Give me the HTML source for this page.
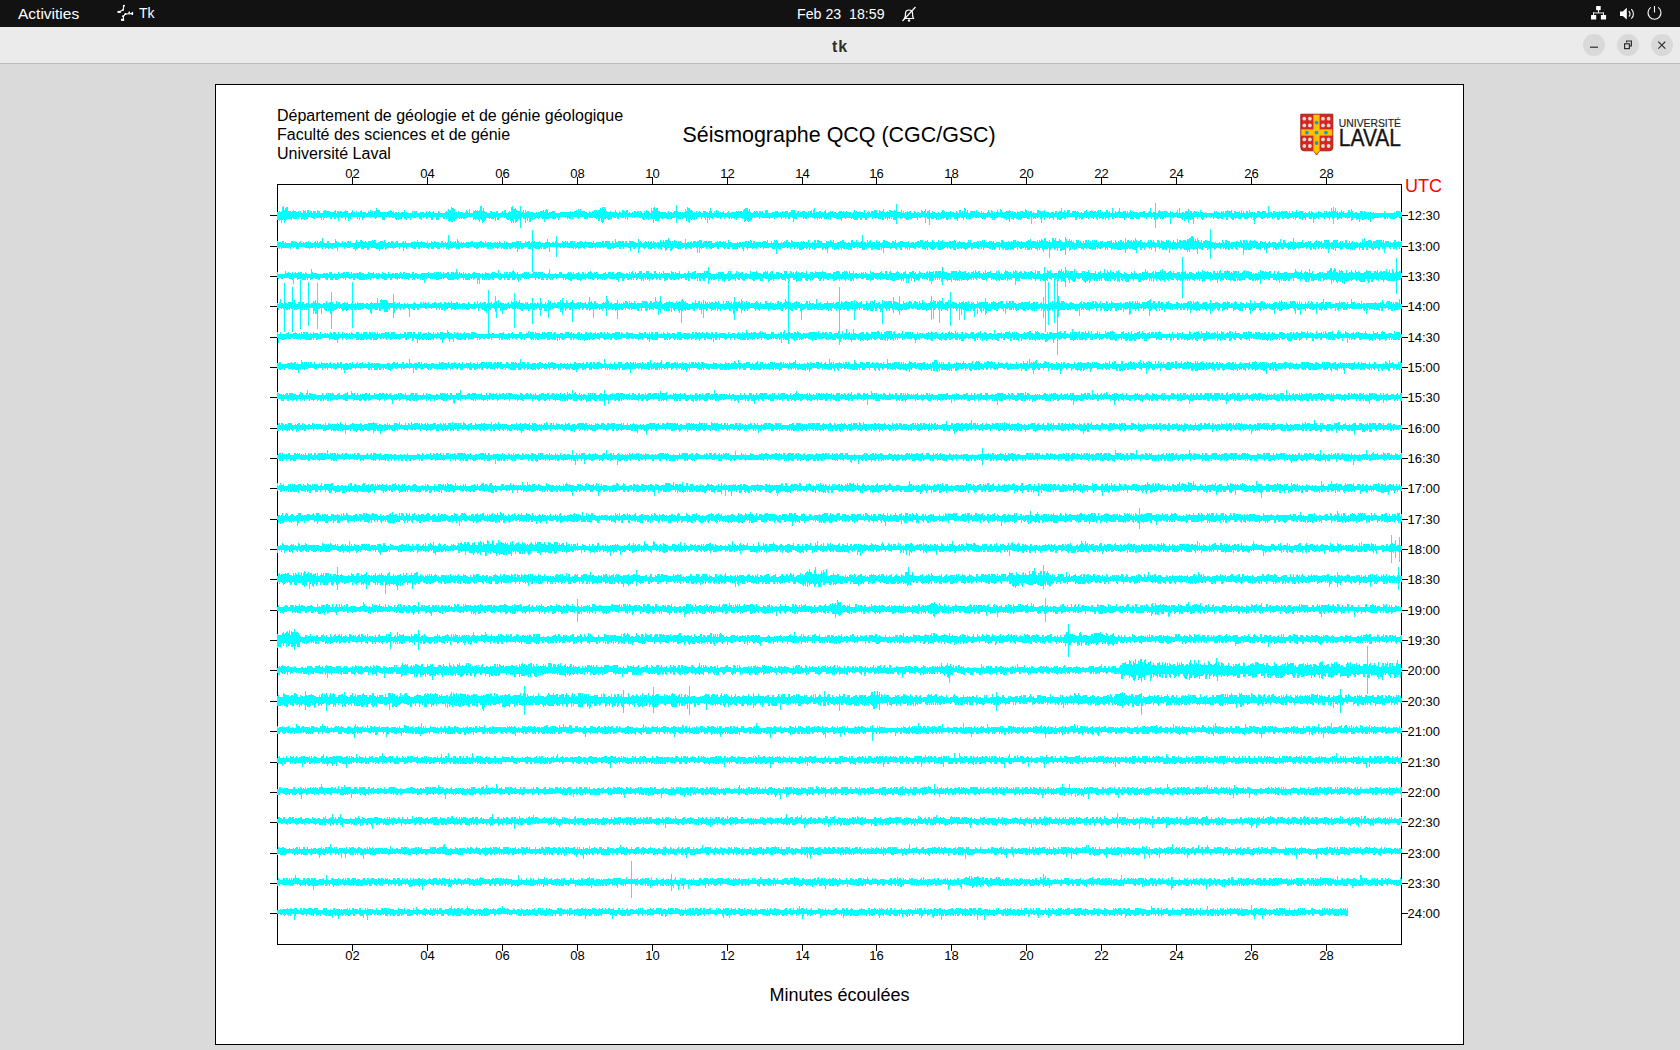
<!DOCTYPE html>
<html><head><meta charset="utf-8">
<style>
html,body{margin:0;padding:0;width:1680px;height:1050px;overflow:hidden;background:#dadada;font-family:"Liberation Sans",sans-serif;}
#topbar{position:absolute;left:0;top:0;width:1680px;height:27px;background:#121212;color:#fff;}
#titlebar{position:absolute;left:0;top:27px;width:1680px;height:36px;background:#ebebeb;border-bottom:1px solid #bdbdbd;}
.t{position:absolute;white-space:pre;line-height:1;}
#canvas{position:absolute;left:215px;top:84px;width:1247px;height:959px;border:1px solid #000;background:#fff;}
svg{position:absolute;left:0;top:0;}
</style></head><body>
<div id="topbar">
  <div class="t" style="left:18px;top:6px;font-size:15.5px;color:#fff">Activities</div>
  <svg style="left:112px;top:2px" width="26" height="22" viewBox="0 0 26 22">
    <g fill="#fff">
      <rect x="10.9" y="2.9" width="1.9" height="1.8"/>
      <rect x="5.5" y="8.9" width="3.3" height="2"/>
      <rect x="19.7" y="9.9" width="1.4" height="3.1"/>
      <circle cx="17.2" cy="10.4" r="0.9"/>
      <circle cx="11.1" cy="7.9" r="0.9"/>
      <circle cx="13.4" cy="12" r="1"/>
      <rect x="10.1" y="13.4" width="1.6" height="1.7"/>
      <rect x="9" y="16.8" width="3.2" height="2.1"/>
    </g>
    <g stroke="#fff" stroke-width="1.1" fill="none">
      <path d="M11.7 4.4L11.1 7.9L7.5 9.8"/>
      <path d="M13.4 12L20.2 11.6"/>
      <path d="M13.4 12L11.4 14.3V17.5"/>
    </g>
  </svg>
  <div class="t" style="left:139px;top:6px;font-size:14px;color:#fff">Tk</div>
  <div class="t" style="left:797px;top:7px;font-size:14.2px;color:#fff">Feb 23  18:59</div>
  <svg style="left:900px;top:5px" width="18" height="18" viewBox="0 0 18 18">
    <g stroke="#fff" stroke-width="1.2" fill="none">
      <path d="M4.5 13.5c1-1.5 1-3 1-5 0-2 1.5-3.5 3.5-3.5s3.5 1.5 3.5 3.5c0 2 0 3.5 1 5z"/>
      <path d="M2.5 16L15.5 2"/>
    </g>
    <circle cx="9" cy="15.5" r="1.2" fill="#fff"/>
  </svg>
  <svg style="left:1588px;top:4px" width="80" height="20" viewBox="0 0 80 20">
    <g fill="#fff">
      <rect x="8.1" y="2" width="4.6" height="4.2" rx="0.6"/>
      <rect x="3" y="11" width="5.2" height="4.6" rx="0.6"/>
      <rect x="12.9" y="11" width="5.2" height="4.6" rx="0.6"/>
      <rect x="10" y="6" width="0.9" height="3"/>
      <rect x="5" y="8.5" width="10.9" height="0.9"/>
      <rect x="5" y="8.5" width="0.9" height="3"/>
      <rect x="15" y="8.5" width="0.9" height="3"/>
      <path d="M32 7.5h2.8l4-3.7v11.8l-4-3.7h-2.8z"/>
    </g>
    <g stroke="#fff" fill="none" stroke-width="1.1">
      <path d="M40.8 7.3a3.3 3.3 0 0 1 0 5.2"/>
      <path d="M43.3 5.2a6.3 6.3 0 0 1 0 9.4"/>
      <path d="M70.2 3.4A6.5 6.5 0 1 1 62.8 3.4"/>
      <path d="M66.5 2v6.5"/>
    </g>
  </svg>
</div>
<div id="titlebar">
  <div class="t" style="left:832px;top:12px;font-size:16px;font-weight:bold;letter-spacing:1px;color:#2e2e2e">tk</div>
  <div style="position:absolute;left:1583px;top:7px;width:22px;height:22px;border-radius:50%;background:#d9d9d9"></div>
  <div style="position:absolute;left:1617px;top:7px;width:22px;height:22px;border-radius:50%;background:#d9d9d9"></div>
  <div style="position:absolute;left:1651px;top:7px;width:22px;height:22px;border-radius:50%;background:#d9d9d9"></div>
  <svg style="left:1583px;top:7px" width="90" height="22" viewBox="0 0 90 22">
    <g stroke="#2e2e2e" fill="none" stroke-width="1.2">
      <path d="M7 13.2h8"/>
      <rect x="41.6" y="9.8" width="4.8" height="4.8"/>
      <path d="M43.6 8.4v-1.4h4.8v4.8h-1.4"/>
      <path d="M75.3 7.6l7 7M82.3 7.6l-7 7"/>
    </g>
  </svg>
</div>
<div id="canvas"></div>
<svg width="1680" height="1050" viewBox="0 0 1680 1050" style="left:0;top:0">
<path fill="#000" shape-rendering="crispEdges" d="M277,184h1125v1h-1125zM277,184h1V945h-1zM1401,184h1V944h-1zM277,944h1125v1h-1125z"/>
<g stroke="#000" stroke-width="1" fill="none" shape-rendering="crispEdges">
<path d="M352.5,184v-7M352.5,944v7M427.5,184v-7M427.5,944v7M502.5,184v-7M502.5,944v7M577.5,184v-7M577.5,944v7M652.5,184v-7M652.5,944v7M727.5,184v-7M727.5,944v7M802.5,184v-7M802.5,944v7M876.5,184v-7M876.5,944v7M951.5,184v-7M951.5,944v7M1026.5,184v-7M1026.5,944v7M1101.5,184v-7M1101.5,944v7M1176.5,184v-7M1176.5,944v7M1251.5,184v-7M1251.5,944v7M1326.5,184v-7M1326.5,944v7M277,215.5h-7M1401,215.5h7M277,246.5h-7M1401,246.5h7M277,276.5h-7M1401,276.5h7M277,306.5h-7M1401,306.5h7M277,337.5h-7M1401,337.5h7M277,367.5h-7M1401,367.5h7M277,397.5h-7M1401,397.5h7M277,428.5h-7M1401,428.5h7M277,458.5h-7M1401,458.5h7M277,488.5h-7M1401,488.5h7M277,519.5h-7M1401,519.5h7M277,549.5h-7M1401,549.5h7M277,579.5h-7M1401,579.5h7M277,610.5h-7M1401,610.5h7M277,640.5h-7M1401,640.5h7M277,670.5h-7M1401,670.5h7M277,701.5h-7M1401,701.5h7M277,731.5h-7M1401,731.5h7M277,762.5h-7M1401,762.5h7M277,792.5h-7M1401,792.5h7M277,822.5h-7M1401,822.5h7M277,853.5h-7M1401,853.5h7M277,883.5h-7M1401,883.5h7M277,913.5h-7M1401,913.5h7"/>
</g>
<g fill="#00ffff" shape-rendering="crispEdges">
<path d="M277,212h2v-1h1v1h1v-1h1v-4h1v-1h1v4h1v-2h1v-1h2v4h3v1h1v-1h1v-1h1v1h2v1h2v-1h1v2h1v-2h1v2h2v-3h1v1h1v-1h1v3h1v-3h2v3h1v-2h2v2h1v-2h3v2h1v-3h1v1h2v2h3v-2h1v-1h2v1h4v1h4v-1h1v-1h1v3h1v-2h2v1h1v-1h2v1h2v-1h1v-1h1v1h2v2h3v-1h1v-2h1v2h2v1h1v-2h1v2h1v-1h1v1h1v-2h1v-1h1v2h4v1h2v-2h1v1h1v-2h1v2h1v-1h1v2h1v-2h2v-3h1v2h3v2h8v-1h2v-1h1v1h1v1h1v-1h1v2h1v-1h2v1h1v-1h1v1h2v-1h3v-2h1v3h1v-1h1v1h5v-2h1v2h1v-2h1v1h1v-1h1v2h3v-1h4v1h2v-2h1v2h1v-1h1v-1h1v1h1v1h1v-1h1v-1h1v2h4v-2h1v1h1v1h5v-1h1v-1h1v1h1v-3h1v2h1v-1h1v-3h1v1h2v1h1v3h2v1h1v-2h1v1h4v1h2v-1h1v-2h1v1h1v2h1v-4h1v4h3v-2h2v-1h1v1h1v-1h1v1h1v-1h1v-4h2v5h1v-3h1v3h1v1h2v1h3v-2h2v1h3v1h1v-2h2v2h3v-1h1v-1h1v2h1v-3h2v3h2v-1h1v-1h1v1h1v-5h1v-1h1v3h2v-1h1v2h1v1h4v2h1v-1h1v-2h1v3h1v-3h1v2h1v-1h2v1h4v1h3v-1h1v1h1v-1h2v-1h3v-1h1v2h1v-2h1v-1h1v1h1v3h1v-1h3v-1h3v2h5v-1h10v-1h1v1h3v-1h2v-1h1v3h1v-4h1v2h1v-2h1v2h4v1h2v1h2v-2h1v1h1v1h1v-2h1v1h1v-2h3v2h1v-2h2v-2h1v1h1v-2h1v2h1v-2h1v2h1v2h1v1h3v-1h1v1h4v-2h1v2h1v1h2v-2h1v1h1v1h1v-3h2v1h1v1h1v-2h2v3h1v-1h1v1h2v-1h1v1h1v-2h2v1h1v-1h2v2h1v-2h1v1h1v1h2v-2h1v1h1v-2h1v1h2v1h1v1h1v-5h1v3h1v-3h1v-1h1v2h1v-1h2v3h2v1h6v1h1v-1h1v-1h1v2h1v-1h2v1h1v-1h1v-1h4v1h3v1h1v-1h1v1h1v-1h1v-3h1v2h1v-4h1v1h2v2h2v1h1v2h1v-1h1v1h1v-2h1v2h1v-1h1v-1h1v1h1v1h2v-2h3v1h2v1h1v-2h1v-3h1v3h1v2h2v-2h1v2h1v-3h1v1h2v2h1v-1h1v1h1v-1h1v-1h1v2h3v-1h1v-1h1v2h2v-1h5v-1h1v1h1v-1h1v1h1v-1h2v1h1v-2h1v-1h1v-1h3v3h1v-2h1v3h1v1h2v-1h1v-1h1v1h1v-1h2v2h1v-2h2v1h1v-1h1v2h2v-3h3v3h4v-1h3v-1h3v1h1v1h1v-1h1v1h1v-2h1v1h2v-1h3v2h1v-1h2v-2h4v2h1v1h1v-2h2v2h1v-1h2v-1h3v1h2v1h1v-2h1v2h1v-2h1v-1h1v3h1v-3h1v-2h1v5h1v-1h3v-1h2v2h1v-1h1v1h1v-2h1v-1h1v3h2v-1h2v-1h1v1h1v-1h1v2h1v-1h2v1h2v-1h1v-1h3v1h1v-1h1v1h2v-1h1v1h4v1h2v-1h1v-2h1v2h1v-1h1v1h2v-1h1v1h3v1h1v-3h1v3h2v-1h1v-1h1v1h1v1h1v-2h2v1h1v-2h3v3h2v-3h1v1h1v1h1v-1h1v-2h1v3h1v1h1v-1h1v-1h1v1h1v-2h2v1h3v-1h1v1h1v2h1v-1h4v-2h1v3h1v-2h1v2h1v-1h2v-1h1v1h1v-1h2v2h3v-2h1v1h1v1h1v-1h2v1h2v-3h1v1h1v1h1v-1h1v-2h1v4h1v-2h2v-1h1v3h2v-2h1v1h2v1h3v-1h1v1h2v-1h1v-2h2v1h1v2h1v-1h4v-1h1v1h3v1h2v-2h1v1h1v1h1v-3h2v3h1v-2h1v2h1v-5h1v1h1v3h1v-2h1v3h2v-2h5v1h1v-2h1v2h3v1h1v-2h1v2h1v-1h1v1h3v-1h1v-2h1v2h1v1h1v-3h1v1h1v2h1v-1h1v1h1v-1h1v-2h1v2h1v1h1v-4h1v1h1v2h1v1h1v-1h2v-1h3v-1h1v1h1v2h1v-2h1v2h1v-1h2v1h1v-2h1v1h2v-1h3v1h2v-3h1v1h1v3h1v-2h1v1h1v-1h2v2h1v-1h1v1h3v-3h2v1h2v1h1v-1h1v1h1v-2h1v2h4v1h2v-1h3v1h1v-2h2v2h1v-1h1v-1h2v-3h1v4h2v-2h1v3h1v-1h1v-2h3v3h2v-2h4v1h1v-1h1v1h1v1h2v-1h1v1h2v-2h2v-1h1v2h2v-1h2v-1h1v1h1v1h1v-1h2v1h1v-1h1v-1h1v3h1v-3h1v3h1v-1h1v1h1v-1h2v-2h2v2h1v-1h1v2h2v-5h1v5h2v-2h1v1h2v-1h1v-3h1v4h3v-1h3v2h1v-2h1v2h1v-1h1v-2h1v2h1v-1h1v1h5v1h1v-1h4v-1h2v2h3v-1h1v-1h1v-3h1v4h1v1h1v-1h3v1h2v-2h1v-1h1v1h1v1h1v-1h1v2h1v-2h3v1h1v1h2v-2h1v1h2v1h3v-1h1v-2h1v3h1v-5h1v5h2v-1h2v1h1v-2h3v-2h1v4h1v-2h2v2h2v-2h1v1h1v-1h1v2h1v-1h1v1h1v-3h1v2h2v1h2v-1h1v1h8v-2h1v1h1v-1h1v2h1v-1h1v1h2v-2h1v1h1v-1h1v2h1v-2h2v-1h1v1h3v-1h1v3h2v-2h2v1h3v-1h1v2h1v-3h1v3h1v-2h1v2h2v-2h2v2h1v-3h1v2h3v1h4v-2h3v1h2v-1h4v2h2v-1h4v1h1v-2h2v2h1v-1h3v-1h1v1h1v-1h2v1h1v-1h1v1h1v-1h1v1h1v1h1v-2h1v2h2v-2h1v2h1v-1h2v-2h1v2h2v-1h4v2h2v-1h1v1h2v-1h1v-1h1v2h1v-2h1v1h1v1h3v-1h1v1h1v-2h1v1h3v1h2v-2h1v2h1v-2h1v2h1v-1h1v-1h1v1h1v-4h1v3h1v-4h1v4h1v-3h1v4h1v-1h1v2h1v-1h2v-2h1v2h1v-1h1v2h3v-1h1v-2h2v2h1v-3h1v2h1v2h2v-1h2v1h3v-2h3v2h1v-2h1v1h2v1h1v-1h1v1h1v-1h2v1h1v-1h1v1h10v-2h1v2h9v-1h1v1h1v-2h4v1h2v5h-1v2h-1v-1h-1v-1h-2v1h-2v1h-5v-1h-1v-1h-1v2h-1v-2h-1v2h-2v-2h-3v1h-1v-1h-1v1h-5v1h-2v-1h-1v4h-1v-4h-1v2h-1v-2h-1v1h-3v1h-2v-3h-1v2h-1v3h-1v-3h-2v1h-1v-2h-3v2h-1v1h-1v-4h-1v1h-2v1h-1v-1h-2v-1h-3v2h-1v-1h-2v1h-1v1h-1v-3h-2v1h-1v6h-1v-5h-1v-2h-2v3h-1v-2h-2v-1h-2v2h-1v-2h-1v1h-1v-1h-3v2h-1v-1h-2v1h-2v4h-1v-6h-1v2h-3v-2h-3v3h-1v-2h-2v2h-1v-3h-1v2h-2v-2h-1v1h-2v2h-1v-3h-1v2h-1v-2h-1v1h-3v1h-2v-1h-3v1h-2v-1h-1v-1h-1v2h-1v1h-2v-3h-2v1h-1v-1h-1v2h-1v-2h-2v1h-2v1h-1v-2h-1v1h-3v1h-2v-1h-1v-1h-2v1h-2v1h-1v-2h-1v3h-1v-3h-1v2h-1v-2h-2v1h-1v1h-4v-2h-2v1h-1v1h-3v-1h-2v1h-1v-1h-1v2h-2v-1h-1v-1h-1v-1h-2v3h-2v-3h-3v2h-2v-1h-2v1h-2v-1h-1v-1h-1v1h-1v1h-1v-2h-2v1h-1v-1h-3v1h-1v-1h-2v2h-1v1h-1v-1h-1v-2h-3v2h-1v-2h-3v2h-2v-1h-1v2h-1v-1h-1v4h-1v-4h-3v2h-1v-4h-1v3h-1v-1h-1v-1h-4v-1h-3v1h-2v-1h-1v7h-1v-7h-4v1h-1v-1h-1v2h-2v-1h-1v1h-1v-2h-2v2h-2v-1h-1v2h-1v-3h-2v2h-1v-2h-4v2h-1v-2h-1v1h-1v-1h-4v2h-4v-1h-1v-1h-1v2h-4v-2h-1v1h-1v-1h-1v1h-2v2h-1v-2h-5v-1h-1v1h-3v-1h-1v2h-2v-2h-3v3h-1v-2h-2v2h-1v-3h-1v2h-2v-1h-2v1h-1v-2h-1v3h-1v-1h-1v-2h-2v2h-1v-1h-2v-1h-1v1h-1v1h-1v-2h-1v1h-2v-1h-1v1h-1v1h-1v1h-1v-2h-1v1h-1v-2h-1v1h-1v2h-2v-3h-7v1h-1v-1h-1v2h-2v-1h-2v1h-1v1h-2v-1h-1v1h-1v-3h-3v3h-1v-2h-3v1h-1v-2h-1v1h-1v-1h-2v3h-1v-3h-1v1h-1v5h-1v-4h-1v-2h-2v1h-1v-1h-1v2h-1v-1h-1v1h-1v-2h-1v7h-1v-7h-1v2h-3v-1h-5v1h-1v1h-1v-1h-1v1h-1v-1h-2v-1h-2v2h-1v-1h-2v-2h-1v5h-1v-3h-1v-2h-1v3h-1v-2h-1v1h-1v-1h-3v-1h-3v1h-3v2h-1v-2h-1v2h-1v-2h-2v-1h-2v1h-1v-1h-1v2h-2v-1h-1v1h-1v-1h-1v-1h-2v1h-1v-1h-1v1h-2v-1h-1v1h-3v1h-3v-2h-1v2h-1v-2h-2v3h-1v-2h-2v-1h-1v1h-2v3h-1v-2h-3v-2h-3v2h-1v-2h-1v2h-1v1h-2v-3h-1v1h-1v1h-1v-1h-1v1h-2v-2h-1v3h-1v-3h-1v3h-1v-2h-2v1h-3v-1h-1v-1h-1v2h-2v-2h-1v6h-1v-5h-1v-1h-3v1h-2v-1h-1v3h-1v-2h-5v1h-2v-1h-1v2h-3v-1h-1v-1h-1v-1h-1v1h-2v1h-1v-2h-1v1h-3v2h-3v-3h-1v2h-1v-2h-1v2h-1v-1h-1v2h-1v-2h-1v1h-1v-2h-1v3h-2v-3h-1v2h-3v-1h-2v1h-1v-1h-1v-1h-1v2h-1v-2h-3v1h-2v2h-2v-2h-3v2h-2v-2h-2v2h-4v-1h-1v-1h-1v1h-1v-1h-5v1h-1v-1h-3v3h-1v-2h-1v-1h-1v1h-3v-1h-3v-1h-2v3h-1v-3h-1v2h-1v-1h-1v1h-3v-2h-2v2h-1v-1h-1v1h-1v-1h-1v2h-1v-2h-2v1h-1v-1h-2v-1h-3v1h-1v-1h-1v2h-2v-1h-1v1h-1v-2h-6v2h-3v3h-1v-4h-1v-1h-2v2h-2v-2h-2v2h-1v-2h-1v1h-1v-1h-1v2h-1v-2h-3v1h-2v-1h-1v2h-1v-2h-1v1h-3v1h-1v-1h-8v-1h-1v2h-1v-2h-3v1h-2v-1h-1v1h-1v2h-1v1h-2v1h-1v-1h-1v-1h-1v1h-1v1h-1v-4h-1v1h-1v-1h-2v-1h-1v1h-2v2h-1v-3h-1v2h-1v-1h-2v1h-1v-2h-1v2h-1v-1h-1v-1h-3v2h-1v-2h-2v1h-1v1h-1v-2h-1v1h-3v-1h-2v1h-1v1h-1v-1h-2v2h-1v-2h-1v5h-1v-6h-1v3h-1v-2h-1v-1h-2v2h-1v-2h-3v1h-1v1h-1v-2h-1v3h-2v-1h-1v1h-1v-1h-1v4h-1v-1h-1v-4h-1v3h-1v-3h-3v1h-1v-1h-1v1h-3v-1h-2v-1h-1v1h-3v1h-2v-2h-1v2h-3v-1h-3v1h-2v-1h-1v1h-1v2h-4v-2h-1v4h-1v-4h-1v-1h-1v1h-1v-2h-1v3h-1v-2h-1v1h-1v-2h-1v3h-2v-1h-1v-2h-1v1h-2v-1h-4v1h-1v-1h-1v1h-1v-1h-4v3h-1v-3h-1v2h-1v-2h-1v1h-3v-1h-2v2h-2v-2h-1v1h-3v-1h-1v2h-2v1h-2v-1h-1v-1h-1v1h-2v3h-1v1h-1v-1h-1v-4h-1v3h-2v-3h-1v1h-1v-1h-2v-1h-1v1h-4v-1h-1v2h-4v-2h-4v1h-1v1h-1v-1h-1v-1h-4v2h-1v-2h-1v2h-2v-1h-1v1h-1v-2h-1v1h-1v-1h-5v1h-1v2h-1v-2h-1v-1h-1v2h-4v-1h-3v1h-4v3h-1v-3h-2v-1h-1v-1h-1v1h-1v1h-1v-1h-3v1h-1v-2h-1v3h-1v-1h-1v3h-2v-4h-1v3h-1v-3h-1v5h-1v-4h-2v-2h-1v1h-1v1h-1v-1h-1v1h-1v2h-1v1h-1v1h-1v-4h-1v4h-1v-2h-1v2h-1v-2h-1v-2h-1v1h-2v-1h-1v-2h-1v1h-1v-1h-3v1h-2v2h-2v-3h-1v4h-1v-3h-1v1h-3v-1h-1v1h-1v-1h-3v2h-1v1h-1v1h-1v1h-1v-3h-1v-1h-1v3h-1v-2h-1v-1h-2v1h-1v-1h-1v1h-1v-3h-5v1h-3v1h-2v-1h-1v1h-1v-1h-1v1h-1v-1h-2v1h-2v2h-2v1h-2v-1h-1v1h-1v-1h-1v-3h-1v1h-1v-2h-1v2h-2v-2h-4v3h-3v-3h-3v3h-2v-2h-1v-1h-2v1h-1v1h-1v-2h-2v1h-1v-1h-1v3h-1v-1h-2v-2h-3v1h-4v-1h-1v3h-1v-2h-3v2h-1v-1h-2v-2h-2v2h-3v1h-1v-1h-1v1h-1v-1h-1v-2h-1v1h-2v-1h-2v1h-1v-1h-4v3h-3v-3h-5v1h-1v1h-1v-1h-1v-1h-3v1h-1v-1h-5v1h-2v2h-1v-3h-2v3h-1v-3h-1v2h-1v-2h-6v2h-1v-1h-1v3h-1v-3h-1v-1h-1v3h-1v-3h-2v1h-2v-1h-2v4h-1v-3h-1v-1h-1v2h-2v-2h-2v2h-2v-2h-3v1h-1v-1h-1v1h-1v2h-1v-3h-1v3h-1v-2h-1v-1h-1v1h-3v-1h-1v2h-2v-1h-2v-1h-3v2h-2v-2h-1v3h-1v-1h-2v1h-1v-3h-2v2h-1v-2h-1v2h-4v-1h-1v2h-1v-1h-4v1h-1v1h-1v2h-1v-4h-1v1h-1v3h-1v-3h-1v1h-1v-1h-2z"/>
<path d="M277,241h1v1h3v1h1v-2h2v2h1v-1h1v1h5v-2h2v1h1v-1h1v1h2v1h2v-1h1v-1h1v2h2v-1h1v1h1v-1h3v-1h1v2h1v-1h1v1h3v-1h1v-1h1v2h1v-2h1v2h1v-1h1v-1h2v-3h1v4h1v1h3v-2h2v2h6v-4h1v2h1v2h1v-1h1v1h3v-2h1v2h1v-1h2v1h1v-2h2v1h1v-1h1v2h4v-1h1v-2h1v2h3v-2h2v1h1v1h2v-1h1v1h1v1h1v-2h4v-1h1v1h1v-1h2v3h2v-1h2v-1h3v1h1v-2h1v2h1v1h2v-1h2v1h1v-2h2v1h1v1h1v-1h1v-1h2v2h4v-1h1v-1h1v2h1v-2h1v2h5v-1h3v-1h1v1h2v-2h1v2h3v-1h1v1h3v1h2v-2h1v2h3v-2h1v1h1v1h1v-2h1v1h4v1h2v-2h2v2h2v-1h1v1h1v-1h2v1h1v-2h1v2h1v-1h1v1h1v-1h1v-1h1v2h1v-4h1v2h1v2h2v-1h1v1h1v-1h1v1h2v-1h3v1h1v-1h1v-1h2v2h1v-1h1v1h1v-1h1v1h1v-1h2v-1h2v1h2v1h1v-2h1v2h1v-1h2v1h1v-1h1v1h3v-1h2v1h1v-1h1v1h1v-2h1v1h1v1h3v-2h1v2h1v-1h2v1h4v-1h4v-1h3v2h1v-2h1v2h4v-2h1v1h2v-1h2v2h1v-1h3v-1h1v1h4v-1h1v1h1v1h4v-1h2v-3h1v3h2v1h2v-1h2v1h1v-2h1v-2h1v3h1v1h4v-2h1v1h2v-1h1v1h1v-1h1v2h2v-2h3v2h1v-2h1v2h2v-1h3v-1h2v1h1v1h1v-1h1v-1h1v1h6v1h1v-2h1v2h2v-1h5v1h1v-2h2v2h1v-2h5v2h2v-2h1v2h2v-4h1v3h2v-1h3v1h1v-1h2v2h1v-2h2v2h2v-2h5v1h2v1h2v-1h2v-1h1v1h1v1h2v-1h1v-1h1v1h1v1h1v-2h1v2h1v-1h1v-1h1v2h1v-2h1v1h2v1h1v-1h2v1h1v-3h1v1h1v1h1v-2h1v2h1v-2h3v-2h1v2h1v1h1v2h1v-2h1v2h1v-3h1v1h2v2h1v-2h1v1h1v-1h1v1h1v1h3v-4h1v4h1v-1h2v1h1v-1h1v-1h1v2h1v-2h3v1h1v-1h2v-1h3v3h1v-1h1v-1h3v1h1v-1h4v2h3v-1h2v-1h1v1h1v-1h2v1h2v-1h1v1h1v-1h1v2h2v-3h1v2h3v1h5v-1h1v1h1v-1h2v1h1v-1h3v-1h2v2h1v-2h1v1h1v-2h1v1h1v2h1v-2h2v2h1v-1h5v1h1v-1h1v-1h3v1h1v-2h1v3h3v-2h1v2h1v-1h1v-2h1v1h1v2h1v-2h1v2h3v-1h1v1h1v-1h1v-1h1v1h1v-2h2v2h2v1h1v-3h1v1h1v1h6v1h1v-1h1v-1h1v1h1v-1h1v1h1v1h1v-1h2v-2h1v3h3v-1h1v1h1v-3h2v3h1v-3h2v1h3v2h4v-2h1v1h1v-1h1v1h1v-2h1v1h1v1h1v-2h1v3h3v-1h3v-1h2v-1h2v2h2v1h2v-1h1v1h2v-3h2v2h3v-2h1v2h4v-1h2v2h1v-1h2v1h1v-3h1v2h1v-1h1v-1h1v3h1v-1h3v1h1v-3h1v2h2v-1h1v2h2v-1h1v-2h2v1h3v1h2v1h2v-2h2v1h1v-2h1v3h2v-1h2v-1h3v1h5v-1h1v2h2v-1h3v1h1v-1h2v-1h2v1h1v-2h3v3h1v-1h1v-1h2v-1h1v2h1v1h1v-1h2v-2h1v1h1v1h1v1h1v-1h2v-2h1v3h1v-2h2v-1h1v2h6v-1h2v1h1v-1h2v-1h1v1h1v2h1v-1h2v-1h1v1h5v1h2v-1h1v-2h1v2h1v-2h1v3h2v-1h4v-1h2v2h1v-2h1v1h1v-2h1v2h1v-2h1v3h1v-1h1v1h1v-1h1v-1h3v1h1v-1h1v2h2v-1h4v1h1v-3h2v1h1v1h4v-1h1v1h2v-1h1v1h1v-2h3v2h1v-1h2v1h2v-1h1v1h3v1h1v-2h2v-1h1v1h1v-2h1v3h1v-1h4v1h1v-2h1v2h1v-2h1v1h1v-2h1v1h1v1h1v-3h2v3h2v1h4v-4h2v2h1v-2h1v3h3v-2h1v1h1v1h1v1h4v-3h1v2h2v-2h1v2h1v-1h1v2h1v-1h1v2h2v-3h3v3h1v-2h1v1h1v1h1v-2h1v2h1v-3h2v2h1v-2h1v3h1v-2h1v2h1v-3h1v3h1v-3h1v1h1v-1h1v3h1v-1h1v1h1v-2h1v1h1v-1h1v2h1v-1h3v-1h4v-1h1v3h1v-1h1v1h1v-3h1v2h1v1h1v-2h1v1h1v-2h2v2h1v-1h1v2h1v-5h1v4h1v-2h2v1h2v-1h1v2h1v-2h1v1h1v-3h1v2h1v3h1v-2h2v-1h2v2h1v1h1v-1h1v1h2v-1h1v-2h1v2h1v-2h2v2h1v-2h1v2h1v1h2v-3h2v1h1v2h1v-3h1v1h2v1h2v-2h1v1h1v-1h1v3h1v-2h1v2h1v-1h1v-2h1v2h2v1h1v-4h1v3h1v-2h2v1h2v-1h3v1h1v-2h2v-1h2v-2h2v1h1v4h1v-2h1v2h1v-3h1v2h1v2h2v-2h1v3h1v-2h2v-1h2v1h3v2h1v-1h3v1h1v-1h1v1h3v-1h1v1h2v-3h1v2h1v1h1v-3h2v1h3v2h1v-1h5v-1h2v1h2v-2h1v1h1v2h1v-1h1v-2h1v3h1v-3h1v1h1v2h1v-2h1v-1h1v1h3v-1h1v1h2v1h1v1h2v-2h2v1h3v-1h1v2h2v-1h1v-1h1v2h2v-1h4v1h2v-1h2v-3h1v4h2v-3h2v2h1v1h2v-1h1v1h1v-2h1v1h2v-4h1v4h2v1h1v-1h5v-2h1v3h2v-1h3v-1h1v1h1v-1h1v2h3v-1h1v-1h1v-1h1v2h1v-1h2v1h1v-1h1v2h2v-3h5v2h1v1h1v-1h2v-2h5v3h1v-1h1v-1h1v2h1v-2h1v2h2v-3h2v3h2v-2h1v2h1v-1h1v-1h1v2h1v-1h1v1h1v-1h1v1h3v-1h1v1h1v-4h1v4h1v-5h1v4h1v-1h2v-1h3v1h1v2h1v-2h3v-1h6v2h1v-2h1v3h1v-2h4v2h1v-1h1v1h2v-1h1v-2h2v2h2v-1h1v1h2v-1h1v7h-1v-1h-1v2h-1v-2h-2v3h-1v-2h-1v1h-2v-2h-2v2h-1v-1h-1v-1h-3v2h-1v4h-1v-5h-1v1h-1v-2h-2v3h-2v-2h-2v1h-1v-1h-1v2h-2v-1h-1v-1h-2v-1h-1v3h-2v-3h-2v3h-2v-2h-2v2h-1v-3h-1v1h-3v2h-1v-3h-1v3h-1v-1h-1v1h-1v-2h-1v1h-3v-1h-1v-1h-2v2h-2v1h-1v-2h-4v3h-1v-3h-1v2h-1v-1h-2v-2h-1v2h-1v4h-1v-5h-1v1h-2v-2h-1v2h-1v-1h-1v1h-1v-2h-1v1h-1v1h-1v-2h-2v3h-1v-1h-2v-2h-1v3h-2v-2h-1v-1h-1v1h-1v1h-1v-2h-2v1h-5v1h-1v-1h-2v1h-2v1h-1v-1h-1v-2h-1v2h-2v1h-1v-2h-2v-1h-2v2h-3v-2h-2v2h-1v-2h-1v3h-2v-2h-1v2h-1v-3h-3v1h-2v1h-1v4h-1v-6h-1v3h-1v-3h-1v1h-1v-1h-1v3h-1v-1h-4v-2h-1v1h-2v-1h-1v2h-1v1h-3v-2h-1v2h-4v-2h-2v-1h-1v1h-1v-1h-1v3h-2v-1h-1v-2h-2v2h-2v-1h-1v2h-2v-3h-1v2h-1v1h-1v-2h-1v1h-1v-2h-1v1h-1v1h-1v-1h-2v-1h-1v1h-1v1h-1v1h-1v-2h-2v-1h-2v1h-1v1h-1v1h-1v-2h-2v-1h-2v3h-2v-1h-2v-1h-1v6h-1v-5h-1v-1h-1v1h-1v1h-1v-1h-3v3h-1v-2h-1v2h-1v-2h-3v-1h-1v-1h-1v1h-1v1h-1v-2h-2v1h-1v1h-1v-1h-3v1h-1v-2h-1v1h-1v4h-1v-5h-1v-1h-1v3h-2v-1h-1v1h-2v-2h-2v1h-1v-2h-3v5h-1v-4h-1v-1h-2v3h-1v-2h-1v1h-1v-1h-1v-1h-2v1h-1v2h-1v-2h-2v2h-2v-3h-2v1h-1v5h-1v-3h-3v-1h-1v-1h-1v1h-2v-1h-1v1h-2v4h-1v-4h-3v1h-5v-1h-3v-1h-1v1h-1v1h-1v-2h-2v-1h-1v3h-1v-2h-1v2h-1v-3h-2v1h-2v1h-2v-1h-1v1h-1v-2h-1v3h-1v-1h-1v1h-2v-1h-3v-1h-2v1h-1v-1h-2v2h-1v-1h-2v-1h-3v-1h-1v2h-2v1h-1v-2h-1v1h-1v-2h-1v3h-1v1h-1v-4h-1v1h-1v-1h-1v4h-1v-1h-3v1h-2v-3h-2v3h-1v-3h-1v1h-1v1h-1v-2h-3v2h-2v-2h-1v1h-4v3h-1v-2h-1v-2h-2v2h-1v-2h-1v3h-1v-2h-2v-1h-3v2h-1v-2h-1v2h-3v-2h-1v2h-1v-3h-1v1h-2v1h-2v-1h-1v-1h-1v3h-1v-3h-1v1h-2v2h-1v-1h-2v1h-1v-3h-1v3h-4v-2h-1v2h-1v-1h-1v-1h-1v-1h-1v3h-1v-3h-3v2h-1v1h-1v-1h-1v1h-1v-3h-1v2h-2v-1h-3v-1h-1v1h-1v2h-1v-3h-1v2h-1v-2h-2v2h-2v-1h-4v1h-1v1h-1v-3h-1v1h-2v1h-2v1h-1v-1h-2v-1h-1v1h-1v-1h-2v1h-2v-2h-1v3h-3v-2h-2v1h-1v-1h-1v-1h-1v2h-1v-2h-2v1h-1v1h-2v1h-4v-1h-1v-2h-1v1h-1v1h-1v1h-2v-1h-2v-1h-1v-1h-1v3h-1v-2h-1v2h-1v-1h-3v-2h-2v1h-2v-1h-2v2h-2v-1h-4v2h-1v-3h-1v3h-1v-2h-1v1h-1v-2h-3v3h-2v-2h-1v-1h-2v3h-1v-1h-1v-1h-4v1h-1v-1h-6v5h-1v-5h-1v2h-1v-3h-1v3h-3v-1h-3v-2h-1v3h-2v-2h-1v-1h-1v1h-1v-1h-1v2h-1v-2h-1v3h-2v-2h-4v-1h-1v2h-1v-2h-2v1h-2v-1h-1v3h-2v-2h-1v2h-1v-1h-2v-2h-1v2h-2v-1h-1v2h-1v-2h-1v-1h-1v3h-1v-1h-2v1h-2v-3h-1v2h-1v-2h-3v1h-1v5h-1v-4h-1v1h-1v-2h-1v1h-1v1h-1v-3h-1v1h-5v1h-1v1h-1v-3h-1v2h-1v-2h-1v1h-1v2h-1v-3h-1v1h-1v1h-1v-1h-2v1h-2v1h-3v-2h-1v1h-1v-2h-1v1h-1v1h-1v-2h-3v2h-1v-2h-1v1h-2v-1h-2v1h-3v-1h-1v3h-1v-1h-2v-1h-1v-1h-2v2h-3v-1h-1v-1h-2v1h-5v1h-1v-2h-2v1h-1v-1h-2v1h-1v1h-1v-1h-3v1h-1v-1h-4v2h-1v-2h-1v-1h-2v4h-1v-2h-1v-2h-2v1h-1v-1h-1v2h-6v-2h-2v2h-3v-2h-1v1h-1v1h-1v-1h-1v-1h-4v2h-2v-2h-3v1h-2v1h-2v-1h-1v-1h-1v1h-1v1h-1v-2h-2v1h-2v1h-1v-1h-1v5h-1v-6h-1v6h-1v-5h-1v-1h-2v1h-1v-1h-1v2h-2v-1h-2v-1h-1v2h-1v1h-1v-3h-1v1h-2v-1h-1v2h-4v-1h-2v-1h-1v1h-1v1h-1v2h-2v-3h-3v2h-1v1h-1v-3h-1v-1h-2v3h-1v-1h-1v-1h-1v1h-1v-1h-1v-1h-2v2h-1v-1h-2v1h-2v-1h-1v1h-1v-2h-2v1h-1v1h-1v-1h-1v-1h-3v2h-1v-1h-1v-1h-2v1h-1v1h-2v-2h-2v4h-1v-3h-2v-1h-4v2h-1v-2h-2v2h-2v-2h-3v1h-2v1h-1v-1h-2v1h-4v-2h-3v1h-1v-1h-2v1h-2v-1h-1v1h-1v-1h-1v2h-1v-2h-2v1h-5v-1h-3v2h-1v-1h-1v-1h-1v1h-3v1h-1v-2h-1v1h-1v1h-1v-2h-1v2h-1v-1h-6v-1h-2v1h-2v-1h-2v1h-1v-1h-2v1h-1v1h-1v-2h-6v5h-1v-5h-1v1h-2v1h-3v-2h-1v2h-1v-1h-1v1h-5v-1h-1v-1h-1v2h-1v-2h-1v2h-3v-2h-4v1h-1v1h-2v-2h-1v2h-2v3h-1v-4h-1v1h-1v-2h-2v1h-2v1h-2v-2h-1v2h-2v-1h-1v1h-2v-1h-1v1h-1v-2h-2v1h-1v1h-1v-1h-2v-1h-1v1h-1v1h-1v-2h-1v2h-1v-2h-1v2h-2v-2h-3v1h-1v-1h-1v1h-1v-1h-2v1h-1v1h-2v-1h-2v-1h-5v1h-3v-1h-3v1h-2v-1h-1v2h-2v-1h-1v1h-1v-2h-1v1h-1v-1h-1v1h-1v1h-1v-1h-4v1h-1v-2h-2v2h-1v-2h-1v1h-1v-1h-1v2h-3v-1h-1v-1h-2v2h-3v-2h-2v2h-1v-1h-2v-1h-1v1h-2v-1h-1v1h-1v-1h-1v2h-2v-2h-2v2h-3v-1h-2v-1h-4v2h-1v-2h-1v1h-1v3h-1v-4h-3v2h-1v-2h-3v1h-2v1h-1v-1h-3v-1h-1v1h-2v1h-1v1h-1v-3h-1v1h-1v1h-3v2h-1v-2h-3v-1h-5v-1h-1v1h-1v2h-2v-2h-3v1h-3v-2h-1v1h-2v1h-2v2h-1v-2h-2v-2h-3v1h-3v-1h-2v2h-1v-2h-6v4h-1v-3h-3v-1h-1v2h-2v-1h-2v1h-1v-1h-2v1h-1v-2h-2v2h-1v-1h-1v-1h-1v1h-3v-1h-1v2h-1v-2h-2v1h-3v1h-1v-1h-4v-1h-6v2h-3v-2h-2v1h-1v-1h-2v2h-1v-2h-1v1h-7v1h-1v-2h-1v2h-1v-1h-2z"/>
<path d="M277,272h1v2h7v-3h1v2h2v-1h1v1h2v1h1v-2h1v2h1v-1h1v-1h1v1h2v-1h1v1h1v-1h2v2h1v-1h1v1h1v-2h1v1h1v1h4v-5h1v3h1v1h4v1h6v-1h2v1h1v-1h2v1h1v-2h3v2h2v-1h1v1h3v-2h1v2h2v-1h2v-1h2v2h1v-2h3v2h2v-2h1v2h1v-1h2v1h1v-1h3v-1h2v2h1v-1h2v1h4v-2h1v1h4v-1h1v2h2v-1h1v1h1v-1h1v1h3v-2h1v1h3v1h2v-2h1v2h3v-1h2v1h1v-1h3v1h1v-1h1v-1h1v1h1v1h1v-2h2v2h1v-1h4v1h2v-2h2v2h1v-1h2v1h4v-1h7v-1h1v2h1v-1h4v-1h1v2h1v-2h3v1h1v-1h1v1h1v1h1v-2h1v1h3v-1h2v2h2v-2h3v1h1v-1h1v-3h1v3h1v2h1v-2h1v1h2v1h1v-2h1v2h1v-1h1v1h2v-1h2v1h2v-1h1v-1h2v1h5v1h2v-1h1v1h2v-2h1v1h3v1h2v-1h1v-1h3v1h3v-3h1v4h1v-1h1v1h3v-2h1v2h1v-2h2v2h1v-2h2v1h1v-2h1v-1h1v2h1v1h1v1h1v-2h1v2h4v-1h2v-1h3v1h1v-1h1v2h3v-1h1v-1h4v1h1v-1h5v2h1v-1h1v1h3v-1h1v-4h1v5h5v-1h1v1h3v-2h3v2h5v-1h1v-1h1v1h1v-1h1v1h1v1h1v-2h1v2h2v-1h2v-1h1v1h1v1h2v-2h2v2h1v-1h1v1h1v-1h1v-1h2v-1h1v1h1v1h1v1h1v-2h1v1h1v-1h2v2h5v-1h2v-1h1v2h2v-2h3v1h1v-1h2v2h2v-1h1v-1h4v1h2v1h3v-1h2v1h1v-2h1v2h1v-2h1v-1h1v2h1v1h1v-2h1v2h1v-1h2v-2h3v3h1v-1h2v1h1v-3h3v3h1v-1h2v1h2v-3h2v2h1v1h2v-2h1v2h1v-1h1v1h1v-3h1v2h6v1h1v-3h1v1h2v2h1v-2h1v1h3v-2h1v3h4v-1h2v1h1v-1h1v-2h1v2h3v-1h2v-1h2v3h1v-1h7v-2h1v2h1v-2h2v2h3v1h5v-1h1v1h1v-2h6v2h3v-1h1v-2h1v2h1v-2h1v2h1v1h3v-1h1v-2h1v3h1v-2h1v2h1v-1h1v-1h2v2h2v-1h2v1h3v-3h1v3h1v-2h4v-1h1v1h1v1h3v1h2v-2h2v-1h1v1h1v-1h1v3h1v-1h1v-1h1v-1h2v3h3v-2h3v1h3v1h2v-3h3v3h2v-1h1v-2h1v1h1v1h1v-1h1v2h1v-2h1v-1h1v2h1v-1h1v1h2v-1h2v1h3v-2h1v3h3v-2h3v1h2v-2h1v1h6v-1h1v1h3v1h1v1h1v-1h3v1h2v-2h3v-1h3v1h1v2h2v-2h2v-1h1v1h1v-1h1v1h1v2h1v-3h1v2h3v-2h1v3h1v-1h2v1h2v-1h1v1h1v-2h1v1h1v-1h1v2h1v-2h1v1h1v1h3v-3h1v2h1v-1h2v1h6v-1h1v-1h1v2h2v1h1v-3h2v3h2v-2h1v-1h1v2h5v-1h1v-1h1v1h1v1h1v1h1v-1h1v1h1v-2h2v-1h1v3h3v-2h3v-1h2v2h1v-1h1v2h2v-1h1v-2h1v1h1v1h4v1h1v-2h1v-1h1v2h1v-2h1v1h3v-1h1v3h1v-3h2v1h1v-1h3v2h1v1h1v-3h1v1h3v1h4v-2h6v2h1v-1h1v-2h1v1h1v1h3v-1h2v2h2v-1h1v1h1v1h1v-2h2v-1h1v2h1v-3h1v2h1v1h1v-2h2v2h2v1h1v-2h1v1h1v-3h1v3h1v-1h3v-1h1v2h5v-2h1v3h1v-4h1v2h1v2h1v-1h1v1h2v-2h1v-2h1v1h2v1h1v2h1v-2h1v2h2v-3h1v1h1v1h1v-2h1v2h2v-1h1v-1h1v1h1v1h2v-2h1v1h2v2h1v-2h1v1h1v-2h2v1h1v1h2v-3h1v4h1v-3h3v3h3v-1h4v-3h1v1h1v1h1v-2h1v3h2v1h1v-1h4v-2h1v-1h1v1h1v-2h1v3h1v-1h1v2h1v1h1v-4h1v3h1v-2h1v2h1v-2h3v3h1v-5h1v4h1v-2h1v2h5v-2h1v2h1v-2h1v2h1v-1h2v-2h1v2h1v1h5v-2h1v3h2v-2h1v1h1v-2h1v3h1v-1h2v-4h1v4h2v-3h1v2h1v1h1v-3h1v3h1v-1h2v1h2v-2h1v1h1v-2h1v2h1v1h2v1h2v-2h1v1h2v1h4v-2h1v1h1v1h1v-3h1v2h2v1h2v-1h2v1h1v-2h3v-3h1v3h1v-1h1v2h4v-1h1v-1h1v3h1v-3h1v1h4v-2h1v2h1v-3h1v4h1v-2h2v2h2v-1h1v-1h2v1h1v1h1v-2h1v2h3v-1h3v2h1v-2h1v-2h1v2h2v-1h1v3h1v-1h1v1h1v-2h3v1h2v1h2v-2h1v1h1v-2h1v2h1v-1h1v2h1v-4h1v3h1v-2h1v1h2v-1h1v1h1v1h1v-1h1v1h1v1h1v-3h2v2h2v-2h1v2h1v-2h1v-1h1v3h3v-2h3v-1h1v1h2v2h1v-1h1v1h1v-2h4v3h1v-3h1v3h1v-1h2v-1h1v-1h1v-1h1v2h1v-1h3v1h3v2h1v-1h1v1h1v-1h2v1h1v-2h1v2h1v-4h1v2h1v-1h2v1h1v-1h1v1h3v-1h2v3h2v-1h1v-2h1v3h2v-2h1v-1h1v2h5v-1h3v1h7v-1h1v-3h1v2h1v1h2v1h1v-1h1v-2h1v3h1v1h1v-2h1v-1h1v1h2v1h1v-4h1v4h2v-2h1v3h4v-1h2v-1h2v2h1v-2h1v2h1v-1h3v-2h2v-1h1v-2h2v4h1v-2h1v-2h1v1h1v3h2v1h1v-3h1v1h1v-1h1v1h1v2h3v-3h1v3h2v-1h2v-2h1v2h1v1h2v-3h1v2h2v-1h1v1h1v1h4v-1h2v-2h1v1h4v2h3v-2h2v1h1v-2h1v3h1v-1h1v-1h2v1h1v-1h2v1h1v-3h1v4h1v-1h1v-2h1v3h2v-4h1v2h1v2h1v-1h1v-1h1v1h2v-1h2v2h1v5h-1v2h-5v-1h-1v2h-8v-1h-1v-1h-1v1h-1v2h-1v-2h-2v-1h-2v2h-1v-1h-2v-1h-2v1h-1v2h-2v-3h-1v3h-1v1h-1v-2h-1v-2h-2v3h-5v-1h-1v-1h-2v1h-1v-1h-1v-1h-2v1h-1v1h-1v-1h-2v1h-2v1h-1v-1h-1v3h-1v-5h-1v4h-1v-3h-1v2h-1v-2h-1v1h-1v2h-1v-1h-1v-2h-2v2h-1v-2h-1v4h-1v-4h-1v-1h-3v1h-1v-1h-1v1h-1v1h-1v-3h-2v3h-1v-1h-1v1h-1v-3h-1v2h-3v1h-3v-3h-1v2h-1v2h-1v-3h-1v3h-2v-2h-1v-2h-1v1h-2v2h-1v-2h-3v-1h-3v3h-1v-3h-1v1h-2v2h-2v-2h-1v1h-1v1h-3v-2h-1v2h-1v-2h-1v4h-1v-3h-1v-1h-1v2h-1v-1h-3v-2h-3v2h-2v-1h-2v-1h-1v2h-1v-1h-3v5h-1v-5h-1v1h-1v1h-1v-1h-1v1h-1v-2h-1v2h-2v-2h-1v1h-2v-1h-1v-1h-3v2h-4v1h-2v-1h-1v1h-1v-3h-1v3h-3v-1h-2v1h-1v-1h-2v-2h-1v2h-1v-1h-1v-1h-1v2h-3v1h-1v-3h-1v1h-1v4h-1v-3h-2v-1h-1v1h-2v-2h-1v3h-1v-2h-5v2h-2v1h-1v-3h-2v2h-1v-2h-1v1h-1v-1h-2v2h-1v-1h-2v-2h-1v1h-1v2h-1v-2h-1v2h-1v-2h-1v1h-1v-1h-1v1h-1v4h-1v-4h-1v1h-1v-1h-2v1h-1v-1h-1v-1h-1v-1h-1v2h-3v-1h-2v2h-1v-1h-1v-1h-2v3h-1v-2h-2v-1h-1v2h-1v-1h-1v-1h-2v2h-1v-3h-1v1h-1v3h-1v-4h-1v3h-1v-2h-1v2h-1v-3h-1v1h-1v1h-1v-1h-1v1h-1v1h-1v-1h-2v2h-3v-3h-4v2h-1v-2h-1v-1h-1v1h-2v3h-3v-1h-1v-2h-2v2h-1v-1h-1v-2h-1v4h-1v-1h-1v1h-1v-4h-1v2h-1v1h-1v-2h-3v2h-1v-2h-1v2h-4v-1h-1v-2h-2v3h-1v-2h-1v2h-1v-2h-1v2h-2v-2h-1v2h-1v-1h-1v-1h-2v2h-1v2h-1v-3h-1v1h-2v2h-1v-1h-1v-1h-1v-1h-1v-2h-2v1h-3v-1h-1v3h-1v1h-2v-1h-1v-1h-1v-1h-1v4h-1v-3h-1v-2h-3v4h-1v-1h-2v1h-1v-3h-1v-1h-1v3h-1v-3h-1v1h-1v1h-2v-2h-2v2h-1v-1h-2v-1h-1v3h-1v-1h-1v-2h-1v3h-2v-1h-1v-1h-1v2h-1v-2h-4v2h-1v-2h-2v-1h-1v2h-1v-1h-3v-1h-1v1h-6v-1h-1v3h-2v-2h-1v2h-1v-3h-4v2h-1v-1h-1v1h-1v-1h-1v2h-1v-3h-1v2h-1v-1h-1v1h-3v-1h-1v2h-1v-1h-2v1h-1v-1h-1v-1h-1v1h-1v-1h-1v1h-1v-2h-3v1h-1v2h-1v-2h-1v1h-3v-1h-1v-1h-1v1h-1v-1h-2v2h-1v-1h-1v-1h-1v2h-1v-2h-1v2h-1v-1h-2v1h-1v1h-1v-1h-1v-2h-1v2h-3v1h-1v-2h-1v2h-1v-1h-1v1h-1v-1h-1v1h-1v-1h-2v-2h-1v4h-1v-2h-3v1h-1v-1h-1v-1h-3v2h-1v1h-1v-4h-1v2h-1v-2h-1v2h-1v-2h-1v2h-1v-2h-1v2h-1v1h-1v3h-1v-3h-2v-3h-1v2h-1v-1h-3v-1h-1v1h-1v-1h-2v2h-1v1h-1v-1h-2v-1h-1v3h-1v-3h-1v-1h-1v3h-1v-3h-1v1h-1v4h-1v-4h-1v4h-1v-5h-2v3h-1v-2h-1v2h-1v-2h-1v-1h-1v2h-4v1h-3v-1h-2v-2h-1v2h-3v-1h-4v-1h-1v2h-1v-1h-2v1h-1v-1h-2v-1h-1v2h-3v1h-1v-2h-1v1h-3v-2h-2v1h-3v-1h-3v1h-2v-1h-2v3h-1v-2h-1v2h-2v-3h-1v2h-1v-1h-2v2h-1v-1h-1v-2h-1v1h-1v1h-1v-1h-1v2h-1v-2h-2v1h-2v1h-2v-2h-1v-1h-1v1h-1v-1h-1v2h-2v-1h-1v-1h-1v1h-1v2h-1v-3h-1v1h-1v2h-2v-2h-1v-1h-4v1h-1v1h-1v-2h-1v3h-1v-2h-2v2h-2v-1h-1v-2h-3v2h-1v1h-4v1h-1v-3h-1v1h-2v-2h-3v3h-1v-2h-2v-1h-1v3h-1v-1h-3v-1h-1v-1h-1v1h-2v-1h-1v1h-3v2h-1v-2h-1v1h-2v1h-1v1h-1v-3h-3v-1h-2v3h-3v-2h-3v1h-1v-1h-1v2h-2v-1h-1v-1h-3v-1h-1v1h-3v2h-2v-1h-1v-1h-1v-1h-1v2h-2v-1h-1v-1h-1v3h-1v-2h-4v1h-1v1h-2v-2h-2v1h-1v2h-1v-2h-1v1h-1v-3h-1v1h-2v2h-1v-3h-1v1h-2v1h-2v-1h-1v1h-1v-1h-1v1h-1v-2h-4v3h-2v-2h-1v-1h-1v3h-2v-3h-1v3h-1v-3h-1v1h-5v-1h-1v3h-2v-3h-1v2h-2v-2h-3v1h-1v-1h-1v1h-1v1h-1v-1h-2v1h-3v-1h-1v1h-2v-1h-1v-1h-1v2h-2v1h-2v-3h-3v2h-2v-2h-1v1h-1v1h-1v-2h-2v1h-1v1h-1v-2h-1v1h-1v2h-1v-2h-1v1h-1v-2h-1v2h-1v-2h-1v3h-1v-2h-1v2h-1v-2h-2v-1h-1v1h-1v1h-1v-2h-2v2h-1v-2h-1v2h-1v-1h-2v1h-2v-2h-2v1h-1v2h-2v-3h-3v4h-1v-2h-2v-2h-1v1h-6v-1h-2v1h-1v1h-2v-2h-1v2h-1v-1h-2v-1h-1v1h-1v1h-1v-2h-2v1h-1v1h-2v-1h-4v-1h-2v2h-1v-1h-3v1h-1v1h-1v-1h-3v-1h-1v-1h-1v1h-3v2h-2v-1h-2v-1h-2v1h-1v-2h-1v2h-1v-2h-6v1h-1v-1h-2v1h-1v1h-1v-2h-1v2h-1v-1h-1v-1h-1v2h-2v-2h-2v2h-3v-2h-1v1h-2v-1h-2v2h-1v-2h-6v1h-3v-1h-1v1h-1v-1h-3v2h-1v-1h-1v3h-1v-2h-1v-2h-1v1h-1v1h-3v-2h-2v2h-3v-2h-2v2h-1v-2h-2v1h-1v1h-2v-1h-1v-1h-4v2h-2v-2h-1v1h-1v1h-2v-2h-1v2h-1v-2h-1v2h-1v-2h-1v2h-1v-2h-2v6h-1v-4h-1v4h-1v-6h-2v1h-1v1h-1v-2h-1v1h-1v-1h-1v2h-5v-2h-1v2h-1v-2h-4v1h-1v1h-1v-1h-3v1h-6v-1h-1v-1h-3v1h-1v-1h-1v1h-3v1h-3v-1h-2v-1h-1v1h-1v-1h-1v1h-1v-1h-3v1h-1v-1h-1v5h-1v-3h-2v-2h-1v2h-1v-2h-1v1h-2v-1h-2v2h-1v-1h-1v1h-1v-2h-3v2h-1v-1h-2v-1h-1v1h-1v-1h-1v1h-2v-1h-1v1h-1v-1h-1v2h-1v-1h-2v-1h-3v2h-2v-2h-3v2h-3v-1h-2v-1h-3v1h-3v-1h-2v1h-1v-1h-2v2h-1v-1h-2v-1h-1v2h-1v-2h-1v2h-6v-1h-2v-1h-2v2h-2v-2h-2v1h-2v-1h-3v2h-1v-2h-1v1h-1v-1h-4v1h-1v1h-3v-2h-2v2h-3v-2h-2v2h-2v-1h-1v-1h-5v2h-2v-1h-3v-1h-2v1h-2v1h-1v-2h-2v2h-1v-2h-1v2h-4v-2h-1v1h-3v1h-1v-2h-3v6h-1v-4h-1v-1h-3v-1h-6v1h-2v-1h-2v1h-1v-1h-1z"/>
<path d="M277,303h1v1h1v-2h1v-3h1v4h2v1h2v-2h1v1h1v1h1v-2h4v2h1v-1h1v-3h1v3h1v1h2v-2h2v1h1v1h1v-2h2v2h2v-1h2v1h3v-1h2v-2h1v1h1v-2h1v3h1v-1h1v1h2v1h3v-1h2v1h1v-3h1v2h2v-1h2v2h1v-2h1v2h3v-3h1v3h1v-2h2v2h2v-1h2v-1h1v1h2v-1h1v2h3v-1h1v1h3v-1h1v1h1v-2h1v1h6v1h2v-1h2v1h2v-1h1v-1h1v1h1v1h1v-1h3v-5h1v5h2v-3h1v-1h1v1h5v1h1v2h5v1h1v-2h1v2h2v-1h2v-1h1v2h4v-1h1v1h2v-1h1v1h5v-1h1v-1h1v1h1v1h4v-2h1v1h1v1h1v-2h1v1h1v-1h1v1h1v1h1v-2h1v2h3v-1h2v-1h2v1h1v1h1v-1h2v-1h1v1h1v1h2v-2h2v1h2v-1h1v1h2v-2h1v2h4v-1h2v2h1v-1h1v1h2v-1h3v1h3v-2h1v1h1v1h4v-2h1v2h2v-3h1v3h1v-1h1v-1h1v2h1v-1h1v-1h3v2h1v-1h4v-1h1v2h1v-1h1v-1h1v-6h1v5h1v3h1v-4h1v3h1v-1h1v1h3v1h1v-1h1v1h1v-1h1v-1h1v2h2v-3h1v1h3v1h1v-2h1v2h1v-1h1v-2h1v3h4v1h1v-2h1v1h1v-1h1v2h2v-1h2v-1h1v2h1v-1h2v1h1v-2h1v1h1v1h1v-3h1v1h1v2h3v-2h1v2h1v-1h1v-1h2v-1h1v3h1v-1h2v-1h1v1h1v1h1v-2h3v1h2v-5h1v4h1v1h2v-3h1v2h1v1h2v-1h2v1h1v-1h1v1h1v1h1v-1h1v-1h2v1h1v-1h1v1h4v-1h1v2h2v-2h1v-5h1v5h1v-1h1v2h1v1h1v-3h2v2h2v1h4v-1h1v-1h1v1h1v-1h1v2h1v-5h1v2h1v3h1v-1h1v-1h1v2h2v-1h4v1h1v-1h1v1h1v-1h1v1h1v-2h1v1h1v-2h2v1h1v2h1v-3h1v2h1v-1h1v1h2v-2h1v2h1v1h1v-1h5v-2h1v1h1v-1h1v1h1v-1h1v1h1v2h1v-1h1v-2h2v2h1v-1h2v-5h1v4h1v3h1v-2h1v-1h1v-5h1v6h1v2h2v-1h2v-1h3v-1h1v1h3v1h3v-2h1v2h1v-1h1v-1h1v1h1v-1h1v-2h1v2h1v1h1v-1h1v2h2v1h4v-2h1v1h2v-3h1v3h2v-2h2v3h1v-2h1v2h1v-4h1v4h1v-3h1v2h1v-1h1v2h1v-2h1v1h1v-1h2v1h2v-2h1v1h1v1h1v-2h1v2h1v1h3v-3h1v3h1v-1h1v-2h1v2h1v-2h1v2h2v-1h1v2h1v-2h4v2h1v-2h1v-1h1v2h1v-4h1v2h1v3h1v-2h1v2h1v-3h1v2h1v-1h2v2h1v-1h4v-1h1v-1h1v1h1v1h1v1h1v-2h1v2h4v-3h2v2h3v-1h1v2h1v-1h2v1h1v-1h1v1h1v-3h2v2h1v-1h2v2h1v-1h1v-1h1v-3h1v2h1v1h1v1h1v-1h2v2h1v-1h2v-1h2v-1h1v1h3v2h1v-1h1v1h3v-1h1v-2h2v3h1v-3h1v2h1v1h1v-1h2v1h2v-5h1v5h1v-1h2v-1h1v2h3v-1h3v-2h1v2h5v-1h1v2h1v-1h1v-1h3v1h1v1h1v-3h1v1h1v1h1v-1h1v-1h2v1h4v-1h2v2h1v-1h1v2h1v-3h1v1h1v1h1v-1h2v-1h1v3h4v-3h1v2h3v-2h1v3h1v-3h1v1h1v-2h1v4h1v-1h2v-1h2v2h2v-1h2v-2h1v1h1v-1h1v1h1v-1h4v3h1v-7h1v4h1v1h3v1h1v-7h1v8h3v-3h1v2h2v-1h1v2h1v-2h1v-1h2v1h1v2h1v-1h1v-2h2v1h2v2h1v-3h1v2h2v-3h1v2h2v2h1v-1h1v1h1v-1h2v-2h1v-5h1v6h1v2h1v-3h2v3h1v-3h1v1h1v1h1v-2h2v-3h1v5h1v1h1v-2h3v-2h1v4h1v-8h1v8h1v-2h3v1h2v1h2v-2h1v1h1v-1h2v-1h1v2h1v-1h2v1h1v-2h1v3h2v-2h1v1h1v-1h1v2h3v-3h1v2h1v-1h6v-4h1v4h2v2h1v-1h1v1h1v-2h2v-1h1v1h2v1h2v-1h2v-1h3v3h3v-3h1v2h2v-2h2v2h1v-2h2v2h2v1h2v-1h3v-1h2v1h1v-1h5v-1h1v3h1v-1h2v-1h2v1h1v-1h2v2h2v-1h1v-1h1v2h1v-7h1v7h1v-1h1v1h2v-1h2v-1h1v2h1v-3h1v3h1v-2h1v1h1v-1h1v-1h1v-5h1v5h1v2h1v-2h3v1h1v2h1v-1h2v1h1v-1h1v-1h2v1h2v1h5v-1h1v-1h1v-1h1v3h1v-2h2v1h2v-1h2v1h1v-1h1v1h1v-2h2v3h1v-3h1v1h1v1h1v1h1v-1h1v-2h1v3h1v-1h3v1h1v-3h1v1h1v2h1v-1h2v-2h1v1h1v1h7v-1h1v1h1v1h1v-1h2v-1h3v1h1v-2h1v1h1v1h1v-2h1v3h1v-1h1v-2h1v2h1v-2h1v2h1v-1h1v2h2v-2h5v-1h3v-2h1v4h2v-2h2v3h1v-1h1v1h1v-3h2v2h1v-1h2v1h1v1h2v-2h2v-1h1v2h3v1h4v-2h2v1h2v1h1v-1h1v1h1v-1h4v-1h1v-1h1v2h1v-2h1v1h1v2h1v-3h1v2h1v-1h2v-1h1v1h1v2h3v-1h1v-1h4v2h2v-1h1v-3h1v4h1v-1h3v-1h3v1h2v1h2v-1h1v-1h3v1h1v-2h1v1h2v2h1v-1h2v1h1v-2h1v-1h1v1h1v2h3v-2h2v1h2v1h2v-2h1v2h1v-1h1v1h1v-4h1v4h1v-1h1v1h1v-3h1v2h5v-1h1v-1h2v2h1v-1h1v1h1v1h1v-1h1v1h1v-1h1v1h3v-1h1v-1h3v2h1v-1h1v-2h1v1h1v-2h1v2h1v2h1v-2h1v1h1v-1h1v2h3v-3h1v1h1v-1h3v1h1v2h1v-2h1v2h1v-3h1v3h1v-2h1v2h3v-2h1v2h1v-1h1v-2h1v3h1v-1h1v-2h1v1h1v2h3v-2h2v2h1v-1h2v-1h2v-3h1v5h1v-2h2v1h1v-1h3v2h4v-1h4v-2h1v2h1v-1h4v1h1v1h1v-2h1v2h3v-5h1v3h3v1h1v1h1v-1h3v1h1v-3h1v3h1v-1h2v1h1v-1h9v-1h1v1h1v1h1v-1h2v-1h1v1h1v-3h1v2h1v2h2v-2h1v-1h3v1h2v2h1v-2h1v2h1v-2h3v1h1v-4h1v5h2v5h-3v1h-4v1h-1v-3h-1v3h-2v-2h-2v1h-1v-2h-2v1h-1v-1h-2v3h-2v-3h-1v3h-1v-1h-3v-2h-1v2h-1v-1h-4v1h-1v-2h-1v2h-1v4h-1v-5h-1v2h-1v-1h-1v-2h-1v1h-11v-1h-1v1h-1v-1h-1v2h-2v-2h-1v2h-2v-2h-2v1h-2v2h-1v-1h-1v-2h-1v3h-1v-3h-3v1h-2v-1h-3v2h-3v-2h-1v1h-1v2h-1v-1h-2v-2h-2v6h-1v-6h-1v1h-1v1h-2v-2h-1v1h-2v-1h-1v1h-1v-1h-1v3h-1v-2h-4v6h-1v-5h-3v-2h-1v6h-1v-3h-1v-2h-1v-1h-3v1h-3v1h-1v-2h-1v1h-2v1h-1v1h-3v-2h-1v1h-1v-2h-1v1h-1v5h-1v-4h-3v-1h-2v-1h-2v1h-3v1h-1v-2h-1v2h-1v1h-1v-1h-1v-2h-3v2h-3v1h-1v-2h-1v5h-1v-4h-1v-2h-3v2h-1v-2h-2v3h-4v-1h-1v-1h-2v1h-2v1h-1v-3h-5v2h-1v-1h-2v1h-2v1h-1v-3h-2v2h-1v1h-1v-1h-1v-2h-1v1h-1v1h-1v-1h-1v2h-1v-3h-1v6h-1v-5h-3v2h-1v-1h-1v-1h-3v-1h-1v1h-1v2h-1v-1h-2v1h-1v-1h-3v-1h-1v1h-1v3h-1v-5h-1v1h-1v2h-1v-3h-2v2h-2v-2h-1v2h-2v-2h-2v2h-1v-1h-3v-1h-1v2h-1v-2h-1v2h-1v-1h-4v-1h-1v4h-1v-4h-1v2h-2v-2h-1v3h-1v-3h-2v3h-1v-1h-1v-1h-1v-1h-1v1h-1v1h-1v1h-1v-3h-1v1h-1v-1h-2v1h-2v2h-1v-3h-1v1h-1v-1h-2v3h-1v-2h-2v2h-1v-2h-3v-1h-1v6h-1v1h-1v-7h-1v1h-2v1h-1v-1h-1v3h-1v-4h-1v2h-2v-2h-1v2h-2v1h-2v-3h-3v2h-1v1h-1v-3h-1v2h-1v1h-2v-1h-1v1h-1v-2h-1v-1h-1v2h-1v1h-1v-3h-3v3h-1v-3h-2v1h-4v2h-1v-1h-3v-1h-1v-1h-1v2h-1v-1h-1v1h-1v-2h-1v8h-1v-7h-1v2h-3v-2h-3v-1h-1v2h-1v-1h-1v1h-2v-1h-2v1h-5v1h-1v6h-1v-6h-1v-2h-4v2h-1v-2h-1v1h-1v1h-3v-2h-1v2h-2v7h-1v-9h-1v2h-1v-3h-1v1h-3v2h-1v-2h-1v2h-1v-1h-1v1h-1v-1h-1v-1h-2v1h-2v-1h-1v2h-3v-1h-1v-1h-2v-1h-1v2h-2v1h-1v-1h-1v-2h-1v2h-1v-2h-1v2h-3v-2h-1v1h-2v5h-1v-6h-1v3h-1v-2h-2v-1h-2v1h-1v2h-2v-1h-2v-1h-2v1h-1v1h-4v2h-1v2h-1v-6h-1v2h-1v-3h-1v5h-1v-2h-1v-2h-1v-1h-1v6h-1v-6h-1v1h-1v8h-1v-6h-1v-2h-2v2h-1v-3h-1v3h-3v-1h-1v10h-1v-10h-1v-1h-1v6h-1v-6h-1v11h-1v-12h-1v1h-1v2h-1v-2h-1v-1h-1v1h-1v-1h-2v3h-1v-3h-2v3h-1v-1h-2v-1h-3v2h-1v-2h-2v1h-1v-2h-2v1h-1v1h-1v-1h-1v-1h-1v12h-1v-10h-1v-1h-1v1h-2v1h-1v-2h-1v1h-3v-2h-1v1h-1v1h-3v-1h-2v-1h-1v1h-3v-1h-1v1h-3v1h-3v-2h-1v2h-1v1h-1v-1h-1v5h-1v-4h-1v-1h-3v-1h-1v4h-1v-3h-1v-2h-2v3h-1v-2h-1v-1h-1v3h-1v-2h-1v-1h-2v2h-2v2h-1v-3h-1v-1h-2v3h-2v-3h-1v2h-1v1h-3v-2h-1v1h-1v1h-1v-1h-4v-2h-1v1h-1v-1h-1v2h-1v-2h-1v2h-1v-1h-1v2h-1v-1h-1v-1h-1v1h-1v-1h-3v2h-2v-2h-2v1h-2v-1h-1v1h-3v-1h-1v-1h-1v3h-1v-2h-2v-1h-2v3h-1v-1h-1v-2h-1v3h-1v-2h-1v1h-1v-2h-1v1h-2v1h-3v-2h-1v2h-2v-1h-1v-1h-1v2h-1v-1h-2v1h-5v-2h-1v1h-2v1h-2v10h-1v-9h-1v-3h-3v2h-2v-1h-1v-1h-1v3h-2v-1h-1v-1h-1v2h-1v-3h-1v1h-1v1h-1v-2h-1v1h-1v2h-2v-1h-1v-1h-2v1h-1v-1h-1v1h-4v-1h-2v1h-1v1h-1v-3h-1v1h-5v-1h-1v1h-1v2h-1v-1h-1v-1h-2v2h-1v-2h-1v-1h-4v1h-2v2h-1v-2h-2v2h-1v-2h-1v1h-1v3h-1v-4h-1v-1h-2v3h-2v-2h-2v5h-1v-5h-1v-1h-1v3h-2v-2h-3v1h-2v-2h-1v1h-1v-1h-1v3h-1v-2h-2v2h-1v-3h-1v2h-1v-1h-1v1h-2v1h-1v-2h-2v-1h-1v2h-1v1h-1v-2h-2v9h-1v-9h-1v5h-1v-4h-2v-2h-1v1h-2v-1h-1v3h-2v-2h-3v1h-3v-1h-1v2h-1v-1h-1v-1h-1v2h-1v-2h-1v1h-1v3h-1v-2h-1v-2h-3v2h-1v-1h-1v-2h-1v4h-1v-4h-1v3h-4v-2h-1v2h-1v-2h-2v-1h-1v5h-1v-3h-1v5h-1v-6h-3v-1h-1v2h-1v-1h-3v1h-1v-2h-1v2h-1v1h-2v-3h-3v3h-1v-3h-2v3h-2v-2h-5v1h-1v-2h-1v2h-1v-1h-2v-1h-1v2h-1v-2h-1v1h-1v1h-2v-1h-1v1h-2v-1h-1v1h-1v1h-1v-2h-2v1h-1v-2h-1v1h-2v1h-1v-2h-1v1h-2v-1h-1v1h-1v2h-1v-2h-2v1h-1v-2h-2v1h-3v9h-1v-9h-2v1h-1v1h-1v-3h-1v2h-2v-2h-2v1h-1v1h-1v-2h-2v2h-1v-1h-1v-1h-1v1h-3v-1h-1v2h-1v-1h-1v1h-2v-2h-2v1h-1v2h-1v-3h-1v2h-1v5h-1v-5h-1v-2h-2v1h-1v-1h-5v1h-1v-1h-1v2h-1v1h-2v-3h-1v3h-3v-3h-2v2h-1v-1h-1v1h-1v-2h-2v1h-1v-1h-1v2h-2v-2h-1v1h-2v2h-2v-2h-1v1h-1v-1h-3v2h-2v-1h-1v-1h-3v-1h-1v1h-4v-1h-2v1h-1v-1h-1v1h-1v1h-4v4h-1v-4h-1v1h-1v-3h-3v10h-1v-6h-1v-3h-1v-1h-3v2h-1v-1h-1v-1h-2v5h-1v-2h-2v-1h-2v-1h-1v-1h-2v3h-1v-3h-2v1h-5v-1h-1v1h-1v1h-3v-2h-1v1h-1v-1h-1v2h-1v-2h-1v1h-1v-1h-1v1h-1v-1h-1v1h-1v1h-2v-1h-2v1h-1v-2h-3v1h-2v1h-1v1h-1v-3h-1v2h-2v-2h-1v2h-1v-2h-2v2h-1v-2h-4v1h-1v-1h-4v1h-2v-1h-6v2h-2v-2h-2v2h-2v-1h-2v-1h-1v9h-1v-8h-1v-1h-3v1h-1v1h-1v-2h-2v2h-1v-1h-1v-1h-1v1h-1v1h-1v-2h-1v5h-1v-4h-1v-1h-3v2h-1v-1h-1v3h-4v-3h-3v2h-2v-3h-1v2h-3v-1h-3v5h-1v-1h-1v-4h-1v1h-1v-1h-2v-1h-2v1h-3v1h-3v-2h-1v2h-3v-2h-2v2h-1v-1h-1v-1h-1v2h-2v1h-1v-1h-2v1h-2v-2h-1v-1h-1v1h-1v-1h-2v1h-1v1h-2v1h-3v3h-1v-4h-1v1h-1v-3h-1v3h-2v-1h-1v-2h-2v6h-1v-6h-1v1h-2v1h-1v4h-2v-3h-1v3h-1v-6h-6v2h-1v-2h-1v2h-1v-2h-1v2h-1v-2h-2v1h-3v1h-3v-2h-1v2h-1v-1h-1v-1h-1v2h-1v-1h-1v1h-2v-2h-2v1h-1v-1h-1v1h-1v-1h-2v2h-1v-2h-1z"/>
<path d="M277,332h1v2h2v-2h1v2h5v-1h2v-1h1v2h4v-1h2v-1h1v1h1v1h2v-1h1v1h1v-2h1v2h1v-2h2v2h1v-2h2v2h2v-1h1v1h2v-2h1v1h4v1h2v-2h1v2h3v-1h2v1h1v-1h1v1h1v-1h1v-1h1v1h1v1h1v-2h3v2h2v-2h1v2h3v-2h1v2h1v-1h1v1h1v-1h2v1h1v-1h1v1h1v-2h1v1h1v1h3v-2h3v2h2v-1h1v1h1v-2h4v2h2v-2h2v1h1v-1h1v2h1v-2h1v1h1v1h1v-2h1v2h1v-1h1v1h1v-1h4v-1h2v1h1v-1h1v2h2v-2h4v2h5v-1h1v1h3v-2h2v2h1v-2h5v2h1v-2h2v2h3v-2h1v2h1v-2h1v2h2v-1h4v1h1v-2h1v1h2v1h2v-2h1v2h1v-1h1v1h1v-2h1v1h1v1h1v-2h3v1h4v-3h1v2h1v2h1v-1h2v1h2v-2h1v2h1v-1h1v-1h1v1h1v1h1v-1h1v1h2v-1h1v-1h1v2h1v-1h4v1h1v-2h4v1h2v1h11v-2h1v1h1v1h2v-1h2v1h5v-1h4v-1h1v2h4v-1h2v1h1v-1h1v-1h1v2h6v-2h3v2h4v-1h2v-2h1v3h1v-2h4v2h1v-2h1v1h4v1h2v-2h1v1h1v-1h1v1h2v-1h5v2h1v-1h1v-1h2v2h4v-1h3v1h2v-2h4v2h1v-1h1v-1h1v2h1v-1h1v1h3v-1h1v-1h2v2h1v-1h1v1h3v-2h2v2h1v-1h2v-1h1v1h1v1h1v-1h2v-1h1v2h1v-1h2v1h1v-2h2v1h1v1h1v-2h1v2h2v-2h1v1h2v1h2v-1h3v-1h5v2h1v-2h1v1h1v1h3v-2h2v1h5v1h6v-2h1v1h3v1h1v-2h2v2h1v-1h1v1h1v-2h1v2h1v-2h2v2h2v-2h3v2h3v-1h1v1h1v-2h1v1h1v1h2v-2h1v1h2v1h2v-1h3v1h2v-2h4v2h2v-1h4v1h1v-1h2v1h2v-2h2v2h1v-2h2v1h2v-1h1v1h2v-1h1v1h2v1h1v-2h2v1h2v1h1v-2h2v2h2v-2h2v2h2v-1h7v1h2v-2h1v2h3v-1h3v1h2v-1h1v-1h1v2h1v-1h1v1h1v-2h1v2h1v-1h2v-3h1v2h1v1h3v-1h1v1h1v-1h3v1h3v-1h1v-1h1v2h1v-1h2v1h1v-1h1v2h5v-2h3v2h4v-1h1v1h1v-2h2v2h1v-2h1v-2h1v4h1v-1h2v-1h2v1h3v1h1v-2h2v1h1v-2h1v1h1v1h2v1h2v-1h2v1h1v-1h1v1h1v-1h1v-1h8v2h1v-3h1v2h2v1h1v-2h2v1h1v-1h2v1h1v1h1v-2h3v2h2v-1h4v-2h2v3h2v-3h1v3h1v-1h2v-4h1v5h1v-1h1v-1h1v2h1v-1h1v1h1v-5h1v4h2v1h3v-1h2v-1h3v2h2v-2h2v1h1v1h2v-2h6v-1h2v1h1v2h1v-2h1v2h2v-2h2v-1h6v3h1v-2h1v-1h1v3h3v-1h2v1h1v-1h1v-2h1v3h2v-2h6v2h1v-2h1v2h4v-2h1v2h1v-1h2v1h1v-1h1v1h3v-1h2v-1h1v1h2v-2h1v1h1v1h2v-1h2v1h1v1h3v-1h1v-1h1v2h2v-1h2v1h1v-2h1v-1h1v2h1v-1h1v1h2v1h1v-3h1v2h1v-1h1v2h3v-2h2v2h2v-2h1v1h2v1h2v-1h1v-1h3v2h2v-1h2v-1h1v1h1v-2h1v3h1v-1h1v1h1v-2h2v1h1v1h2v-1h3v1h2v-4h1v4h2v-1h4v-1h1v2h1v-1h1v1h1v-2h4v-1h1v2h1v1h1v-2h1v1h1v-1h1v2h1v-2h1v1h2v1h4v-1h1v-1h1v1h2v-1h2v-1h2v2h2v1h2v-3h1v1h1v-1h1v1h1v1h1v1h1v-1h3v1h3v-2h1v2h1v-2h3v1h5v-2h1v1h2v-1h1v2h3v-2h2v3h1v-1h1v1h2v-2h1v2h1v-5h1v3h4v2h1v-2h1v-1h1v3h1v-2h3v1h1v-2h1v2h2v-2h1v2h1v1h1v-3h1v3h3v-1h2v-2h1v3h1v-2h1v2h5v-3h1v2h1v-1h2v1h1v-2h1v1h1v-1h1v1h2v2h6v-2h2v-1h1v3h1v-1h2v1h1v-2h1v1h1v1h1v-3h1v3h2v-1h3v-1h2v-1h1v3h1v-1h1v-2h1v2h3v1h1v-1h2v-1h1v2h1v-2h3v2h1v-2h2v2h1v-2h1v-1h1v1h1v2h8v-1h1v1h2v-2h1v2h4v-2h1v1h1v1h1v-1h1v1h1v-2h1v2h6v-3h1v1h1v2h2v-1h1v-1h1v1h1v-1h2v-1h1v2h1v1h1v-3h1v2h4v-2h1v2h1v-1h1v1h1v1h1v-1h3v-1h1v1h1v1h1v-3h1v3h1v-1h1v1h1v-3h1v1h2v2h2v-1h1v-1h1v1h1v-2h2v3h1v-2h1v2h1v-1h1v-2h1v2h4v1h3v-2h4v2h1v-3h1v1h3v2h1v-1h1v1h1v-2h2v1h1v-1h2v1h3v1h1v-2h2v2h2v-2h2v2h1v-1h1v-1h1v1h2v1h4v-2h4v1h2v1h2v-1h2v1h1v-2h2v2h1v-2h1v1h1v1h1v-2h2v1h3v-2h1v1h3v2h1v-1h1v-2h1v2h1v1h1v-2h1v2h1v-1h2v1h2v-3h1v3h1v-1h3v-1h1v2h1v-2h1v2h1v-3h1v2h1v1h1v-2h4v-1h1v3h4v-2h1v-2h1v2h2v2h2v-1h1v1h1v-3h1v1h1v1h2v1h2v-1h2v-1h1v2h1v-1h1v-1h1v1h1v-1h1v1h4v1h1v-1h1v-2h1v2h1v1h2v-1h1v1h3v-3h1v2h3v-1h1v2h3v-2h1v-1h1v1h2v1h1v1h2v-1h4v1h2v-3h1v2h1v-1h4v2h2v4h-2v2h-2v-1h-1v1h-4v-1h-1v1h-1v-2h-1v2h-1v-2h-2v2h-1v1h-1v-2h-4v1h-1v1h-1v-2h-2v-1h-1v2h-1v-1h-1v-1h-1v3h-1v-1h-2v1h-1v-2h-7v1h-3v-2h-3v1h-1v1h-1v-1h-2v1h-1v-2h-1v2h-1v-2h-1v5h-1v-5h-4v3h-1v-3h-2v1h-3v-1h-2v2h-3v-1h-1v1h-1v-1h-1v1h-1v-2h-1v1h-1v-1h-4v2h-2v-2h-2v1h-3v-1h-1v3h-2v-3h-5v2h-1v-2h-4v1h-1v1h-1v1h-1v-3h-2v2h-3v-2h-1v1h-1v2h-4v-1h-1v-2h-2v1h-2v1h-1v-1h-1v-1h-1v2h-1v-2h-1v1h-1v1h-1v-1h-3v1h-1v-1h-1v2h-1v-3h-1v2h-1v1h-1v-1h-1v-1h-1v1h-3v-2h-1v2h-1v-1h-7v-1h-1v1h-1v-1h-1v3h-1v-2h-2v1h-1v-1h-2v-1h-2v2h-2v-1h-1v-1h-3v2h-2v-1h-1v-1h-1v2h-1v1h-2v-3h-3v2h-2v-1h-1v1h-1v-2h-1v3h-1v-2h-2v2h-1v-3h-2v1h-8v1h-2v1h-2v-3h-2v1h-1v-1h-1v1h-1v2h-2v-1h-1v-2h-1v1h-1v1h-1v-1h-2v1h-2v1h-1v-2h-1v1h-2v-2h-1v1h-1v1h-1v-2h-1v1h-1v1h-2v-2h-3v2h-1v-2h-1v2h-1v1h-1v-3h-3v2h-1v-2h-4v2h-3v-1h-2v1h-1v-2h-6v1h-3v2h-3v-3h-1v1h-1v-1h-2v1h-2v-1h-1v1h-1v2h-2v-2h-1v1h-1v1h-3v-2h-1v1h-1v1h-2v-2h-2v-1h-1v2h-1v-2h-2v1h-1v-1h-1v3h-2v-1h-1v-1h-1v1h-3v-1h-1v-1h-1v1h-2v-1h-3v1h-1v1h-1v-1h-1v1h-1v-2h-2v1h-3v-1h-1v2h-3v-2h-3v2h-1v1h-1v-2h-2v1h-4v-2h-1v2h-1v-1h-1v1h-2v1h-1v-1h-3v-2h-4v1h-3v-1h-1v1h-2v1h-1v-1h-2v-1h-2v2h-1v3h-1v-4h-1v-1h-1v1h-2v1h-1v1h-1v1h-2v-3h-1v-1h-1v2h-1v-1h-2v1h-3v-1h-1v2h-1v-1h-1v-2h-1v2h-1v-2h-1v2h-2v-2h-1v1h-2v1h-1v-1h-3v2h-1v-3h-1v1h-1v2h-1v-1h-2v-2h-1v2h-2v-2h-1v3h-2v-3h-1v1h-2v-1h-2v2h-2v-2h-1v1h-1v-1h-2v3h-2v-1h-2v-1h-1v-1h-1v2h-1v-1h-4v1h-1v1h-1v-2h-1v1h-1v-1h-1v2h-1v-3h-1v2h-1v-2h-2v2h-1v-2h-1v3h-2v-2h-2v-1h-3v1h-1v-1h-2v1h-2v2h-3v-2h-1v1h-1v-2h-1v2h-3v-2h-2v1h-2v1h-2v-2h-2v2h-1v1h-1v-1h-1v-1h-2v2h-1v-1h-2v-1h-2v-1h-1v1h-3v2h-2v-1h-1v-1h-2v1h-1v-1h-3v-1h-2v1h-1v-1h-1v2h-1v-1h-1v-1h-1v2h-1v3h-1v-3h-1v-2h-2v1h-5v-1h-1v1h-2v-1h-1v2h-1v-2h-2v1h-1v-1h-1v2h-1v-2h-1v2h-1v-2h-1v3h-1v-2h-2v1h-1v-2h-1v1h-1v2h-1v-3h-1v3h-1v-1h-1v-2h-1v2h-3v-1h-1v-1h-1v1h-2v1h-2v-1h-1v-1h-1v2h-1v-1h-1v1h-2v1h-1v-1h-2v-1h-1v2h-1v-1h-2v1h-1v-2h-1v1h-1v-1h-1v-1h-1v2h-4v2h-1v-2h-1v-1h-1v1h-1v-1h-2v1h-1v-1h-1v1h-1v-2h-1v1h-1v3h-1v-3h-3v-1h-1v2h-4v-2h-1v1h-2v1h-1v-1h-1v1h-1v-1h-1v-1h-2v1h-5v-1h-1v2h-3v-1h-1v2h-1v-2h-1v1h-1v-1h-2v-1h-2v1h-1v-1h-1v1h-2v1h-1v-1h-1v1h-1v-2h-1v2h-2v-2h-1v3h-1v-1h-1v-1h-2v-1h-1v1h-2v1h-3v-1h-1v1h-1v-2h-1v5h-1v-4h-1v1h-1v-2h-1v1h-3v-1h-1v1h-1v-1h-1v1h-3v1h-2v-1h-1v-1h-1v1h-1v-1h-2v2h-1v-2h-2v1h-1v1h-1v-2h-2v1h-2v1h-1v-1h-2v-1h-1v2h-2v-2h-1v2h-4v-2h-1v2h-1v-1h-3v-1h-2v2h-1v-2h-3v2h-1v-2h-3v1h-1v1h-1v-1h-1v-1h-4v2h-1v-2h-2v2h-2v-2h-1v4h-1v-4h-1v2h-1v-1h-4v-1h-1v2h-2v-2h-3v1h-1v2h-1v-2h-1v-1h-1v2h-2v-2h-1v1h-2v1h-1v-2h-1v1h-2v1h-1v-1h-3v-1h-2v2h-3v-1h-1v1h-1v-2h-1v1h-1v1h-1v-1h-1v-1h-2v1h-1v1h-1v-2h-1v2h-1v-1h-1v1h-2v-2h-6v2h-6v-1h-2v3h-1v-3h-1v1h-1v-2h-3v1h-1v1h-1v-2h-1v1h-2v1h-1v-1h-3v-1h-1v1h-3v-1h-2v1h-1v-1h-1v1h-1v-1h-4v1h-3v1h-1v-2h-1v2h-2v-1h-1v-1h-2v2h-2v-2h-1v1h-3v1h-2v-1h-1v-1h-3v2h-1v-1h-2v-1h-2v1h-1v1h-2v-1h-2v1h-1v-1h-1v1h-3v1h-1v-2h-1v1h-1v-2h-1v2h-1v-1h-1v1h-1v-1h-2v-1h-1v1h-1v1h-1v-2h-1v2h-2v-2h-5v1h-1v1h-2v-1h-1v-1h-1v2h-1v-2h-1v3h-1v-3h-1v2h-2v-1h-1v1h-1v-1h-2v1h-3v-2h-1v1h-6v-1h-1v2h-2v-1h-1v1h-1v-2h-1v2h-1v-1h-1v1h-1v-1h-1v-1h-5v2h-1v-2h-1v1h-1v1h-1v-1h-1v-1h-3v2h-1v-1h-1v-1h-2v1h-1v-1h-2v2h-1v-1h-1v1h-1v-1h-3v-1h-1v2h-2v-2h-1v2h-1v-2h-7v2h-1v-2h-1v1h-3v-1h-2v1h-2v-1h-2v1h-1v1h-1v-2h-1v2h-1v-2h-3v1h-5v1h-1v-2h-2v2h-2v-1h-2v1h-5v-1h-1v-1h-2v4h-1v-3h-3v3h-1v-3h-1v-1h-3v1h-1v1h-1v3h-1v-4h-1v1h-1v-2h-3v1h-1v-1h-2v2h-1v-1h-2v1h-3v-1h-1v1h-1v-1h-2v1h-2v-2h-1v1h-1v1h-1v-1h-1v4h-1v-4h-2v-1h-1v2h-1v1h-1v-3h-3v1h-1v-1h-1v2h-2v-2h-4v1h-1v1h-1v-1h-1v-1h-1v1h-3v-1h-1v1h-1v1h-2v-2h-1v1h-1v-1h-1v2h-1v-1h-1v-1h-1v1h-1v-1h-1v1h-2v-1h-2v1h-1v1h-4v-2h-1v2h-2v-1h-3v1h-1v-2h-1v1h-1v1h-4v-1h-1v1h-3v-2h-3v1h-1v-1h-1v1h-1v-1h-1v1h-1v-1h-1v2h-1v-1h-1v-1h-2v2h-1v-2h-3v1h-1v1h-4v-1h-4v1h-1v-2h-7v1h-4v1h-2v-2h-2v2h-1v-2h-1v2h-7v-1h-3v-1h-1v2h-1v-2h-1v1h-3v-1h-1v1h-2v-1h-2v1h-3v-1h-1v1h-2v1h-4v-1h-2v4h-1v-5h-1z"/>
<path d="M277,363h2v-1h2v2h6v-1h4v-1h1v1h2v-1h2v2h1v-1h1v1h3v-4h1v2h1v2h1v-2h3v2h1v-2h1v2h1v-2h2v2h2v-2h1v2h4v-1h1v1h1v-2h1v1h3v1h1v-1h2v1h1v-1h1v-1h1v2h2v-1h2v1h2v-2h1v1h1v1h1v-2h2v2h3v-1h3v1h1v-1h2v1h1v-2h1v2h3v-1h1v-1h1v2h1v-1h3v-1h1v2h2v-1h1v1h2v-2h1v1h1v1h1v-1h2v1h1v-1h1v1h1v-1h4v1h7v-1h3v1h2v-1h1v-1h2v2h1v-1h1v-1h1v2h4v-2h2v2h2v-1h2v1h1v-5h1v4h2v1h2v-1h3v1h1v-2h2v2h1v-2h1v2h2v-1h1v1h1v-1h1v1h4v-1h3v1h5v-2h1v1h1v-1h2v1h4v1h1v-2h1v2h2v-1h3v-1h1v1h1v1h2v-1h2v1h2v-2h1v2h3v-1h4v-1h1v2h2v-1h2v1h2v-2h1v2h2v-1h1v-1h4v1h1v-1h1v2h1v-2h4v2h1v-1h1v-1h2v1h1v-1h2v1h1v-1h2v2h4v-2h2v1h1v1h2v-2h3v1h1v-1h1v1h1v1h1v-1h2v-4h1v5h1v-2h3v2h2v-2h2v2h3v-1h4v1h1v-1h2v-1h2v1h2v1h2v-1h1v1h2v-2h1v2h1v-1h1v-1h2v1h3v1h4v-1h2v1h2v-1h1v1h2v-1h1v1h2v-1h1v1h3v-2h2v1h1v1h1v-1h3v1h1v-1h1v-1h1v2h2v-2h2v2h1v-1h1v-1h2v2h1v-2h2v2h1v-1h1v-1h3v1h2v1h2v-5h1v4h1v1h4v-1h1v1h3v-2h1v2h3v-2h4v2h3v-1h1v-1h2v1h1v1h1v-2h1v1h2v-1h1v2h1v-2h1v2h1v-1h4v1h1v-2h1v1h1v1h1v-1h1v1h1v-2h2v2h1v-4h1v3h1v1h1v-1h1v-1h1v2h1v-1h1v-1h1v1h2v-1h1v-2h1v4h3v-1h1v-1h4v2h1v-1h3v-1h2v1h1v-1h1v2h1v-1h2v1h1v-2h1v2h1v-1h3v1h2v-2h1v2h1v-2h3v2h1v-2h1v1h1v1h1v-2h1v1h1v1h1v-2h3v1h1v1h1v-1h1v1h6v-2h1v1h3v1h3v-1h1v1h4v-2h1v1h1v1h1v-1h2v1h1v-1h3v-2h1v1h1v1h1v1h1v-4h1v2h1v1h2v1h1v-1h3v-1h4v2h2v-1h1v1h2v-1h1v-1h1v-1h1v3h2v-2h3v2h2v-1h1v1h2v-1h1v1h1v-2h3v1h1v-1h1v2h1v-1h4v-1h2v2h1v-2h1v2h1v-1h1v1h1v-1h1v1h1v-2h1v1h3v-1h2v-2h1v4h3v-1h1v1h4v-1h1v1h2v-2h1v1h1v1h1v-2h1v2h1v-1h3v1h1v-2h3v1h2v-1h1v2h2v-1h1v-1h1v2h3v-5h1v4h1v-1h1v2h1v-2h1v2h1v-1h4v-1h1v1h2v1h1v-2h1v2h1v-2h2v2h1v-2h1v1h1v1h4v-4h1v2h1v1h1v1h3v-2h3v1h2v1h1v-2h4v2h1v-1h1v-1h1v1h2v1h1v-2h1v1h2v1h1v-1h2v1h1v-2h1v2h3v-5h1v4h3v1h1v-1h2v-1h3v2h1v-2h2v2h1v-2h1v2h1v-2h1v2h1v-1h1v1h2v-1h1v-2h1v1h2v1h2v-1h2v2h1v-1h6v-1h2v2h2v-1h1v1h2v-1h1v1h1v-2h2v-2h3v1h1v3h1v-2h1v2h1v-2h1v2h1v-2h1v2h4v-2h2v2h4v-1h1v1h1v-2h1v1h4v1h1v-1h1v-2h1v2h2v1h2v-1h4v-2h1v3h2v-2h1v-1h1v1h1v-1h1v1h1v1h2v1h2v-2h1v1h1v-1h1v-1h2v1h2v-1h1v1h1v2h1v-2h1v2h3v-2h1v1h4v1h2v-1h1v-1h1v1h1v1h2v-1h1v1h5v-2h1v2h3v-1h2v1h1v-3h1v2h3v-2h1v3h1v-5h1v4h1v-1h1v1h1v-1h2v-1h1v-1h1v4h1v-1h1v1h1v-1h1v1h2v-1h1v-2h2v1h1v1h1v-1h1v2h2v-1h2v1h3v-2h1v2h1v-1h2v1h1v-2h1v2h1v-2h2v2h2v-1h3v1h4v-2h1v2h2v-1h1v-1h1v1h1v-1h2v1h5v-1h2v1h2v1h1v-2h1v2h1v-2h1v1h1v-1h1v1h3v1h3v-1h1v1h1v-2h1v1h2v1h1v-3h1v3h2v-2h1v1h1v-2h2v3h5v-3h2v3h2v-1h2v1h1v-2h1v2h1v-3h1v1h1v1h1v-1h2v2h1v-1h1v1h1v-2h2v-2h1v3h1v1h1v-3h1v2h1v1h1v-2h1v1h1v-2h1v1h3v2h3v-3h1v3h1v-1h1v-2h1v3h1v-1h1v-1h1v2h1v-2h1v2h2v-1h1v-1h3v1h1v-1h3v2h1v-3h2v3h1v-1h3v-2h1v3h1v-1h1v-1h2v1h1v-2h1v1h1v1h1v-1h1v1h3v1h1v-3h1v2h1v-2h1v2h2v-1h2v-1h1v2h2v1h1v-2h1v2h1v-1h1v-1h1v1h2v-1h2v2h2v-2h2v2h1v-2h1v1h1v1h1v-1h1v1h3v-1h2v-1h2v1h2v-1h2v2h1v-2h1v2h3v-1h1v-1h1v2h1v-1h1v1h1v-1h5v-1h1v2h2v-2h3v-1h1v1h1v2h2v-1h1v-1h1v1h1v-1h3v2h1v-2h1v2h1v-1h1v1h1v-1h2v-1h1v2h1v-2h2v2h2v-1h3v1h1v-1h1v1h1v-2h3v2h1v-1h2v-1h1v2h1v-1h1v1h3v-1h1v1h4v-2h4v1h1v-1h3v1h4v1h2v-2h2v1h2v1h3v-2h1v1h1v-1h1v2h1v-2h4v1h1v1h1v-1h2v-1h2v2h2v-1h1v1h1v-2h1v2h1v-1h3v1h1v-1h1v1h1v-1h6v-1h1v2h2v-1h1v-1h1v2h2v-2h1v1h4v1h3v-2h1v2h4v-2h2v2h7v-1h1v1h1v-3h1v1h1v1h1v1h1v-4h1v3h2v-1h1v1h1v1h4v-2h1v2h1v-3h1v2h1v6h-2v1h-1v-1h-1v1h-2v-2h-1v1h-1v1h-1v-2h-3v3h-2v-1h-1v-1h-1v-1h-1v1h-2v2h-1v-1h-1v-2h-2v3h-1v-2h-1v-1h-2v2h-1v-1h-1v-1h-1v2h-1v-2h-1v2h-1v-1h-2v-1h-2v2h-2v-1h-1v1h-2v-2h-1v1h-3v-1h-1v1h-1v1h-3v-1h-2v-1h-4v6h-1v-4h-1v-2h-1v1h-1v-1h-1v1h-1v-1h-1v3h-1v-1h-2v-1h-2v-1h-1v4h-1v-2h-1v-2h-2v2h-1v-1h-1v1h-3v-2h-1v1h-4v1h-6v-1h-1v1h-3v-2h-2v2h-1v-1h-1v1h-2v-1h-1v-1h-2v1h-6v-1h-1v1h-2v1h-1v-2h-3v1h-2v-1h-1v1h-5v-1h-1v3h-2v-3h-1v3h-1v-2h-2v1h-2v-2h-2v6h-1v-5h-1v2h-2v-1h-2v-1h-1v-1h-1v1h-1v1h-2v1h-1v-2h-2v1h-1v-1h-1v-1h-1v1h-1v1h-1v-2h-2v3h-1v-1h-2v-2h-1v2h-1v-1h-1v1h-1v-2h-1v3h-1v-2h-1v1h-1v-1h-1v2h-1v-1h-3v-1h-4v-1h-1v2h-1v1h-1v-1h-1v-2h-2v2h-3v-2h-2v3h-1v-2h-1v1h-1v-1h-1v-1h-1v1h-2v-1h-1v2h-1v-2h-1v1h-1v1h-2v-1h-1v1h-3v1h-3v-2h-1v1h-1v1h-2v-3h-1v1h-2v-1h-1v1h-1v-1h-1v1h-3v-1h-2v1h-1v-1h-2v1h-2v-1h-3v1h-1v1h-5v-1h-1v-1h-4v3h-1v-3h-2v1h-1v-1h-2v2h-3v-2h-2v1h-1v1h-1v-2h-1v6h-1v-6h-4v2h-1v-1h-2v-1h-3v2h-2v-1h-5v1h-2v-2h-1v2h-2v-1h-1v2h-1v-1h-1v1h-2v-3h-1v3h-2v-2h-4v-1h-2v2h-1v-1h-2v1h-1v-1h-1v-1h-2v2h-1v-1h-4v1h-1v-2h-5v2h-1v2h-1v-3h-1v-1h-1v1h-2v-1h-1v2h-1v1h-1v-3h-1v2h-1v1h-1v-1h-2v1h-1v-1h-2v-2h-1v1h-2v2h-1v-3h-3v1h-1v1h-1v-2h-3v1h-1v2h-1v3h-1v-5h-2v1h-2v-2h-1v2h-1v-2h-1v2h-2v-2h-2v3h-1v-3h-4v2h-1v-2h-3v2h-2v-1h-1v-1h-1v1h-1v1h-1v4h-1v-4h-1v-2h-3v1h-1v-1h-1v3h-2v-2h-3v2h-1v-3h-2v1h-9v1h-3v-2h-2v1h-2v-1h-5v2h-1v-1h-1v1h-2v-1h-1v-1h-2v2h-1v-2h-2v2h-2v-2h-2v2h-1v-1h-3v1h-2v-1h-1v1h-3v-1h-2v2h-2v-1h-1v-2h-1v1h-2v2h-1v-3h-1v1h-4v-1h-1v2h-2v1h-2v-3h-1v1h-1v-1h-1v3h-1v-2h-1v2h-1v-1h-1v1h-1v-1h-6v-2h-1v3h-1v-2h-1v3h-1v-1h-1v-2h-1v2h-2v-3h-1v3h-1v-2h-3v1h-2v-2h-1v2h-1v-1h-2v2h-1v-1h-2v-1h-1v-1h-1v1h-2v-1h-3v2h-1v-1h-1v3h-1v-3h-2v2h-1v-1h-3v-1h-2v1h-2v-1h-2v-1h-1v2h-1v-1h-2v1h-1v-1h-2v-1h-1v1h-1v1h-1v-2h-3v1h-1v1h-1v-2h-2v3h-1v-1h-1v-2h-2v3h-1v-1h-1v-2h-4v2h-1v-2h-4v2h-3v-2h-2v2h-1v-2h-1v2h-2v-1h-1v1h-3v-1h-2v-1h-1v1h-2v-1h-1v1h-2v-1h-2v1h-1v-1h-2v3h-1v-1h-1v-2h-2v3h-1v-2h-1v-1h-1v2h-2v-2h-1v2h-2v-1h-3v-1h-1v2h-1v-2h-2v1h-3v-1h-5v1h-1v1h-1v2h-1v-3h-1v1h-1v-2h-1v3h-1v-1h-3v-1h-3v1h-2v-2h-1v2h-1v-2h-1v1h-1v-1h-1v2h-1v-1h-1v-1h-1v2h-1v-2h-6v2h-2v1h-1v-2h-3v1h-1v-2h-1v2h-1v-1h-3v1h-1v-1h-3v-1h-1v1h-1v1h-1v-2h-1v1h-1v1h-3v-1h-1v1h-1v-2h-1v2h-2v-1h-1v1h-2v-2h-4v2h-3v-2h-2v1h-1v1h-1v-2h-1v1h-8v1h-2v-2h-1v2h-3v-2h-1v2h-3v-1h-1v-1h-1v1h-7v-1h-1v2h-2v-1h-2v-1h-2v2h-1v-2h-1v2h-1v-1h-1v1h-1v-1h-2v-1h-7v2h-1v-2h-1v2h-1v2h-1v-2h-1v-1h-1v1h-1v-1h-1v1h-1v-2h-1v1h-1v-1h-2v2h-1v-2h-3v1h-1v1h-1v-2h-3v2h-1v-2h-1v1h-2v-1h-2v2h-1v-2h-1v2h-1v-2h-1v2h-3v-2h-1v1h-2v1h-1v-2h-1v2h-2v-1h-6v1h-1v-2h-2v1h-1v-1h-2v1h-5v4h-1v-4h-2v-1h-1v1h-2v1h-3v-2h-2v2h-1v-2h-1v1h-1v1h-2v-1h-3v-1h-1v1h-1v1h-1v-2h-1v2h-1v-2h-1v2h-1v-2h-3v1h-1v-1h-2v1h-6v-1h-1v2h-3v-2h-3v2h-1v-1h-1v1h-2v-2h-3v1h-1v1h-1v2h-1v-3h-1v1h-3v-1h-1v-1h-1v2h-1v-1h-2v1h-1v-1h-1v-1h-1v1h-1v-1h-2v2h-1v-2h-1v2h-1v-2h-2v1h-2v1h-1v-2h-3v2h-1v-2h-2v1h-3v-1h-2v1h-1v-1h-1v1h-1v1h-1v-1h-1v-1h-1v2h-1v-1h-1v1h-2v-1h-2v-1h-1v1h-1v1h-1v-2h-2v2h-1v-1h-1v-1h-1v1h-1v1h-3v-2h-2v2h-6v-2h-1v1h-1v-1h-2v2h-1v-2h-2v1h-3v-1h-2v1h-1v-1h-2v2h-1v-1h-4v-1h-2v1h-2v-1h-3v2h-2v-2h-1v1h-1v-1h-1v1h-2v1h-2v-2h-2v2h-3v-2h-1v1h-1v-1h-4v2h-3v-2h-2v2h-1v-1h-1v-1h-3v1h-2v1h-1v-2h-3v2h-1v-2h-1v1h-2v1h-1v-1h-4v1h-1v-1h-3v-1h-2v1h-1v1h-1v-2h-1v2h-1v-1h-1v-1h-3v1h-2v1h-1v-1h-1v-1h-3v2h-2v-2h-1v5h-1v-5h-3v1h-1v-1h-4v1h-2v-1h-1v2h-1v-2h-4v1h-2v-1h-2v1h-2v2h-1v-1h-2v-2h-1v1h-2v-1h-1v2h-1v-2h-1v1h-1v1h-2v-2h-1v2h-4v-2h-2v2h-1v-2h-1v2h-2v-2h-7v1h-1v-1h-4v1h-1v-1h-3v1h-1v1h-1v-1h-2v1h-3v3h-1v-3h-1v-2h-1v2h-1v-2h-4v1h-1v1h-1v-1h-2v-1h-1v1h-1v-1h-3v2h-1v-2h-1v1h-1v-1h-2v2h-1v-2h-5v2h-1v-1h-2v-1h-6v1h-3v1h-1v-1h-2v-1h-1v2h-1v-1h-1v4h-1v-3h-3v-1h-2v1h-1v-1h-4v-1h-3v2h-1v-2h-1v1h-2v1h-2v-1h-2z"/>
<path d="M277,392h1v1h1v1h3v1h1v-1h1v1h1v-1h1v-1h2v2h1v-2h4v1h3v1h3v-1h1v-2h1v1h2v2h3v-2h1v-3h1v5h1v-2h2v1h5v1h6v-2h1v2h3v-2h1v2h1v-2h1v2h1v-2h1v1h1v-1h1v1h1v1h3v-1h1v-1h2v2h3v-1h2v-1h2v-1h1v3h3v-4h1v2h1v1h1v-1h1v2h2v-2h1v2h2v-1h1v1h1v-1h3v-1h2v2h1v-1h1v-1h1v2h4v-2h1v2h1v-1h3v-1h2v1h1v-1h2v1h2v-1h1v1h1v1h1v-1h1v-1h1v2h3v-1h3v1h1v-2h1v2h1v-2h2v1h2v1h1v-2h1v2h4v-1h1v-1h3v2h1v-2h2v2h6v-2h1v2h2v-2h1v2h1v-1h3v1h5v-1h2v1h2v-2h1v1h1v-1h1v1h1v-1h1v1h2v-1h1v2h2v-2h2v2h4v-2h1v1h1v-1h2v-3h1v5h6v-1h1v-1h2v1h2v-1h4v1h5v-1h1v2h4v-2h1v2h2v-2h2v1h2v-1h1v1h2v-1h1v2h2v-2h1v1h2v-1h2v1h2v-1h1v2h1v-2h4v1h1v1h1v-1h1v1h1v-1h1v1h3v-2h2v1h1v1h2v-1h1v-1h2v1h1v1h1v-2h1v1h1v1h1v-1h1v1h1v-2h1v2h3v-1h2v-1h3v1h3v-1h2v2h2v-1h1v-1h2v1h1v1h1v-2h1v2h1v-1h1v1h1v-2h1v2h1v-1h2v-1h1v2h2v-3h1v2h1v-1h1v1h1v1h1v-5h1v5h1v-2h1v-1h1v2h1v1h2v-2h1v2h1v-1h1v1h1v-1h2v1h3v-2h1v2h1v-2h1v2h1v-2h1v2h1v-2h2v2h3v-1h1v-1h2v1h2v1h1v-1h2v1h3v-1h2v-1h1v2h1v-1h2v-1h3v1h1v-1h3v1h2v1h1v-1h3v-1h1v2h2v-2h2v1h2v1h2v-2h2v2h1v-1h3v1h1v-2h1v2h1v-1h1v-1h3v2h1v-1h1v-1h4v2h1v-2h1v2h1v-4h1v2h5v-1h1v3h3v-1h1v1h2v-2h1v1h1v-1h1v1h4v-1h1v2h1v-1h1v1h1v-2h1v1h1v1h4v-1h1v1h4v-2h2v2h2v-1h2v1h1v-2h1v2h2v-1h1v-1h4v2h1v-1h3v-4h1v4h1v-1h1v1h1v1h1v-1h6v1h1v-1h1v1h2v-2h1v2h2v-1h2v1h6v-2h1v2h3v-2h1v2h4v-2h3v2h1v-1h1v1h2v-2h1v2h2v-1h1v-1h3v1h1v-1h3v2h2v-1h2v1h1v-2h1v2h1v-2h1v2h3v-2h1v2h1v-1h1v-1h4v2h1v-1h2v1h2v-2h1v2h2v-1h2v-1h1v-2h1v3h1v-1h1v1h4v1h1v-1h3v-1h1v2h1v-2h1v1h1v1h2v-1h1v1h2v-2h1v2h1v-2h2v1h1v-1h1v1h1v-1h1v1h2v-1h2v1h3v-1h1v2h1v-1h1v1h2v-2h4v2h1v-1h2v1h1v-2h1v1h1v1h1v-1h1v-1h1v2h1v-1h1v-2h1v3h2v-1h1v1h2v-2h3v1h1v1h2v-2h2v1h2v-1h1v2h3v-4h1v2h1v2h1v-2h1v2h1v-2h1v2h1v-1h1v1h1v-1h2v1h1v-2h2v1h1v1h3v-2h1v1h1v1h1v-1h1v1h2v-2h2v2h3v-2h2v2h1v-2h1v2h1v-2h1v2h1v-2h1v1h2v1h1v-1h1v1h1v-1h1v1h1v-1h2v-1h1v2h3v-1h1v1h1v-1h1v1h2v-2h2v2h1v-2h1v2h1v-1h2v1h5v-1h8v-1h2v2h4v-1h1v1h1v-1h1v1h1v-2h1v1h2v1h4v-1h3v-1h2v2h3v-2h1v2h2v-2h1v2h2v-1h3v-1h2v2h3v-2h3v2h3v-1h2v1h2v-1h2v-1h6v1h3v1h2v-2h1v1h1v1h1v-2h2v1h1v1h3v-2h2v1h1v-1h4v2h1v-3h1v3h1v-2h2v1h1v1h5v-1h1v1h1v-1h1v1h1v-1h1v1h3v-1h1v-1h2v1h2v1h1v-1h2v-1h1v1h1v-1h3v1h2v1h2v-1h1v-1h1v2h2v-1h3v-1h1v2h2v-2h1v2h1v-2h2v2h7v-2h1v1h2v-1h2v2h1v-2h3v2h2v-5h1v4h3v1h1v-2h1v2h2v-1h1v-1h1v2h1v-1h1v-1h1v2h1v-3h1v1h1v2h1v-1h1v1h2v-1h2v-1h1v2h1v-2h1v1h2v1h1v-1h2v-1h1v2h3v-2h1v2h7v-1h1v-1h1v1h1v-1h1v2h1v-1h1v1h1v-1h1v1h3v-1h1v-1h2v1h1v1h3v-2h1v1h2v1h1v-1h1v1h4v-1h1v-1h1v2h1v-2h1v2h6v-2h3v1h1v1h2v-2h1v1h1v1h1v-2h1v2h2v-2h3v2h1v-1h1v1h2v-1h1v-1h1v2h1v-2h1v2h2v-2h2v2h2v-2h2v2h2v-1h1v-1h4v2h1v-2h2v2h2v-2h6v2h1v-2h2v2h3v-2h1v-1h1v3h1v-1h3v-1h1v2h1v-2h1v1h1v1h1v-2h3v2h2v-2h1v2h2v-1h1v-1h2v2h3v-1h2v-1h1v1h1v-1h1v1h1v1h1v-2h3v2h1v-1h3v1h2v-2h1v2h1v-1h1v1h1v-1h1v1h1v-1h1v-1h1v2h2v-1h2v1h1v-2h4v2h2v-5h1v5h2v-2h1v2h2v-1h1v-1h1v2h1v-1h3v1h1v-2h1v2h1v-2h1v1h1v1h1v-1h2v-1h1v1h2v-1h3v2h1v-1h5v-1h2v1h1v-1h2v1h1v1h2v-1h4v1h1v-2h1v2h1v-2h1v2h2v-1h5v1h3v-1h2v1h2v-2h2v2h1v-2h1v1h2v-1h1v1h3v1h1v-2h2v1h2v-1h1v2h2v-1h1v1h2v-2h2v1h1v-1h1v2h1v-2h1v1h2v1h3v-2h1v2h2v-2h1v2h1v-1h2v-1h1v2h3v-1h3v1h2v-1h1v-1h1v2h2v-2h2v8h-2v-2h-2v2h-1v-2h-1v1h-1v1h-1v-2h-3v1h-3v-1h-1v2h-1v-1h-2v3h-1v-4h-1v1h-2v1h-4v-2h-1v1h-1v-1h-2v1h-2v4h-1v-3h-4v-2h-1v2h-1v-2h-2v2h-2v-2h-2v2h-1v-2h-7v1h-2v-1h-1v2h-2v-1h-2v1h-1v-2h-1v1h-1v-1h-5v2h-2v-1h-1v1h-1v-1h-1v-1h-3v1h-1v1h-1v-1h-2v1h-1v-1h-1v-1h-3v2h-2v-2h-1v1h-1v1h-2v-2h-2v2h-3v-1h-2v-1h-1v2h-1v-1h-1v1h-1v-1h-3v-1h-1v2h-2v-2h-1v1h-1v-1h-1v2h-1v-2h-1v1h-1v1h-3v-2h-1v2h-2v-1h-1v-1h-1v2h-4v-1h-2v-1h-2v1h-2v-1h-1v1h-2v1h-1v-1h-1v-1h-2v2h-1v-2h-2v2h-1v-1h-1v1h-1v-1h-1v-1h-2v1h-1v1h-2v-2h-1v2h-1v-2h-4v1h-1v-1h-1v1h-2v1h-4v-1h-2v1h-1v-2h-3v1h-1v-1h-1v2h-2v3h-1v-3h-1v-1h-3v-1h-1v1h-1v-1h-2v1h-1v1h-2v-1h-1v-1h-1v2h-1v-2h-2v2h-3v-2h-1v1h-3v-1h-1v1h-4v-1h-1v1h-4v1h-3v3h-1v-4h-1v-1h-3v1h-3v1h-2v-1h-1v1h-2v-2h-3v1h-1v-1h-3v1h-1v1h-1v-2h-2v2h-1v-1h-1v1h-1v-1h-2v-1h-3v2h-2v-1h-1v-1h-1v1h-1v1h-2v-2h-1v2h-1v-1h-2v-1h-1v1h-1v-1h-1v1h-1v2h-1v-1h-2v-1h-2v-1h-1v1h-2v1h-1v-2h-3v2h-2v-1h-3v-1h-2v2h-1v-1h-2v-1h-2v2h-1v-2h-1v1h-1v1h-1v4h-1v-5h-2v-1h-1v2h-1v-2h-6v1h-1v-1h-1v1h-1v-1h-2v2h-2v-2h-3v1h-2v-1h-1v1h-1v-1h-2v1h-2v-1h-2v1h-1v1h-3v-1h-3v1h-1v-2h-1v2h-1v4h-1v-5h-1v1h-1v-1h-1v-1h-1v1h-2v-1h-1v1h-1v-1h-1v1h-2v-1h-2v1h-1v1h-2v-2h-1v1h-2v1h-1v-2h-2v2h-1v-1h-1v1h-4v-2h-1v1h-2v-1h-2v1h-1v-1h-1v1h-2v1h-2v-1h-1v2h-1v-3h-2v2h-1v-2h-1v1h-1v-1h-1v2h-2v-2h-1v2h-2v-1h-1v-1h-1v1h-1v1h-3v-1h-3v-1h-2v2h-1v-2h-3v1h-2v-1h-1v2h-4v-1h-1v5h-1v-4h-1v-1h-1v1h-1v-2h-1v2h-1v-2h-2v1h-1v-1h-1v1h-1v1h-1v-1h-3v-1h-2v1h-2v1h-1v-2h-3v2h-1v-1h-4v1h-3v-2h-2v1h-1v-1h-2v1h-1v-1h-2v1h-1v-1h-1v1h-1v-1h-1v2h-1v-2h-2v4h-1v-4h-1v1h-1v-1h-2v1h-2v-1h-1v1h-2v-1h-1v2h-1v-1h-2v1h-1v-2h-1v1h-1v-1h-1v1h-1v-1h-1v1h-1v1h-3v-1h-1v-1h-3v1h-1v1h-1v-1h-1v-1h-2v1h-2v-1h-1v2h-1v-2h-8v1h-1v2h-1v-2h-2v1h-2v-2h-1v2h-1v-1h-2v1h-1v-2h-5v1h-6v-1h-1v1h-2v-1h-2v2h-5v-2h-1v1h-1v-1h-5v6h-1v-6h-1v1h-2v1h-1v-2h-1v1h-1v-1h-3v1h-1v-1h-4v2h-2v-2h-1v1h-1v1h-1v-1h-3v-1h-3v1h-1v-1h-1v2h-2v-1h-1v1h-2v-1h-2v-1h-2v2h-1v-2h-2v1h-1v1h-2v-2h-2v1h-4v-1h-1v2h-1v-2h-2v1h-1v-1h-1v1h-1v1h-2v-1h-2v1h-1v-1h-1v-1h-3v1h-1v1h-2v-2h-1v1h-3v1h-2v-1h-2v1h-1v-2h-2v2h-2v-2h-4v2h-1v-2h-1v1h-2v-1h-1v1h-1v-1h-3v2h-4v-2h-1v1h-1v-1h-4v2h-2v-1h-1v-1h-2v2h-1v-2h-1v1h-2v4h-1v-3h-3v-2h-1v1h-1v1h-2v-2h-1v2h-1v-2h-2v1h-3v-1h-1v4h-1v-2h-1v-1h-1v1h-2v-2h-2v2h-1v-2h-6v1h-2v-1h-1v1h-3v1h-1v-1h-1v1h-2v-2h-2v1h-1v-1h-1v1h-1v-1h-2v2h-4v-1h-1v-1h-2v1h-1v1h-1v-2h-1v1h-1v1h-2v-2h-1v3h-1v-1h-2v-2h-2v1h-1v1h-3v-2h-4v2h-2v-2h-1v2h-2v-2h-1v2h-1v-2h-7v2h-1v-1h-2v1h-1v-1h-1v1h-1v-2h-1v2h-2v-2h-4v1h-1v-1h-3v1h-2v1h-2v-2h-2v1h-1v1h-2v-2h-2v2h-1v-1h-4v-1h-1v1h-2v-1h-1v1h-1v-1h-1v1h-1v-1h-3v1h-1v-1h-1v2h-1v-2h-1v2h-2v-1h-2v1h-2v-2h-1v1h-4v4h-1v-4h-3v-1h-1v1h-1v1h-1v-1h-1v1h-2v-2h-2v2h-3v-1h-1v-1h-2v2h-4v1h-1v-2h-1v-1h-1v1h-1v-1h-1v2h-2v-1h-1v-1h-1v1h-1v1h-4v-2h-2v1h-1v-1h-2v2h-1v-1h-1v1h-2v-2h-1v2h-1v-2h-1v2h-1v-1h-4v1h-1v-1h-2v-1h-3v2h-1v-2h-2v1h-1v1h-2v-1h-1v-1h-1v1h-2v1h-2v-1h-1v-1h-1v1h-1v-1h-2v2h-1v-2h-8v2h-2v-1h-2v-1h-1v1h-1v1h-1v-2h-1v1h-1v-1h-5v2h-1v-2h-4v1h-1v-1h-5v1h-1v1h-1v-2h-3v1h-2v-1h-2v1h-1v-1h-1v2h-1v-2h-1v1h-2v1h-1v-1h-2v-1h-1v1h-1v-1h-1v1h-1v-1h-1v2h-1v-2h-1v2h-1v-1h-2v-1h-5v1h-1v-1h-4v2h-1v-2h-1v1h-2v-1h-2v5h-1v-1h-1v-4h-2v1h-2v-1h-1v1h-1v1h-1v-2h-1v2h-2v-1h-2v-1h-3v1h-2v-1h-1v2h-1v-2h-3v2h-1v-2h-1v1h-1v-1h-1v2h-1v-2h-3v1h-1v-1h-1v1h-1v-1h-1v1h-2v1h-1v-2h-1v2h-2v-1h-1v-1h-1v2h-2v-1h-2v1h-1v-2h-5v1h-1v1h-1v-2h-2v1h-1v-1h-1v1h-1v-1h-1v5h-1v-4h-1v-1h-4v1h-1v-1h-1v2h-1v-2h-3v1h-1v1h-1v-1h-2v-1h-5v1h-3v1h-1v-2h-1v1h-1v1h-2v-1h-1v-1h-1v1h-1v1h-2v-1h-5v1h-1v-2h-5v2h-3v-1h-2v-1h-5v1h-2v-1h-1v1h-1v-1h-1v1h-2v1h-1v-2h-1v2h-2v-2h-1v1h-1v-1h-1v2h-1v-2h-1v2h-2v-2h-1v1h-1v1h-1v-2h-2v1h-1v1h-1v-1h-2v-1h-1v2h-1v-2h-4v2h-1v-2h-1v1h-1v-1h-1v2h-1v-2h-2v1h-1v1h-1v-2h-1v1h-2v1h-1v-1h-2v-1h-1v2h-2v-2h-3v2h-3v-2h-4z"/>
<path d="M277,425h1v-2h2v2h1v-2h2v1h1v1h1v-1h2v1h1v-2h4v2h3v-1h1v1h1v-1h1v-1h2v2h2v-2h1v2h1v-1h1v1h3v-1h2v1h2v-2h2v1h1v1h1v-1h5v1h2v-1h1v1h1v-2h1v2h2v-2h1v1h2v1h1v-1h5v-1h1v1h1v1h1v-3h1v2h2v1h2v-2h1v2h4v-1h2v-1h2v1h6v-1h1v1h1v1h2v-1h4v-1h5v-1h1v1h3v2h2v-1h2v1h3v-1h2v1h1v-2h1v2h1v-1h1v1h4v-2h3v1h2v-2h1v3h1v-1h1v1h3v-2h1v2h2v-2h1v1h1v1h1v-3h1v2h2v-1h4v1h1v-1h1v2h1v-2h1v1h1v1h1v-1h1v-1h1v2h1v-2h1v1h1v1h1v-1h3v-1h3v2h1v-1h2v1h1v-2h1v1h1v1h1v-2h1v1h1v-1h1v2h2v-2h3v2h1v-3h1v3h1v-2h3v2h1v-2h1v2h1v-2h1v2h2v-3h1v1h1v1h1v1h2v-1h2v-1h2v2h3v-2h1v1h1v1h1v-1h3v-1h1v1h1v-1h2v1h6v-2h1v3h1v-1h2v-1h1v1h1v1h1v-3h1v2h2v1h1v-1h5v1h4v-1h2v1h1v-1h1v1h1v-2h1v2h1v-1h2v-1h1v2h1v-1h2v-1h2v1h3v-1h1v2h2v-2h1v1h1v-1h2v1h1v1h2v-1h1v1h1v-1h1v1h2v-2h1v2h1v-3h1v1h1v2h2v-2h2v2h1v-2h1v2h2v-2h1v1h3v1h1v-1h2v1h2v-2h1v1h2v-1h2v2h2v-1h3v1h2v-1h1v-1h6v1h1v-1h2v2h2v-1h1v1h1v-1h1v1h3v-2h1v1h1v-1h1v1h1v1h2v-2h3v1h1v1h2v-2h2v1h2v-1h4v2h1v-1h5v-1h1v2h1v-2h1v2h3v-2h1v2h2v-1h1v1h1v-1h1v-1h1v1h1v1h1v-1h1v1h3v-1h1v1h2v-1h1v1h2v-1h3v-1h6v2h1v-1h2v-1h1v2h3v-2h2v1h2v-1h1v-1h1v1h5v1h1v-1h2v1h1v-1h1v2h2v-1h2v1h4v-2h1v1h1v-1h2v1h1v-1h1v1h1v-1h1v1h3v1h1v-1h1v-2h1v1h3v2h1v-2h1v2h1v-2h1v2h4v-3h1v1h1v1h1v-1h1v1h1v-1h2v1h3v-1h1v2h2v-2h2v2h1v-2h1v2h2v-1h4v1h1v-2h3v2h1v-2h2v2h1v-1h1v1h2v-1h1v1h2v-1h2v-1h1v1h1v1h2v-2h1v1h1v1h1v-2h1v2h3v-1h1v1h1v-1h1v-1h3v2h1v-2h3v1h2v1h2v-2h2v1h1v-1h1v2h1v-2h1v2h8v-1h3v-1h2v2h2v-2h5v2h1v-1h1v1h1v-1h1v1h1v-1h1v1h1v-2h1v1h1v-1h1v2h1v-2h3v2h1v-2h4v2h2v-1h1v-1h1v1h3v1h1v-1h1v-1h2v1h1v1h2v-2h1v1h1v1h1v-1h4v-1h1v1h2v-1h1v1h1v1h2v-1h3v-1h1v2h1v-2h4v2h2v-3h1v1h1v2h2v-3h1v2h3v1h1v-1h1v1h1v-1h3v1h1v-2h2v1h2v-1h1v1h5v-1h1v1h1v1h2v-1h1v1h3v-2h1v2h1v-1h1v1h1v-2h1v1h1v1h1v-2h2v1h1v1h1v-1h4v1h3v-1h2v-1h2v2h1v-2h1v2h1v-2h1v1h1v1h1v-2h2v2h1v-2h2v1h2v1h1v-1h1v-1h1v2h1v-2h1v1h1v1h1v-2h2v2h1v-1h1v1h4v-1h4v-3h1v4h4v-2h2v2h1v-1h2v-1h3v1h2v-1h2v2h1v-1h1v-1h2v1h2v-1h2v-3h1v5h1v-2h3v2h1v-2h1v2h2v-1h2v-1h1v2h2v-1h1v-1h1v1h3v1h2v-2h1v1h2v-1h4v2h1v-2h1v2h1v-2h1v2h1v-3h1v3h1v-2h1v1h2v-1h1v2h1v-1h6v-1h2v1h3v1h2v-1h1v1h3v-1h1v1h1v-1h1v-1h4v2h2v-1h1v-1h1v2h3v-1h1v-1h1v2h3v-2h2v2h1v-1h1v-1h1v2h1v-2h1v2h4v-2h2v2h1v-2h2v2h1v-1h1v-1h1v1h3v-1h1v1h1v1h1v-2h2v1h2v1h1v-1h1v1h1v-2h1v1h2v1h1v-1h1v-1h1v2h2v-2h2v2h1v-1h1v-2h1v3h4v-1h2v1h3v-2h2v1h2v1h1v-1h1v1h2v-2h3v1h1v-1h2v2h1v-1h2v1h1v-2h1v1h1v-1h2v2h1v-2h1v1h1v1h5v-2h3v1h2v1h2v-2h1v2h1v-1h1v1h2v-1h3v1h1v-2h1v1h4v1h1v-1h2v1h1v-2h1v2h2v-2h2v2h2v-1h3v1h2v-2h2v2h2v-1h3v1h1v-2h1v1h1v1h1v-1h1v1h1v-1h1v1h2v-2h1v1h3v1h2v-1h1v1h4v-2h1v2h2v-1h1v1h1v-2h2v2h2v-2h2v1h2v-1h2v2h2v-2h1v1h1v1h1v-1h1v1h1v-1h3v1h1v-2h1v1h3v1h1v-2h1v2h1v-1h1v-1h2v1h1v1h1v-2h1v2h1v-1h1v-1h1v2h1v-2h2v1h1v-1h1v1h1v1h1v-1h1v1h1v-1h1v1h2v-1h2v1h3v-1h2v1h1v-2h2v1h1v-1h1v2h1v-1h1v-1h2v2h1v-2h1v2h1v-2h1v2h3v-2h3v2h2v-1h2v1h1v-1h3v1h3v-2h1v1h1v1h2v-1h1v1h3v-1h6v1h2v-2h1v1h2v-2h1v2h1v-1h3v1h4v-4h1v3h2v2h3v-2h1v2h1v-2h1v2h4v-1h4v1h3v-2h1v1h1v-1h2v-1h2v3h3v-1h2v-1h1v2h3v-1h1v1h2v-1h1v-1h3v2h3v-2h3v1h2v1h1v-1h2v-1h1v2h1v-2h2v1h1v-1h4v2h2v-2h3v1h1v1h1v-2h1v2h3v-1h1v-1h1v1h1v-1h1v2h2v-1h2v1h7v5h-1v-1h-2v1h-1v-1h-1v1h-1v-1h-1v1h-1v1h-1v-2h-1v2h-2v-2h-1v1h-2v-1h-2v1h-1v1h-1v-2h-2v1h-2v-1h-2v2h-2v-2h-3v3h-3v-3h-1v2h-1v-1h-1v1h-1v1h-3v-3h-1v1h-6v5h-1v-4h-3v-1h-1v1h-3v-1h-1v-1h-3v2h-1v-1h-1v-1h-1v2h-1v-1h-1v-1h-1v4h-1v-4h-3v2h-2v-1h-1v1h-4v-2h-4v3h-2v-2h-2v1h-3v-1h-3v1h-3v-2h-2v2h-2v-2h-1v2h-2v-1h-4v1h-1v-1h-3v1h-1v-1h-2v1h-4v-2h-1v2h-5v-1h-1v-1h-4v1h-2v1h-1v-1h-1v1h-1v-2h-1v1h-1v-1h-1v2h-1v-2h-1v1h-2v-1h-4v2h-1v-1h-1v1h-1v-1h-1v1h-1v-2h-1v1h-1v1h-1v3h-1v-5h-1v2h-1v-2h-3v1h-2v1h-1v-2h-2v2h-1v-1h-2v-1h-1v1h-3v-1h-2v2h-2v-2h-1v1h-1v1h-2v-1h-1v-1h-1v1h-1v-1h-1v1h-3v-1h-1v2h-2v-2h-2v1h-1v2h-1v-3h-10v1h-2v1h-2v-1h-2v-1h-1v1h-1v1h-1v-1h-4v1h-1v-2h-2v2h-2v1h-1v-1h-1v-1h-3v1h-2v-2h-3v1h-2v-1h-2v2h-3v-2h-1v1h-3v-1h-1v1h-1v1h-1v-2h-3v1h-1v-1h-2v2h-1v-2h-8v1h-1v1h-2v-1h-1v2h-1v-1h-2v-2h-2v1h-1v-1h-2v1h-3v-1h-3v1h-2v1h-1v-2h-1v1h-2v1h-1v-1h-1v-1h-5v1h-3v1h-3v-2h-2v1h-1v-1h-1v1h-1v-1h-2v2h-2v-1h-1v-1h-1v1h-2v-1h-1v1h-2v-1h-3v3h-2v-2h-1v1h-2v3h-1v-3h-3v-1h-2v-1h-2v1h-1v-1h-1v2h-1v-1h-2v-1h-2v2h-1v-1h-1v-1h-1v2h-1v-1h-1v1h-3v-1h-3v-1h-1v1h-1v-1h-3v2h-1v-2h-1v1h-2v1h-1v-1h-2v1h-2v-2h-1v1h-1v-1h-1v1h-3v1h-2v1h-1v-1h-2v-2h-4v1h-3v2h-1v-2h-1v-1h-2v2h-2v-2h-1v2h-2v-1h-1v-1h-1v2h-1v-2h-1v1h-1v1h-1v-1h-1v1h-1v-2h-2v1h-1v-1h-1v2h-2v-1h-3v1h-2v-2h-1v1h-1v-1h-5v2h-1v-2h-2v1h-3v-1h-2v2h-1v-1h-2v1h-1v-1h-1v-1h-2v2h-1v-2h-3v1h-2v-1h-1v1h-2v1h-1v-2h-3v2h-1v-1h-1v1h-2v-1h-1v1h-1v1h-1v-2h-1v4h-1v-3h-1v-2h-3v2h-3v-1h-1v1h-3v-2h-1v1h-1v-1h-4v1h-1v-1h-1v1h-1v-1h-2v2h-1v-1h-2v1h-1v-2h-2v1h-2v-1h-1v1h-3v1h-3v-1h-1v-1h-2v1h-1v-1h-1v2h-1v-1h-2v1h-1v-2h-1v1h-6v-1h-3v1h-2v1h-1v-2h-1v2h-1v-2h-1v1h-1v1h-2v-1h-1v-1h-2v1h-1v-1h-1v1h-1v1h-1v-1h-2v2h-1v-3h-2v1h-1v-1h-1v2h-1v-1h-1v-1h-1v2h-1v-2h-1v1h-2v-1h-1v2h-2v-1h-1v-1h-1v1h-1v1h-2v-1h-2v1h-1v-2h-1v1h-1v-1h-1v1h-2v1h-3v-2h-1v2h-1v-2h-4v2h-1v-1h-1v2h-1v-1h-1v-2h-1v2h-3v-2h-2v2h-1v-2h-1v2h-1v-2h-1v2h-1v-2h-2v1h-1v-1h-1v2h-1v-1h-2v1h-1v-1h-2v1h-1v-1h-1v1h-1v-2h-1v2h-1v-1h-1v-1h-2v2h-1v-2h-2v2h-1v-1h-3v1h-2v-1h-1v-1h-1v2h-1v-2h-1v2h-1v-1h-1v1h-2v-1h-1v1h-1v-2h-1v2h-1v-1h-1v1h-1v-2h-4v1h-2v-1h-1v2h-1v-2h-1v1h-3v-1h-1v2h-3v-2h-5v1h-3v-1h-1v2h-2v-2h-1v4h-1v-3h-1v-1h-1v2h-1v-2h-1v2h-1v-2h-3v1h-1v-1h-2v2h-1v-2h-1v2h-1v-2h-3v1h-1v1h-1v-1h-1v1h-1v-2h-2v1h-2v-1h-3v2h-1v-2h-1v2h-1v-1h-1v-1h-2v1h-2v-1h-3v2h-1v-2h-1v2h-2v-1h-3v-1h-1v2h-1v-1h-2v-1h-2v1h-1v1h-2v-1h-1v-1h-1v1h-1v1h-2v-2h-1v2h-1v-2h-1v1h-3v1h-1v-1h-3v2h-1v-3h-1v1h-1v-1h-3v1h-1v1h-1v1h-1v-2h-1v-1h-1v1h-2v1h-4v-2h-1v1h-1v-1h-3v2h-1v-2h-5v1h-1v-1h-1v1h-1v1h-2v-2h-1v1h-1v-1h-1v2h-1v-2h-2v1h-1v1h-1v4h-1v-4h-2v-1h-1v-1h-1v1h-1v-1h-3v4h-1v-2h-3v-2h-1v2h-2v-1h-5v-1h-2v1h-2v1h-1v-1h-1v-1h-1v1h-1v1h-2v-2h-2v2h-2v-2h-3v1h-2v1h-1v-1h-3v-1h-5v1h-2v1h-4v-1h-2v-1h-2v2h-1v-2h-1v1h-1v1h-1v-2h-1v1h-1v-1h-1v1h-1v1h-1v-2h-3v1h-1v2h-1v-3h-1v2h-3v-1h-2v-1h-1v1h-1v-1h-1v2h-2v-1h-1v-1h-4v1h-1v-1h-1v1h-1v-1h-4v2h-1v-2h-2v1h-5v-1h-1v2h-2v-1h-2v1h-2v-2h-1v2h-1v-1h-1v1h-1v-1h-1v-1h-1v2h-1v-1h-3v-1h-2v2h-2v2h-1v-2h-1v-1h-2v1h-1v-1h-3v-1h-2v2h-3v-1h-1v1h-1v-2h-1v1h-1v-1h-1v2h-1v-1h-1v-1h-2v2h-1v-1h-2v-1h-2v2h-2v-2h-1v2h-2v-2h-2v1h-2v-1h-1v2h-2v-1h-1v-1h-1v2h-1v-1h-1v-1h-2v1h-2v-1h-1v1h-1v-1h-1v1h-1v-1h-1v1h-1v1h-1v-1h-2v-1h-2v1h-2v-1h-3v2h-2v-2h-1v1h-1v-1h-1v2h-1v-1h-2v1h-1v-2h-2v2h-1v-1h-1v1h-1v-1h-1v1h-2v-1h-2v-1h-1v2h-3v-2h-2v1h-3v1h-1v-1h-3v1h-1v-1h-3v-1h-2v2h-1v-2h-1v1h-1v-1h-2v1h-2v-1h-1v1h-3v-1h-2v2h-1v-1h-3v-1h-4v1h-1v-1h-1v2h-1v-1h-2v1h-3v-1h-1v-1h-1v1h-1v-1h-1v1h-3v1h-1v-2h-1v2h-2v3h-1v-5h-1v2h-2v-2h-1v2h-2v2h-1v-3h-3v1h-3v-1h-3v1h-2v-1h-1v1h-1v-1h-2v1h-1v1h-1v-1h-3v-2h-2v2h-1v-2h-1v1h-3v4h-1v-4h-2v1h-1v-2h-1v2h-1v-2h-1v2h-2v-1h-1v1h-3v-1h-1v1h-1v-2h-2v1h-3v1h-3v-2h-5v1h-1v-1h-3v2h-1v-2h-4v1h-1v-1h-2v2h-2v-2h-1v1h-3v-1h-1v2h-1v-1h-1v2h-1v-3h-2v1h-1v1h-1v-1h-1v-1h-1v2h-1v-1h-1v1h-2v-1h-2v-1h-1v2h-1v-2h-1v1h-1v-1h-1v2h-2z"/>
<path d="M277,455h1v-1h1v-1h2v2h1v-2h1v2h1v-1h1v1h1v-1h1v1h1v-2h2v2h4v-2h2v1h1v-1h1v1h1v-1h1v2h1v-1h1v1h1v-1h1v1h1v-2h1v2h2v-2h1v1h2v-1h1v2h2v-2h2v2h1v-1h1v-1h5v2h1v-2h2v1h1v-4h1v4h1v1h1v-2h1v1h1v-1h1v2h1v-2h2v2h1v-2h1v1h2v1h1v-1h1v-1h1v2h1v-1h1v-1h2v1h2v1h1v-1h1v1h1v-1h1v1h1v-2h1v2h2v-2h2v1h1v1h6v-1h1v-1h1v2h2v-1h1v-1h1v2h1v-2h3v1h4v-1h1v2h3v-1h5v1h1v-1h2v1h2v-1h2v1h4v-1h1v1h3v-1h1v1h2v-2h1v2h9v-1h3v1h2v-2h1v1h1v1h2v-1h3v1h1v-2h1v2h2v-2h1v1h2v-1h2v1h2v-1h1v2h2v-2h1v2h2v-2h3v2h1v-1h4v-1h1v1h1v1h1v-2h6v1h1v-1h1v1h1v1h1v-1h2v1h1v-2h1v2h4v-1h2v1h1v-1h2v-1h4v1h1v-1h1v2h2v-2h2v2h3v-1h6v1h1v-1h1v1h1v-2h1v2h1v-1h1v1h3v-2h1v1h1v1h1v-1h1v1h1v-2h1v2h1v-1h4v1h3v-2h1v1h1v1h1v-1h2v1h1v-1h1v1h2v-2h2v1h3v1h2v-2h1v2h1v-2h3v2h3v-1h2v1h1v-2h1v2h1v-1h1v1h3v-2h1v2h1v-1h1v1h2v-2h1v2h2v-1h3v1h1v-1h3v1h2v-5h1v5h3v-2h1v2h2v-1h1v1h1v-2h4v2h3v-1h1v-1h1v1h1v1h1v-1h3v-1h1v1h2v1h4v-1h1v-1h2v2h1v-5h1v5h1v-1h2v-1h2v2h1v-2h1v2h3v-1h1v-1h1v1h1v1h2v-1h1v1h2v-1h1v1h1v-1h1v1h1v-2h1v1h2v-1h1v2h1v-1h2v-1h1v1h1v-1h1v2h1v-1h2v1h1v-1h1v1h1v-2h1v1h3v1h3v-1h1v1h2v-1h1v1h1v-1h2v-1h5v1h1v-1h1v1h1v-1h1v1h1v1h4v-1h1v1h5v-2h1v2h1v-1h1v-1h6v2h1v-1h2v-1h2v2h2v-1h1v-1h2v1h2v1h4v-1h1v1h1v-2h1v1h1v1h1v-2h3v2h1v-1h1v-1h2v2h2v-1h1v-1h1v2h1v-1h1v1h1v-2h1v1h1v-1h2v1h1v-1h1v2h6v-4h1v4h5v-2h1v2h1v-1h1v1h1v-1h1v1h4v-2h1v1h3v1h5v-1h2v-1h1v1h3v-1h2v1h2v1h2v-1h4v-1h2v1h2v-1h1v1h2v1h1v-2h2v2h2v-1h1v-1h3v1h1v-1h2v2h1v-1h1v-1h1v2h1v-2h1v1h2v1h2v-1h1v-1h1v2h2v-1h4v1h1v-1h1v1h2v-1h1v-1h1v1h5v-1h2v1h1v-1h2v2h1v-2h1v2h3v-2h1v2h1v-1h2v-1h1v1h1v1h1v-1h1v-1h3v2h2v-2h3v2h6v-1h1v1h8v-1h1v-1h1v2h1v-2h1v1h1v1h2v-1h2v-1h2v2h1v-2h1v1h1v1h1v-1h2v-1h2v1h1v1h5v-1h1v-1h1v1h2v1h2v-1h2v1h1v-1h2v1h2v-1h1v1h3v-1h1v-1h2v1h1v-1h1v2h1v-2h1v1h4v-1h2v1h3v-1h2v2h3v-2h3v1h1v1h3v-2h1v2h1v-1h2v-1h1v2h1v-1h1v-1h1v2h1v-1h3v1h4v-2h1v1h1v1h2v-1h1v1h1v-1h2v1h4v-1h1v1h1v-1h5v1h4v-1h1v1h5v-1h1v1h1v-1h2v1h1v-1h5v-1h1v2h1v-1h1v1h1v-2h2v2h1v-1h1v1h1v-1h3v-1h1v1h3v1h1v-2h1v2h2v-2h1v1h2v-1h2v1h3v1h1v-1h3v1h6v-2h3v2h1v-2h1v2h1v-2h1v2h2v-2h3v1h1v-1h1v2h2v-1h1v1h3v-2h2v1h1v1h1v-2h1v1h2v1h1v-1h2v1h2v-1h5v-1h1v1h1v1h1v-2h1v2h1v-2h1v2h2v-1h1v-1h3v2h1v-1h1v-1h1v1h2v1h1v-2h1v2h1v-1h1v-1h1v2h1v-2h2v1h1v-1h1v2h1v-1h3v1h1v-1h1v-1h3v1h1v-1h2v2h1v-1h1v-1h3v2h1v-2h2v1h1v1h4v-5h1v3h3v1h1v-1h1v2h1v-1h2v1h2v-2h2v2h2v-2h4v1h1v1h1v-5h1v5h4v-1h3v1h1v-2h2v1h1v1h1v-2h1v1h1v-1h1v2h6v-1h1v1h2v-1h2v-1h1v2h2v-2h1v2h1v-1h1v-1h1v1h1v-1h3v2h1v-1h1v-1h1v2h3v-1h4v1h1v-1h2v1h1v-1h1v-4h1v3h1v1h1v1h1v-1h1v-1h1v1h5v1h2v-2h1v2h2v-2h2v2h4v-1h1v-1h5v2h2v-1h1v1h1v-1h3v-1h3v2h1v-1h1v1h1v-2h3v1h1v-1h3v2h2v-1h1v1h1v-1h1v-1h4v1h1v-1h1v1h2v1h7v-2h1v1h3v1h2v-2h2v2h1v-2h4v2h3v-2h1v2h2v-2h1v1h3v-1h3v1h1v-1h1v2h1v-1h1v1h2v-1h1v1h2v-1h2v1h1v-1h1v1h2v-2h2v2h1v-1h1v1h2v-2h1v1h1v-1h1v1h2v-1h2v1h2v-1h1v2h2v-1h3v1h1v-5h1v5h2v-2h1v1h1v1h3v-1h2v1h1v-2h1v2h1v-1h2v-1h1v2h1v-2h2v2h2v-1h1v-1h1v2h1v-1h1v1h1v-1h1v1h1v-1h1v1h2v-2h1v2h2v-1h1v1h4v-1h1v1h2v-1h4v-4h1v4h1v1h1v-1h1v1h1v-1h1v-1h1v-1h1v2h3v-1h1v2h3v-1h1v1h1v-3h1v1h1v1h1v1h1v-2h3v2h1v-1h1v1h3v-2h1v1h2v1h2v-1h1v-1h1v6h-2v1h-4v-1h-1v1h-2v-1h-1v1h-3v-1h-2v1h-1v-1h-1v2h-1v-1h-1v-1h-4v1h-2v-1h-1v1h-5v1h-2v-2h-1v1h-2v-1h-1v1h-1v-1h-1v1h-1v-1h-1v2h-4v-2h-2v2h-1v4h-1v-6h-2v2h-1v-2h-1v2h-5v-1h-1v-1h-1v1h-3v-1h-2v3h-1v-3h-6v2h-3v-2h-1v3h-1v-2h-4v1h-4v-1h-1v1h-1v-1h-1v-1h-3v1h-2v-1h-1v2h-2v-2h-1v1h-2v1h-2v-1h-1v-1h-2v1h-1v1h-5v2h-1v-2h-1v-1h-1v-1h-1v1h-2v-1h-1v2h-1v-2h-1v1h-1v-1h-3v1h-1v-1h-2v1h-1v1h-1v-1h-3v1h-3v-2h-2v1h-1v1h-1v-2h-1v1h-1v-1h-5v2h-1v-1h-1v1h-1v-2h-2v1h-1v1h-1v-1h-1v-1h-1v2h-1v-2h-1v2h-1v-2h-1v1h-1v-1h-2v1h-3v-1h-2v2h-1v-2h-1v2h-1v-2h-1v1h-1v-1h-2v1h-2v1h-1v-2h-1v2h-1v-2h-1v1h-2v1h-1v-2h-1v1h-2v-1h-1v1h-2v-1h-2v2h-1v-2h-2v2h-1v-1h-1v1h-2v-1h-1v-1h-1v2h-1v-2h-6v1h-3v-1h-2v2h-1v-2h-4v1h-1v-1h-2v2h-1v-2h-2v1h-1v1h-1v-1h-1v-1h-1v1h-3v1h-1v-2h-1v2h-1v-2h-1v2h-2v-2h-1v2h-2v-2h-2v2h-1v-1h-1v-1h-1v2h-1v-2h-1v2h-3v-1h-1v1h-1v-2h-3v1h-4v-1h-4v2h-1v-2h-5v1h-1v-1h-2v2h-1v-2h-2v1h-1v1h-1v-2h-2v2h-1v-2h-1v1h-3v-1h-2v1h-1v-1h-2v3h-1v-1h-2v-2h-1v1h-2v1h-2v-1h-3v1h-2v-1h-1v1h-1v-2h-1v1h-3v1h-1v-1h-2v1h-1v-2h-3v2h-1v-1h-2v-1h-1v1h-1v-1h-2v1h-2v-1h-2v1h-1v-1h-4v2h-2v-2h-2v2h-1v-1h-1v1h-2v-2h-3v1h-1v-1h-2v2h-1v-2h-3v1h-1v-1h-4v1h-1v-1h-3v1h-2v-1h-6v2h-1v-2h-2v1h-2v-1h-1v1h-4v-1h-2v2h-1v-2h-2v2h-1v-2h-1v1h-1v-1h-3v2h-1v-1h-1v-1h-1v2h-2v-2h-2v2h-1v-1h-2v1h-3v-1h-1v-1h-1v2h-1v-1h-4v1h-1v-2h-2v2h-1v-2h-1v2h-2v-2h-2v1h-3v-1h-1v1h-1v-1h-1v2h-1v-2h-1v1h-1v-1h-1v1h-1v-1h-1v2h-2v-2h-2v2h-1v-2h-1v1h-1v1h-3v-2h-2v2h-1v-2h-6v2h-1v-2h-3v2h-1v-1h-3v-1h-2v2h-4v-1h-1v-1h-1v1h-3v1h-1v-2h-3v2h-2v-2h-1v2h-1v-1h-1v-1h-4v1h-1v1h-1v-2h-1v2h-2v-1h-1v1h-1v-1h-3v1h-3v-2h-2v1h-1v-1h-2v1h-1v1h-1v-1h-2v1h-1v-2h-2v1h-3v1h-1v-1h-1v-1h-1v2h-2v-2h-3v1h-2v-1h-1v1h-1v-1h-1v2h-1v-1h-1v1h-1v-2h-2v2h-1v-2h-2v2h-2v-1h-2v2h-1v-2h-3v-1h-1v2h-2v-2h-1v1h-1v1h-1v-1h-1v-1h-1v1h-1v4h-1v-5h-2v1h-1v1h-1v-1h-2v3h-1v-1h-1v-3h-1v1h-2v-1h-3v2h-1v-1h-1v-1h-1v1h-1v-1h-2v2h-1v-1h-1v1h-1v-1h-3v-1h-7v1h-1v-1h-1v2h-2v-1h-1v-1h-1v2h-2v-2h-1v2h-3v-2h-2v1h-2v1h-1v-1h-1v1h-1v-1h-1v-1h-1v1h-3v1h-1v-2h-1v1h-1v1h-1v-2h-3v2h-3v-1h-2v1h-1v-2h-1v2h-1v-2h-1v2h-1v-2h-3v1h-1v-1h-1v2h-1v-1h-3v-1h-4v1h-1v-1h-2v2h-1v-2h-3v2h-1v-1h-3v-1h-1v1h-13v1h-1v-1h-1v-1h-2v1h-3v-1h-3v1h-1v1h-1v-1h-1v-1h-1v2h-2v-1h-2v-1h-1v1h-1v-1h-4v2h-4v-2h-3v1h-3v-1h-5v1h-1v-1h-9v1h-1v-1h-1v2h-1v-1h-1v1h-1v-1h-1v-1h-3v2h-1v-1h-1v1h-2v-2h-6v2h-1v-2h-1v1h-1v1h-3v-1h-1v1h-2v-2h-1v1h-1v1h-1v-2h-5v2h-2v-2h-5v2h-2v-2h-6v2h-1v-2h-2v1h-2v-1h-1v2h-2v-2h-1v1h-2v-1h-1v1h-1v-1h-2v2h-1v-1h-1v-1h-1v2h-2v-2h-1v2h-1v-2h-1v1h-2v1h-3v4h-1v-6h-1v1h-1v-1h-1v1h-3v1h-1v-2h-1v1h-2v-1h-3v1h-1v1h-1v-1h-2v1h-1v-2h-4v1h-2v1h-2v-1h-2v-1h-2v1h-2v4h-1v-5h-2v2h-1v-2h-3v2h-1v-2h-1v6h-1v-4h-2v-2h-1v2h-1v-2h-1v1h-1v-1h-1v1h-4v1h-1v-1h-2v-1h-1v1h-1v1h-2v-2h-1v2h-1v-2h-1v1h-4v1h-1v-2h-1v1h-1v-1h-1v2h-1v-2h-1v1h-1v-1h-2v1h-2v-1h-1v2h-1v1h-1v-1h-1v-2h-2v2h-2v-2h-2v2h-1v-2h-4v1h-4v-1h-4v2h-2v-2h-1v2h-1v-1h-2v-1h-2v2h-1v-2h-2v2h-2v-2h-1v2h-1v-1h-1v1h-3v-2h-1v5h-1v-5h-1v1h-1v-1h-1v1h-2v1h-3v-2h-2v2h-1v-2h-1v1h-2v-1h-1v1h-1v-1h-1v1h-2v1h-3v-1h-1v-1h-1v1h-1v-1h-2v2h-3v-2h-1v2h-1v-1h-1v-1h-1v2h-1v-2h-1v1h-1v-1h-2v2h-1v-2h-1v1h-1v-1h-2v2h-1v-2h-5v1h-1v1h-1v-1h-7v1h-1v-2h-2v1h-3v-1h-3v1h-1v-1h-3v2h-2v-2h-1v2h-1v-2h-3v1h-2v1h-1v-2h-2v2h-2v-2h-2v2h-2v-2h-2v2h-2v-2h-2v2h-1v-2h-1v1h-1v-1h-1v2h-1v-2h-2v2h-1v-2h-2v2h-2v-2h-1v2h-1v-1h-5v1h-1v-2h-3v2h-1v-1h-1v1h-1v-1h-2v-1h-7v2h-1v-1h-2v1h-1v-2h-2v1h-2v-1h-1v1h-1v-1h-4v1h-1v-1h-4v1h-2v-1h-6v2h-1v-1h-1v1h-2v-1h-1v1h-1v-2h-5v1h-6v1h-1v-1h-2v-1h-1v1h-4v-1h-2v2h-2v-1h-1v-1h-1v1h-6v-1h-4v2h-3v-1h-2v1h-1v-2h-3v2h-1v-2h-2v1h-1v1h-1v-1h-1v1h-2v-2h-2z"/>
<path d="M277,483h1v3h1v-1h1v-2h1v2h2v-1h1v2h4v-2h1v1h1v-1h1v2h1v-2h1v1h1v-1h1v1h3v-1h3v1h1v1h1v-2h1v1h2v1h1v-3h1v1h1v1h2v1h1v-2h1v1h1v-1h1v1h1v-1h1v1h1v1h2v-1h1v-2h1v3h2v-2h7v-1h2v3h4v-1h2v1h2v-1h2v1h2v-1h1v1h2v-2h1v2h1v-3h2v3h2v-2h2v1h1v1h1v-1h2v1h2v-2h1v-1h2v3h1v-1h2v-1h1v2h1v-1h1v-1h3v2h1v-2h1v2h1v-2h1v1h1v-1h1v1h2v-1h1v1h3v-1h1v2h2v-1h2v1h1v-2h3v-1h1v2h1v1h1v-2h1v1h1v1h1v-1h1v-1h1v1h1v-1h1v2h3v-1h2v1h2v-1h1v-1h3v1h1v1h5v-1h1v1h2v-2h1v2h1v-2h1v1h1v1h5v-2h1v2h3v-2h3v1h2v-1h1v2h1v-2h1v2h1v-3h1v1h1v1h1v-1h2v1h2v1h1v-3h1v3h1v-1h1v1h2v-1h1v1h2v-2h1v2h1v-2h1v2h5v-1h3v-1h1v1h1v1h1v-2h1v2h2v-1h1v-1h1v-1h2v2h1v-1h2v1h1v1h1v-2h1v-1h2v2h1v1h2v-1h1v1h5v-2h3v2h1v-1h5v-2h1v2h2v-1h1v1h1v1h1v-1h1v1h1v-1h1v1h1v-1h1v1h1v-4h1v4h1v-1h2v1h1v-4h1v3h1v-1h1v1h1v1h1v-2h3v2h1v-1h1v1h1v-2h1v1h2v1h5v-3h1v2h1v-1h1v1h2v1h1v-1h2v1h2v-1h1v1h2v-1h1v1h3v-2h1v2h1v-2h1v-1h1v1h1v1h1v-1h1v1h4v1h3v-2h2v1h1v-1h1v1h2v1h2v-2h1v-1h1v3h1v-2h1v1h4v-1h1v2h1v-1h1v-2h1v3h1v-2h1v2h2v-2h1v2h1v-1h4v1h5v-1h4v-2h2v1h1v2h3v-1h1v-2h1v1h1v2h4v-1h3v1h1v-2h2v1h2v-1h1v1h1v1h2v-2h3v1h3v1h1v-1h2v-1h2v1h2v1h1v-2h2v1h2v1h2v-1h4v-2h5v1h1v1h2v-3h1v4h1v-2h3v1h1v-1h2v1h1v-3h1v4h3v-3h2v3h2v-2h3v1h1v1h2v-1h2v1h1v-1h1v-1h1v2h1v-1h2v1h2v-1h1v-2h1v1h1v1h2v-1h1v1h2v1h2v-1h1v1h1v-2h1v2h2v-3h1v3h1v-1h1v-1h1v2h1v-1h1v1h1v-1h5v-1h1v1h1v-1h1v2h1v-1h3v-1h2v2h1v-2h3v1h2v1h3v-1h6v-1h1v1h5v1h2v-2h2v1h2v-1h1v1h3v1h1v-1h7v-2h1v1h1v2h2v-3h2v2h1v1h2v-1h1v-1h2v1h1v-1h3v1h2v-2h2v3h5v-2h1v2h1v-2h1v-1h1v1h1v1h1v1h1v-1h1v1h2v-2h1v2h1v-2h1v2h1v-3h1v2h2v-1h1v2h1v-2h1v1h1v1h2v-2h1v2h2v-2h1v2h1v-2h1v2h1v-1h2v-1h2v2h1v-2h1v1h1v1h2v-2h1v1h1v-2h1v2h1v-2h2v1h2v-1h1v2h2v1h1v-3h1v2h2v1h2v-2h1v-1h1v2h2v1h1v-1h2v1h2v-1h3v1h1v-1h1v-1h1v-1h1v3h1v-1h5v-1h1v2h2v-1h2v-2h1v1h1v1h1v1h4v-1h4v1h8v-1h1v-4h1v3h2v2h1v-1h1v1h2v-1h1v1h1v-1h1v1h2v-1h1v-1h1v1h1v-1h1v2h2v-2h1v2h1v-1h1v1h3v-1h1v-1h1v2h1v-1h1v-1h2v1h1v-1h1v2h1v-3h1v2h1v1h1v-2h3v2h3v-1h1v1h3v-1h4v1h1v-1h1v1h1v-1h2v1h1v-1h1v-2h1v3h1v-2h3v1h1v1h1v-2h1v1h1v1h2v-1h2v-1h2v2h2v-2h1v1h1v-1h1v1h1v-2h2v3h1v-1h2v-1h1v-1h1v3h4v-2h1v1h1v1h2v-1h2v-1h1v1h3v-1h1v1h2v1h1v-2h1v-1h1v1h1v2h1v-1h2v1h2v-1h1v-2h2v3h2v-1h3v-1h3v2h3v-2h1v2h3v-3h1v2h1v1h1v-2h2v1h1v-1h3v2h1v-2h1v1h1v-1h2v1h1v-1h3v2h1v-1h1v-1h1v1h1v1h2v-2h2v1h3v1h1v-2h1v2h1v-1h1v1h2v-3h3v2h2v-1h1v2h1v-2h1v1h1v1h1v-2h1v1h4v1h4v-3h1v2h1v-1h3v2h4v-2h2v2h2v-2h2v-1h1v3h1v-1h1v1h1v-3h1v2h1v1h1v-2h1v2h4v-3h1v1h1v1h1v1h2v-2h2v1h1v1h1v-1h1v1h2v-1h1v-1h3v2h1v-2h1v1h3v1h1v-1h4v-1h1v1h1v-3h1v2h2v1h2v-1h1v-1h1v3h1v-3h1v1h1v2h1v-3h1v1h1v1h2v-1h1v2h1v-1h1v1h2v-2h1v2h1v-1h1v1h2v-2h2v1h2v1h1v-2h2v-2h1v4h1v-2h1v-1h1v1h3v1h2v-3h1v1h3v2h1v-4h1v4h1v-1h1v2h4v-2h1v2h1v-1h1v1h2v-2h1v2h1v-1h5v-1h1v1h2v-2h1v3h1v-1h2v-1h3v2h5v-3h1v2h1v1h1v-3h1v1h3v1h1v-1h1v1h1v-1h1v1h1v1h1v-2h1v2h1v-3h1v2h1v-1h1v2h1v-1h1v1h2v-1h1v1h2v-1h2v1h2v-5h1v3h5v2h4v-2h3v1h5v-1h2v1h1v-2h1v1h3v1h2v1h1v-2h1v2h1v-2h2v2h3v-3h1v2h1v-1h2v1h2v-1h1v2h1v-1h1v1h2v-1h1v1h3v-2h1v2h1v-1h1v1h3v-1h1v1h2v-1h1v1h5v-5h1v4h1v-1h1v2h4v-2h1v1h1v-1h1v-3h1v3h4v-1h1v3h1v-2h4v2h2v-1h1v-2h1v2h1v-1h5v1h1v-2h1v3h3v-2h3v1h1v1h1v-2h2v2h1v-1h1v-1h1v1h1v1h2v-1h1v1h2v-2h5v-1h1v1h1v2h1v-2h2v1h2v-2h1v3h1v-1h2v-1h2v1h2v-1h1v2h2v-2h1v2h2v-2h1v2h2v5h-2v-1h-2v2h-1v-2h-1v1h-1v2h-1v-2h-1v-1h-1v1h-1v-1h-1v2h-1v3h-1v-3h-4v1h-3v-1h-3v-1h-2v-1h-2v1h-1v-1h-1v2h-1v-2h-1v1h-1v-1h-1v2h-1v1h-1v-2h-3v1h-1v-1h-1v3h-1v-4h-5v2h-1v-2h-1v1h-1v1h-1v-1h-1v1h-2v-1h-3v2h-1v-1h-1v-2h-3v2h-1v-1h-1v1h-1v-2h-1v3h-1v-3h-1v1h-2v1h-1v-2h-2v2h-2v-2h-2v1h-2v1h-2v-2h-1v3h-1v-2h-1v1h-2v-2h-1v2h-1v-1h-3v-1h-3v2h-3v-2h-2v3h-2v-3h-1v1h-1v1h-1v-1h-2v1h-1v-2h-1v1h-2v1h-2v-1h-1v2h-1v-3h-3v3h-1v-2h-2v-1h-1v3h-2v-3h-2v2h-1v-1h-1v1h-1v-1h-1v1h-1v-2h-2v2h-2v-1h-1v1h-1v-2h-3v2h-1v-1h-1v2h-1v-1h-2v-2h-1v1h-2v2h-2v-2h-2v1h-1v-1h-3v1h-3v-1h-2v-1h-6v2h-1v-2h-1v1h-2v2h-2v-1h-1v-2h-3v2h-3v-2h-1v2h-2v-2h-1v2h-2v3h-1v-5h-1v1h-2v-1h-2v2h-2v-2h-1v2h-1v1h-1v-3h-1v2h-1v-1h-1v-1h-4v1h-1v1h-1v-2h-5v1h-1v1h-1v-1h-1v1h-1v-1h-2v1h-2v-2h-3v1h-4v1h-1v-2h-1v2h-2v-2h-2v1h-1v-1h-1v2h-1v-2h-4v1h-1v-1h-2v2h-1v-2h-2v1h-2v1h-2v-1h-1v1h-2v1h-1v-3h-2v1h-1v3h-1v-2h-1v-2h-1v1h-1v2h-1v-2h-1v-1h-2v1h-1v-1h-1v1h-2v-1h-3v1h-1v-1h-3v3h-1v-3h-3v1h-1v-1h-1v1h-1v-1h-1v1h-4v1h-1v-1h-2v1h-1v-2h-2v2h-1v1h-1v-2h-1v1h-1v-2h-1v2h-1v-2h-1v6h-1v-4h-1v-2h-5v1h-2v2h-1v-2h-1v-1h-4v2h-1v-2h-2v1h-1v-1h-1v3h-1v-3h-1v2h-1v-2h-1v1h-1v-1h-2v1h-2v2h-1v-3h-1v1h-3v-1h-1v1h-2v1h-1v-1h-1v1h-5v-2h-3v1h-1v-1h-1v2h-1v-2h-2v2h-4v-1h-1v-1h-1v1h-2v-1h-1v3h-1v-3h-2v6h-1v-4h-1v-1h-3v2h-1v-3h-1v2h-1v-2h-2v2h-2v-2h-3v1h-1v2h-1v-2h-2v-1h-2v2h-1v-1h-2v2h-1v-3h-5v1h-2v1h-4v-1h-5v1h-2v-2h-2v1h-3v1h-3v-2h-2v2h-1v-1h-1v-1h-1v2h-2v-2h-4v2h-2v1h-1v-2h-1v-1h-4v3h-1v-2h-1v-1h-1v2h-1v-1h-1v1h-4v-1h-1v1h-1v-2h-1v1h-2v-1h-1v1h-1v1h-1v-1h-4v-1h-1v3h-1v-2h-2v1h-1v-1h-1v1h-1v1h-2v-3h-2v1h-1v1h-3v-2h-1v3h-1v-3h-3v1h-1v2h-1v-2h-1v-1h-2v2h-1v1h-1v1h-1v-3h-1v1h-3v-2h-2v1h-2v1h-8v-2h-2v2h-2v-1h-1v-1h-2v1h-3v1h-2v-2h-4v1h-1v1h-2v-2h-3v1h-1v1h-1v-1h-1v2h-1v-1h-5v1h-1v-2h-1v1h-1v-2h-3v1h-3v-1h-1v3h-1v-1h-1v1h-1v-3h-1v1h-1v-1h-3v1h-1v1h-2v-1h-2v-1h-1v1h-1v1h-1v-1h-2v-1h-2v2h-1v-1h-2v1h-1v-1h-1v-1h-5v3h-2v-3h-2v3h-1v-1h-1v-2h-1v3h-1v-1h-1v1h-1v-1h-2v-1h-1v1h-1v-1h-1v-1h-2v3h-1v-3h-1v2h-2v-1h-2v-1h-3v2h-1v-2h-1v1h-2v-1h-2v1h-3v1h-1v-2h-1v1h-1v-1h-1v1h-3v2h-1v-1h-2v1h-1v-1h-2v-1h-4v1h-1v-1h-1v2h-1v3h-1v-3h-1v-3h-2v1h-2v1h-1v1h-2v-1h-1v-2h-1v2h-2v-2h-4v2h-1v-2h-1v1h-2v-1h-1v2h-1v-1h-2v-1h-1v2h-1v-2h-1v3h-2v-1h-1v-1h-1v2h-1v-1h-1v-2h-2v2h-1v1h-2v-3h-2v2h-1v-2h-1v1h-1v-1h-1v1h-1v5h-1v-5h-2v1h-1v-2h-2v6h-1v-6h-3v4h-1v-2h-4v-2h-2v3h-1v-1h-3v-2h-1v1h-1v-1h-2v1h-1v2h-2v-1h-3v-1h-1v1h-4v-2h-1v1h-1v-1h-1v2h-1v-2h-1v2h-2v-2h-1v2h-1v-2h-1v2h-2v1h-1v-1h-1v-1h-1v1h-2v-1h-1v2h-1v-3h-1v2h-1v-2h-4v1h-1v1h-2v-1h-1v1h-4v-2h-1v1h-2v-1h-1v3h-1v-3h-3v6h-1v-4h-2v-2h-1v1h-1v-1h-1v2h-1v-2h-2v1h-1v1h-1v-1h-1v1h-1v-1h-3v1h-3v-2h-1v1h-1v1h-1v-2h-1v1h-1v-1h-1v1h-1v1h-2v-2h-2v2h-2v-2h-3v1h-1v-1h-2v1h-1v1h-1v-1h-1v1h-2v-2h-1v2h-2v-2h-1v1h-3v1h-2v-2h-2v1h-1v1h-1v4h-1v-5h-2v-1h-3v2h-3v-2h-4v2h-1v-1h-2v-1h-1v1h-2v1h-1v-2h-2v2h-1v-1h-2v-1h-1v6h-1v-4h-1v-1h-1v-1h-1v1h-5v1h-1v-1h-1v-1h-1v2h-1v-1h-1v-1h-1v2h-2v-2h-1v1h-1v-1h-1v2h-3v-1h-1v-1h-1v2h-1v-2h-1v1h-1v1h-1v-2h-1v2h-1v-1h-3v-1h-1v1h-1v-1h-1v1h-2v1h-3v-1h-4v1h-1v-1h-2v1h-1v-2h-1v1h-1v-1h-3v3h-1v-3h-4v3h-1v-3h-2v1h-1v-1h-1v1h-2v-1h-4v1h-2v-1h-3v2h-2v-2h-1v3h-3v-1h-3v-1h-3v1h-1v-1h-2v-1h-1v1h-2v-1h-4v2h-2v-1h-2v1h-2v-1h-1v-1h-1v2h-1v-1h-1v-1h-1v1h-1v1h-1v-1h-2v-1h-5v2h-1v1h-1v-2h-3v1h-2v-1h-1v1h-1v-1h-2v-1h-2v3h-1v-3h-1v2h-2v-1h-2v-1h-1v2h-1v-2h-2v2h-1v1h-2v-3h-1v1h-1v1h-2v-2h-1v1h-1v-1h-1v1h-1v1h-1v1h-1v-1h-3v-1h-2v-1h-1v1h-2v1h-1v-2h-2v2h-1v-2h-1v2h-1v-1h-2v1h-3v1h-1v-2h-1v-1h-3v1h-1v-1h-1v2h-2v-2h-1v1h-1v-1h-2v1h-1v1h-1v-1h-1v2h-1v-2h-2v-1h-5v1h-1v2h-1v-3h-1v1h-1v-1h-1v2h-2v1h-1v-1h-2v-2h-1v2h-4v-1h-3v2h-1v-1h-3v-1h-4v1h-1v-1h-2v1h-1v-2h-1v3h-3v-3h-1v1h-1v1h-4v1h-1v-2h-2v-1h-1v2h-1v1h-2v-2h-1v-1h-2v2h-1v-2h-4v2h-1v-2h-2v2h-3v-2h-3v1h-1v2h-2v-2h-1v1h-1v-2h-1v2h-1v-1h-4v-1h-2v3h-1v-3h-1v2h-4v-1h-1v1h-2v-2h-1v2h-1v-2h-1v1h-1v-1h-1v1h-3v1h-2v-2h-2v1h-1z"/>
<path d="M277,516h1v-1h2v1h1v-1h1v-2h1v3h2v-2h1v-1h1v1h1v2h2v-1h1v-1h2v1h1v1h2v-1h2v-2h3v3h1v-1h1v1h1v-1h3v-1h3v1h2v-1h1v-1h1v2h1v1h1v-3h3v2h2v1h1v-2h1v1h1v-1h2v1h1v-1h1v2h3v-2h3v1h3v-1h1v1h2v1h1v-2h1v2h1v-3h1v2h1v1h1v-3h1v1h1v1h1v1h1v-1h1v1h2v-1h2v-1h2v1h1v1h1v-2h3v1h1v-2h2v2h1v-2h1v1h3v1h1v-1h1v-1h2v1h3v1h1v1h2v-2h1v2h2v-1h1v1h2v-1h3v-1h1v-1h1v2h1v-3h1v3h2v-1h2v2h2v-3h1v3h1v-3h2v1h1v2h2v-3h1v2h2v-2h1v3h2v-2h2v-1h1v3h1v-1h1v1h1v-2h1v1h2v-1h3v1h2v-1h1v-1h2v1h1v2h2v-1h1v-1h2v1h1v1h2v-3h1v3h1v-1h1v-1h2v1h1v-1h2v1h2v1h3v-1h2v1h1v-3h1v1h3v2h2v-1h1v-2h2v1h1v-1h1v1h1v1h1v1h2v-1h1v1h1v-2h3v2h1v-2h2v-1h1v2h2v-1h2v-1h2v3h1v-1h1v1h1v-2h1v2h1v-2h1v1h1v-1h1v-1h1v3h1v-2h1v1h2v-2h1v2h2v-3h1v1h1v1h1v-1h1v3h1v-1h1v1h2v-2h1v1h1v1h1v-1h1v-1h1v2h1v-3h1v2h1v1h1v-1h1v-1h1v1h2v-2h1v2h4v-2h1v1h3v1h1v1h1v-3h1v2h1v1h1v-1h1v1h2v-1h1v-1h1v1h1v1h1v-2h1v2h1v-1h2v1h1v-1h1v1h1v-1h1v-1h1v2h2v-1h1v1h1v-2h1v2h1v-1h1v1h1v-2h1v-1h1v3h3v-1h1v1h2v-1h3v-1h1v1h2v-1h1v-1h1v3h1v-2h1v1h1v-1h1v1h2v1h1v-4h1v4h3v-3h1v3h1v-2h1v1h2v-2h2v2h3v1h3v-1h1v1h1v-1h2v1h1v-1h4v1h2v-1h2v1h1v-1h1v1h1v-3h1v2h1v-1h1v2h1v-3h1v3h1v-1h2v-1h2v1h1v1h1v-3h1v2h1v-1h1v1h1v1h1v-1h1v1h1v-2h1v-1h1v3h3v-1h2v-1h2v2h1v-1h5v1h2v-2h1v1h1v1h1v-3h1v1h1v1h2v1h1v-2h1v1h2v-1h2v1h1v1h1v-1h1v1h2v-1h2v-1h2v2h1v-1h2v1h1v-2h1v-1h1v1h1v2h6v-3h1v1h1v1h2v1h2v-2h3v1h1v-2h1v3h1v-1h2v1h2v-1h1v1h3v-1h2v-1h3v-1h1v1h2v2h1v-1h1v-1h2v-1h1v2h2v-1h1v2h3v-1h1v1h1v-1h2v1h1v-1h1v-1h2v1h2v1h2v-1h1v-2h1v2h1v-1h2v1h1v1h1v-1h1v-2h1v1h1v2h1v-2h2v-2h1v2h2v1h1v1h1v-1h1v-2h1v3h2v-2h3v1h2v-1h1v-1h3v1h7v1h2v1h2v-1h2v1h1v-2h5v2h1v-1h1v-2h3v1h1v2h1v-3h2v2h2v1h3v-2h2v-1h1v1h1v2h4v-2h2v1h1v1h2v-1h5v-1h1v1h2v-1h2v-1h4v3h1v-1h1v-2h1v2h1v-1h2v1h2v-1h1v-1h3v3h2v-2h4v1h3v1h2v-2h4v1h2v-1h4v2h2v-2h1v2h1v-3h2v1h1v1h2v1h1v-2h1v2h1v-2h3v2h2v-2h3v1h2v-2h1v2h2v1h1v-3h1v3h2v-2h1v1h1v1h1v-1h2v-2h1v2h2v1h1v-2h2v-1h1v3h1v-1h1v1h1v-3h3v3h1v-2h2v2h1v-3h1v1h1v1h2v-2h1v1h1v2h4v-2h2v2h1v-2h1v2h2v-1h2v-1h2v1h1v-1h1v2h5v-2h1v2h3v-1h1v1h1v-3h1v1h1v2h1v-3h1v1h4v-1h2v1h1v-1h1v3h4v-1h1v-1h3v-1h1v2h1v-2h3v2h1v-1h1v2h1v-1h2v-2h2v2h1v-1h2v1h1v-1h1v-1h1v3h1v-1h1v1h2v-2h2v2h1v-1h2v-1h1v1h1v-2h1v3h2v-2h1v1h1v1h3v-1h1v-1h3v2h1v-1h1v-1h1v1h5v-2h1v2h1v-2h1v3h3v-2h2v2h1v-1h1v1h1v-1h5v-4h1v4h2v1h2v-2h2v-2h1v2h1v2h2v-1h2v-1h4v2h1v-2h1v2h1v-1h1v-1h1v1h1v-2h1v2h4v1h1v-1h1v-2h1v1h1v2h1v-1h1v1h1v-3h1v1h1v2h1v-1h1v-1h2v1h6v-1h1v1h1v-1h1v-1h2v1h1v1h1v-1h1v2h1v-1h2v-1h1v1h1v-1h1v-1h2v3h1v-3h1v1h1v2h2v-3h1v3h2v-1h3v-1h2v-1h1v1h2v1h4v-1h2v2h1v-2h2v2h1v-2h1v1h2v1h2v-3h1v2h1v-1h1v-1h1v1h1v-1h1v2h1v-1h1v2h1v-2h1v2h1v-3h1v1h1v2h1v-1h1v-2h1v2h1v-1h2v1h1v-1h2v-1h6v2h4v-1h1v2h1v-2h1v1h3v-2h1v2h2v-1h3v2h2v-1h1v-2h1v1h2v-1h2v1h1v2h2v-1h1v1h3v-1h1v1h2v-2h1v1h2v-1h1v1h3v-2h1v2h4v-2h1v1h1v1h1v-2h1v1h1v1h2v1h1v-1h1v-2h1v1h1v-1h1v2h1v-2h3v3h1v-1h1v-2h1v2h3v-1h1v-1h3v3h1v-2h1v1h1v1h2v-1h1v-2h1v2h1v1h1v-3h2v2h1v-1h5v2h1v-1h1v1h1v-2h1v2h1v-1h1v-1h1v1h1v-1h6v1h5v1h3v-3h1v2h7v-1h1v1h2v1h2v-1h1v-1h1v1h12v-1h1v2h2v-2h3v2h2v-1h2v-3h1v3h1v1h1v-1h1v1h4v-2h5v2h1v-3h1v3h1v-1h1v1h2v-1h2v1h3v-1h1v-1h3v2h2v-3h1v1h1v2h2v-1h1v-1h1v1h1v-4h1v2h1v3h2v-2h1v2h1v-3h2v2h1v1h2v-1h1v1h1v-2h2v-1h1v1h2v1h1v1h1v-1h1v-2h1v1h1v-1h1v1h1v-1h1v2h1v-2h1v2h1v1h1v-1h3v1h1v-3h1v2h2v-2h1v2h2v1h4v-2h2v1h1v-1h1v-1h2v2h1v1h1v-2h1v2h2v-2h1v2h1v-2h2v2h1v-3h3v3h1v-2h1v8h-1v1h-1v-2h-1v2h-1v-2h-1v-1h-1v1h-1v2h-1v-3h-1v2h-1v-1h-1v1h-3v1h-1v-1h-3v-2h-1v1h-1v1h-1v-2h-1v1h-2v2h-1v-3h-4v1h-2v-1h-1v3h-1v-1h-1v-1h-1v2h-1v-3h-3v1h-3v1h-2v-1h-1v2h-1v-2h-2v1h-1v-1h-4v1h-1v-1h-1v1h-1v1h-1v-2h-1v-1h-1v3h-1v-2h-1v1h-4v-2h-1v1h-2v-1h-1v1h-1v2h-1v-3h-4v1h-2v-1h-3v3h-1v-2h-1v1h-1v-2h-2v2h-2v-1h-1v2h-2v-2h-1v1h-1v-1h-1v1h-1v1h-1v-3h-1v3h-1v-1h-2v-1h-1v1h-2v-1h-1v-1h-1v2h-2v-2h-1v1h-1v1h-1v-1h-2v-1h-3v1h-1v1h-1v1h-2v-1h-1v-1h-1v-1h-1v1h-1v1h-2v-2h-2v3h-2v-3h-4v1h-2v2h-1v-2h-1v2h-1v-2h-2v-1h-1v1h-2v2h-1v-2h-1v1h-3v-1h-1v-1h-1v1h-3v1h-1v-1h-2v-1h-1v3h-1v-1h-2v-2h-1v3h-1v-1h-1v-1h-1v-1h-2v2h-3v-2h-4v2h-1v-1h-1v-1h-1v3h-2v-3h-1v2h-1v-2h-2v3h-1v-2h-2v-1h-1v1h-1v1h-5v-1h-1v2h-1v-2h-1v2h-1v-3h-3v1h-2v2h-1v-2h-2v1h-8v-2h-3v2h-1v1h-1v-1h-1v-1h-3v1h-1v-1h-4v-1h-2v2h-1v-2h-1v2h-2v-1h-1v1h-1v-2h-1v2h-2v-2h-1v1h-2v-1h-1v1h-2v-1h-1v1h-1v1h-1v3h-1v-4h-2v-1h-2v3h-2v-2h-2v1h-4v1h-1v-1h-2v-1h-1v1h-1v1h-2v-2h-1v1h-1v-2h-1v3h-1v-1h-1v-2h-2v1h-1v1h-2v-1h-1v2h-1v-1h-1v1h-1v-1h-5v-2h-2v2h-6v-1h-3v2h-1v-2h-1v1h-1v-2h-1v1h-1v1h-1v1h-1v-3h-2v1h-1v2h-1v-3h-1v2h-3v-2h-1v2h-1v2h-1v-3h-1v-1h-1v2h-3v-2h-2v1h-1v1h-2v1h-1v-2h-1v1h-1v-1h-1v-1h-3v2h-2v-2h-1v1h-2v1h-1v1h-1v-1h-1v-1h-6v2h-5v-2h-1v1h-1v-1h-3v1h-3v-1h-1v1h-1v1h-1v-3h-2v3h-2v-2h-1v1h-1v1h-1v-1h-1v-1h-2v1h-1v1h-1v-3h-1v4h-1v-2h-1v-2h-1v1h-1v1h-1v-1h-1v-1h-1v3h-1v-3h-4v2h-2v1h-1v-2h-1v1h-1v-1h-2v1h-5v1h-1v-3h-1v2h-1v4h-1v-5h-3v1h-1v-2h-2v1h-2v1h-1v-2h-1v1h-2v2h-1v-1h-1v-2h-2v1h-1v1h-1v-2h-2v3h-1v-3h-1v1h-2v1h-1v-1h-3v1h-1v-2h-2v1h-1v2h-1v-3h-1v1h-1v1h-2v-1h-4v-1h-1v1h-1v-1h-1v1h-3v-1h-5v3h-1v-3h-1v1h-1v-1h-1v1h-2v1h-1v-1h-2v1h-1v-2h-2v1h-2v1h-2v-1h-1v-1h-1v2h-1v-2h-1v3h-2v-2h-1v-1h-2v2h-1v-1h-1v-1h-3v3h-1v-1h-1v1h-1v-3h-3v2h-1v-1h-4v-1h-1v3h-1v-1h-1v1h-1v-2h-1v-1h-1v4h-1v-4h-2v2h-3v-1h-4v1h-1v-1h-2v1h-1v-1h-2v5h-1v-4h-1v-1h-1v-1h-1v3h-1v-2h-1v-1h-2v2h-1v-1h-3v2h-1v-2h-2v-1h-1v2h-2v-2h-3v1h-1v-1h-6v2h-1v-1h-1v-1h-1v3h-1v-2h-1v1h-1v-2h-2v1h-1v1h-1v-2h-1v1h-1v1h-1v-1h-1v-1h-1v2h-1v-2h-2v1h-1v-1h-2v2h-2v-1h-1v-1h-1v2h-1v1h-3v-2h-3v1h-1v1h-2v-2h-1v2h-1v-1h-1v1h-1v-2h-2v-1h-1v2h-1v-2h-1v1h-1v-1h-4v1h-4v2h-1v-2h-3v-1h-1v3h-1v-1h-2v-1h-1v2h-1v-2h-1v1h-1v4h-1v-5h-1v1h-1v-1h-4v1h-2v-2h-3v3h-2v-1h-2v-2h-1v1h-1v2h-1v-3h-1v1h-1v-1h-1v1h-2v-1h-2v2h-1v-1h-1v2h-1v-1h-3v-2h-4v2h-3v1h-3v-2h-1v2h-1v-3h-1v1h-1v-1h-2v2h-2v1h-2v-1h-1v1h-2v-1h-2v-1h-1v1h-1v-1h-1v1h-1v1h-1v-1h-1v-1h-1v2h-1v-1h-3v-1h-1v1h-1v-1h-1v-1h-1v1h-1v1h-1v-2h-1v2h-1v1h-1v-1h-1v-1h-1v-1h-1v1h-2v-1h-1v1h-1v2h-1v-1h-1v-2h-1v2h-1v-1h-1v1h-1v1h-3v-1h-1v-1h-1v-1h-2v2h-1v-1h-2v2h-2v-1h-3v1h-1v-2h-4v1h-1v1h-1v-3h-1v1h-2v2h-1v-2h-1v1h-2v-1h-2v1h-1v1h-3v-2h-4v-1h-1v2h-1v-1h-1v-1h-1v2h-1v1h-1v-2h-3v-1h-2v2h-1v-2h-1v3h-1v-3h-1v2h-2v-2h-1v1h-1v-1h-2v3h-3v-1h-3v-2h-1v2h-1v-1h-1v-1h-1v1h-2v-1h-1v3h-2v-3h-5v3h-2v-3h-1v1h-2v-1h-2v3h-1v-1h-2v-1h-1v1h-1v-2h-1v1h-1v-1h-2v1h-1v-1h-6v1h-1v2h-2v-2h-2v-1h-3v2h-1v1h-1v-1h-3v-2h-1v2h-5v-2h-1v1h-2v1h-2v-1h-1v1h-4v-1h-3v1h-1v-1h-1v-1h-1v1h-2v1h-2v1h-1v-3h-1v1h-1v1h-2v-2h-2v1h-5v-1h-2v4h-1v-3h-4v1h-1v1h-1v-1h-1v-1h-2v3h-1v-3h-2v-1h-1v2h-2v-2h-1v1h-1v1h-1v-2h-1v2h-1v-1h-2v1h-1v-1h-3v1h-1v-2h-2v1h-2v-1h-2v1h-1v-1h-1v2h-1v1h-1v-1h-1v-2h-1v1h-2v2h-2v-3h-1v1h-1v-1h-1v3h-1v-1h-1v-2h-1v3h-2v-2h-1v1h-4v-1h-2v1h-1v-1h-3v-1h-3v2h-1v-1h-1v1h-2v1h-1v-2h-2v2h-1v-2h-4v-1h-2v1h-1v1h-1v-1h-1v-1h-2v2h-1v-1h-1v5h-1v-5h-1v-1h-1v3h-1v-2h-3v2h-1v-2h-1v1h-3v-1h-1v-1h-1v1h-4v-1h-1v2h-9v-2h-3v2h-1v-1h-3v1h-2v-1h-2v2h-2v-2h-1v1h-1v-1h-1v-1h-3v3h-1v-1h-1v-2h-1v1h-2v2h-1v-3h-1v1h-1v2h-1v-2h-1v-1h-3v2h-4v-1h-1v2h-1v1h-1v-1h-5v-1h-1v-2h-1v2h-1v-2h-1v1h-2v2h-1v-1h-1v-2h-2v2h-1v-2h-2v2h-1v-2h-2v3h-1v-3h-1v2h-1v1h-1v-1h-4v-2h-2v1h-1v1h-1v-2h-1v1h-1v-1h-1v1h-1v-1h-1v2h-1v-1h-5v2h-1v-1h-1v-2h-4v1h-1v-1h-1v1h-1v2h-3v-3h-1v1h-2v2h-1v-3h-1v1h-2v-1h-1v1h-1v2h-3v-2h-3v-1h-1v1h-1v-1h-1v2h-1v2h-1v-3h-2v1h-1v-2h-5v1h-3v-1h-1v3h-1v-3h-1v1h-3v1h-1v1h-1v3h-1v-5h-3v1h-1v-1h-1v2h-1v-1h-2v-1h-1v-1h-1v2h-1v-2h-1v2h-1v1h-2v-1h-1v2h-1v-2h-1v1h-1v-3h-1z"/>
<path d="M277,546h3v-1h1v1h1v-3h1v1h1v1h4v1h2v-1h1v-1h1v1h1v-1h1v2h1v-1h1v1h2v-3h1v1h1v2h1v-1h4v-2h1v1h1v2h1v-1h11v1h3v-3h1v1h2v2h1v-2h1v1h1v-1h1v1h1v-2h1v1h1v1h3v-1h1v2h1v-2h1v2h3v-1h1v-1h1v1h1v1h1v-2h1v2h1v-1h1v1h1v-5h1v5h1v-2h1v2h2v-2h1v1h4v1h2v-2h4v1h1v-1h1v1h1v-1h2v2h1v-1h5v1h1v-2h4v1h1v1h1v-3h2v2h1v1h4v-2h1v1h3v1h5v-1h2v-1h2v1h3v-1h1v2h1v-2h1v1h1v1h2v-2h1v2h3v-2h1v1h1v-1h1v2h3v-1h1v-1h1v2h1v-3h1v3h2v-2h1v1h1v-2h1v1h1v1h1v-3h1v4h1v-1h1v1h2v-2h1v-1h1v1h1v2h2v-1h1v-1h2v2h1v-1h1v1h3v-2h1v1h1v-1h1v1h2v1h1v-1h1v-2h1v3h1v-3h1v-1h1v2h1v1h1v-3h2v2h1v-2h2v2h1v1h2v-2h2v-1h1v3h3v-3h1v1h1v-2h1v1h1v3h1v-3h1v2h3v-4h1v1h1v3h3v-4h1v1h1v4h2v-2h1v1h1v-4h1v3h1v-1h2v1h2v1h1v-2h1v2h1v-1h1v2h2v-3h1v2h1v-3h1v3h1v1h1v-1h1v-1h2v-1h1v2h2v1h1v-3h1v2h1v-1h1v1h1v1h1v-1h1v1h1v-1h1v-1h1v-1h1v2h1v1h2v-3h1v2h1v-2h4v2h3v-2h1v2h1v1h2v-3h1v1h2v1h2v1h1v-3h4v3h1v-2h1v2h1v-1h1v-1h2v2h1v1h1v-4h1v3h1v-1h2v2h1v-2h1v2h1v-2h3v2h1v-3h1v3h4v-2h1v1h3v1h3v-2h1v2h2v-2h2v2h1v-1h1v1h1v-3h2v3h3v-1h2v1h1v-2h1v2h1v-1h1v1h2v-1h1v1h1v-1h3v-1h1v1h1v-1h1v1h1v1h5v-1h1v1h2v-1h1v-1h1v-1h1v3h1v-1h2v-2h1v2h1v-1h1v2h1v-1h1v-1h2v2h1v-1h1v1h1v-1h1v-4h1v3h3v2h4v-1h1v-4h1v1h1v2h2v1h1v1h1v-1h1v-1h1v1h1v1h1v-3h1v1h2v1h2v1h4v-2h3v1h3v-1h1v2h1v-4h1v3h1v1h2v-3h1v3h1v-1h1v1h3v-2h1v1h2v1h1v-1h1v-1h1v2h1v-1h3v1h1v-2h1v2h1v-2h1v2h1v-1h1v-1h3v-1h2v3h1v-2h1v1h1v1h1v-2h1v1h2v1h2v-1h2v1h3v-1h1v1h2v-2h1v1h2v1h1v-5h1v5h1v-2h1v1h1v1h1v-1h1v1h1v-2h1v-1h1v2h2v-1h1v1h1v1h1v-1h1v-2h1v3h5v-2h1v2h4v-4h1v3h1v1h3v-3h1v2h1v-1h2v2h2v-2h4v-2h1v2h1v1h3v1h1v-1h1v-1h2v1h1v1h2v-1h2v-1h3v1h3v-2h1v3h3v-2h2v2h3v-2h1v2h2v-2h3v1h2v-2h1v3h4v-3h1v2h1v-4h1v5h2v-1h1v-1h1v2h1v-3h1v3h3v-3h1v1h1v2h1v-3h1v3h1v-2h1v1h5v-1h1v-1h1v3h2v-2h2v1h3v-2h1v3h2v-2h2v2h1v-1h1v-1h3v2h1v-2h1v2h1v-2h1v1h3v-1h1v1h3v1h1v-1h2v-2h1v1h1v1h2v-1h1v1h3v1h2v-2h1v-2h1v2h1v2h3v-1h1v-2h1v1h1v1h1v-1h1v2h1v-2h3v2h1v-1h1v-2h1v3h1v-2h1v2h2v-1h1v1h1v-2h4v1h1v-2h2v1h1v2h2v-1h2v-1h1v1h1v-1h3v2h1v-3h1v2h1v-1h2v2h1v-1h1v1h1v-2h1v2h1v-1h1v1h1v-2h2v1h1v-1h1v2h3v-3h1v1h1v1h1v1h3v-2h1v2h1v-2h3v-3h1v5h1v-1h1v1h3v-1h1v-1h1v2h1v-2h2v1h1v1h2v-3h1v1h5v1h1v-2h2v1h1v1h3v1h3v-2h1v1h1v-1h3v2h2v-1h1v-1h2v2h2v-2h1v2h1v-3h1v2h1v1h2v-2h1v1h1v-1h2v1h2v1h1v-1h1v-2h1v3h1v-1h1v-2h1v-1h1v2h2v1h2v-1h1v-1h1v1h1v2h2v-2h2v1h1v-1h1v1h2v1h2v-2h2v2h2v-1h3v1h2v-1h1v1h2v-1h3v-1h1v1h2v-1h1v1h1v1h1v-2h1v1h2v-1h1v2h3v-1h4v-1h2v2h1v-2h1v1h1v-1h2v1h1v-2h1v2h1v1h4v-1h1v-1h1v2h1v-1h1v-1h1v-3h1v2h1v1h1v1h1v-4h1v3h1v-1h1v3h1v-2h1v1h1v-1h3v2h1v-1h3v1h1v-2h1v-1h2v3h2v-2h1v1h2v-1h4v1h2v1h1v-2h1v-1h1v2h3v1h1v-2h1v1h1v1h1v-1h1v-1h1v2h1v-1h1v-1h1v-1h1v2h1v-1h2v1h1v-1h2v2h1v-1h1v1h1v-1h2v1h1v-2h2v1h3v-1h1v1h2v-1h3v1h1v1h1v-2h1v2h2v-2h2v1h2v-2h1v2h1v-2h1v1h1v2h4v-2h1v2h2v-2h1v2h1v-1h1v1h2v-1h1v1h1v-2h6v2h1v-2h3v1h2v-1h2v1h2v-1h1v1h1v-4h1v5h1v-3h1v3h1v-1h1v1h1v-2h1v1h2v1h3v-2h1v2h1v-1h1v-1h2v-1h2v2h3v1h1v-3h2v2h2v-1h1v2h1v-2h2v1h1v-1h1v2h2v-1h2v-1h2v1h1v-1h2v2h2v-3h1v3h1v-1h1v1h2v-1h1v1h5v-2h1v-3h1v3h1v2h1v-2h1v1h4v-1h1v1h2v1h7v-2h3v1h1v1h3v-2h1v2h1v-3h1v3h2v-1h4v-2h1v3h1v-2h1v2h4v-1h4v-1h1v-1h2v3h4v-2h1v-1h1v2h3v-1h3v2h1v-1h1v1h1v-1h1v-1h1v2h2v-1h1v-1h2v1h5v1h2v-3h1v2h1v-1h1v2h4v-3h1v1h1v1h1v-1h1v2h2v-1h1v1h1v-1h2v1h1v-1h3v1h1v-2h1v2h3v-1h1v1h2v-3h1v3h1v-4h1v4h1v-2h7v2h1v-3h1v1h2v2h1v-2h1v2h5v-1h3v1h2v-2h2v2h1v-1h1v-1h1v-1h2v1h2v2h2v-1h2v1h1v-1h1v1h1v4h-1v2h-3v-1h-2v1h-1v-1h-1v2h-1v-1h-4v-1h-5v1h-2v-2h-5v4h-1v-3h-1v-1h-1v3h-1v-2h-1v-1h-1v1h-2v-1h-2v2h-3v-2h-1v1h-1v1h-5v-2h-1v1h-2v1h-3v-1h-5v-1h-4v1h-2v-1h-1v3h-1v-2h-4v1h-3v-1h-1v1h-1v-2h-4v4h-1v-4h-1v1h-3v1h-1v-1h-3v1h-2v-1h-2v-1h-2v2h-2v-2h-1v3h-1v-1h-1v-2h-2v3h-1v-2h-1v1h-1v-1h-1v1h-1v-2h-1v2h-1v-2h-3v3h-2v-1h-2v-2h-1v3h-1v-1h-1v-2h-2v2h-1v-2h-1v3h-1v-2h-2v-1h-3v1h-2v-1h-3v2h-2v-1h-1v-1h-1v2h-1v1h-1v-2h-1v5h-1v-5h-1v-1h-8v1h-1v-1h-1v1h-1v-1h-1v2h-1v1h-1v-1h-1v-1h-3v1h-2v-2h-2v1h-1v1h-2v-2h-1v1h-1v-1h-1v3h-1v-3h-1v2h-6v1h-1v-2h-1v1h-3v-2h-3v2h-1v-2h-3v2h-1v-2h-1v2h-1v-1h-1v1h-1v-2h-1v1h-6v2h-1v-3h-1v1h-1v-1h-1v1h-1v-1h-1v3h-1v-2h-1v-1h-2v2h-6v-1h-2v-1h-2v2h-1v-2h-2v1h-1v1h-4v-2h-1v2h-1v-2h-3v2h-1v-1h-1v1h-2v-1h-1v1h-1v-2h-2v1h-1v1h-2v-2h-1v1h-1v-1h-1v1h-1v-1h-3v2h-3v-2h-1v2h-4v-2h-1v1h-1v1h-3v-1h-1v2h-2v-3h-1v2h-2v-2h-1v2h-2v-2h-1v3h-1v-3h-2v1h-3v1h-2v-1h-2v-1h-1v1h-2v-1h-1v1h-1v1h-2v-2h-1v1h-2v-1h-1v2h-1v-1h-1v-1h-1v2h-1v2h-1v-3h-2v1h-1v-1h-1v1h-1v-2h-1v2h-3v-1h-1v-1h-3v3h-1v-1h-2v-2h-1v1h-1v1h-4v-1h-1v1h-2v-2h-1v2h-1v1h-4v-2h-2v2h-1v-1h-1v-1h-2v-1h-2v1h-1v1h-1v-2h-3v1h-1v2h-2v-3h-1v1h-1v1h-1v-1h-1v1h-1v-2h-3v1h-6v2h-1v-2h-2v-1h-2v3h-1v-2h-1v-1h-1v1h-2v2h-2v-3h-2v2h-1v-2h-1v1h-1v2h-2v-2h-3v1h-2v-1h-5v-1h-2v6h-1v-6h-1v2h-1v-2h-2v2h-1v-2h-3v3h-1v-2h-1v1h-3v-2h-1v1h-2v1h-1v-2h-1v2h-1v-2h-1v2h-2v-2h-2v2h-2v-2h-1v2h-1v-1h-1v1h-4v-1h-1v1h-1v-1h-2v-1h-3v2h-1v-1h-1v-1h-2v2h-1v-1h-1v-1h-1v1h-6v2h-2v-2h-3v1h-2v-1h-5v1h-2v-1h-1v1h-2v-2h-2v5h-1v-5h-1v1h-1v-1h-1v1h-6v2h-1v-1h-1v-1h-1v2h-1v-3h-2v1h-1v-1h-5v1h-3v2h-1v-1h-1v4h-1v-6h-2v5h-1v-4h-1v-1h-1v3h-1v-3h-1v2h-1v1h-1v-3h-8v2h-1v-1h-3v-1h-2v2h-1v-2h-3v1h-1v-1h-1v1h-3v1h-1v-2h-2v2h-1v-1h-3v-1h-1v1h-1v-1h-2v1h-3v2h-1v-3h-1v6h-1v-4h-2v3h-1v-5h-2v1h-1v-1h-1v2h-1v-1h-1v-1h-2v3h-1v-1h-4v-1h-1v1h-7v-1h-1v-1h-1v2h-1v-1h-2v1h-1v-1h-1v-1h-2v2h-1v-1h-2v1h-2v-1h-2v-1h-3v2h-1v-1h-1v1h-1v-2h-1v3h-1v-3h-5v2h-1v-1h-1v-1h-1v3h-1v-1h-2v1h-2v-1h-2v-1h-2v-1h-3v2h-3v1h-2v-1h-2v-2h-1v1h-1v2h-1v-3h-1v2h-1v-2h-2v2h-2v-1h-6v1h-2v-1h-1v2h-1v-2h-1v1h-1v-2h-2v2h-1v-2h-1v2h-1v-1h-1v1h-1v1h-1v-1h-6v-2h-7v1h-1v-1h-1v4h-1v-3h-1v-1h-1v1h-2v-1h-1v2h-1v-2h-1v1h-1v1h-3v-2h-1v1h-2v1h-1v-2h-3v1h-5v1h-4v-2h-1v1h-1v2h-1v-2h-1v-1h-1v1h-3v1h-1v-1h-1v-1h-1v2h-1v-1h-1v-1h-2v2h-2v-1h-2v-1h-2v1h-1v-1h-1v1h-1v1h-1v-2h-2v2h-1v-1h-1v-1h-1v1h-1v1h-1v-1h-1v1h-1v-1h-3v1h-2v-1h-1v-1h-1v1h-3v-1h-1v2h-2v1h-3v-1h-1v-2h-1v1h-1v1h-1v-2h-2v1h-1v-1h-4v3h-1v-1h-1v-1h-2v-1h-3v1h-1v1h-1v-1h-1v1h-1v-2h-1v1h-2v-1h-1v1h-1v1h-2v1h-2v-3h-1v1h-2v-1h-3v1h-1v1h-1v-1h-1v1h-1v-2h-1v5h-1v-4h-1v-1h-2v2h-1v-1h-1v1h-1v1h-1v-2h-1v1h-1v4h-1v-5h-1v1h-1v1h-1v-2h-3v1h-1v-2h-2v1h-1v1h-1v-2h-1v2h-2v-2h-1v3h-1v-1h-3v1h-1v-2h-2v-1h-3v2h-1v-2h-2v3h-1v-3h-3v1h-1v-1h-1v1h-1v-1h-1v2h-2v-1h-2v1h-3v1h-1v-3h-1v2h-1v-2h-1v2h-1v-2h-1v1h-4v2h-1v1h-2v-3h-2v2h-4v-1h-2v1h-1v-1h-4v3h-1v-2h-3v-2h-6v3h-2v1h-1v-2h-1v-2h-1v1h-1v2h-1v-3h-1v3h-1v-3h-1v3h-2v-2h-2v-1h-1v3h-1v-3h-1v1h-1v-1h-1v5h-1v-2h-3v-3h-1v4h-1v-2h-1v2h-2v-1h-3v1h-1v-2h-1v1h-1v2h-1v-3h-3v-1h-1v-1h-1v3h-1v-3h-1v2h-1v-1h-1v4h-2v-4h-4v3h-1v-3h-1v1h-1v1h-1v-2h-1v-1h-1v2h-1v2h-1v-2h-4v-2h-3v4h-1v-4h-3v1h-1v-1h-1v2h-2v-3h-4v1h-2v-1h-1v1h-5v1h-1v-2h-1v1h-1v1h-2v-1h-1v1h-4v3h-1v-2h-2v-3h-1v1h-1v-1h-1v1h-1v1h-1v-1h-2v1h-1v-1h-2v-1h-1v1h-2v-1h-1v2h-1v1h-1v-3h-3v2h-1v-1h-2v1h-1v-2h-1v1h-7v1h-2v-2h-1v2h-1v-1h-1v-1h-7v2h-1v-2h-1v1h-1v1h-6v3h-1v-2h-1v-1h-1v-2h-2v2h-1v-2h-1v1h-1v-1h-2v1h-4v-1h-1v1h-1v-1h-4v2h-1v-2h-1v1h-1v1h-1v1h-1v-2h-1v-1h-1v1h-4v2h-1v-1h-2v-1h-3v2h-1v-2h-1v-1h-1v2h-2v-1h-2v-1h-6v1h-1v1h-5v-1h-3v1h-2v-2h-1v1h-1v-1h-1v1h-1v1h-3v-1h-2v-1h-2v2h-1v-2h-1v2h-1v-1h-1v-1h-1v1h-2v1h-2v-1h-1v-1h-1v2h-1v-1h-1v-1h-3v3h-1v-2h-1v1h-2v-2h-2v1h-2v2h-1v-3h-2v2h-1v-2h-1v1h-1v-1h-1v3h-1z"/>
<path d="M277,576h1v-2h1v-1h1v2h1v-1h4v-1h1v1h1v-1h2v2h3v1h1v-3h1v2h1v-2h1v1h1v1h1v-3h1v3h2v-3h1v4h1v-3h1v-2h1v1h1v2h1v-1h1v-1h1v3h1v-2h2v2h1v-1h2v-1h1v3h1v-3h1v3h2v-1h1v-2h1v2h1v-2h1v3h1v-3h4v3h1v-2h2v2h1v-2h3v1h3v1h1v-1h1v-1h1v1h1v1h5v-1h1v1h2v-3h1v1h2v2h2v-2h1v-1h2v3h2v-2h1v1h2v-1h2v-2h1v4h1v-1h2v1h1v-1h1v1h1v-1h2v-2h1v3h1v-1h2v-1h1v1h1v-2h1v2h2v1h3v-2h1v-1h1v-1h1v4h3v-2h1v2h1v-1h1v1h1v-1h3v-1h1v2h2v-3h1v2h2v-2h1v3h2v-1h2v-2h1v2h2v-2h2v-1h2v4h2v-2h1v2h1v-1h1v1h1v1h1v-2h1v1h1v-2h1v2h1v-2h1v2h1v-2h1v2h2v-1h1v-1h1v1h1v2h1v-1h1v1h2v-2h4v1h1v-1h1v1h1v-1h1v2h1v-3h1v2h2v-1h1v1h1v-1h1v1h1v-1h1v-1h1v2h4v-2h1v1h2v1h2v1h2v-2h1v2h2v-3h1v1h1v1h1v-2h3v2h2v1h1v-2h2v1h2v-1h2v2h1v-1h3v1h1v-2h2v-1h1v1h1v1h2v1h1v-3h1v3h1v-1h1v-2h2v2h1v-1h3v1h2v-2h1v1h1v2h1v-3h2v3h1v-3h1v1h2v2h1v-3h1v1h1v1h1v-2h1v1h3v-1h1v2h1v-2h1v3h1v-3h1v2h2v-1h1v1h2v-2h1v1h2v1h3v-2h1v3h1v-1h3v1h1v-1h1v1h1v-1h2v1h1v-2h1v-1h2v1h2v-1h1v3h1v-3h1v2h3v-3h1v4h1v-3h2v3h2v-1h1v1h1v-2h1v-1h1v1h1v-1h1v3h3v-2h2v-1h4v2h1v-1h2v-3h1v4h1v-1h2v1h3v1h1v-2h1v1h2v-1h1v2h1v-3h1v1h1v-1h2v2h1v1h1v-2h1v1h1v-1h2v-1h1v3h1v-2h1v-1h1v1h1v-1h1v1h1v1h3v-1h2v1h1v-1h2v-1h1v2h2v-1h2v-1h2v1h1v1h1v-1h3v1h5v-1h2v2h2v-1h1v-2h2v3h3v-2h1v1h1v-2h3v2h1v-2h2v1h5v1h5v-2h1v2h1v-1h2v-1h1v1h2v-1h1v1h1v2h1v-1h1v1h2v-1h1v1h1v-1h2v-2h2v2h4v-2h3v1h1v2h1v-1h1v-2h5v2h1v1h1v-2h1v1h2v1h3v-3h2v3h1v-1h1v-1h1v-1h1v1h1v1h1v1h1v-2h1v-2h1v3h3v1h1v-2h1v1h2v1h1v-1h1v-1h1v2h1v-2h1v1h1v-1h5v1h1v1h1v-1h1v-1h1v-1h2v2h2v-1h1v1h1v1h1v-2h1v1h1v-2h1v3h2v-2h2v1h1v1h1v-2h2v-1h3v2h1v1h1v-1h2v-1h2v-1h1v3h3v-1h2v-2h2v2h3v-2h2v2h1v-1h1v-2h1v1h1v1h1v-1h1v3h2v-1h1v-1h3v-2h1v3h1v-2h1v2h1v-1h1v-2h1v-1h1v-1h1v1h1v-3h1v3h2v2h2v-4h1v3h1v1h1v1h1v-1h1v1h1v-1h1v-3h1v2h1v-3h1v2h1v4h1v-7h1v7h3v-1h3v-2h1v2h3v-1h2v2h2v1h1v-1h2v1h1v-2h1v2h1v-1h1v1h1v-2h1v-1h1v2h1v-1h1v2h1v-3h1v1h1v2h1v-1h1v-1h2v-1h2v2h3v-1h1v2h1v-1h1v1h1v-2h2v-1h1v1h1v-1h1v1h2v1h2v-1h1v-1h1v2h1v-2h3v2h1v1h1v-2h1v2h1v-1h1v-1h2v-1h1v3h2v-1h1v-1h1v-1h1v2h3v1h1v-3h1v1h1v1h2v-4h3v2h2v1h2v-3h1v2h1v2h6v-1h2v-1h1v3h1v-1h2v-1h1v1h1v-2h1v1h1v1h1v-3h1v2h1v1h6v-1h1v1h1v-2h1v3h2v-1h1v-1h1v-1h1v3h1v-1h2v-1h3v2h1v-2h1v2h1v-3h1v2h1v-2h1v3h1v-1h2v-2h1v1h2v1h1v1h1v-1h2v-2h1v1h2v1h1v1h3v-3h2v2h1v1h1v-1h1v-2h3v1h1v-1h1v1h2v-1h2v2h1v-2h4v1h1v1h1v-2h1v2h1v-1h1v1h1v-2h5v3h1v-1h1v-1h1v-3h1v1h3v2h2v1h1v-4h1v2h2v1h3v-2h1v-1h1v3h1v-2h1v2h3v-4h1v3h2v-3h2v-3h1v4h1v3h1v1h1v-3h1v2h1v-4h2v4h2v-4h1v5h1v-3h1v-2h1v2h1v2h2v1h1v-2h1v3h1v-2h1v2h2v-1h1v-2h1v1h1v-1h3v1h1v2h2v-5h1v5h1v-1h1v-2h1v3h1v-1h2v-1h2v-1h1v2h1v1h1v-1h2v-1h1v-1h1v3h1v-3h2v3h1v-2h1v-1h2v2h1v-1h1v1h2v-2h2v3h1v-1h1v-1h3v1h1v1h1v-2h1v2h1v-1h1v1h1v-3h1v1h1v2h2v-1h1v1h1v-2h1v1h1v-1h1v2h1v-2h1v1h1v-1h1v2h1v-1h1v-2h2v1h1v2h1v-1h1v-2h1v1h1v2h3v-1h4v1h1v-2h1v2h1v-3h2v1h1v1h1v1h2v-3h1v2h1v1h1v-2h1v-3h1v5h1v-2h1v1h1v-1h1v2h1v-3h2v2h1v1h1v-2h3v1h1v1h4v-2h1v1h1v1h1v-1h2v1h1v-2h1v1h6v-1h1v1h1v-1h1v1h1v1h1v-1h3v-1h1v2h2v-1h3v-2h2v2h1v-1h1v2h1v-5h1v2h1v1h1v-1h1v3h1v-3h1v2h2v1h1v-1h3v1h2v-1h4v-1h2v1h2v-2h1v2h1v-1h1v1h2v-1h1v2h1v-1h3v-1h1v-1h2v2h3v-1h1v2h1v-3h2v3h2v-3h2v2h3v-1h1v1h3v1h1v-2h1v1h1v1h3v-1h5v-2h2v2h2v-1h1v-1h2v2h1v-1h3v1h1v-2h2v1h1v2h4v-1h2v-1h4v2h3v-3h1v3h2v-3h1v3h2v-2h1v-1h1v2h1v-1h1v2h1v-2h1v-1h1v2h2v1h3v-2h1v1h2v-2h1v2h1v-1h2v1h1v-1h1v1h5v-1h1v2h1v-2h1v1h1v-1h1v-1h2v3h1v-1h3v1h1v-2h1v1h1v1h1v-2h3v1h1v-1h1v1h1v1h1v-1h2v-1h1v-1h1v1h2v2h1v-1h4v1h1v-2h1v1h1v-1h2v2h1v-2h1v2h1v-1h2v-1h1v2h2v-2h2v-1h1v3h1v-3h1v3h1v-2h2v-1h1v3h1v-1h1v1h2v-2h1v1h1v-2h1v2h2v-2h1v3h1v-1h1v-1h1v1h3v-1h1v1h1v1h2v-2h3v1h2v6h-1v-1h-1v2h-1v-2h-2v2h-1v-2h-1v2h-3v-2h-1v2h-2v-2h-1v2h-1v1h-1v-2h-1v2h-2v-2h-1v-1h-3v1h-1v1h-1v1h-1v-1h-1v1h-1v-3h-1v1h-1v1h-1v4h-1v-5h-3v1h-4v-1h-2v1h-1v2h-1v-4h-2v1h-1v1h-2v-1h-1v-1h-1v3h-1v-1h-1v-1h-2v-1h-1v1h-1v1h-1v-1h-1v-1h-2v2h-1v2h-1v-2h-2v1h-1v-1h-2v-1h-1v-1h-2v3h-2v3h-1v-5h-1v1h-1v-2h-1v2h-1v-2h-1v1h-2v1h-1v-1h-1v1h-2v1h-1v-3h-2v1h-1v-1h-1v1h-4v1h-1v-2h-1v2h-2v-1h-2v1h-2v-1h-1v-1h-1v3h-1v-2h-1v-1h-1v3h-2v-1h-1v1h-1v-2h-1v-1h-1v1h-1v1h-2v-1h-1v2h-1v-3h-1v2h-1v1h-1v-3h-2v2h-1v-1h-2v1h-1v1h-1v-2h-1v2h-1v-2h-2v-1h-4v3h-1v-2h-2v-1h-2v3h-1v-3h-1v3h-1v-1h-1v-2h-1v1h-1v1h-2v-2h-1v3h-1v-2h-1v1h-3v-1h-1v-1h-2v1h-1v-1h-1v2h-1v1h-1v-1h-1v-1h-2v-1h-1v2h-2v-1h-2v-1h-1v1h-6v-1h-2v2h-1v1h-2v-3h-5v3h-1v-1h-1v-1h-1v2h-2v-2h-2v-1h-3v2h-1v-1h-1v-1h-1v2h-2v-1h-2v1h-1v-1h-1v1h-1v1h-1v-1h-1v-2h-1v3h-1v-1h-1v1h-1v-1h-2v-2h-1v2h-1v-1h-5v1h-1v-1h-2v-1h-1v1h-1v2h-1v-1h-1v-2h-2v2h-1v1h-2v-2h-1v-1h-2v3h-1v-1h-2v-1h-1v-1h-1v3h-1v-1h-1v1h-1v-1h-1v-1h-1v1h-1v-1h-2v1h-1v-1h-2v-1h-2v1h-4v-1h-1v1h-1v-1h-2v2h-1v-1h-1v1h-3v1h-1v-2h-1v-1h-1v1h-1v1h-2v-2h-1v1h-4v2h-1v-2h-2v-1h-3v3h-1v-1h-1v-2h-2v1h-1v-1h-4v3h-1v-2h-2v2h-2v-2h-1v-1h-1v2h-3v-1h-2v1h-2v-2h-2v1h-2v1h-1v-2h-1v3h-1v-1h-1v-1h-1v1h-1v1h-3v-3h-1v3h-3v-1h-2v1h-1v-3h-1v1h-1v-1h-2v1h-3v2h-1v-2h-1v1h-3v-2h-2v3h-1v-2h-3v2h-1v-3h-2v2h-1v1h-2v2h-1v1h-1v-2h-2v-3h-1v4h-1v-2h-1v3h-1v-1h-3v-1h-3v-2h-1v1h-3v1h-5v-1h-2v-1h-3v4h-1v-2h-1v-2h-2v3h-1v-1h-1v1h-1v2h-1v-2h-1v1h-1v-1h-1v-3h-1v1h-2v-3h-1v1h-1v-1h-5v3h-1v-1h-1v-2h-1v1h-1v-1h-1v2h-2v1h-1v-1h-3v-1h-1v2h-2v-1h-3v-1h-2v-1h-1v2h-1v-1h-2v-1h-2v2h-1v-2h-2v1h-1v1h-1v1h-1v-2h-1v1h-3v-2h-1v2h-1v1h-1v-1h-3v-2h-3v1h-1v1h-1v-1h-1v1h-2v1h-3v-3h-1v1h-2v1h-4v-1h-1v2h-3v-2h-2v1h-1v-2h-1v2h-1v-2h-2v3h-1v-2h-1v1h-1v1h-1v-1h-2v-1h-1v1h-2v1h-1v-1h-1v-1h-1v-1h-2v2h-2v-2h-1v1h-1v1h-1v-1h-2v3h-1v-1h-2v2h-1v-3h-1v1h-1v-1h-1v1h-1v-2h-1v1h-3v1h-2v-2h-1v1h-1v1h-4v-1h-1v-1h-1v2h-3v-1h-3v-1h-2v1h-1v-1h-2v-1h-2v1h-1v1h-2v1h-1v-3h-1v2h-1v-1h-1v2h-1v-3h-3v1h-1v2h-1v-1h-1v1h-2v-2h-1v4h-1v-2h-5v-2h-2v2h-1v-3h-2v2h-4v-2h-1v3h-3v-1h-3v1h-1v1h-1v-1h-1v1h-1v-3h-1v2h-1v1h-2v-2h-3v1h-1v1h-2v-3h-1v1h-1v4h-3v-4h-1v1h-2v3h-1v-3h-1v-1h-1v1h-2v2h-1v-3h-1v4h-1v-5h-1v4h-1v-2h-1v2h-1v-1h-1v-1h-2v-1h-2v-1h-2v2h-3v-2h-1v-1h-2v2h-2v-1h-3v1h-1v-2h-1v2h-2v1h-1v-1h-1v-1h-1v2h-1v-2h-2v2h-2v-2h-3v2h-2v-1h-1v1h-2v-2h-1v1h-1v1h-1v-2h-3v2h-1v-3h-1v3h-1v-1h-2v1h-1v-1h-2v-1h-3v1h-1v-2h-2v3h-3v-2h-1v1h-1v-2h-1v5h-1v-2h-1v-3h-1v6h-1v-4h-1v-1h-1v1h-1v-2h-1v2h-1v-1h-2v-1h-1v1h-1v1h-1v1h-1v-2h-1v1h-1v1h-1v-2h-1v2h-2v-3h-1v2h-1v-1h-1v2h-1v-1h-1v-2h-1v1h-1v1h-1v-1h-1v1h-1v-2h-1v1h-1v2h-1v-3h-1v2h-1v1h-1v-2h-1v3h-1v-2h-1v-1h-1v1h-1v1h-1v-2h-1v1h-1v1h-3v-3h-2v2h-3v-1h-1v-1h-1v2h-1v-2h-2v3h-1v-1h-1v-1h-1v1h-1v-2h-1v1h-1v1h-1v-1h-1v-1h-1v1h-5v2h-1v-3h-2v1h-3v1h-1v-1h-1v2h-2v-2h-2v-1h-1v1h-2v1h-1v-1h-1v2h-2v-3h-2v1h-1v-1h-1v2h-3v1h-1v-1h-1v-1h-3v-1h-2v1h-1v2h-1v-1h-1v1h-2v2h-1v-2h-2v-1h-2v4h-1v-3h-2v-2h-1v-1h-1v3h-1v-1h-1v-1h-2v2h-1v-3h-1v3h-4v-2h-1v1h-2v1h-1v-2h-2v-1h-1v2h-4v1h-1v-1h-3v1h-2v-2h-1v-1h-1v3h-1v-2h-1v2h-2v-3h-2v2h-1v1h-1v-2h-1v-1h-1v3h-1v-3h-1v1h-2v1h-3v-1h-2v2h-3v-2h-1v-1h-1v1h-1v1h-1v-2h-1v2h-1v1h-1v-2h-1v-1h-1v2h-1v-1h-2v2h-1v-2h-2v2h-1v-2h-1v2h-1v-2h-2v2h-1v-3h-4v2h-1v1h-4v-3h-1v2h-1v-2h-1v2h-1v-2h-1v3h-2v-2h-1v-1h-1v5h-1v-3h-1v-1h-1v2h-1v-2h-1v1h-1v-1h-1v-1h-1v1h-1v2h-1v-3h-1v1h-2v2h-1v-2h-1v-1h-1v1h-2v1h-1v-2h-1v2h-1v-1h-1v1h-4v-1h-1v2h-1v-2h-2v1h-1v1h-3v-3h-3v3h-3v-1h-1v-2h-1v2h-1v-1h-1v-1h-1v3h-1v-1h-1v-1h-4v-1h-1v2h-1v-2h-1v3h-1v-1h-1v-1h-1v-1h-1v2h-1v1h-3v-1h-1v1h-1v-1h-2v-2h-2v3h-1v-2h-1v2h-1v-1h-1v-2h-1v2h-3v-1h-2v1h-5v1h-2v-2h-1v-1h-1v3h-1v-1h-1v-1h-1v1h-1v-2h-2v1h-2v1h-3v1h-2v-1h-1v1h-2v-1h-3v-2h-1v1h-2v2h-2v-2h-1v1h-1v2h-1v-1h-1v1h-1v4h-1v-7h-1v1h-3v2h-1v-3h-2v1h-2v2h-1v-3h-1v4h-1v-4h-1v3h-1v3h-1v-2h-1v-2h-2v1h-1v-1h-3v2h-1v-2h-1v1h-3v-3h-2v3h-1v-1h-1v1h-1v-2h-2v2h-1v-3h-1v3h-1v-2h-2v-1h-3v3h-2v-3h-1v7h-1v-5h-1v-1h-1v2h-1v-1h-1v1h-1v-3h-2v1h-2v2h-1v-1h-1v-1h-1v-1h-1v3h-1v-3h-3v1h-3v1h-2v-2h-1v1h-2v-1h-1v1h-1v1h-1v-2h-1v3h-1v-3h-2v2h-1v2h-1v-1h-1v-3h-2v1h-1v2h-5v-2h-1v-1h-1v3h-1v-3h-2v2h-1v2h-1v-4h-1v2h-1v3h-1v-1h-1v-4h-1v2h-1v5h-1v-7h-2v4h-1v-2h-1v3h-1v-2h-2v-3h-1v1h-3v-1h-1v3h-3v-3h-2v2h-1v1h-1v-2h-1v-1h-1v1h-1v-1h-1v1h-1v1h-1v1h-1v-2h-1v-1h-2v2h-1v-2h-2z"/>
<path d="M277,607h1v-2h1v2h5v-1h1v-1h2v1h1v1h2v-2h4v2h1v-2h1v1h3v-2h1v2h1v-1h2v1h2v1h2v-1h3v-1h2v1h1v1h4v-3h1v3h1v-1h1v1h1v-2h4v2h1v-3h2v1h2v2h2v-3h1v3h2v-1h1v-2h1v3h2v-3h1v3h1v-3h1v2h1v1h1v-2h1v2h1v-3h2v3h2v-1h6v1h4v-1h3v-4h1v2h1v2h2v1h2v-1h1v1h2v-3h1v2h1v-1h3v2h1v-1h1v-2h1v2h2v1h1v-1h1v1h1v-3h1v3h2v-2h1v1h3v1h2v-2h1v2h2v-2h1v-1h1v3h1v-3h1v1h1v2h1v-2h2v2h1v-1h1v1h1v-2h2v1h1v1h1v-1h1v-1h3v1h1v1h1v-5h1v5h2v-2h2v2h1v-2h1v1h3v-1h2v2h2v-2h2v1h1v-1h2v2h1v-2h1v2h2v-2h2v1h2v-1h1v1h1v1h1v-2h2v2h1v-1h1v1h2v-3h1v1h1v1h1v-2h2v3h1v-1h2v1h1v-3h1v2h1v-2h1v1h3v1h1v-1h1v1h3v-1h2v1h1v-1h2v2h1v-3h1v1h2v2h1v-1h1v-1h1v1h1v-1h5v2h1v-2h2v1h4v-1h5v-1h2v1h2v1h4v-1h1v2h1v-3h1v2h1v-1h4v-1h1v1h1v2h1v-1h5v-1h1v-1h1v3h1v-1h1v-1h1v2h3v-2h1v2h1v-1h1v-1h1v1h1v-2h1v2h2v1h3v-1h2v1h1v-2h2v1h4v-2h1v2h1v-1h2v1h2v1h1v-2h1v1h2v-2h1v1h2v1h3v-2h1v2h2v1h2v-2h1v1h1v1h2v-2h1v2h1v-1h4v-1h1v1h1v-1h1v2h2v-3h3v1h1v1h3v-1h2v1h10v-2h2v1h6v-1h1v3h1v-2h1v2h1v-3h3v2h1v-2h1v2h1v-2h1v1h1v1h3v-1h3v2h1v-2h2v1h2v1h1v-3h2v2h2v-2h3v2h1v1h1v-1h2v1h1v-3h2v2h2v1h1v-1h1v1h1v-2h2v1h1v-1h1v2h1v-2h3v1h1v-2h1v3h2v-1h2v1h3v-1h2v1h2v-1h2v1h1v-3h3v1h1v-1h1v2h1v-1h1v2h2v-3h1v2h3v-1h2v1h3v-1h1v2h1v-3h1v2h1v1h1v-1h1v-1h2v1h3v1h1v-1h1v1h1v-1h1v-2h1v3h2v-2h1v-1h4v3h1v-1h1v-3h1v2h2v2h1v-2h1v2h1v-3h1v2h1v-2h1v2h1v-2h1v2h3v-1h1v-1h1v2h1v-1h4v-1h3v1h2v2h1v-3h1v2h3v1h3v-2h1v1h2v1h1v-2h2v-1h1v3h1v-2h1v1h1v1h2v-1h2v1h2v-1h1v-2h1v2h4v-2h1v2h3v1h3v-3h2v2h1v-2h1v1h1v2h2v-2h1v2h1v-3h1v2h1v-1h2v-1h1v2h6v1h2v-2h1v2h3v-1h1v-1h2v1h3v-1h1v-1h1v2h3v-1h1v-1h1v2h1v-3h1v2h1v-1h1v-1h1v2h1v-5h1v2h1v1h1v-1h1v5h1v-1h1v-1h2v1h1v1h1v-2h1v1h1v-2h1v3h5v-3h2v3h1v-2h1v2h1v-2h2v1h1v1h1v-2h2v2h3v-1h1v1h1v-3h1v2h2v-1h2v1h3v-1h1v1h1v-1h3v1h1v1h2v-1h2v-1h1v2h1v-2h1v1h2v-1h1v1h4v-1h1v1h3v-2h1v3h1v-1h1v1h1v-1h3v1h2v-2h1v2h1v-1h1v-1h1v1h2v-2h2v3h1v-1h1v-1h2v1h1v-1h1v1h1v-1h3v-1h1v-1h2v1h1v-2h1v2h2v1h1v1h1v-3h1v2h1v1h2v1h1v-3h1v1h1v1h1v1h1v-2h1v2h3v-1h3v-2h1v1h1v1h8v1h2v-1h2v-1h1v-1h1v1h1v2h1v-2h2v2h1v-2h1v1h1v-1h4v1h1v-1h2v1h2v-1h1v-1h1v3h4v-2h1v-1h1v3h1v-2h1v1h1v1h1v-1h2v-1h1v2h3v-2h2v2h1v-3h1v1h3v2h1v-3h1v2h4v-2h1v2h1v-2h1v2h1v-1h2v1h1v-1h2v-1h1v2h1v1h1v-1h1v-3h1v3h1v-2h1v3h5v-1h3v-1h1v2h2v-2h1v1h1v-1h1v2h2v-1h1v1h2v-1h3v1h4v-2h1v2h1v-3h2v2h2v1h1v-2h1v2h3v-3h1v3h2v-2h1v-1h1v3h1v-1h1v-2h1v3h2v-1h1v-1h2v1h3v1h1v-1h1v1h2v-2h2v2h4v-3h1v1h1v2h1v-2h4v1h2v1h2v-3h1v3h1v-2h1v2h1v-1h4v-2h1v3h2v-1h5v1h2v-2h1v-1h2v3h3v-2h1v1h1v1h1v-3h2v3h3v-2h1v1h1v-1h1v2h1v-2h1v2h1v-3h1v1h1v1h1v1h2v-3h1v-1h1v3h2v-3h1v2h1v1h1v-1h2v-1h1v2h1v-1h1v-1h1v1h3v1h2v-1h1v2h1v-2h4v2h1v-1h1v1h1v-3h1v2h1v-1h2v1h3v1h1v-3h2v-2h1v4h2v1h1v-2h2v-1h1v1h1v-1h1v1h3v-2h1v3h2v1h2v-2h2v2h1v-3h1v2h1v1h2v-2h1v-1h1v3h1v-1h2v1h1v-1h1v1h3v-2h4v1h1v1h1v-1h3v-2h1v3h1v-1h3v-1h1v1h3v1h1v-1h2v1h3v-2h1v1h2v1h2v-3h1v1h1v1h1v-1h2v-1h1v3h1v-1h1v-1h2v-2h1v4h4v-3h2v3h1v-2h2v2h1v-1h4v-1h2v1h2v1h1v-2h1v1h1v1h1v-2h1v1h1v1h1v-1h1v-1h3v2h2v-1h2v1h1v-1h1v1h1v-1h1v-2h1v3h1v-3h1v1h6v2h4v-2h2v2h2v-1h1v-2h1v2h1v-1h1v2h1v-2h7v-1h1v2h3v-1h1v-1h1v2h2v1h1v-3h2v2h1v1h2v-2h1v2h2v-1h1v1h1v-3h2v3h2v-2h2v2h5v-2h1v2h6v-3h2v3h3v-2h2v-1h1v1h1v1h1v-1h1v2h1v-1h3v1h3v-3h1v1h1v1h1v-2h1v3h2v-2h1v2h1v-2h1v2h3v-2h1v1h1v1h1v-1h1v1h3v6h-1v-2h-5v1h-3v1h-1v1h-1v-2h-2v1h-4v-2h-1v2h-1v-2h-2v2h-1v-2h-3v2h-7v-1h-2v-1h-2v2h-1v-1h-3v2h-1v-3h-2v1h-1v1h-1v-1h-1v-1h-1v6h-1v-6h-5v2h-1v-2h-3v2h-3v1h-1v-2h-1v-1h-3v2h-1v-2h-1v2h-1v-2h-2v2h-1v-1h-2v1h-1v-1h-1v-1h-1v1h-1v2h-1v-1h-1v-2h-1v6h-1v-3h-2v-2h-1v-1h-3v1h-2v-1h-2v1h-3v1h-1v-2h-1v1h-1v1h-1v-2h-2v1h-2v1h-1v-2h-1v2h-1v-2h-2v1h-1v2h-2v-3h-1v1h-2v1h-1v-1h-1v2h-1v-1h-1v-1h-1v-1h-3v3h-1v-3h-4v1h-2v1h-1v-1h-1v-1h-1v2h-1v-2h-2v1h-1v-1h-1v1h-1v-1h-2v2h-1v-2h-1v3h-1v-1h-1v-2h-3v2h-2v-1h-1v-1h-1v2h-1v-2h-2v2h-1v-1h-1v2h-1v-2h-3v1h-1v-1h-1v-1h-1v3h-2v-3h-1v1h-1v-1h-2v1h-1v-1h-1v1h-3v-1h-2v2h-1v-1h-1v-1h-1v1h-1v1h-4v-2h-4v3h-1v-3h-1v1h-2v-1h-1v1h-2v1h-1v-2h-2v3h-1v-1h-1v-2h-2v3h-1v-2h-1v1h-1v-1h-1v-1h-2v2h-3v1h-2v-3h-1v1h-1v1h-1v-1h-3v-1h-1v3h-2v-1h-1v1h-1v-2h-3v1h-1v1h-1v-3h-2v1h-1v1h-1v3h-1v1h-1v-5h-3v-1h-1v3h-3v-2h-2v3h-2v-1h-1v1h-1v-3h-2v2h-1v2h-1v-4h-1v1h-1v-1h-1v1h-1v-2h-3v2h-8v-2h-2v2h-2v-1h-1v1h-1v-2h-2v2h-1v-2h-1v1h-2v-1h-1v2h-3v-1h-1v-1h-3v1h-2v1h-5v-1h-2v1h-3v-2h-1v3h-4v-1h-1v-2h-2v3h-2v-2h-2v-1h-1v1h-1v-1h-4v3h-1v-3h-3v1h-3v1h-2v-2h-1v2h-1v-1h-1v1h-1v-2h-3v2h-1v-1h-2v-1h-1v1h-3v1h-1v1h-1v-3h-1v1h-2v2h-3v-2h-1v1h-1v-2h-1v1h-2v-1h-1v1h-2v1h-1v1h-2v-3h-3v2h-2v1h-1v-1h-1v-2h-3v1h-4v-1h-1v1h-1v1h-3v-2h-2v1h-7v-1h-1v2h-1v1h-1v-2h-2v2h-1v-2h-1v1h-2v-1h-1v1h-1v-1h-1v1h-1v-1h-4v1h-1v4h-1v-6h-1v2h-5v1h-1v-2h-2v-1h-1v5h-1v-4h-2v-1h-1v1h-3v2h-2v-1h-1v-2h-1v1h-1v2h-1v-2h-3v1h-1v1h-1v-1h-5v-1h-1v-1h-2v2h-2v-2h-2v1h-2v-1h-1v3h-1v-3h-2v2h-1v-2h-1v3h-1v-3h-1v2h-1v-1h-1v1h-3v-1h-1v-1h-1v1h-1v1h-1v1h-3v3h-1v-1h-1v-3h-1v1h-2v-1h-2v-2h-2v3h-1v-2h-1v1h-1v-1h-1v2h-1v-3h-2v3h-2v-1h-2v-1h-2v2h-1v-2h-4v1h-1v-1h-1v1h-6v-1h-1v1h-1v-1h-2v1h-2v1h-2v-2h-4v-1h-1v1h-2v-1h-1v1h-2v-1h-1v2h-1v1h-1v-2h-1v1h-1v-1h-1v2h-1v-1h-1v-1h-2v-1h-2v1h-1v1h-1v-1h-2v-1h-1v3h-2v-3h-1v2h-1v-2h-1v1h-1v-1h-1v1h-2v1h-3v-1h-1v2h-1v-3h-1v3h-1v-1h-2v-1h-4v1h-1v1h-1v1h-1v1h-1v-1h-1v-1h-2v4h-1v-4h-3v-2h-1v-1h-2v2h-2v-2h-1v3h-1v-1h-2v-2h-1v2h-1v-1h-2v-1h-1v2h-1v-1h-2v1h-3v1h-1v-2h-1v-1h-1v1h-1v-1h-1v1h-3v-1h-1v1h-3v-1h-1v1h-1v2h-1v-2h-1v2h-2v-1h-2v-2h-1v1h-1v-1h-3v1h-1v2h-1v-1h-1v-2h-3v3h-1v-1h-1v-2h-2v5h-1v-5h-1v1h-1v-1h-1v2h-1v-2h-1v2h-1v-1h-1v1h-3v1h-2v-1h-2v-1h-1v-1h-2v2h-1v-1h-1v-1h-1v2h-2v-1h-1v1h-1v1h-2v-3h-3v1h-4v1h-2v1h-1v-3h-1v1h-1v1h-1v-1h-1v-1h-1v2h-4v-2h-1v1h-1v-1h-1v2h-1v1h-2v-3h-1v1h-1v1h-1v-1h-5v-1h-1v2h-2v1h-1v-2h-1v2h-1v-3h-1v2h-1v-1h-2v-1h-1v2h-1v1h-1v-3h-1v3h-1v-3h-1v2h-2v-2h-1v1h-1v2h-1v-3h-3v3h-1v-2h-2v2h-1v-1h-2v1h-2v3h-1v-5h-1v-1h-1v1h-1v1h-2v-1h-1v-1h-1v2h-3v-2h-2v2h-2v2h-1v-2h-2v-1h-4v-1h-1v3h-1v-3h-1v3h-1v-2h-2v-1h-2v2h-1v1h-2v-2h-2v1h-1v1h-1v-1h-2v-2h-1v1h-3v-1h-1v3h-1v-3h-4v1h-1v-1h-1v3h-1v1h-1v-4h-2v2h-1v-2h-1v3h-1v-1h-2v-2h-6v2h-1v-1h-3v-1h-2v1h-1v-1h-2v1h-1v1h-1v-2h-1v3h-1v-1h-2v1h-1v-1h-1v-2h-2v1h-1v-1h-3v3h-1v-3h-2v2h-1v-1h-2v2h-1v-3h-1v2h-1v-2h-1v1h-3v-1h-1v3h-1v-2h-1v2h-3v-3h-2v2h-1v-1h-4v-1h-2v2h-2v-1h-1v1h-1v-1h-1v2h-2v-2h-1v-1h-1v1h-1v-1h-2v2h-2v1h-2v-3h-3v2h-1v-2h-1v1h-2v2h-1v-3h-1v1h-1v1h-1v-2h-1v3h-1v-2h-1v-1h-4v1h-3v-1h-1v3h-1v-3h-2v1h-1v2h-1v-2h-2v1h-1v-1h-1v-1h-3v1h-1v-1h-1v2h-1v1h-3v-3h-1v2h-1v-1h-2v1h-1v1h-2v-2h-3v-1h-1v2h-1v-1h-3v-1h-1v1h-1v1h-1v-1h-1v1h-2v-1h-1v-1h-2v1h-1v-1h-1v2h-2v-1h-1v-1h-2v2h-1v1h-2v-3h-1v1h-1v3h-1v-2h-1v1h-1v-2h-1v2h-1v-3h-3v1h-2v-1h-2v2h-1v-1h-2v1h-2v-1h-2v-1h-2v1h-3v-1h-2v1h-4v1h-1v-2h-2v3h-1v-3h-1v2h-2v-1h-1v-1h-1v1h-3v-1h-1v1h-1v4h-1v-2h-1v-1h-1v-1h-2v1h-2v-2h-5v1h-1v2h-1v-2h-2v-1h-1v2h-1v2h-1v-2h-2v-2h-1v2h-2v-2h-1v2h-1v-1h-1v-1h-1v2h-5v-2h-1v1h-1v1h-1v-2h-1v1h-1v-1h-4v1h-3v-1h-1v1h-1v-1h-2v1h-5v1h-1v-2h-1v1h-2v1h-1v-1h-2v2h-1v-1h-2v-2h-1v1h-3v-1h-3v1h-2v-1h-2v1h-4v1h-1v-1h-2v-1h-1v2h-2v-2h-2v1h-2v-1h-4v1h-2v3h-1v-2h-1v-1h-6v1h-1v1h-1v-3h-1v1h-1v3h-1v-3h-1v1h-1v-1h-1v2h-3v-2h-1v-1h-1v1h-1v-1h-1v2h-3v-2h-2v1h-2v1h-2v-2h-4v2h-4v-1h-1v1h-1v-1h-2v1h-1v-2h-5v1h-3v2h-1v-1h-1v-1h-1v1h-1v-2h-3z"/>
<path d="M277,634h1v1h4v-2h1v-1h1v2h1v-1h1v-1h1v-1h1v2h1v-3h1v5h1v-4h1v1h2v2h1v-2h3v1h1v2h1v1h1v1h4v-2h2v2h1v-1h2v-2h1v3h1v-1h1v1h1v-1h1v1h1v-2h2v2h3v-2h2v-1h1v2h1v1h1v-2h1v2h3v-3h1v2h1v1h1v-1h1v-1h1v-1h1v2h2v-1h1v-1h1v2h1v-2h1v3h1v-1h2v-1h1v1h1v1h2v-3h2v1h1v1h1v-1h1v1h1v-1h1v2h1v-1h1v-1h1v-1h1v3h1v-3h2v2h2v-1h1v2h1v-3h1v3h1v-1h2v1h1v-1h1v1h2v-2h1v2h2v-2h1v-1h1v2h6v-2h1v3h1v-3h2v3h4v-1h1v-1h1v2h1v-5h1v4h1v-2h1v1h3v-1h1v2h6v1h1v-3h1v2h2v-2h3v2h2v-2h1v3h1v-1h1v-1h1v1h1v-2h1v1h1v1h1v1h7v-1h3v-2h1v2h1v-1h1v2h2v-1h3v-1h2v-1h1v1h1v2h2v-3h1v3h1v-3h1v2h1v-2h1v1h2v2h1v-2h1v2h1v-1h1v-1h1v1h1v-1h1v1h1v-1h1v2h1v-2h1v1h1v1h1v-1h1v-1h1v-3h1v3h1v1h2v-1h1v1h3v-2h1v1h3v-3h1v2h1v2h4v-2h1v2h3v1h1v-1h2v-2h1v2h1v-2h2v1h2v1h2v-2h1v2h1v-1h1v1h1v-2h2v3h1v-1h3v-2h2v1h1v2h1v-1h1v1h1v-2h2v1h1v-1h1v1h1v-1h1v1h1v-2h1v1h1v1h1v1h1v-3h2v3h1v-3h4v3h3v-1h1v1h3v-1h2v1h3v-1h1v-1h2v-1h1v2h2v-2h2v2h1v1h2v-2h2v1h1v-1h1v2h1v-1h1v1h1v-2h1v1h1v-2h2v3h3v-2h1v1h2v-2h1v1h1v2h2v-3h1v2h1v1h1v-1h1v-3h1v3h1v-2h1v1h1v1h1v1h5v-2h1v2h5v-3h2v1h3v2h1v-2h1v1h1v-1h1v1h1v-1h2v1h5v-2h1v3h1v-3h1v-1h1v3h1v-1h1v-2h1v1h1v1h1v2h1v-1h2v1h2v-1h1v-3h1v2h2v1h1v1h1v-3h2v1h1v2h1v-4h1v1h1v1h3v-1h2v3h2v-2h1v-1h3v3h1v-3h3v1h1v-1h1v1h1v2h1v-2h3v1h1v-2h1v3h1v-1h1v-1h5v-1h1v-1h2v3h2v1h1v-2h1v1h2v-1h2v1h2v-1h1v2h2v-3h1v2h2v1h1v-1h2v-2h2v3h1v-2h2v1h1v1h1v-2h3v-2h2v4h1v-3h1v2h1v-2h1v3h1v-3h1v3h1v-3h1v-1h1v1h1v1h2v2h2v-1h1v1h3v-1h1v-1h4v1h2v-1h1v2h1v-1h3v-1h1v1h2v-1h1v2h1v-2h2v2h1v-1h1v-1h3v1h1v-1h2v1h1v-1h2v2h7v-1h1v-1h1v1h1v1h4v-1h1v1h1v-1h4v-1h1v1h1v1h1v-1h2v1h1v-1h3v-1h1v-1h1v2h3v-4h1v4h2v1h2v-1h2v-2h1v3h1v-3h1v2h2v1h1v-1h1v-1h1v2h3v-2h2v-1h2v2h3v-2h1v3h5v-1h1v1h1v-2h3v2h1v-2h2v1h1v1h1v-1h2v1h1v-2h1v1h2v-2h1v3h2v-1h1v1h1v-1h2v1h2v-2h1v1h1v-2h2v2h1v1h2v-2h1v2h2v-2h1v1h2v1h1v-1h1v-1h2v2h2v-2h4v1h2v-2h2v3h1v-1h1v-1h1v1h1v1h4v-2h1v2h3v-1h1v1h3v-1h1v1h1v-2h3v2h1v-2h3v1h1v-3h1v4h2v-1h2v1h2v-1h1v1h2v-3h1v1h3v2h1v-2h2v1h4v-1h1v-1h1v1h3v2h1v-2h1v-2h1v3h1v-3h2v2h1v-1h1v1h1v1h3v-1h3v-1h1v1h3v1h1v-3h1v3h2v-1h1v1h5v1h1v-1h1v-1h1v2h1v-3h2v1h2v2h1v-2h1v1h2v1h2v-1h1v-2h1v3h3v-3h1v2h2v1h1v-1h1v-2h1v1h1v1h2v-2h1v1h3v2h1v-1h1v-2h1v2h1v-1h1v2h1v-1h3v-1h1v-1h1v3h1v-1h1v-1h1v1h1v1h1v-2h2v-1h1v3h1v-2h1v-1h1v2h1v-1h2v2h1v-2h1v2h2v-1h1v-1h1v2h1v-1h1v1h1v-3h1v1h2v-1h1v1h2v2h1v-1h1v-1h3v1h1v-2h1v1h2v2h3v-2h2v2h1v-1h2v-1h3v-1h2v3h2v-1h2v1h1v-2h1v2h2v-2h1v2h3v-2h1v-1h1v-2h3v2h4v1h3v1h3v-3h1v-1h1v2h1v2h1v-1h4v1h4v-2h2v2h1v-3h6v-1h1v2h2v1h2v1h1v-3h1v1h1v2h2v-1h2v-1h1v-1h1v3h1v1h3v-2h1v1h1v1h1v-2h1v2h2v-2h1v2h4v-1h1v1h2v-3h1v1h2v1h1v1h2v-1h3v-1h1v1h2v1h1v-1h1v1h1v-2h1v2h1v-3h1v3h1v-2h2v1h1v1h1v-1h4v-1h3v2h1v-2h1v1h3v-1h1v1h2v1h1v-1h1v1h3v-3h2v2h1v-2h2v2h2v1h1v-1h1v-1h1v1h3v1h1v-3h1v1h1v1h1v1h2v-3h1v2h1v-1h2v-1h1v2h2v1h1v-2h3v2h2v-2h2v2h2v-2h1v2h1v-2h1v1h1v1h1v-1h2v-1h3v2h1v-1h1v1h1v-1h1v-1h1v-1h1v2h2v-1h1v1h1v1h1v-1h1v-1h5v2h3v-1h2v1h1v-2h1v2h1v-1h2v-2h1v2h1v1h3v-2h1v-1h1v1h1v1h2v1h2v-3h2v3h2v-2h3v1h2v-1h2v2h2v-1h2v1h2v-1h1v-1h1v2h2v-3h1v3h1v-3h1v3h4v-1h1v-1h2v1h2v-2h2v1h3v2h2v-2h3v1h1v1h2v-2h2v1h2v1h1v-2h2v1h2v-1h3v1h2v1h1v-1h1v1h1v-2h1v1h1v-1h3v1h1v1h2v-1h1v-1h1v1h1v1h6v-1h3v1h2v-2h2v1h3v-1h1v2h6v-1h2v1h1v-1h1v-1h1v2h1v-2h3v-1h1v1h2v-1h2v3h3v-1h1v1h2v-3h1v1h1v2h2v-1h2v-2h1v3h1v-2h2v1h1v1h1v-2h2v2h1v-2h1v1h2v-1h1v2h4v-1h1v-1h1v7h-1v1h-1v-1h-3v2h-1v-1h-1v-2h-1v1h-1v-1h-1v2h-1v-2h-2v1h-2v1h-1v-2h-1v1h-3v-1h-2v2h-1v-1h-2v-1h-1v2h-1v-2h-3v3h-3v-2h-1v1h-1v-2h-1v2h-1v-2h-2v2h-1v-1h-1v1h-1v-1h-1v1h-3v-1h-1v-1h-1v1h-1v-1h-2v2h-1v1h-1v-3h-1v1h-3v1h-2v-2h-2v1h-1v-1h-1v1h-2v1h-2v-1h-1v1h-2v-2h-1v2h-1v-2h-1v1h-1v1h-2v-2h-2v1h-1v1h-1v1h-1v1h-1v-1h-1v-1h-1v-2h-1v1h-1v1h-1v-1h-3v-1h-1v2h-1v-1h-3v-1h-1v1h-1v-1h-1v3h-2v-2h-2v-1h-2v3h-2v-1h-2v-2h-3v2h-2v-2h-3v2h-2v-1h-1v1h-4v-1h-2v1h-1v-2h-1v3h-1v-2h-2v1h-2v-1h-1v5h-1v-5h-2v-1h-1v2h-1v-1h-1v1h-2v-2h-2v1h-1v1h-1v-2h-2v2h-3v-1h-1v1h-2v-1h-5v1h-1v-2h-2v2h-2v1h-3v2h-1v-4h-2v-1h-2v1h-1v-1h-1v1h-1v-1h-1v2h-2v-2h-1v1h-1v1h-2v-2h-1v2h-1v-2h-1v2h-4v-2h-4v1h-1v-1h-2v2h-1v-2h-1v2h-1v-1h-1v-1h-1v2h-1v-2h-2v2h-1v-1h-1v-1h-1v2h-3v-2h-2v2h-1v-1h-2v-1h-1v2h-1v1h-1v-2h-2v2h-1v-3h-2v1h-1v-1h-4v1h-3v1h-3v1h-2v-1h-1v-1h-1v-1h-1v2h-5v-1h-1v-1h-2v2h-1v-2h-3v1h-5v-1h-1v1h-4v2h-1v-1h-2v-2h-1v1h-3v1h-1v-1h-1v-1h-2v2h-1v-1h-3v1h-1v-2h-1v1h-1v1h-2v-1h-1v1h-1v-2h-2v3h-2v-2h-1v2h-1v2h-1v-1h-1v-1h-3v2h-1v-2h-1v-2h-1v2h-1v-1h-1v-1h-1v2h-1v-2h-3v1h-1v1h-1v1h-1v-2h-2v1h-1v-1h-1v1h-1v-1h-1v1h-1v2h-1v-3h-1v2h-2v-3h-1v1h-2v3h-1v-4h-1v3h-2v1h-1v-4h-2v1h-2v-1h-1v1h-1v2h-3v-2h-2v3h-1v-3h-2v-2h-1v2h-1v-1h-1v1h-1v-1h-1v-1h-1v3h-1v-2h-2v-1h-3v2h-1v-1h-1v1h-1v-2h-2v1h-1v2h-1v-2h-1v1h-1v-2h-1v2h-1v-2h-1v1h-1v-1h-1v2h-2v-1h-2v-1h-1v3h-2v-2h-1v1h-1v-1h-1v1h-5v-1h-5v-1h-1v3h-1v-1h-1v-1h-1v-1h-1v1h-1v1h-1v-2h-2v1h-5v1h-1v-1h-1v1h-2v-2h-2v3h-1v1h-1v-4h-3v2h-3v1h-1v-1h-1v-1h-1v1h-1v-2h-5v2h-1v-2h-2v1h-3v1h-3v-1h-1v-1h-1v1h-1v1h-2v-2h-1v2h-1v1h-1v-2h-2v2h-1v-3h-1v2h-1v-1h-1v2h-1v-1h-1v2h-1v-3h-3v2h-1v-1h-3v-1h-2v2h-1v-2h-2v2h-1v-3h-1v2h-2v-1h-1v-1h-1v1h-2v2h-1v-1h-4v1h-1v-3h-1v1h-1v1h-1v1h-2v-3h-2v2h-1v-2h-4v2h-2v-2h-1v1h-1v-1h-1v1h-2v1h-3v-1h-1v1h-2v-1h-2v1h-1v1h-1v-2h-1v1h-1v-2h-2v2h-1v-1h-3v1h-1v-1h-1v1h-2v-1h-1v-1h-1v1h-5v1h-1v1h-3v-1h-1v-1h-3v-1h-2v2h-2v-2h-2v3h-1v-3h-7v2h-1v-1h-2v1h-1v-1h-3v-1h-1v1h-1v-1h-1v2h-2v-2h-2v1h-3v1h-1v1h-1v-1h-1v-2h-1v3h-1v-1h-1v1h-1v-2h-1v1h-4v-2h-1v2h-1v-1h-1v-1h-1v2h-1v-2h-1v2h-1v-1h-1v1h-2v-2h-4v2h-1v-2h-1v2h-1v-2h-4v2h-1v-2h-1v2h-1v-1h-3v2h-1v-3h-2v2h-1v-2h-1v2h-1v-1h-1v1h-3v-1h-4v2h-1v-3h-1v1h-1v-1h-2v2h-1v-2h-1v1h-1v-1h-2v2h-1v-2h-1v1h-2v2h-1v-3h-1v1h-1v1h-3v-1h-3v-1h-2v1h-2v4h-1v-2h-1v-1h-2v-1h-2v1h-1v1h-1v-2h-1v-1h-2v2h-1v-2h-1v4h-1v-4h-1v1h-1v2h-1v-2h-1v-1h-2v1h-3v-1h-2v1h-3v1h-3v-1h-2v3h-1v-4h-1v1h-3v2h-1v-1h-1v-1h-3v1h-2v-1h-1v4h-1v-2h-1v-2h-1v2h-2v-2h-2v2h-1v-2h-2v1h-3v1h-1v-2h-1v2h-1v-1h-2v-1h-2v2h-3v-2h-1v1h-1v2h-1v-1h-1v-2h-1v-1h-1v2h-1v2h-1v-3h-2v1h-3v1h-2v-2h-3v1h-1v-2h-1v1h-1v-1h-1v1h-1v1h-4v-1h-4v2h-1v-1h-1v-1h-4v2h-1v-3h-1v1h-6v-1h-1v2h-1v1h-3v-1h-4v-1h-4v1h-1v2h-1v-3h-1v2h-1v-2h-1v2h-1v-3h-1v1h-1v-1h-1v3h-2v-1h-1v1h-1v-2h-1v1h-1v1h-1v-3h-1v1h-1v1h-1v-2h-1v3h-1v-3h-1v2h-1v-1h-2v2h-2v-3h-1v3h-1v-3h-1v2h-1v-2h-2v1h-1v1h-1v-2h-1v3h-2v-2h-6v2h-1v-1h-2v-2h-4v1h-1v2h-1v-1h-1v-2h-1v1h-1v-1h-1v2h-1v-1h-1v2h-2v-3h-2v1h-1v1h-1v-1h-2v-1h-2v2h-3v-2h-1v1h-1v1h-1v-2h-2v2h-2v-2h-1v2h-4v-2h-1v3h-1v-1h-1v-1h-2v-1h-1v2h-2v-2h-2v2h-1v1h-1v-1h-1v1h-1v-1h-2v-1h-3v2h-5v-2h-1v1h-1v-1h-2v2h-1v-2h-1v1h-1v-1h-2v-1h-1v2h-1v-1h-5v-1h-1v1h-2v1h-1v-2h-1v1h-1v-1h-1v3h-2v-2h-2v2h-2v-2h-2v1h-2v-2h-2v3h-1v-2h-3v-1h-1v1h-1v1h-1v-1h-1v-1h-5v1h-1v1h-1v-1h-1v1h-1v-1h-1v-1h-1v3h-1v1h-1v-3h-1v2h-1v-2h-1v-1h-1v2h-1v2h-1v-2h-1v-2h-1v1h-2v-1h-1v2h-1v1h-1v-2h-4v-1h-2v4h-1v-4h-2v2h-1v-2h-2v3h-1v-1h-3v-1h-2v-1h-1v2h-2v-2h-1v3h-1v-3h-1v1h-1v1h-1v1h-2v-1h-2v-1h-1v1h-1v1h-2v-3h-1v3h-1v-1h-1v-2h-1v1h-3v-1h-1v4h-1v-4h-1v2h-1v-1h-2v1h-1v-2h-4v2h-1v-1h-1v2h-2v-1h-1v1h-1v-3h-1v3h-1v-2h-1v2h-1v-2h-1v1h-1v-2h-2v2h-1v-1h-2v1h-2v-2h-1v1h-2v2h-1v-1h-1v-1h-1v1h-1v-1h-3v2h-1v-2h-2v2h-1v-2h-2v-1h-2v3h-1v-1h-2v-2h-1v1h-2v2h-1v-2h-4v1h-1v-1h-4v-1h-2v2h-2v-2h-1v1h-1v1h-3v-1h-2v1h-1v1h-1v-3h-1v1h-1v1h-1v-1h-3v1h-2v1h-1v-2h-1v1h-1v1h-1v-1h-1v1h-1v-3h-1v1h-2v-1h-3v3h-1v-3h-1v3h-2v-3h-1v2h-1v-1h-1v1h-1v-1h-2v1h-2v1h-1v-3h-1v3h-1v-1h-2v-1h-2v5h-3v-3h-1v2h-1v-2h-1v2h-1v1h-2v-3h-1v2h-2v-2h-1v3h-1v-4h-2v3h-1v-3h-1v1h-1v3h-3v1h-1z"/>
<path d="M277,668h1v-1h1v-1h1v1h1v-1h1v-1h1v1h3v1h1v-1h2v2h1v-1h3v1h1v-2h1v1h1v1h5v-1h2v1h2v-1h1v1h1v-2h5v1h1v1h2v-2h4v-1h1v2h2v-1h1v2h2v-2h1v-1h1v1h5v1h3v1h1v-2h5v2h2v-1h1v-1h1v2h1v-2h1v1h1v1h2v-1h1v1h1v-2h1v2h1v-1h1v-2h1v1h1v2h1v-2h1v1h1v-1h2v1h1v1h1v-1h1v-1h3v1h1v1h1v-2h1v1h1v1h1v-3h1v1h1v2h1v-3h1v1h3v1h1v1h2v-2h2v2h1v-1h1v1h2v-1h5v-2h1v3h1v-3h1v3h1v-1h1v1h1v-1h1v-2h1v-2h1v2h2v-1h1v1h1v-1h1v3h2v-1h1v-1h1v2h1v-2h1v1h1v-2h2v1h2v1h2v-2h2v3h4v-3h1v2h2v-2h1v1h1v-1h1v3h5v-2h3v1h1v1h1v-3h1v2h1v1h1v-1h1v1h2v-4h1v2h1v1h1v1h1v-3h1v2h1v1h2v-3h1v1h1v-2h1v3h2v-1h1v1h2v-1h1v-2h1v3h1v-3h1v2h1v-1h1v3h1v-1h1v1h1v-1h2v-1h1v2h1v-2h1v2h2v-2h1v-1h1v3h3v-1h2v1h2v-1h1v1h1v-1h2v-2h2v3h1v-3h1v3h1v-3h1v1h1v1h2v-1h1v2h1v-1h6v-1h2v1h2v1h1v-2h1v2h2v-3h1v2h1v-2h1v-1h1v2h1v-1h1v3h1v-2h1v1h1v-2h2v-1h2v4h1v-3h1v2h1v1h1v-3h1v3h1v-1h1v1h1v-1h3v-2h1v2h1v-1h1v2h2v-4h3v1h1v3h1v-3h2v1h1v2h1v-2h1v-1h1v2h1v-3h1v4h1v-1h1v1h1v-2h1v-1h1v3h1v-1h1v1h1v-1h1v-2h2v3h1v-2h1v2h1v-1h1v1h2v-1h1v1h1v1h2v-2h1v2h2v-2h1v1h1v-2h3v1h1v-1h1v2h1v-2h1v2h2v-2h1v2h4v-1h1v1h2v-2h5v1h4v-1h5v3h1v-1h2v1h2v-2h1v2h3v-3h1v1h1v2h1v-2h2v1h1v-2h1v2h3v-1h1v-1h1v3h2v-1h3v-1h1v2h1v-3h2v3h1v-1h1v1h1v-3h1v1h1v1h3v-2h3v3h1v-1h1v-2h1v2h1v1h1v-1h2v-1h1v2h2v-1h1v-2h1v2h2v-2h1v1h2v2h1v-1h1v-2h2v3h1v-3h2v2h1v-1h3v1h4v-2h2v1h1v1h1v1h2v-1h1v-1h1v-3h1v4h1v-2h1v3h1v-3h1v2h1v-2h1v1h1v2h1v-1h1v1h1v-2h2v1h2v-1h2v2h1v-3h1v3h2v-1h5v-1h1v-1h2v2h3v1h2v-3h2v1h1v2h1v-3h1v3h1v-3h1v2h1v1h2v-1h5v-1h1v2h1v-1h1v-1h1v2h1v-2h2v-1h1v2h1v-1h1v1h3v1h1v-3h1v1h1v-1h1v1h2v1h1v-1h1v1h1v-1h1v1h2v1h2v-2h1v2h2v-2h2v1h1v-1h1v1h2v-1h2v1h3v1h4v-2h1v2h1v-2h1v-1h1v2h1v-2h2v2h1v-1h1v2h3v-3h1v1h1v2h2v-2h1v1h2v-1h1v2h1v-1h3v1h1v-2h1v2h2v-1h1v-1h3v-1h1v3h1v-2h1v1h2v-1h1v2h1v-1h1v-1h1v-1h1v3h2v-3h1v2h1v-1h1v1h1v1h3v-2h1v2h2v-2h2v2h1v-1h1v1h1v-2h2v2h1v-2h1v1h2v1h1v-2h3v1h1v1h1v-1h1v-1h1v2h1v-1h1v1h2v-1h1v1h1v-1h1v-2h1v3h1v-1h1v1h1v-2h3v-1h1v3h2v-2h1v-1h1v3h2v-1h1v1h1v-3h2v3h3v-1h1v1h1v-2h1v1h8v-1h2v2h1v-2h3v1h2v1h1v-2h3v1h1v1h3v-1h2v-2h1v1h2v2h1v-1h1v1h1v-1h3v-1h2v1h1v-1h1v1h1v-1h1v1h1v-1h1v1h1v-4h1v3h1v1h2v-1h1v-1h1v-2h1v3h2v-2h1v2h1v1h1v-2h1v3h1v-2h2v2h1v-3h2v2h1v-1h1v1h1v-1h1v2h3v-1h2v1h5v-1h1v1h6v-4h1v3h1v-1h1v2h2v-2h3v1h1v-1h2v2h3v-2h2v2h1v-1h2v-1h2v1h2v1h1v-1h1v1h1v-1h1v1h2v-1h2v-1h1v1h1v1h1v-2h1v2h1v-4h1v3h6v-2h1v3h2v-1h1v1h1v-1h1v1h1v-2h2v1h1v1h4v-1h2v-1h2v1h1v-1h1v1h2v-1h1v1h2v1h2v-1h1v1h1v-1h1v-1h1v1h1v-1h2v2h1v-1h2v1h2v-2h1v-1h1v3h1v-1h1v1h1v-1h4v1h1v-1h3v-1h1v1h3v1h2v-1h2v1h4v-1h1v-1h5v2h1v-1h4v-1h2v-2h1v4h2v-2h2v2h2v-2h1v1h1v1h1v-1h1v-1h4v2h3v-1h1v-2h2v-2h3v-1h1v2h3v-4h1v1h1v3h1v1h1v-4h1v2h1v-4h1v5h2v-3h1v2h1v-4h2v3h1v4h1v-6h1v-1h1v5h2v-2h2v-1h1v5h1v-1h1v-2h1v2h2v1h1v-3h2v-1h1v3h2v-3h1v3h1v-1h1v-2h1v4h1v-3h1v3h1v-3h1v1h1v1h2v-1h2v2h2v-4h1v3h1v-2h1v2h1v-3h1v2h2v2h1v-1h1v-1h2v1h1v-3h1v-2h1v3h1v1h1v1h1v-5h1v5h1v-2h1v1h1v-4h1v6h1v-2h1v1h3v-2h1v2h3v-4h1v1h1v2h2v1h2v-1h1v-1h2v2h1v-3h1v3h1v1h1v-4h1v1h1v1h1v2h2v-1h1v1h1v-3h1v3h3v1h1v-3h1v2h1v-2h2v1h1v-1h1v-1h1v3h3v-4h1v1h1v4h1v-1h2v-1h1v1h1v-2h2v-1h1v1h1v1h1v-3h3v1h1v1h4v-1h1v2h1v2h1v-4h2v2h1v1h2v1h1v-1h2v-4h1v2h2v2h3v-1h1v1h1v-2h1v2h1v-2h1v-1h1v3h1v-4h1v2h2v-1h4v3h1v-1h1v2h2v-2h1v-1h4v-1h1v3h1v-2h1v1h1v-2h1v2h2v-1h1v1h1v2h1v-3h3v1h1v1h2v-3h1v-1h2v-1h1v5h1v-1h1v1h1v-1h1v-1h2v2h1v1h1v-4h1v1h2v-2h1v4h1v-4h1v2h3v2h1v-1h2v2h3v-3h1v-2h1v1h1v3h1v-4h1v5h1v-3h1v2h1v-2h1v3h1v-4h1v2h2v-1h1v2h3v-2h4v2h2v-2h1v-1h1v3h1v-1h2v-2h1v2h1v1h2v-4h1v5h2v-1h1v-3h2v3h1v-3h1v1h1v-2h1v5h1v-4h2v4h1v-4h1v3h3v-3h1v-3h1v4h3v4h1v4h-1v6h-1v-4h-1v1h-2v2h-1v1h-2v-3h-1v-1h-2v4h-1v-2h-1v-1h-1v-2h-2v2h-1v-2h-1v2h-1v5h-1v-3h-2v-3h-1v5h-1v-2h-1v-2h-5v1h-1v-2h-1v4h-2v-1h-1v-3h-2v3h-2v-3h-4v1h-2v-1h-1v3h-2v-2h-1v-1h-2v2h-2v2h-2v-2h-6v1h-1v-4h-2v2h-4v2h-2v1h-1v-1h-3v-4h-2v4h-1v-1h-2v3h-1v-1h-1v-4h-1v4h-1v-3h-2v-1h-1v1h-1v2h-1v-2h-2v3h-1v-3h-3v1h-2v-3h-1v3h-1v1h-3v-2h-1v1h-1v2h-2v-5h-1v2h-1v3h-2v-2h-1v-2h-3v1h-2v-1h-1v-1h-1v3h-1v-1h-1v2h-1v1h-2v-4h-1v4h-1v-2h-1v2h-1v-1h-1v-2h-2v1h-2v2h-1v-3h-1v3h-1v-1h-1v-4h-1v1h-1v4h-1v-2h-3v-3h-1v1h-3v3h-3v1h-2v-3h-1v1h-3v-2h-2v2h-1v1h-2v-3h-3v4h-3v-3h-1v1h-2v1h-1v-2h-3v-1h-1v2h-1v1h-1v-2h-1v-1h-1v2h-2v-1h-1v2h-1v-2h-3v6h-1v-4h-1v-3h-1v2h-1v1h-1v-3h-1v1h-1v1h-1v3h-1v-5h-1v1h-1v4h-2v-5h-1v1h-1v1h-3v3h-1v-3h-1v1h-2v1h-2v-3h-2v3h-2v2h-1v-6h-1v2h-1v3h-2v-1h-1v-2h-1v-2h-3v2h-1v1h-1v-3h-1v2h-1v1h-1v1h-1v-3h-1v-1h-2v4h-1v-1h-1v-3h-2v4h-2v-4h-2v4h-1v-4h-1v3h-2v-3h-1v4h-1v-2h-2v-1h-1v2h-1v-3h-1v4h-1v3h-1v-6h-4v1h-1v4h-1v-3h-2v-1h-1v2h-2v2h-1v-5h-2v4h-1v2h-1v-1h-1v-2h-1v-1h-1v-1h-1v2h-1v-3h-3v-1h-1v2h-1v-1h-1v4h-2v-5h-1v-2h-1v2h-1v-2h-1v2h-3v-2h-1v1h-2v-1h-3v1h-1v1h-1v-1h-1v-1h-1v1h-1v-1h-3v2h-1v-1h-2v1h-2v-2h-1v2h-1v-2h-1v2h-2v-1h-1v-1h-3v1h-1v-1h-4v1h-1v-1h-1v2h-1v-1h-2v1h-1v-2h-1v1h-2v-1h-2v2h-1v-1h-1v1h-1v-2h-1v2h-1v-1h-3v1h-2v-2h-1v1h-1v2h-1v-1h-1v-1h-2v-1h-1v1h-2v-1h-1v2h-2v-1h-2v-1h-2v2h-2v-1h-2v-1h-2v1h-1v1h-1v-1h-5v1h-1v-1h-1v2h-1v-2h-1v-1h-2v1h-2v-1h-2v2h-2v-2h-3v1h-2v-1h-1v2h-3v-2h-3v3h-1v-2h-1v2h-2v-2h-1v1h-2v-2h-3v3h-1v-2h-3v1h-1v-2h-1v3h-1v-1h-1v-1h-4v1h-1v-2h-1v2h-1v-1h-1v2h-2v-2h-3v-1h-2v2h-1v1h-3v-2h-3v-1h-1v1h-1v2h-2v-1h-2v-1h-4v-1h-3v1h-1v2h-1v-1h-1v1h-1v-1h-1v4h-1v-1h-1v-3h-2v2h-1v-2h-1v-1h-2v1h-1v-2h-2v2h-1v-2h-2v2h-1v-1h-1v1h-2v-1h-1v1h-1v-2h-1v2h-1v-1h-1v1h-2v1h-1v-2h-2v2h-1v-2h-2v-1h-2v2h-2v-1h-4v1h-1v-2h-3v2h-3v4h-1v-6h-1v1h-1v-1h-1v3h-1v-1h-1v-2h-3v2h-2v-1h-1v1h-1v-1h-1v1h-3v-1h-7v1h-1v-2h-1v1h-1v1h-2v-2h-2v1h-2v-1h-1v1h-1v-1h-2v2h-1v2h-1v-4h-2v3h-1v-1h-1v-1h-1v-1h-4v1h-1v-1h-1v1h-1v-1h-2v1h-1v-1h-1v3h-2v-3h-1v2h-1v-1h-1v1h-1v-1h-1v1h-1v1h-1v-3h-2v2h-1v-2h-1v3h-1v-1h-1v1h-1v-2h-3v1h-1v-1h-1v1h-1v-2h-4v1h-1v1h-1v1h-2v-1h-3v-2h-6v2h-1v-2h-1v3h-1v-2h-1v-1h-1v1h-2v-1h-1v2h-4v-1h-1v1h-3v1h-1v-2h-3v-1h-2v2h-1v-2h-1v1h-1v-1h-1v2h-1v1h-1v-2h-2v-1h-2v3h-1v-2h-2v-1h-2v1h-1v-1h-1v2h-1v-1h-1v1h-1v-1h-1v1h-2v1h-1v-3h-1v1h-1v-1h-1v1h-2v2h-3v-1h-1v-2h-1v1h-2v2h-2v-2h-1v1h-1v-1h-1v-1h-1v1h-1v-1h-1v2h-1v-1h-1v2h-1v-3h-4v2h-1v-1h-1v1h-1v1h-1v-1h-1v-2h-5v1h-1v1h-1v1h-1v-2h-1v-1h-3v3h-3v-2h-1v2h-1v-1h-1v-2h-2v1h-2v1h-1v-2h-4v3h-1v-1h-2v-1h-1v2h-1v-1h-1v-1h-1v1h-1v1h-1v-2h-2v1h-1v-1h-1v-1h-2v1h-1v1h-2v-1h-1v2h-1v-3h-1v2h-1v-2h-1v3h-2v-1h-1v-1h-1v-1h-2v3h-2v-3h-1v1h-1v1h-1v-2h-3v3h-1v-1h-1v-2h-1v2h-1v1h-1v-3h-1v2h-1v1h-3v-2h-2v1h-1v-1h-1v1h-2v-1h-1v1h-2v-2h-1v1h-1v-1h-3v1h-2v2h-1v-2h-1v2h-3v-1h-1v1h-3v-3h-4v2h-4v-1h-1v4h-1v-5h-1v2h-3v-1h-1v1h-1v1h-1v-2h-1v1h-1v-2h-5v1h-2v1h-2v-2h-1v3h-1v-3h-1v2h-1v-1h-1v2h-1v-2h-1v1h-1v1h-3v-1h-1v-1h-1v2h-1v-3h-2v2h-1v-2h-2v3h-1v-3h-1v2h-3v-1h-2v2h-1v-1h-1v-2h-1v2h-1v1h-1v-1h-1v-1h-1v2h-1v1h-1v-2h-1v1h-1v-2h-1v4h-1v-2h-6v-2h-1v2h-1v-2h-2v1h-1v-1h-1v1h-1v-1h-4v1h-1v-1h-1v1h-3v1h-1v-2h-1v2h-1v-2h-1v3h-1v-3h-1v4h-2v-1h-1v-2h-1v-1h-2v4h-1v-3h-1v3h-1v-2h-3v1h-4v-2h-1v3h-1v-3h-3v3h-2v-3h-1v1h-1v-1h-1v1h-1v-2h-1v1h-1v-1h-1v2h-1v-2h-6v2h-1v1h-1v-3h-1v3h-2v-1h-1v-2h-1v3h-2v-1h-1v2h-1v-3h-3v2h-1v-3h-3v2h-2v-2h-3v1h-1v2h-1v1h-1v-4h-2v3h-2v-3h-2v2h-1v1h-1v-3h-1v1h-1v1h-1v1h-1v1h-2v-2h-3v-2h-1v3h-1v-2h-1v1h-1v1h-1v-1h-2v-2h-1v2h-1v-2h-1v2h-3v-2h-1v4h-1v-2h-1v-2h-2v2h-2v-1h-1v2h-2v-1h-3v1h-2v-2h-1v1h-1v-2h-1v4h-1v-3h-1v1h-3v2h-1v-4h-1v1h-1v2h-1v1h-1v-4h-1v4h-1v-3h-4v-1h-3v2h-3v-2h-1v3h-1v1h-1v-3h-5v-2h-2v1h-1v1h-1v-1h-1v1h-1v-1h-1v1h-1v-1h-3v5h-1v-6h-1v2h-1v-1h-3v-1h-2v4h-1v-2h-3v1h-1v-3h-1v1h-1v-1h-1v3h-1v-3h-4v1h-1v1h-1v1h-1v-1h-3v-1h-1v-1h-1v2h-1v1h-1v-1h-3v-2h-3v2h-5v-2h-1v3h-1v-1h-1v-2h-1v2h-1v-1h-6v2h-1v-2h-1v1h-1v-1h-1v5h-1v-5h-1v2h-1v-3h-2v2h-4v-1h-4v-1h-1v2h-2v-1h-1v1h-1v-2h-1v3h-1v-2h-1v1h-4v-2h-1v2h-1v-1h-3v-1h-1v1h-1v-1h-3v1h-2v1h-1v-2h-2v3h-1v-3h-1v2h-2v-1h-1v1h-1v-1h-1v-1h-1v3h-2v-2h-1z"/>
<path d="M277,696h1v-1h1v2h4v-4h1v1h1v1h4v2h1v-1h1v-1h2v1h1v-3h2v1h1v1h1v2h2v-2h1v1h2v1h1v-1h1v-5h1v4h1v1h1v-1h3v-1h1v1h2v1h2v1h3v-2h1v2h1v-3h1v-1h1v4h1v-3h1v1h1v-2h1v2h1v2h1v-2h1v-2h1v3h1v-2h1v-1h1v1h1v3h3v-2h3v-1h2v2h1v-4h1v3h1v1h1v1h3v-2h2v-2h1v4h1v-1h1v-2h1v3h1v-2h4v2h1v-3h1v-1h1v2h3v2h2v-2h2v1h1v-3h2v3h2v1h1v-2h1v2h1v-2h4v2h2v-3h1v3h2v-4h3v2h1v-2h1v1h2v2h2v-1h1v2h1v-1h1v-3h1v4h1v-2h1v2h1v-3h1v-1h2v2h1v1h2v1h4v-1h2v-1h1v-1h1v1h3v1h3v-2h1v-1h1v2h1v-2h1v1h1v1h1v-2h1v2h1v-1h1v1h1v-1h1v-1h1v1h2v3h1v-2h1v1h1v-2h1v2h4v-1h2v2h1v-1h1v-2h1v-2h1v4h1v-3h1v1h1v3h1v-4h1v3h1v-2h1v3h1v-4h1v1h5v2h1v-2h1v1h2v1h1v-1h2v-1h2v1h1v-1h1v2h4v-1h1v1h1v-1h3v-1h3v1h1v-2h1v1h1v2h1v1h1v-4h1v4h1v-3h2v2h1v1h1v-2h1v1h1v-1h1v2h1v-2h1v-1h1v1h2v-1h2v2h1v1h1v-1h1v-1h7v-2h1v3h2v-3h1v1h1v-1h1v4h1v-3h1v2h1v1h1v-1h3v-1h1v2h1v-1h3v-3h1v3h5v1h2v-1h1v-1h1v-2h1v1h1v1h3v-2h1v2h2v-1h2v3h1v-2h2v-1h3v3h1v-2h1v-2h1v2h2v2h2v-2h1v-2h1v3h1v-2h1v3h1v-1h1v1h1v-4h3v3h1v-3h1v4h1v-3h1v1h1v-1h1v3h1v-3h1v2h5v-1h4v2h3v-3h1v3h1v-4h1v1h1v3h3v-1h2v1h1v-3h1v3h2v-3h1v1h1v2h1v-3h2v3h1v-1h1v-2h1v3h1v-1h1v1h4v-4h1v3h1v1h1v-1h1v-1h2v1h2v-2h1v1h1v1h1v1h1v-2h1v2h1v-4h1v4h1v-2h3v2h1v-4h1v3h2v1h1v-2h1v2h1v-1h1v-1h1v-1h3v2h5v-2h1v3h1v-2h2v1h1v-1h1v1h1v-2h1v-1h1v1h2v2h2v1h1v-2h1v-1h1v3h1v-3h1v3h2v-2h1v-1h1v3h1v-2h1v1h1v-3h1v4h1v-1h4v1h5v-1h1v1h1v-1h2v-1h1v-1h2v1h1v-1h1v1h1v2h1v-2h1v-1h3v2h1v-1h1v-1h1v3h2v-2h1v-2h1v3h2v-2h1v1h1v-1h1v1h1v1h1v1h2v-2h1v2h2v-1h1v-2h1v3h1v-1h3v1h2v-1h1v-1h1v1h4v-2h1v3h1v-1h2v1h1v-4h1v3h4v-2h1v2h5v1h1v-1h2v-1h2v2h3v-2h2v2h3v-1h1v-2h1v2h1v1h1v-2h1v-1h3v3h3v-3h2v3h1v-1h2v-1h2v2h1v-3h1v1h1v-1h1v1h1v1h3v1h1v-2h1v1h1v-1h1v2h3v-1h1v-1h1v2h1v-3h1v4h1v-4h1v3h2v-1h1v-2h1v1h1v2h3v-6h1v5h1v1h1v-2h1v-1h2v3h1v1h1v-3h1v2h2v1h1v-2h1v1h2v-3h1v2h1v1h1v-1h1v-2h2v3h2v-2h3v3h1v-1h2v-1h2v-1h2v2h2v-2h4v2h1v-2h2v2h2v-1h2v-1h1v-3h2v3h1v-4h1v5h1v-1h1v-4h1v4h1v-3h1v5h1v-3h1v1h1v2h1v-3h1v3h1v-2h3v2h2v1h1v-1h3v-2h1v1h1v-1h2v2h2v-1h2v-2h2v2h1v-1h1v1h2v1h1v-3h1v2h2v2h1v-1h1v-2h2v2h2v-1h1v-1h1v3h2v-1h4v-2h1v-1h1v1h2v-1h1v2h2v-1h1v-1h2v3h2v-1h2v-1h1v1h1v1h3v-2h1v2h1v1h2v-1h3v-2h1v-1h1v2h3v2h2v-1h3v-2h1v2h3v-1h1v1h1v-1h1v1h2v-1h2v1h2v-2h1v2h1v1h1v-1h2v1h3v-3h1v2h1v-2h1v3h3v-1h2v-3h1v3h4v-1h2v1h2v1h1v-3h2v2h1v1h3v-2h1v2h1v-2h1v1h4v-1h3v2h1v-2h2v-1h1v2h1v-2h3v3h1v-1h2v-1h1v-2h1v2h1v1h1v-1h1v2h3v-3h4v1h5v2h1v-1h3v-3h1v3h1v-1h1v1h6v1h1v-3h1v3h1v-3h1v2h3v-1h1v1h2v-1h1v-1h1v1h2v2h1v-5h1v1h1v1h2v-2h1v2h1v1h1v1h1v-1h1v-1h4v2h3v-1h1v1h1v-2h2v1h1v2h1v-1h1v-1h2v2h1v-1h3v-1h4v-1h2v2h1v-3h1v1h1v2h1v1h1v-2h1v-2h5v-1h3v1h1v-1h1v3h1v-1h1v1h2v-1h1v1h1v-2h2v2h1v1h1v-2h4v-1h2v1h1v3h1v-2h1v1h4v-1h1v-1h1v1h3v1h1v-2h1v2h1v-1h1v-1h2v2h2v-2h1v2h2v-1h3v-2h1v2h1v2h2v-2h1v-1h2v2h2v-2h1v3h2v-1h1v1h1v-2h1v-1h1v1h2v-1h1v1h2v-2h1v3h1v-2h1v2h1v-2h4v2h1v1h2v-1h1v-3h1v3h3v-1h1v1h1v-2h1v3h2v-1h3v-2h2v2h2v-2h5v-1h3v3h1v-3h1v3h1v-3h1v3h1v-2h2v-2h1v2h1v2h1v-2h3v2h2v-4h1v1h1v-1h1v2h3v2h1v-2h1v1h1v-1h2v2h1v-4h1v1h1v1h2v1h1v1h1v1h1v-4h1v1h2v1h1v1h1v-2h1v-1h1v3h1v1h1v-2h1v-1h2v2h1v-2h1v-1h2v2h2v1h2v-1h2v2h1v-3h1v2h1v-2h1v2h1v-1h1v-2h1v2h2v1h1v-2h1v2h2v1h2v-3h1v1h1v-1h1v2h1v-1h1v-1h1v1h2v2h1v-2h1v-1h1v1h1v-1h1v1h1v-1h1v2h1v-3h3v1h3v-1h1v4h1v-3h1v1h1v-1h1v1h1v1h1v-1h1v1h3v-2h2v3h1v-1h2v-2h1v1h1v1h1v-1h2v-1h4v2h1v1h2v-3h2v2h1v-3h1v1h1v1h1v1h3v-1h2v2h1v-3h1v1h1v-1h1v1h1v-1h1v2h3v-2h2v1h5v-1h2v2h3v-2h2v1h2v-1h2v3h2v-3h1v1h1v1h1v-2h2v1h2v2h1v-2h1v1h2v-2h1v2h1v-2h1v3h1v-2h1v2h1v5h-2v-1h-2v3h-1v-1h-1v-1h-1v2h-1v-2h-2v2h-1v-3h-1v1h-5v2h-1v-1h-1v1h-1v-2h-1v1h-5v2h-1v-3h-2v-1h-2v3h-1v-2h-2v2h-1v-2h-1v2h-1v-2h-1v2h-3v-1h-2v2h-2v-3h-2v1h-1v1h-1v-3h-5v2h-1v-1h-1v-1h-2v2h-1v1h-1v-3h-1v1h-3v2h-1v-1h-2v-2h-1v6h-1v-6h-1v2h-1v2h-1v-4h-1v3h-1v-3h-3v3h-3v-3h-1v1h-2v2h-1v-3h-1v1h-2v-1h-1v3h-2v-1h-2v-1h-2v2h-1v-1h-1v-1h-3v1h-3v-1h-5v2h-1v-2h-1v-1h-1v1h-3v-1h-2v3h-2v-2h-1v2h-3v-1h-1v-1h-2v-1h-1v2h-1v-1h-3v-1h-1v1h-1v2h-1v-2h-3v1h-2v-2h-1v2h-1v2h-1v-3h-1v1h-2v2h-1v-1h-1v-2h-7v1h-2v1h-1v-2h-3v3h-1v-1h-1v2h-2v-3h-1v-1h-2v5h-1v-4h-1v-1h-1v1h-6v1h-1v-2h-1v2h-1v-2h-1v1h-1v2h-1v-1h-1v1h-1v-1h-1v-1h-1v-1h-2v1h-1v-1h-1v2h-4v-1h-4v1h-1v-1h-3v-2h-1v2h-1v1h-1v-1h-1v1h-1v-1h-1v-1h-3v1h-1v-2h-1v1h-1v2h-1v-1h-1v-1h-1v2h-3v-3h-1v2h-1v1h-1v-2h-1v3h-1v-1h-1v-1h-1v1h-1v-2h-1v2h-1v-2h-2v2h-5v1h-1v-4h-2v2h-1v-1h-3v1h-1v2h-1v-2h-1v-1h-3v2h-1v-3h-1v1h-1v1h-5v1h-1v-2h-2v3h-2v-3h-1v1h-1v2h-3v-1h-1v-1h-1v3h-2v-4h-2v1h-1v2h-1v-1h-1v-1h-1v1h-2v-2h-2v3h-3v-1h-1v1h-1v-2h-1v1h-1v-1h-1v-1h-1v2h-1v-2h-1v-1h-1v2h-1v1h-1v-3h-1v2h-1v-1h-1v2h-2v-1h-1v-2h-1v2h-1v1h-4v1h-1v-3h-1v1h-1v-1h-1v1h-1v1h-1v-2h-1v2h-1v-1h-1v-1h-2v1h-1v-1h-1v1h-4v1h-1v-2h-2v-1h-1v1h-1v2h-1v-2h-1v1h-1v-1h-3v2h-1v-2h-1v2h-1v-2h-1v5h-1v-4h-1v1h-1v-3h-1v1h-1v2h-1v-1h-1v-1h-1v2h-1v-2h-1v-1h-1v1h-1v-1h-1v2h-1v-2h-1v1h-1v2h-1v-3h-1v1h-1v-1h-1v2h-3v-1h-1v1h-2v-1h-1v-1h-1v1h-1v1h-2v1h-1v-3h-2v1h-1v-1h-2v2h-1v-1h-1v1h-2v-1h-1v-1h-1v2h-2v-2h-2v1h-1v2h-1v-3h-1v3h-1v-3h-3v2h-2v-1h-1v1h-1v1h-1v-2h-3v-1h-1v2h-1v-1h-1v2h-2v-1h-2v1h-2v-2h-1v1h-1v-1h-5v-1h-1v2h-1v1h-2v-1h-3v-1h-1v1h-1v1h-1v-2h-1v-1h-1v1h-1v2h-4v-3h-1v3h-1v-1h-1v-2h-1v2h-1v-1h-1v2h-3v-2h-1v2h-1v-2h-1v2h-2v-2h-1v-1h-2v1h-1v1h-1v-1h-4v-1h-1v2h-2v-1h-1v1h-1v1h-2v-2h-1v2h-1v-2h-1v2h-1v-3h-1v3h-1v-2h-1v2h-1v-2h-1v2h-1v-2h-1v2h-2v-1h-1v-2h-3v1h-1v1h-2v-1h-1v2h-1v-1h-1v2h-1v-4h-1v4h-1v-2h-1v1h-2v-2h-1v2h-1v1h-1v-3h-1v1h-3v-1h-2v3h-1v-2h-2v-1h-1v3h-1v-3h-1v1h-3v2h-1v-1h-2v-3h-1v4h-1v-3h-4v1h-1v-1h-2v7h-1v-6h-2v4h-1v-4h-1v5h-2v-3h-1v-1h-1v-1h-1v-1h-1v3h-1v-3h-1v2h-1v-1h-1v2h-1v-3h-1v2h-1v-1h-2v-2h-1v4h-1v-3h-1v3h-1v-1h-1v1h-1v-2h-2v1h-4v-2h-1v2h-1v-1h-1v-1h-2v2h-2v-2h-1v8h-1v-7h-1v1h-1v-1h-2v1h-2v-1h-2v-1h-1v-1h-1v3h-2v-3h-1v4h-3v-4h-1v1h-1v3h-1v-2h-1v1h-1v-2h-2v1h-3v-2h-2v1h-2v1h-1v1h-1v-1h-2v-1h-1v1h-3v2h-3v-3h-2v2h-1v-2h-1v1h-1v-1h-2v1h-1v-1h-1v2h-1v-2h-1v2h-1v-2h-1v1h-3v-1h-1v7h-1v-7h-3v3h-5v-1h-1v-2h-1v3h-2v-3h-4v2h-1v2h-1v-4h-1v2h-1v-2h-3v1h-1v2h-1v-1h-1v3h-1v-5h-1v1h-1v1h-3v1h-1v-2h-1v-1h-1v1h-1v2h-3v-2h-2v-1h-2v3h-1v-1h-2v-2h-1v1h-1v1h-3v2h-1v-4h-2v2h-1v2h-1v-1h-1v-3h-1v2h-2v-1h-2v1h-1v-1h-1v2h-1v-2h-1v1h-2v-1h-1v1h-1v-1h-2v-1h-1v7h-1v-7h-1v1h-1v-1h-4v2h-3v-2h-1v4h-2v-4h-2v1h-3v-1h-1v6h-1v-5h-2v2h-1v-2h-1v2h-2v-3h-1v3h-1v-3h-1v1h-1v3h-5v-1h-1v-2h-1v-1h-1v1h-3v2h-1v-1h-1v-2h-1v1h-1v-1h-1v1h-1v-1h-1v2h-1v2h-6v-3h-1v1h-1v2h-1v-4h-1v2h-1v1h-1v-3h-1v3h-1v-3h-1v4h-1v-1h-2v1h-2v-2h-1v-2h-2v4h-1v-3h-1v1h-1v-1h-2v2h-1v-2h-2v-1h-1v1h-2v2h-1v1h-1v-1h-1v-3h-2v3h-1v1h-1v-4h-1v3h-2v-1h-1v2h-1v-3h-1v-1h-1v3h-1v-2h-2v2h-1v1h-1v-4h-4v2h-1v1h-1v-2h-2v2h-3v-3h-1v1h-1v-1h-1v4h-1v2h-1v-3h-1v1h-1v-4h-1v1h-3v3h-5v-3h-4v2h-1v-3h-1v4h-1v-4h-2v1h-1v3h-2v-3h-3v2h-1v-2h-2v2h-1v-1h-1v1h-1v-1h-1v-2h-1v1h-1v2h-6v-1h-1v-1h-1v2h-1v-1h-1v2h-1v-2h-1v-1h-2v1h-5v-2h-2v2h-5v-2h-1v2h-2v-1h-2v2h-1v-1h-3v-2h-1v3h-1v-1h-1v-1h-1v3h-1v-3h-2v-1h-1v1h-1v3h-1v-1h-3v1h-4v-4h-2v2h-1v-1h-3v1h-3v-1h-1v-1h-1v3h-1v-2h-1v1h-1v-2h-1v2h-2v2h-1v4h-1v-2h-1v-4h-2v-2h-2v4h-2v-4h-1v3h-1v-1h-1v1h-1v-3h-1v1h-1v3h-2v-1h-1v-1h-1v-2h-1v2h-1v1h-2v-2h-1v3h-2v-1h-1v-3h-1v3h-2v-1h-1v-2h-1v4h-1v-2h-2v2h-1v-3h-1v4h-1v-5h-1v4h-1v-3h-3v-1h-3v1h-1v-1h-1v3h-1v-3h-1v1h-1v2h-1v-1h-1v2h-1v-3h-1v-1h-1v1h-2v3h-3v-4h-1v2h-1v-2h-1v1h-1v3h-1v-4h-3v3h-1v-3h-1v1h-1v-1h-1v4h-2v-3h-1v1h-2v-1h-3v-1h-3v1h-1v1h-2v1h-1v1h-2v-1h-1v1h-2v-4h-2v7h-1v-6h-2v1h-3v-2h-1v1h-4v-1h-2v4h-1v-3h-1v2h-1v1h-2v-2h-1v-2h-1v1h-2v3h-2v-4h-1v2h-1v1h-1v1h-2v-2h-1v1h-4v-2h-1v2h-1v-3h-2v3h-1v-2h-2v1h-1v-2h-1v1h-1v3h-1v-1h-1v-3h-1v4h-1v-3h-1v-1h-2v2h-1v-2h-2v4h-1v-2h-1v2h-1v-3h-3v1h-2v-1h-1v7h-1v-8h-2v1h-2v2h-1v-2h-1v1h-1v1h-1v-3h-2v4h-1v1h-1v-4h-1v1h-1v-2h-1v3h-1v1h-3v-2h-1v5h-1v-5h-1v-1h-2v2h-1v-1h-1v2h-1v-3h-1v1h-2v-1h-1v-1h-1v3h-2v-1h-2v-2h-1v1h-1v3h-2v-1h-2v-2h-1v1h-2v1h-4z"/>
<path d="M277,726h1v2h1v-1h3v-1h1v2h1v-1h1v1h1v-1h2v-1h1v1h1v1h2v-1h1v1h3v-4h1v2h3v2h1v-1h1v-1h2v1h6v1h1v-2h3v1h1v1h1v-1h1v1h3v-2h2v-2h1v2h3v2h1v-2h1v2h3v-1h1v1h2v-1h1v-1h2v1h1v-1h1v2h1v-1h1v-1h1v1h2v1h3v-1h1v-1h1v1h2v1h3v-2h1v-2h1v3h1v-1h1v1h1v1h1v-1h1v1h1v-2h1v2h2v-1h1v1h1v-3h1v3h2v-2h2v1h2v-1h1v1h4v-1h1v2h1v-1h6v-1h1v1h1v1h2v-1h5v1h1v-1h1v1h1v-2h1v2h4v-3h2v1h3v2h1v-1h2v-1h1v2h2v-1h3v-1h1v2h1v-1h1v-4h1v5h1v-2h1v2h1v-2h1v2h4v-2h1v1h5v1h1v-1h1v1h2v-1h1v-1h1v2h2v-2h2v2h2v-2h2v1h1v1h1v-1h1v1h1v-2h2v1h3v1h4v-1h1v1h1v-1h2v-1h1v2h1v-1h3v1h1v-1h1v1h1v-2h2v2h2v-2h1v1h4v-2h1v3h4v-1h2v1h1v-2h1v1h8v1h1v-1h4v1h1v-2h1v1h1v-1h1v1h1v-1h1v1h2v-1h1v1h1v1h2v-1h1v1h3v-2h1v1h1v-1h1v1h3v-1h1v1h1v-1h1v1h3v-1h1v1h1v1h1v-1h3v1h1v-1h3v-1h2v-1h2v2h1v1h1v-2h1v2h1v-2h4v1h2v1h1v-3h1v2h3v-3h1v3h1v-1h1v1h3v-2h2v1h1v2h3v-2h3v2h1v-1h2v1h2v-1h1v-1h2v2h4v-2h3v1h3v1h1v-1h1v-1h2v2h1v-1h2v1h1v-2h2v1h2v-1h1v1h2v-1h2v2h3v-2h2v2h1v-2h1v1h1v1h4v-1h2v-1h2v1h4v1h3v-1h1v1h5v-1h1v-3h1v4h1v-2h1v1h1v1h1v-1h1v1h2v-1h1v-1h1v1h4v-1h1v2h1v-1h1v1h1v-1h2v-1h3v1h3v1h2v-1h2v-1h2v1h2v1h1v-1h1v1h1v-1h1v1h1v-3h1v1h1v2h1v-2h2v2h2v-2h1v2h2v-1h1v1h1v-1h1v1h1v-2h1v2h1v-1h1v1h1v-2h3v2h1v-1h1v1h2v-2h2v1h2v-1h3v1h2v1h1v-2h1v2h1v-2h3v2h3v-1h4v1h1v-2h2v2h1v-2h2v2h1v-1h1v-1h1v2h3v-2h3v2h4v-1h4v1h1v-1h1v-1h1v2h1v-5h1v3h2v2h7v-1h6v1h1v-1h1v-1h2v1h1v1h1v-1h1v1h1v-2h1v2h3v-1h1v1h4v-2h2v1h3v1h1v-2h1v2h2v-2h1v1h1v-1h1v1h2v1h3v-2h1v1h1v-1h2v2h1v-1h3v-1h1v2h1v-1h1v-1h2v1h2v1h1v-2h1v2h2v-1h3v1h3v-1h1v-1h1v2h1v-1h1v1h2v-2h1v2h1v-1h3v-1h1v2h1v-2h1v2h2v-2h1v2h6v-1h1v-1h1v1h2v-1h1v1h2v-1h2v1h2v1h2v-1h1v1h2v-2h1v2h1v-1h1v1h4v-2h1v2h1v-2h1v1h3v1h1v-1h1v1h12v-1h1v1h3v-1h1v1h1v-2h1v1h2v1h2v-1h1v-1h1v2h1v-1h1v-1h1v2h1v-2h1v2h1v-2h1v2h1v-5h1v4h1v-1h1v1h1v1h1v-2h2v1h1v1h1v-2h2v2h1v-1h2v-1h1v2h1v-2h1v1h2v1h1v-2h3v2h1v-4h1v4h4v-1h2v1h4v-1h4v1h3v-1h2v1h1v-5h1v5h1v-1h2v1h1v-1h4v1h2v-2h1v2h2v-1h1v1h2v-1h1v-1h1v1h1v-1h1v2h3v-4h1v3h2v1h1v-1h6v1h1v-1h2v-1h1v2h1v-2h1v2h5v-2h4v1h1v-1h1v1h2v1h1v-1h3v1h1v-1h2v-1h1v2h1v-1h1v1h1v-1h2v1h1v-1h1v1h2v-2h1v1h1v-1h2v1h3v-1h1v-1h1v3h1v-1h1v-1h1v1h1v1h1v-1h1v-1h1v2h1v-1h3v1h2v-2h1v2h3v-1h3v-1h1v2h1v-1h1v-1h1v1h1v1h1v-1h1v1h1v-2h4v-2h1v2h1v2h1v-3h1v3h2v-2h3v1h1v-1h1v1h2v-1h1v2h2v-1h2v-1h1v2h2v-1h4v-1h1v2h1v-1h3v-1h2v2h2v-1h6v1h1v-1h1v1h1v-1h1v1h2v-1h3v1h1v-1h1v1h2v-2h1v1h2v1h4v-1h3v-1h1v2h2v-1h1v1h1v-2h3v1h2v-1h1v1h2v-1h3v1h1v-1h2v-1h1v2h1v1h1v-1h1v-1h2v2h3v-1h3v1h2v-1h1v1h2v-4h1v4h1v-2h2v2h1v-1h1v-1h1v2h1v-1h1v-1h1v1h4v1h1v-1h2v1h1v-2h1v2h2v-2h1v1h1v1h1v-1h3v1h1v-1h1v-2h2v2h2v1h2v-2h1v2h1v-1h2v1h1v-3h1v2h1v-4h1v3h1v1h2v-1h1v1h4v1h2v-1h2v1h2v-2h2v2h3v-2h2v1h1v-1h1v1h1v1h5v-4h1v3h2v1h1v-2h3v1h1v-1h2v1h4v1h3v-2h1v1h1v-1h2v1h1v1h1v-2h1v1h1v-1h1v1h1v-1h1v1h2v-1h1v1h1v1h6v-1h1v1h1v-1h4v1h2v-2h1v1h1v-1h2v2h1v-1h1v-1h1v2h5v-2h1v2h2v-2h1v1h1v-1h2v2h2v-2h1v2h1v-2h1v1h3v-3h1v3h1v1h1v-1h1v1h1v-1h2v-1h1v2h1v-2h3v1h1v-4h1v5h1v-1h4v1h1v-1h1v-1h2v-1h1v3h2v-2h1v-1h2v2h1v1h1v-2h1v2h1v-3h1v3h1v-2h1v2h1v-1h1v-1h1v1h1v1h2v-3h1v1h2v2h1v-1h2v-1h1v2h1v-1h1v-2h1v3h1v-2h1v1h2v-1h1v1h4v1h1v-1h1v1h1v-2h1v1h2v-1h1v2h2v-1h2v1h3v-1h2v1h1v-1h1v1h2v-2h1v2h2v5h-1v1h-1v-1h-2v1h-1v-2h-3v1h-2v-1h-1v1h-4v1h-2v-2h-2v1h-2v-1h-4v1h-1v1h-1v-1h-1v1h-1v-2h-1v1h-1v-1h-1v2h-1v-2h-1v2h-3v-2h-1v1h-1v1h-1v-1h-1v-1h-2v1h-2v-1h-2v2h-4v-2h-3v1h-1v1h-1v-2h-1v1h-5v-1h-2v1h-2v-1h-1v2h-4v-1h-2v1h-1v-1h-1v-1h-1v1h-2v5h-1v-5h-1v1h-1v-2h-2v2h-1v-2h-2v2h-1v-1h-2v2h-1v-1h-1v-2h-1v3h-1v-3h-3v1h-2v1h-4v-2h-1v1h-2v1h-1v-1h-2v1h-1v-2h-1v2h-1v-2h-1v1h-1v-1h-2v2h-1v-2h-1v1h-3v-1h-3v1h-1v-1h-2v1h-1v1h-2v-2h-4v1h-1v-1h-3v2h-3v4h-1v-4h-2v-2h-1v2h-2v-1h-2v-1h-2v1h-2v1h-2v-2h-1v1h-1v-1h-1v3h-1v-1h-2v-1h-2v1h-1v-1h-5v1h-2v-1h-1v-1h-1v2h-1v-2h-1v1h-2v-1h-2v1h-1v1h-1v-2h-1v2h-1v-2h-1v2h-1v-1h-3v-1h-1v4h-1v-2h-2v-2h-1v2h-2v-1h-2v-1h-4v1h-1v-1h-6v1h-1v-1h-1v1h-1v-1h-5v3h-1v-2h-2v1h-1v-1h-1v-1h-1v2h-1v1h-1v-1h-2v-1h-2v-1h-2v1h-2v1h-1v-2h-2v2h-1v-1h-3v-1h-2v1h-2v-1h-1v1h-2v1h-2v-1h-1v-1h-1v1h-1v-1h-3v2h-3v-2h-1v2h-3v-1h-1v-1h-2v2h-3v-2h-3v2h-4v-1h-2v-1h-4v1h-1v1h-1v-1h-3v-1h-1v2h-2v-2h-3v1h-2v-1h-1v1h-2v-1h-5v1h-1v-1h-1v2h-1v2h-1v-1h-1v-2h-2v-1h-1v2h-1v1h-1v-1h-1v-1h-1v-1h-1v2h-2v-2h-1v1h-1v-1h-1v1h-1v2h-1v-2h-2v1h-2v-2h-2v1h-2v1h-1v-2h-4v2h-2v-2h-1v2h-2v-2h-1v3h-1v-2h-1v-1h-1v2h-1v-2h-2v2h-3v-2h-1v1h-1v1h-4v-2h-1v2h-1v4h-1v-4h-1v-2h-1v1h-3v-1h-1v1h-1v-1h-1v2h-1v-2h-1v1h-2v-1h-5v2h-1v-1h-1v-1h-1v1h-1v1h-1v-1h-1v-1h-2v1h-2v1h-1v-1h-2v-1h-2v1h-1v1h-1v-2h-1v1h-1v1h-1v-2h-2v3h-2v-3h-1v1h-1v1h-1v-2h-1v2h-1v-2h-3v1h-1v1h-1v-1h-1v1h-1v-2h-2v1h-1v1h-1v-2h-1v1h-2v-1h-2v1h-3v-1h-1v2h-3v-2h-2v2h-2v3h-1v-3h-1v-1h-3v1h-1v-1h-1v1h-1v-1h-1v1h-1v-1h-2v-1h-2v2h-2v-1h-1v-1h-2v2h-1v-2h-2v1h-2v-1h-5v1h-1v1h-1v-2h-1v2h-1v-2h-2v2h-1v-1h-1v-1h-1v1h-1v1h-1v-1h-1v-1h-2v2h-3v-1h-2v-1h-1v1h-1v-1h-1v2h-1v-2h-1v2h-4v-1h-2v1h-1v-1h-1v-1h-1v2h-2v-1h-1v1h-1v-1h-3v-1h-1v2h-2v-2h-2v1h-2v3h-1v-4h-3v1h-2v-1h-2v1h-8v1h-1v-2h-2v2h-1v-1h-1v-1h-1v2h-2v-2h-6v2h-1v-1h-1v1h-1v-1h-1v-1h-2v2h-1v-1h-2v1h-1v-2h-1v2h-1v-1h-2v1h-1v-1h-3v-1h-3v3h-1v-3h-1v1h-2v4h-1v-4h-2v-1h-1v1h-2v1h-2v-2h-4v1h-2v-1h-1v6h-1v-4h-1v1h-1v-2h-1v-1h-4v1h-1v-1h-3v1h-1v1h-1v-2h-2v2h-3v-1h-1v-1h-1v2h-1v-2h-1v2h-2v-2h-1v2h-3v-2h-1v1h-1v1h-3v-2h-1v3h-1v-2h-2v-1h-4v1h-2v1h-1v-1h-1v-1h-4v2h-2v-1h-1v1h-1v-1h-1v5h-1v-4h-1v-1h-1v1h-2v-2h-1v1h-2v-1h-2v2h-1v-1h-1v1h-1v-1h-1v1h-1v-1h-4v-1h-1v2h-2v-2h-2v1h-4v-1h-3v3h-1v-3h-1v2h-3v-1h-2v1h-4v-1h-1v1h-1v-2h-1v2h-1v-2h-1v1h-1v1h-1v-1h-1v4h-1v-3h-1v-1h-1v1h-1v-1h-1v-1h-1v2h-1v-2h-1v2h-1v1h-1v-2h-1v-1h-2v2h-1v-1h-1v1h-2v-2h-2v1h-1v-1h-1v1h-1v1h-3v-1h-1v1h-2v-1h-3v1h-1v-2h-2v1h-2v-1h-2v2h-1v-2h-1v2h-1v-1h-2v-1h-2v2h-1v3h-1v-3h-1v-1h-1v-1h-1v2h-1v-1h-1v-1h-1v2h-1v-2h-2v2h-1v-1h-1v-1h-3v2h-1v-2h-2v2h-1v-2h-4v1h-1v1h-5v-2h-2v1h-1v-1h-1v3h-1v-1h-1v-1h-2v-1h-2v3h-1v-1h-1v-1h-2v1h-1v-1h-1v-1h-1v2h-1v-1h-1v1h-2v-1h-1v-1h-1v1h-2v-1h-4v1h-2v1h-2v-2h-2v2h-1v-1h-2v1h-4v-2h-1v2h-1v-1h-2v-1h-2v2h-1v-1h-5v-1h-1v2h-1v-1h-1v-1h-2v1h-1v4h-1v-3h-2v-1h-1v-1h-2v1h-1v-1h-6v1h-1v1h-2v-1h-4v-1h-4v2h-1v-1h-1v1h-2v-2h-2v1h-1v1h-1v-2h-1v2h-1v-1h-1v1h-1v-1h-2v1h-1v-1h-1v-1h-1v2h-3v-1h-1v-1h-1v1h-1v1h-1v-2h-2v2h-1v-1h-1v1h-2v-2h-2v1h-1v-1h-2v2h-2v-2h-1v2h-1v-1h-2v-1h-1v1h-1v-1h-1v1h-1v-1h-1v4h-1v-2h-3v-2h-1v1h-1v-1h-3v2h-1v-1h-1v-1h-2v2h-2v-1h-1v-1h-2v1h-2v-1h-1v2h-1v-2h-1v2h-1v-1h-1v1h-2v-2h-1v2h-1v-2h-2v2h-3v-2h-5v1h-2v-1h-1v3h-1v-3h-2v1h-1v-1h-1v2h-1v-1h-2v2h-2v-3h-2v1h-1v1h-3v-1h-1v-1h-2v2h-1v-1h-1v1h-6v-1h-1v1h-1v-2h-1v1h-1v-1h-1v2h-1v-2h-2v2h-1v-1h-5v-1h-3v2h-1v-2h-1v1h-4v1h-3v2h-1v-2h-2v-1h-1v1h-2v-2h-1v2h-2v-1h-4v-1h-1v1h-2v-1h-1v1h-1v-1h-1v4h-1v-3h-1v-1h-1v1h-2v1h-3v-2h-1v1h-2v-1h-2v2h-2v3h-1v-5h-2v2h-1v-2h-5v2h-1v1h-2v-3h-1v1h-1v-1h-2v1h-3v-1h-6v2h-1v-1h-3v1h-1v-2h-1v1h-1v5h-1v-4h-2v-1h-2v1h-3v-1h-3v-1h-2v2h-4v-2h-4v1h-1v-1h-3v1h-5v-1h-2v2h-1v-2h-3v2h-1v-2h-4v1h-1v1h-1v-1h-1v1h-1v-1h-1v1h-1v-1h-1v1h-1v-1h-1v-1h-1v1h-1v-1h-1v1h-6v-1h-1v2h-1v-2h-1v1h-2v1h-1v-1h-3v-1h-1v1h-1v1h-2v-1h-1v-1h-2v2h-3z"/>
<path d="M277,758h1v-1h1v-1h1v2h3v-1h1v1h2v-2h1v2h3v-2h1v1h2v-1h1v2h1v-1h1v-1h1v1h1v1h1v-1h2v-1h4v1h4v-1h1v2h1v-2h1v2h1v-1h1v-1h1v1h2v1h4v-2h2v-2h1v4h2v-2h1v1h1v1h1v-1h4v-1h2v1h1v-1h6v1h1v1h1v-1h2v-1h2v2h1v-2h1v2h1v-2h1v1h2v1h2v-4h1v3h1v1h1v-2h1v1h3v1h2v-2h1v2h3v-2h1v1h1v-1h2v2h2v-1h3v1h1v-2h3v-3h1v3h2v1h2v1h1v-1h1v-1h2v1h1v-1h1v2h3v-2h2v2h1v-1h1v1h2v-2h1v1h1v1h1v-1h1v1h1v-2h2v1h1v-1h3v2h1v-1h3v-1h1v2h3v-1h2v1h1v-2h1v2h1v-2h1v2h1v-1h1v1h1v-1h2v1h1v-1h3v1h1v-2h1v2h2v-1h1v-3h1v4h1v-1h1v1h1v-2h2v2h1v-5h1v5h2v-1h1v1h1v-2h3v2h1v-1h1v1h1v-2h2v2h2v-2h1v2h2v-2h2v2h1v-1h1v1h1v-1h1v-4h1v3h1v2h2v-2h3v2h1v-2h1v1h2v1h2v-1h1v-1h1v2h1v-1h2v1h4v-2h2v2h6v-2h1v1h7v1h1v-2h2v1h1v1h3v-1h1v1h4v-1h1v1h2v-1h2v-1h1v1h3v1h3v-1h2v-1h1v2h2v-2h1v1h1v-1h2v2h2v-1h1v1h1v-1h1v1h3v-1h2v-1h1v2h2v-2h1v-2h1v4h2v-1h2v-1h1v1h1v1h1v-1h3v1h2v-1h3v1h1v-1h4v-1h2v1h2v1h1v-1h3v1h2v-1h1v-1h3v1h5v1h2v-1h1v1h1v-1h3v-1h3v2h1v-1h2v-1h3v1h2v-1h1v2h2v-1h2v1h1v-2h1v2h1v-2h1v1h2v1h1v-1h1v1h4v-2h1v2h1v-1h1v-1h1v2h3v-1h1v-1h1v2h1v-1h1v-1h2v1h1v1h6v-2h1v2h3v-2h2v1h5v1h1v-1h6v1h1v-1h2v1h2v-2h3v1h1v1h2v-2h1v2h1v-2h3v1h1v-1h1v2h2v-1h2v-1h1v1h3v1h2v-2h1v1h1v1h1v-2h1v1h1v-1h1v1h2v1h1v-1h1v1h2v-1h5v-1h2v2h1v-2h1v1h1v-1h1v1h1v1h2v-2h2v2h1v-1h1v1h1v-1h2v-1h2v1h3v1h1v-1h1v-1h1v1h7v1h2v-1h4v1h1v-2h1v2h1v-2h1v1h1v1h1v-3h1v2h4v-1h2v1h1v1h1v-1h2v-1h1v1h2v-1h1v2h2v-1h2v-1h1v1h1v-1h1v1h1v1h2v-2h1v1h2v1h3v-2h1v2h1v-1h2v1h2v-1h1v1h3v-2h2v2h1v-1h1v1h2v-2h1v1h3v-1h2v1h3v-1h2v2h5v-1h1v1h2v-1h1v-1h1v2h2v-2h1v2h6v-1h1v1h3v-2h4v2h1v-1h3v1h2v-2h1v2h1v-2h2v2h4v-1h2v-1h1v1h2v-1h1v1h1v1h1v-2h1v2h2v-2h3v1h1v1h2v-1h1v1h1v-2h2v1h1v-1h2v1h1v-1h1v2h1v-1h1v-1h2v2h1v-1h2v-1h1v1h2v-1h1v1h1v-1h1v1h1v1h2v-2h2v2h1v-2h1v2h2v-1h1v-1h1v1h1v1h1v-1h1v1h4v-2h8v2h1v-1h2v-2h1v2h2v-1h1v1h1v-1h2v1h1v1h1v-2h2v2h2v-1h3v-1h1v2h1v-2h2v1h1v-1h1v2h1v-2h1v2h5v-5h1v4h1v1h3v-5h1v3h1v1h2v1h1v-2h1v1h1v-1h1v2h3v-2h2v2h1v-2h1v1h1v1h1v-1h1v-1h1v2h1v-1h3v-1h1v1h2v-1h2v1h1v1h1v-2h1v2h1v-2h2v2h1v-2h2v1h1v1h2v-2h1v2h1v-1h3v1h4v-2h1v-2h1v4h4v-2h2v2h1v-3h1v2h1v1h1v-2h3v1h1v1h2v-1h1v-1h1v1h1v1h2v-2h1v2h4v-1h2v1h2v-2h1v2h1v-2h1v2h1v-1h2v-2h1v2h2v1h1v-1h1v-1h2v2h2v-2h1v2h4v-2h1v1h1v1h2v-2h3v1h8v-1h4v-1h1v3h1v-1h1v1h1v-1h2v-1h1v2h2v-1h1v1h1v-1h1v1h2v-1h1v-1h1v2h1v-1h1v1h1v-2h1v1h1v-1h1v1h1v-1h2v2h1v-1h2v-1h1v1h1v1h1v-1h2v1h2v-1h1v-1h1v2h1v-1h3v1h1v-1h3v1h1v-2h1v1h1v1h2v-1h2v1h1v-2h4v2h2v-2h1v1h1v1h2v-2h6v2h1v-2h1v2h2v-1h1v-1h1v1h2v-1h1v1h1v-1h2v1h2v-1h1v2h3v-4h1v2h1v1h1v1h3v-2h3v2h1v-1h1v1h1v-2h1v2h1v-1h2v1h4v-2h1v2h1v-1h2v1h1v-1h1v-1h1v2h2v-2h6v1h1v-1h2v2h2v-2h1v2h1v-1h2v1h1v-1h1v1h2v-2h2v1h1v-1h1v2h1v-2h7v2h1v-2h1v2h1v-2h1v2h3v-2h1v1h1v1h3v-1h1v-1h1v2h2v-2h1v2h2v-2h1v2h2v-2h2v2h4v-2h1v2h3v-2h1v2h1v-1h1v-1h1v2h2v-2h1v2h1v-1h1v-1h1v1h1v-1h1v1h3v-1h1v2h5v-2h1v2h2v-2h3v1h1v-1h2v1h1v-1h2v1h1v1h1v-1h3v-1h1v1h2v-1h1v1h1v-2h1v3h1v-2h2v1h1v1h1v-1h1v-1h3v2h4v-1h2v1h1v-1h1v-1h1v2h1v-2h1v1h4v1h4v-1h1v1h1v-2h1v1h1v-1h1v2h1v-5h1v5h3v-2h1v2h2v-2h1v2h1v-2h1v2h5v-1h1v1h1v-2h1v1h1v1h1v-1h1v1h1v-2h1v1h1v1h2v-2h1v2h6v-2h2v2h3v-2h2v1h1v-1h2v2h1v-2h2v2h2v-2h1v1h1v-1h3v1h1v1h2v-2h1v2h2v-1h2v-1h1v2h2v-1h2v6h-1v1h-1v-1h-1v1h-1v-2h-2v2h-2v-1h-1v1h-1v-1h-2v1h-2v-2h-2v1h-5v1h-2v-1h-4v1h-1v-2h-1v1h-1v1h-1v-1h-1v4h-1v-5h-2v6h-1v-4h-3v-2h-1v1h-2v1h-4v-2h-2v2h-1v-1h-2v-1h-4v1h-1v1h-1v-2h-1v1h-1v-1h-1v1h-2v-1h-1v1h-1v1h-1v-2h-1v2h-1v-2h-2v2h-1v-2h-3v2h-1v-1h-2v-1h-1v1h-1v-1h-3v1h-4v-1h-1v2h-1v-1h-2v1h-1v-2h-1v1h-1v-1h-2v2h-3v-1h-2v-1h-2v2h-1v-1h-2v-1h-2v2h-1v-1h-1v1h-1v-1h-1v-1h-4v1h-1v-1h-1v1h-1v-1h-1v2h-1v-1h-3v1h-1v-2h-2v2h-3v-1h-2v-1h-1v1h-1v1h-1v-2h-2v2h-1v-2h-2v2h-2v-2h-1v1h-1v-1h-2v2h-2v-1h-2v-1h-1v2h-1v-2h-1v2h-2v-2h-1v1h-3v-1h-1v1h-2v-1h-1v1h-2v1h-1v-1h-1v1h-2v-2h-2v1h-2v-1h-4v1h-1v-1h-1v2h-1v1h-1v-2h-1v-1h-1v1h-1v-1h-1v2h-1v-2h-1v1h-1v-1h-2v1h-2v-1h-1v1h-3v-1h-2v2h-1v-1h-1v1h-1v-2h-1v1h-1v1h-1v-2h-1v1h-1v1h-3v-2h-2v2h-1v-2h-2v1h-1v1h-1v-2h-2v2h-1v-1h-2v1h-1v-2h-1v2h-1v-1h-1v-1h-2v1h-1v1h-2v-2h-1v2h-1v-2h-1v1h-1v1h-1v-1h-1v1h-5v-2h-3v1h-2v-1h-2v1h-2v-1h-2v1h-1v-1h-1v1h-1v-1h-3v2h-2v-1h-1v-1h-2v1h-2v-1h-1v1h-1v-1h-2v2h-3v-2h-1v1h-1v1h-1v-2h-2v1h-2v-1h-5v2h-2v-1h-1v-1h-1v5h-1v-5h-1v2h-1v-2h-1v1h-3v-1h-2v1h-1v-1h-1v1h-1v1h-1v-2h-5v1h-2v-1h-2v1h-1v-1h-5v1h-2v-1h-3v2h-1v-2h-3v2h-2v-1h-2v-1h-2v2h-1v-1h-1v1h-1v-1h-1v-1h-1v1h-1v1h-1v-2h-3v1h-1v-1h-4v1h-1v-1h-3v2h-1v-1h-1v-1h-3v1h-2v1h-1v-2h-1v6h-1v-4h-1v-2h-1v1h-1v-1h-3v1h-4v-1h-2v1h-1v-1h-2v5h-1v-5h-2v1h-2v1h-2v-2h-8v1h-1v-1h-1v2h-3v-1h-1v-1h-3v6h-1v-4h-3v-1h-1v-1h-3v2h-3v-2h-2v2h-1v-1h-1v-1h-4v2h-1v-1h-3v1h-3v-2h-2v2h-2v-2h-1v3h-1v-1h-1v-1h-3v1h-1v-2h-2v1h-5v1h-1v-2h-2v1h-1v1h-2v-2h-2v2h-5v-2h-4v5h-1v-3h-3v-1h-4v-1h-1v2h-1v-2h-2v1h-1v-1h-1v2h-1v-1h-1v-1h-3v1h-1v-1h-1v1h-1v4h-1v-5h-2v2h-2v-2h-3v2h-2v-1h-1v-1h-2v2h-1v-2h-1v2h-1v-2h-3v2h-1v-1h-1v1h-1v-2h-3v1h-2v-1h-1v1h-1v-1h-4v2h-2v-2h-2v2h-1v3h-1v-5h-1v1h-2v-1h-1v2h-2v-2h-1v1h-2v1h-1v-1h-2v-1h-1v1h-2v1h-1v-1h-2v1h-1v-2h-2v1h-4v-1h-2v3h-1v-1h-2v-1h-2v1h-1v-1h-1v-1h-5v1h-1v-1h-2v2h-1v-1h-2v1h-3v-2h-4v2h-2v-2h-1v1h-1v-1h-2v1h-1v1h-2v-2h-1v1h-2v-1h-1v1h-1v-1h-2v1h-1v-1h-1v2h-1v-1h-1v-1h-1v1h-1v-1h-1v4h-1v-4h-1v2h-1v-2h-1v1h-4v1h-2v-1h-2v-1h-4v2h-1v-1h-1v-1h-3v1h-1v-1h-3v1h-1v-1h-1v1h-3v-1h-4v2h-3v4h-1v-6h-1v1h-2v1h-2v-1h-1v-1h-1v1h-1v1h-2v-2h-1v1h-1v-1h-1v2h-2v-2h-1v1h-4v-1h-1v1h-1v1h-1v-1h-1v1h-3v-2h-2v2h-1v-2h-1v1h-1v1h-2v-1h-1v-1h-3v1h-1v-1h-1v2h-1v-2h-1v1h-1v-1h-2v5h-1v-5h-1v2h-1v-2h-1v1h-1v-1h-1v2h-1v-2h-1v2h-2v-1h-1v1h-1v-1h-3v2h-1v-1h-1v-2h-1v1h-2v1h-1v-1h-1v-1h-3v1h-3v-1h-2v1h-1v-1h-4v1h-1v-1h-2v2h-2v-1h-1v-1h-2v2h-3v-2h-3v1h-1v1h-1v-1h-4v-1h-2v1h-1v-1h-1v2h-2v-2h-1v2h-1v-1h-1v1h-1v-1h-1v1h-1v-2h-1v2h-1v-2h-1v2h-1v-1h-2v1h-1v-2h-1v1h-1v-1h-2v2h-1v-1h-1v-1h-1v2h-1v-2h-2v2h-2v-2h-1v1h-1v1h-1v-2h-2v2h-1v-2h-1v2h-1v-1h-2v1h-2v-1h-2v-1h-2v1h-1v-1h-2v2h-1v-2h-1v1h-2v1h-1v-1h-2v-1h-2v6h-1v-4h-2v-2h-1v1h-2v-1h-2v1h-1v1h-1v-2h-4v1h-3v1h-2v-1h-2v-1h-2v3h-1v-2h-2v1h-1v-2h-2v1h-2v1h-2v-1h-2v-1h-2v2h-1v-1h-1v-1h-8v1h-1v1h-1v-2h-2v1h-1v-1h-5v1h-1v-1h-1v1h-1v1h-2v-2h-1v2h-1v-1h-1v1h-2v-1h-2v1h-2v-1h-5v1h-1v-2h-2v2h-2v-2h-2v2h-2v-1h-1v-1h-5v1h-1v-1h-2v2h-1v-1h-1v1h-1v-1h-1v-1h-7v1h-1v-1h-3v2h-2v-2h-1v2h-1v-2h-1v1h-1v1h-1v-1h-1v-1h-1v1h-2v1h-3v-1h-1v-1h-1v2h-2v-1h-1v1h-1v-2h-1v2h-1v-2h-1v1h-1v1h-1v-2h-1v1h-1v-1h-2v2h-1v-1h-1v1h-2v-1h-1v-1h-1v2h-5v-2h-1v2h-1v-2h-1v2h-2v-1h-1v1h-3v-2h-2v2h-1v-1h-1v-1h-2v1h-2v1h-1v-1h-1v1h-2v-2h-1v2h-1v-2h-4v1h-1v1h-1v-1h-2v1h-2v-2h-2v2h-1v-2h-1v1h-3v-1h-1v1h-3v1h-1v-1h-1v-1h-4v1h-2v-1h-2v1h-2v1h-2v-2h-5v2h-5v-1h-1v-1h-2v1h-1v-1h-3v1h-1v-1h-1v1h-1v-1h-1v2h-1v-2h-3v2h-1v-1h-2v1h-1v-2h-1v1h-2v-1h-3v2h-1v-2h-1v2h-2v-2h-1v1h-2v1h-1v-1h-2v-1h-1v1h-2v-1h-2v1h-1v-1h-1v2h-1v-1h-1v1h-2v-2h-1v6h-1v-4h-4v-2h-1v1h-2v-1h-2v4h-1v-4h-1v2h-2v2h-1v-2h-1v-1h-2v1h-1v2h-1v-2h-1v-2h-1v2h-1v-1h-1v1h-1v-2h-2v1h-5v1h-1v-2h-1v1h-2v1h-2v-2h-1v1h-1v-1h-1v2h-2v-2h-1v5h-1v-4h-6v1h-2v-2h-1v1h-1v-1h-1v2h-1v-2h-4v2h-2v-2h-1v4h-1v-2h-2v-1h-1v1h-1v-1h-1z"/>
<path d="M277,789h2v-2h2v2h1v-1h1v1h1v-1h4v1h5v-2h2v2h3v-1h1v1h1v-2h1v1h1v1h1v-1h1v1h1v-2h1v2h1v-1h3v-1h1v2h1v-1h1v-1h1v1h1v-1h1v1h2v1h1v-2h2v-3h1v3h1v1h8v-1h2v2h1v-1h1v-1h1v2h1v-1h1v-2h1v3h2v-2h2v2h1v-4h1v3h1v-1h5v2h3v-2h3v2h2v-2h2v1h1v-1h3v2h3v-2h2v2h1v-1h2v-1h1v2h3v-1h2v1h1v-1h2v1h2v-2h1v2h3v-1h1v-1h6v2h1v-1h1v1h3v-1h1v1h5v-1h4v-1h3v1h2v1h2v-1h1v1h2v-1h2v1h1v-1h1v1h1v-2h4v1h1v-1h1v1h1v-1h4v1h2v-3h1v2h2v2h1v-2h1v1h1v1h2v-1h2v1h2v-1h1v-1h1v2h3v-1h2v1h1v-1h3v1h1v-1h2v1h3v-1h1v1h1v-1h1v1h1v-2h4v2h3v-1h2v1h1v-2h2v-1h1v3h1v-1h1v-3h1v4h1v-1h4v-1h1v2h1v-1h1v1h1v-5h1v2h1v3h1v-1h2v-1h1v2h3v-2h2v1h1v-1h1v2h1v-2h2v1h1v1h1v-1h1v-1h1v2h4v-2h1v2h2v-2h2v2h6v-1h1v1h1v-2h1v2h2v-2h2v1h1v1h4v-1h1v-1h2v2h3v-2h1v1h3v1h2v-2h3v1h2v-1h1v2h2v-2h1v1h2v1h1v-1h1v-1h3v2h5v-2h1v2h2v-2h3v2h2v-2h1v1h1v-1h1v2h2v-2h1v2h3v-1h2v1h2v-1h3v1h1v-1h2v-1h1v2h3v-1h1v-1h1v2h1v-1h2v1h1v-2h2v1h2v-1h3v1h1v-1h1v1h1v1h3v-2h2v1h1v1h1v-2h1v1h1v1h1v-1h1v1h1v-1h3v-1h1v2h1v-2h2v1h1v1h1v-1h5v1h1v-2h2v1h1v1h1v-2h2v2h5v-1h2v-1h1v2h1v-1h2v1h4v-2h1v1h1v-1h1v2h2v-2h1v2h1v-2h1v2h1v-2h1v1h5v-1h2v1h1v1h1v-2h1v1h1v-1h1v2h1v-2h1v2h1v-1h1v-1h1v2h2v-1h4v1h2v-2h2v2h1v-1h1v-1h1v1h1v-1h1v2h1v-2h1v2h1v-1h1v-1h1v2h3v-1h1v1h1v-1h1v1h1v-1h5v1h4v-1h1v1h3v-2h1v-2h1v4h1v-1h1v1h1v-1h1v1h2v-1h1v1h1v-2h2v2h1v-2h1v1h3v1h1v-2h2v2h1v-2h1v2h2v-1h1v1h2v-2h1v2h2v-1h1v-1h3v1h1v1h1v-1h1v1h3v-1h2v1h3v-2h1v2h1v-2h3v1h1v-1h3v2h1v-2h1v1h1v1h1v-1h2v1h1v-1h1v1h1v-2h1v1h4v1h2v-2h1v2h1v-2h1v1h1v-1h1v2h3v-3h1v2h1v-1h1v2h2v-2h1v1h1v-1h1v1h1v-1h1v2h4v-1h1v-1h1v2h1v-1h1v-1h3v1h1v1h3v-2h7v2h2v-2h1v2h4v-2h1v1h2v1h1v-2h1v2h1v-1h4v1h2v-1h2v1h1v-2h1v1h1v-1h2v2h5v-1h3v-1h4v2h2v-1h1v1h1v-1h1v-1h1v2h1v-1h1v-1h1v2h1v-2h2v2h1v-1h1v-1h2v-1h1v3h2v-2h1v1h1v1h3v-2h1v2h2v-2h4v2h3v-1h2v-1h1v1h1v-1h3v2h1v-3h1v1h2v2h3v-5h1v4h1v1h1v-2h1v2h1v-1h2v-1h1v2h1v-1h1v1h1v-1h2v-1h1v2h2v-1h2v1h2v-1h1v-1h1v1h2v-1h2v2h1v-2h1v1h1v-1h1v1h1v1h1v-1h1v1h3v-2h8v2h2v-2h1v1h1v1h1v-2h1v2h2v-1h2v-1h1v2h3v-2h1v1h2v-1h2v2h2v-2h1v1h1v-1h1v2h1v-2h1v1h1v1h1v-2h2v2h1v-1h1v1h1v-1h1v1h1v-2h1v2h1v-2h2v2h1v-2h1v2h3v-2h1v2h1v-1h1v-1h3v2h2v-2h1v1h1v1h1v-2h2v1h2v1h2v-2h2v2h2v-2h1v2h1v-1h1v1h1v-2h2v2h2v-1h1v1h1v-1h1v1h2v-1h4v-1h2v-3h1v3h2v1h4v-4h1v4h1v1h1v-1h1v1h1v-1h3v1h1v-1h2v1h1v-1h1v1h2v-2h1v2h1v-1h1v-1h1v1h1v-1h4v1h4v-1h1v2h4v-2h2v2h1v-1h1v1h1v-1h2v-1h2v2h1v-1h1v1h1v-2h1v2h3v-2h2v2h2v-2h1v2h1v-2h1v2h2v-2h2v2h1v-1h2v-1h1v2h1v-1h1v1h1v-1h1v-1h1v2h2v-1h2v1h1v-1h1v1h1v-1h3v-1h1v2h1v-2h1v2h4v-2h1v1h4v-1h1v2h3v-1h1v1h1v-1h1v-4h1v3h1v2h3v-1h2v-1h1v2h2v-2h2v2h1v-1h1v-1h1v1h1v-1h2v1h2v-1h2v1h1v1h2v-1h1v1h2v-2h4v2h1v-1h1v-1h1v2h1v-2h2v2h1v-2h1v-2h1v4h1v-1h1v1h1v-2h1v2h2v-2h1v1h1v-1h1v1h1v1h2v-1h1v-1h1v1h1v-1h1v1h2v-1h1v2h2v-2h1v2h1v-1h1v1h1v-1h1v-3h1v4h1v-2h2v1h5v-1h1v2h1v-1h1v1h1v-2h3v1h1v1h9v-1h2v1h3v-1h3v-1h1v1h1v1h1v-2h1v1h2v1h1v-2h1v1h2v-1h1v1h1v1h1v-2h1v2h1v-2h1v2h1v-1h1v1h5v-1h2v-1h1v1h4v1h2v-2h1v1h4v1h3v-2h1v2h2v-1h4v-1h3v2h1v-2h2v2h1v-1h1v1h1v-2h1v1h2v-1h2v2h1v-2h2v2h3v-2h1v2h1v-2h1v2h1v-1h1v-1h2v1h1v1h1v-2h1v1h1v1h1v-2h2v1h1v1h1v-1h1v1h2v-1h1v-1h1v2h1v-2h1v2h2v-2h1v2h5v-1h1v1h2v-1h1v-1h1v1h4v-1h3v1h2v-1h1v2h2v-1h2v1h1v-1h2v1h1v-2h1v1h5v1h1v-2h1v2h1v-1h1v1h1v-2h2v11h-1v-4h-1v-1h-5v1h-1v-1h-1v2h-1v-1h-1v1h-2v-2h-2v2h-1v-2h-2v1h-2v1h-1v-2h-3v1h-1v1h-2v-2h-1v1h-1v1h-1v-2h-3v1h-2v-1h-2v1h-1v-1h-3v1h-1v1h-2v-1h-1v1h-1v-2h-1v2h-1v-1h-1v-1h-1v1h-2v1h-2v-2h-3v1h-3v-1h-1v1h-1v1h-1v-1h-1v1h-1v-2h-3v1h-2v1h-1v-2h-2v1h-1v1h-2v-2h-1v2h-1v-2h-1v1h-1v-1h-3v2h-1v-2h-1v2h-1v-1h-1v1h-6v-2h-1v1h-1v1h-1v-2h-1v2h-1v-2h-1v1h-1v1h-1v-2h-2v2h-2v-2h-6v2h-1v-1h-2v-1h-1v2h-3v-2h-1v2h-2v-2h-2v2h-2v-1h-1v1h-1v-2h-1v1h-1v-1h-1v1h-1v-1h-1v1h-3v-1h-4v1h-3v-1h-3v2h-1v-2h-1v2h-1v-2h-1v1h-1v-1h-1v1h-1v4h-1v-5h-3v1h-1v-1h-1v1h-1v-1h-2v1h-1v-1h-2v2h-2v-2h-2v5h-1v-4h-1v-1h-1v2h-2v-2h-1v2h-1v-2h-1v1h-2v-1h-5v2h-1v-1h-2v-1h-3v1h-1v-1h-1v1h-4v-1h-1v1h-1v-1h-2v1h-3v1h-1v-1h-1v1h-1v-1h-3v1h-1v-1h-1v-1h-1v1h-1v1h-1v-1h-1v1h-2v-2h-1v1h-1v-1h-1v2h-1v-2h-3v2h-2v-1h-3v-1h-1v2h-1v-1h-1v1h-1v-1h-1v-1h-1v1h-2v-1h-1v1h-1v1h-2v-1h-2v-1h-1v1h-1v1h-1v-1h-1v-1h-4v1h-1v-1h-1v1h-1v1h-1v-1h-1v1h-1v-2h-1v2h-1v-2h-2v2h-1v-1h-1v1h-1v-1h-1v1h-4v-1h-1v-1h-2v2h-1v-2h-1v2h-1v-1h-1v-1h-3v1h-1v1h-2v-2h-2v5h-1v-3h-3v-2h-4v1h-1v-1h-1v2h-1v-1h-1v1h-1v-2h-3v2h-1v-1h-2v-1h-1v2h-3v-1h-1v-1h-3v1h-1v-1h-1v1h-1v5h-1v-6h-1v1h-3v3h-1v-2h-1v1h-1v-2h-2v1h-1v1h-1v-3h-1v4h-1v-4h-2v1h-1v2h-1v-2h-1v-1h-1v2h-1v-2h-3v3h-1v-3h-1v2h-4v-2h-2v1h-3v1h-1v-1h-1v1h-1v-2h-2v1h-1v-1h-1v1h-1v1h-1v-2h-1v2h-1v3h-1v-3h-1v-2h-2v2h-2v-1h-1v1h-1v-1h-3v-1h-1v1h-1v-1h-1v1h-4v-1h-1v1h-1v1h-1v-2h-2v2h-1v-2h-1v1h-2v1h-2v-2h-9v2h-3v-1h-2v-1h-2v1h-1v1h-1v-2h-2v2h-2v-2h-3v1h-1v-1h-5v1h-1v-1h-2v2h-1v-1h-1v-1h-1v1h-1v1h-2v-1h-1v-1h-4v2h-1v-1h-1v-1h-1v2h-1v-2h-2v1h-3v1h-1v-2h-3v2h-1v-1h-1v1h-2v-2h-3v2h-1v-2h-2v2h-1v-2h-1v1h-4v3h-1v-3h-2v-1h-2v2h-1v-2h-2v1h-1v-1h-3v1h-2v1h-1v-1h-1v1h-2v-2h-2v2h-1v-2h-1v1h-1v-1h-1v2h-4v-2h-3v3h-1v-2h-1v-1h-2v2h-1v-1h-1v1h-1v-1h-1v1h-3v-1h-3v-1h-1v2h-2v-2h-1v1h-3v1h-1v-1h-1v2h-1v-1h-1v-2h-1v2h-2v-2h-1v2h-1v-2h-2v1h-1v-1h-2v1h-4v-1h-1v2h-1v-2h-2v1h-1v1h-1v-2h-3v2h-1v-2h-1v2h-1v-2h-1v1h-1v-1h-2v1h-3v-1h-2v1h-2v1h-2v-2h-1v1h-1v1h-2v-2h-3v1h-2v2h-1v-3h-1v2h-1v-1h-1v1h-1v-1h-1v-1h-3v1h-1v3h-1v-4h-2v1h-2v-1h-1v1h-1v1h-1v-2h-4v2h-2v-1h-2v1h-1v-1h-1v2h-1v-1h-1v-2h-3v1h-2v1h-1v-1h-1v1h-3v-1h-2v1h-1v-2h-2v1h-2v1h-2v2h-1v-4h-1v1h-1v-1h-3v6h-1v-4h-1v-2h-1v1h-1v1h-1v2h-1v-2h-1v-2h-1v1h-1v1h-1v-2h-2v2h-2v-1h-1v-1h-2v1h-2v-1h-1v1h-3v1h-1v-2h-1v1h-2v1h-1v-1h-4v-1h-1v2h-3v-1h-2v-1h-1v1h-1v-1h-1v2h-2v-2h-5v1h-2v-1h-5v2h-3v-2h-1v1h-1v-1h-1v2h-1v-1h-2v-1h-1v2h-3v-1h-1v1h-1v-1h-1v-1h-1v1h-2v1h-2v-2h-1v2h-3v-2h-2v1h-1v-1h-2v2h-1v-1h-1v1h-1v-2h-2v3h-1v-3h-1v2h-2v-2h-1v2h-1v2h-1v-3h-1v1h-3v-2h-1v1h-1v-1h-1v1h-2v1h-1v-1h-1v1h-5v-1h-3v-1h-1v1h-2v4h-1v-5h-1v1h-2v1h-1v-1h-3v1h-2v-2h-1v2h-1v-1h-1v2h-1v-3h-1v2h-2v-2h-1v2h-3v-1h-1v1h-1v-2h-3v2h-1v-1h-1v-1h-2v1h-4v-1h-1v1h-2v4h-1v-3h-1v-2h-1v2h-1v-1h-5v-1h-1v1h-3v1h-2v-1h-1v1h-1v-2h-5v1h-1v-1h-2v2h-6v-1h-1v1h-3v-2h-2v1h-1v-1h-1v2h-1v-2h-2v2h-1v-2h-1v2h-1v-1h-1v-1h-1v1h-1v1h-1v-2h-1v1h-1v3h-1v-4h-1v1h-1v1h-2v-2h-1v2h-4v-2h-1v2h-1v-1h-2v-1h-4v1h-2v-1h-1v1h-8v1h-1v-1h-1v-1h-4v2h-1v-2h-3v1h-2v1h-1v-2h-3v1h-2v-1h-2v1h-1v1h-3v-1h-1v1h-1v-2h-2v1h-3v-1h-1v1h-2v-1h-1v2h-2v-2h-3v1h-4v1h-1v-1h-1v-1h-3v1h-2v-1h-3v1h-1v1h-1v-1h-1v1h-1v-1h-1v-1h-1v2h-1v-1h-3v1h-1v-1h-1v-1h-3v2h-1v-1h-1v1h-5v-1h-1v-1h-1v2h-3v-1h-1v1h-1v-1h-1v-1h-1v1h-2v-1h-1v1h-1v1h-1v-2h-1v2h-1v-1h-2v-1h-1v1h-1v-1h-2v1h-1v5h-1v-4h-1v-2h-2v1h-3v1h-1v-1h-1v-1h-1v1h-1v-1h-1v2h-1v-1h-1v-1h-1v1h-3v1h-2v-2h-4v2h-1v-1h-2v1h-2v-2h-3v1h-2v-1h-9v1h-2v1h-1v-2h-2v2h-2v-1h-1v-1h-1v2h-1v-2h-1v1h-2v-1h-3v1h-3v-1h-5v1h-2v-1h-3v1h-1v-1h-1v1h-1v-1h-2v2h-1v-1h-2v2h-1v-1h-2v-1h-1v-1h-1v2h-1v-1h-1v-1h-1v1h-1v-1h-1v1h-4v4h-1v-5h-1v1h-2v1h-1v-1h-1v1h-1v-1h-1v1h-4v-2h-2v1h-1v-1h-5v2h-2v-1h-3v-1h-2v2h-1v-2h-1v1h-2v-1h-2v2h-1v-1h-2v-1h-1v2h-1v-1h-3v-1h-1v1h-2v1h-2v-2h-3v1h-1v5h-1v-4h-2v-2h-2v1h-1v1h-2v-1h-1v1h-1v-2h-2v2h-1v-1h-2v1h-2v-1h-2v-1h-3v2h-3z"/>
<path d="M277,819h1v-2h2v1h2v1h1v-2h2v2h3v-1h1v-1h2v1h1v-1h2v2h1v-1h2v1h1v-1h2v-1h2v2h3v-1h4v1h3v-2h1v2h1v-1h2v1h1v-1h3v1h3v-2h1v1h1v-2h1v3h3v-1h2v-1h1v-3h1v3h1v2h1v-2h1v2h2v-2h2v-3h1v3h1v1h1v1h7v-1h1v1h4v-2h1v1h2v-2h1v2h1v1h2v-2h1v1h2v1h2v-1h6v1h1v-2h4v1h4v1h2v-1h1v1h2v-2h1v2h1v-2h1v2h1v-1h2v-1h1v1h2v1h2v-2h1v1h1v1h2v-2h1v2h4v-2h1v2h4v-3h1v3h1v-1h2v-1h1v1h1v-1h4v1h1v1h2v-1h2v-1h1v2h2v-1h2v-1h1v1h1v-1h3v2h3v-2h1v1h4v1h2v-2h2v2h1v-1h1v-2h2v2h2v1h1v-2h1v2h2v-2h1v2h1v-2h1v1h1v-1h3v1h2v1h1v-1h3v-1h2v2h1v-2h3v2h2v-1h1v-1h1v2h1v-1h1v1h5v-1h1v-1h2v-3h1v5h4v-2h2v2h2v-1h1v1h1v-2h1v1h1v1h1v-2h2v1h1v1h2v-2h2v2h1v-2h2v2h1v-1h1v1h1v-3h1v2h4v1h2v-1h1v1h1v-2h1v-1h1v2h1v-1h2v-2h1v3h1v-1h3v1h1v1h3v-1h2v-1h1v2h1v-1h1v1h1v-1h3v-1h1v2h1v-2h2v2h1v-1h1v1h5v-2h1v2h1v-2h1v1h3v1h1v-1h1v1h4v-2h1v-1h1v3h1v-1h2v1h1v-1h4v1h3v-1h2v1h2v-1h2v1h2v-1h3v1h4v-1h1v-1h1v1h4v1h3v-2h1v2h2v-2h1v1h3v-1h3v2h1v-1h1v1h1v-1h2v-1h1v1h1v-1h1v1h1v-1h1v1h3v-1h2v2h2v-1h1v1h1v-2h1v2h2v-2h1v1h2v-1h2v2h1v-2h3v2h4v-1h1v1h1v-1h2v1h2v-2h1v2h2v-1h1v-1h1v1h1v-1h1v2h1v-1h1v1h2v-1h1v1h1v-3h1v2h1v1h5v-1h1v-1h2v2h2v-1h3v-1h1v1h3v1h4v-2h1v2h1v-1h2v-1h1v1h1v1h1v-1h1v-1h1v2h3v-2h1v2h1v-1h1v1h2v-2h2v2h1v-2h2v2h1v-1h1v-1h2v2h1v-1h1v1h1v-3h1v3h1v-1h1v-1h1v2h1v-2h1v1h2v-1h2v1h1v1h3v-2h2v2h4v-1h2v1h1v-1h2v1h1v-1h1v1h1v-1h1v1h4v-2h1v2h1v-2h1v1h2v1h2v-2h1v1h2v-1h1v1h2v1h2v-1h4v1h1v-1h1v-1h1v2h2v-1h1v-1h1v-3h1v4h3v-1h3v2h2v-2h2v-1h1v2h1v-1h2v-2h1v4h1v-1h2v-1h1v2h2v-1h2v-1h2v2h1v-1h3v1h2v-2h2v1h2v1h1v-1h2v-2h2v1h1v2h2v-2h1v2h1v-2h2v-1h1v3h3v-2h1v1h2v1h1v-1h1v1h1v-1h2v1h1v-1h1v1h1v-1h2v1h1v-2h2v1h1v-1h1v2h1v-3h1v1h1v1h2v-1h2v2h1v-1h1v-1h1v2h8v-2h2v1h1v1h1v-1h2v-1h1v2h4v-1h4v-1h2v1h4v-1h4v1h1v-1h1v2h3v-1h2v-1h1v1h4v1h2v-1h1v1h1v-1h1v1h2v-3h1v2h1v-1h1v1h1v1h2v-1h1v-1h1v2h2v-2h2v2h1v-1h1v1h1v-2h3v-2h1v3h3v-1h1v1h2v-1h1v1h1v1h5v-2h1v-1h1v1h1v1h1v-1h1v1h1v-1h4v2h1v-1h1v-1h1v1h1v-1h3v1h2v1h1v-1h1v-1h1v2h2v-1h1v1h5v-2h1v1h2v-1h2v2h2v-1h9v1h2v-2h1v2h2v-1h1v-1h1v1h4v1h5v-1h3v-1h1v1h2v1h2v-2h1v2h4v-1h2v-1h1v2h1v-1h1v1h3v-1h1v-1h2v2h3v-2h2v2h2v-1h1v-2h1v2h1v-1h1v1h2v-1h2v2h4v-2h1v1h1v1h2v-2h1v2h2v-1h1v-1h1v2h1v-2h1v2h3v-2h1v1h1v-1h1v1h1v-1h1v2h2v-2h1v1h2v-1h1v1h2v1h2v-1h2v-1h2v2h2v-1h1v1h1v-2h2v2h2v-2h2v2h1v-1h1v-1h1v1h1v1h2v-3h1v2h3v1h4v-2h1v1h2v1h1v-2h2v2h1v-2h2v2h1v-2h4v2h1v-1h1v1h5v-2h1v2h2v-1h2v1h2v-2h1v2h1v-2h1v2h1v-1h1v-1h1v1h4v1h2v-3h1v3h4v-2h3v2h1v-1h1v-1h2v1h1v1h1v-2h1v2h1v-2h1v2h1v-1h3v1h1v-1h1v1h1v-2h2v2h1v-1h1v-1h1v2h4v-1h1v-2h1v3h2v-1h1v-1h1v2h1v-2h2v1h1v-1h1v1h1v-1h1v2h3v-1h1v-1h4v-1h1v1h1v2h3v-2h1v2h3v-1h2v1h1v-2h1v1h1v1h1v-1h1v-1h1v2h1v-1h2v1h10v-1h1v1h3v-2h2v2h2v-1h3v1h1v-2h1v2h1v-1h1v-1h1v1h1v1h1v-1h1v1h2v-2h1v1h1v-1h1v2h1v-1h2v-2h1v3h1v-1h2v-1h2v1h1v-2h1v2h1v-1h2v1h1v1h2v-2h2v2h1v-2h3v1h2v1h2v-1h1v-1h1v2h2v-1h1v-1h4v1h2v1h2v-2h2v2h1v-2h1v-1h1v1h1v1h1v-1h2v2h2v-1h1v-1h1v1h1v1h1v-2h3v2h1v-1h4v1h1v-2h3v1h2v1h2v-2h1v2h2v-1h1v1h1v-1h4v-2h1v3h1v-2h1v2h4v-1h2v-1h1v2h1v-1h1v-1h1v2h1v-1h1v-1h2v1h1v-1h1v1h1v1h1v-3h1v3h1v-1h1v-2h2v3h1v-1h2v1h2v-1h1v1h1v-2h1v2h1v-1h3v-1h1v2h1v-1h1v1h2v-1h2v-1h1v2h1v-1h1v1h1v-2h1v2h1v-2h1v2h2v-1h2v1h3v-1h2v-1h1v9h-1v-3h-1v2h-3v-2h-8v2h-1v-2h-1v1h-1v1h-1v-1h-1v-1h-2v1h-1v-1h-5v1h-1v-1h-1v3h-1v-1h-1v-1h-1v2h-1v-2h-2v-1h-2v1h-2v-1h-2v2h-1v-2h-2v4h-1v-3h-1v1h-1v-2h-2v1h-3v2h-1v-1h-2v-2h-5v1h-1v-1h-1v1h-2v-1h-3v1h-3v1h-2v-2h-2v2h-1v-1h-1v-1h-1v2h-1v-1h-2v-1h-4v1h-1v1h-2v-2h-1v1h-4v-1h-1v2h-2v-1h-1v-1h-1v2h-2v-2h-2v2h-2v-2h-1v1h-3v-1h-2v2h-1v-2h-1v1h-2v-1h-1v2h-1v-1h-2v-1h-2v1h-1v-1h-5v1h-1v1h-1v-2h-2v1h-1v-1h-1v1h-2v1h-2v-2h-3v1h-3v-1h-3v2h-1v-2h-1v5h-1v-5h-1v1h-2v2h-1v2h-1v-3h-2v-2h-1v1h-1v-1h-4v2h-1v-2h-2v1h-1v-1h-2v1h-1v-1h-1v1h-1v-1h-1v2h-2v-2h-1v1h-1v-1h-3v2h-1v-2h-2v2h-2v-1h-1v1h-2v-1h-1v1h-1v-2h-2v2h-1v-2h-3v1h-1v1h-4v-2h-2v3h-1v-1h-1v-1h-2v-1h-1v2h-2v-2h-1v1h-6v1h-3v-1h-1v1h-2v-1h-2v1h-1v-2h-2v1h-2v-1h-1v2h-1v-1h-4v1h-3v3h-1v-5h-3v1h-5v-1h-1v1h-1v-1h-1v1h-1v1h-1v3h-1v-5h-1v2h-1v-1h-1v-1h-1v2h-1v-1h-1v1h-1v-2h-4v1h-1v5h-1v-6h-2v1h-1v1h-3v-1h-1v-1h-2v3h-1v-3h-2v2h-1v-1h-2v1h-3v-2h-1v1h-1v-1h-4v1h-1v-1h-2v1h-2v-1h-1v2h-3v-1h-1v-1h-1v1h-1v1h-1v1h-1v-2h-1v-1h-5v3h-1v-3h-3v2h-2v-2h-2v2h-1v-2h-1v2h-1v-2h-3v1h-4v-1h-1v1h-1v1h-1v-1h-1v1h-1v-1h-2v1h-2v-2h-1v2h-1v-2h-1v1h-3v1h-1v-2h-2v2h-1v-2h-1v1h-3v-1h-1v1h-2v-1h-1v2h-1v-2h-1v2h-2v1h-1v-1h-1v-2h-1v2h-2v-2h-1v1h-3v1h-2v-2h-1v2h-1v-2h-1v5h-1v-4h-3v-1h-2v2h-1v1h-1v-1h-1v-1h-3v1h-1v-2h-1v1h-1v-1h-3v1h-1v-1h-2v1h-1v-1h-1v1h-1v-1h-1v2h-1v1h-1v-2h-2v1h-1v-2h-1v1h-1v-1h-2v1h-1v2h-1v-1h-4v-1h-1v-1h-1v1h-1v1h-2v-1h-2v-1h-1v2h-2v-1h-1v-1h-2v2h-3v-1h-2v-1h-2v2h-1v3h-1v-3h-1v-2h-1v1h-3v-1h-1v1h-6v1h-1v-2h-3v1h-2v1h-1v-2h-1v1h-2v1h-2v1h-1v-1h-1v-2h-1v1h-2v-1h-1v2h-1v-2h-3v2h-1v-1h-1v1h-2v-1h-1v1h-1v-2h-2v2h-2v-1h-1v-1h-2v1h-4v-1h-1v2h-1v-2h-2v3h-1v-3h-1v1h-1v1h-1v-2h-2v1h-1v1h-1v-1h-1v1h-2v-1h-1v1h-1v-2h-5v2h-1v-2h-2v1h-1v-1h-2v1h-2v1h-1v-1h-1v1h-2v-2h-1v1h-1v1h-1v-2h-1v2h-2v-2h-2v3h-3v-2h-2v2h-1v-3h-2v1h-1v-1h-2v1h-2v-1h-1v2h-3v-1h-2v-1h-1v1h-1v-1h-1v1h-1v1h-1v-1h-1v-1h-1v1h-1v1h-2v-1h-1v1h-1v-1h-1v1h-2v-2h-1v2h-1v1h-1v-2h-2v1h-1v-2h-2v2h-1v-2h-3v2h-1v-2h-1v4h-1v-4h-3v2h-1v-2h-1v1h-1v-1h-4v1h-1v-1h-1v1h-2v-1h-2v1h-2v-1h-1v1h-2v1h-1v-2h-1v5h-1v-4h-3v-1h-3v1h-2v1h-4v-2h-2v2h-1v-1h-1v1h-2v-1h-2v1h-1v-1h-2v-1h-3v2h-1v-2h-1v1h-1v-1h-2v1h-1v1h-1v-1h-1v-1h-4v2h-3v-1h-1v-1h-1v1h-2v-1h-1v1h-3v-1h-1v2h-1v-1h-1v1h-1v-1h-1v1h-1v-2h-6v1h-2v-1h-3v1h-2v1h-1v-2h-1v1h-3v1h-1v-2h-2v1h-2v-1h-1v2h-3v-2h-1v1h-1v-1h-2v2h-1v-2h-1v1h-3v1h-1v-2h-1v4h-1v-2h-2v-2h-1v2h-1v-1h-2v-1h-1v1h-1v1h-1v-2h-2v2h-1v-2h-1v2h-1v-1h-1v1h-1v-2h-1v1h-1v-1h-1v1h-2v-1h-2v1h-1v-1h-1v1h-1v1h-2v-1h-1v-1h-2v2h-2v-1h-2v-1h-1v1h-8v4h-1v-5h-1v2h-1v-2h-3v1h-1v1h-1v-1h-1v1h-1v-1h-2v-1h-2v1h-1v-1h-1v1h-5v-1h-1v2h-1v-2h-2v1h-5v1h-3v-2h-2v2h-2v-2h-1v2h-2v-2h-2v2h-1v-2h-3v2h-1v-1h-1v1h-1v-1h-2v1h-2v-2h-2v1h-1v1h-1v-2h-2v1h-1v-1h-1v2h-4v-2h-1v1h-1v1h-2v-2h-1v2h-1v-1h-3v-1h-1v1h-1v1h-1v-1h-1v-1h-1v2h-1v-2h-1v2h-3v-2h-3v2h-1v-1h-1v-1h-1v2h-2v-2h-1v1h-2v-1h-1v2h-1v-1h-1v-1h-1v1h-3v-1h-1v1h-1v-1h-1v2h-1v2h-1v-2h-1v-2h-1v2h-1v-2h-2v1h-2v1h-1v-1h-1v1h-2v-2h-9v1h-2v-1h-1v1h-2v-1h-1v1h-1v-1h-1v2h-4v-2h-3v1h-1v1h-3v-2h-1v2h-1v-1h-3v5h-1v-6h-2v2h-1v-1h-4v1h-1v-2h-3v2h-1v-1h-2v1h-1v1h-1v-3h-3v1h-1v-1h-1v2h-2v1h-1v-2h-1v-1h-2v2h-1v-2h-2v1h-2v-1h-2v1h-1v-1h-1v2h-2v-2h-1v1h-1v1h-1v-2h-1v2h-1v-2h-1v3h-1v-1h-4v-2h-3v2h-2v-1h-2v1h-1v-1h-2v1h-1v-1h-2v-1h-1v1h-3v-1h-1v2h-2v-1h-1v1h-3v-2h-2v2h-6v-2h-1v1h-1v-1h-2v1h-1v-1h-2v2h-1v-1h-2v-1h-2v2h-2v-2h-2v1h-1v1h-2v-2h-3v1h-3v-1h-1v1h-1v1h-1v-1h-1v-1h-2v3h-1v-3h-4v1h-2v-1h-1v2h-2v-2h-1v1h-2v1h-4v-1h-1v1h-1v-2h-3v2h-1v-1h-1v1h-2v-2h-3v6h-1v-3h-1v-2h-2v-1h-1v2h-2v-2h-3v2h-1v-2h-1v3h-1v-3h-1v1h-1v-1h-1v2h-4v-1h-1v1h-1v-2h-1v1h-5v-1h-2v4h-1v-2h-2v-2h-2v2h-2v-2h-2v2h-1v-1h-1v-1h-1v3h-1v-3h-1v1h-1v-1h-2v2h-2v-2h-1v2h-4v-2h-2v1h-1v1h-1v-1h-2v-1h-3v1h-2v-1h-3v2h-1v-2h-1v1h-2v-1h-2v1h-2v1h-1v-1h-1v-1h-4v1h-2v-1h-1v2h-1v-1h-2v-1h-2v1h-2v-1h-4z"/>
<path d="M277,849h1v-2h1v1h3v-1h2v1h2v1h3v-1h1v1h3v-1h1v1h1v-1h1v-1h2v2h1v-2h1v2h3v-2h2v2h2v-2h1v2h3v-1h1v1h1v-1h3v1h2v-1h3v-1h1v2h1v-1h1v1h1v-2h2v2h1v-2h2v-3h1v3h1v1h1v1h1v-2h1v2h1v-2h1v2h2v-1h4v1h1v-1h1v1h1v-2h1v2h2v-2h1v1h1v-1h3v1h2v1h1v-1h1v-1h2v1h2v1h2v-1h2v1h1v-2h1v2h1v-2h1v1h1v1h1v-2h1v1h1v1h1v-1h8v1h1v-1h3v1h3v-3h1v3h1v-1h1v1h3v-1h2v1h3v-2h2v1h1v-1h3v2h1v-1h1v1h2v-1h4v-1h2v2h1v-2h1v1h2v-1h1v2h8v-2h1v1h1v-1h4v2h1v-1h2v-1h4v-2h1v-1h1v3h2v2h3v-1h1v1h4v-2h1v1h2v1h1v-1h6v1h2v-2h1v1h1v1h1v-2h2v1h1v1h2v-1h1v-1h1v1h3v1h2v-1h3v-1h1v1h4v-1h1v1h1v1h1v-2h4v1h2v-1h1v2h3v-2h6v2h1v-1h1v1h1v-1h3v-1h1v2h2v-1h1v1h2v-2h3v1h2v-1h2v2h1v-2h1v2h5v-2h1v2h3v-1h1v1h1v-2h2v1h1v1h1v-2h5v1h3v-1h2v1h2v1h1v-2h2v1h1v1h1v-2h1v1h1v1h1v-2h2v2h1v-2h1v1h4v-1h2v2h2v-2h1v2h1v-2h1v2h3v-2h1v2h1v-1h3v1h1v-3h1v3h1v-1h3v-1h1v1h2v1h2v-2h3v2h1v-1h1v1h3v-2h2v2h1v-1h4v1h2v-1h3v-1h1v-2h1v3h1v-1h2v1h1v1h1v-2h1v1h1v1h3v-2h1v2h3v-1h1v-1h3v2h2v-1h1v-1h2v1h2v1h2v-1h2v-1h1v1h2v1h1v-1h1v1h3v-1h2v1h3v-2h2v-1h1v2h1v1h3v-2h1v1h1v1h1v-1h1v1h3v-1h1v-1h1v2h2v-1h1v-1h1v2h2v-1h2v-1h3v2h3v-2h1v2h2v-1h2v1h2v-1h2v-3h1v4h1v-1h1v-1h4v1h1v-1h1v2h3v-1h1v-1h1v1h2v1h2v-2h1v1h2v1h1v-1h1v1h3v-2h2v1h1v-1h1v2h2v-2h1v1h1v-1h1v1h3v1h2v-2h1v2h6v-2h2v1h1v1h1v-2h1v1h1v1h1v-1h3v-1h3v2h1v-1h1v1h2v-2h3v2h1v-1h1v-1h4v-1h1v1h1v2h1v-2h1v2h2v-2h1v2h4v-2h1v1h1v-1h2v2h1v-1h2v1h2v-1h2v1h4v-2h2v2h1v-2h1v2h1v-2h2v1h1v-1h5v2h1v-1h3v-1h1v1h1v-1h1v2h3v-2h2v1h1v1h1v-2h2v1h1v1h1v-2h3v2h2v-2h2v1h2v-1h2v1h1v1h1v-2h3v1h1v-1h1v2h2v-1h1v1h1v-1h1v-1h3v2h1v-2h2v2h3v-1h1v1h2v-1h2v1h2v-2h1v1h2v1h1v-1h1v-1h1v1h2v1h2v-2h1v2h1v-2h1v1h2v1h1v-1h1v-1h3v2h1v-2h1v1h1v-1h3v2h4v-1h1v1h2v-1h1v1h3v-1h1v-4h1v5h2v-1h4v-1h1v2h4v-1h1v-1h2v2h3v-1h5v-1h1v1h1v-1h2v1h2v-1h2v2h1v-2h1v1h2v-1h2v1h1v1h1v-1h3v1h2v-1h2v-1h1v2h1v-1h1v-1h3v1h1v-1h1v1h1v1h2v-2h1v1h1v-1h1v2h6v-2h1v1h1v1h3v-2h1v2h7v-1h1v1h2v-2h3v1h4v1h1v-1h1v-1h2v2h1v-2h1v2h2v-1h1v1h4v-2h2v2h2v-1h1v1h2v-1h2v1h1v-1h6v1h2v-2h1v2h2v-2h2v2h1v-2h1v1h3v-1h1v1h2v-1h3v2h2v-1h1v1h1v-2h1v2h3v-2h1v1h2v1h2v-2h1v2h2v-2h6v2h1v-2h1v1h2v-1h1v1h2v1h1v-1h1v-1h1v1h4v1h1v-2h1v2h1v-2h2v-2h1v4h1v-4h1v3h2v1h1v-2h2v2h1v-2h1v2h3v-2h1v2h6v-2h2v1h1v1h1v-1h1v-1h1v2h1v-1h1v-1h1v2h1v-1h1v-1h2v1h2v1h1v-1h1v1h1v-1h1v1h1v-2h1v1h1v-1h1v1h1v1h1v-1h2v-1h1v1h3v1h1v-1h1v1h1v-1h1v1h1v-3h1v1h2v1h1v-2h1v3h2v-2h1v2h4v-1h3v1h2v-2h1v1h2v1h2v-1h1v1h1v-1h1v-1h2v2h1v-2h2v-3h1v5h2v-1h1v-1h1v1h2v-1h1v2h1v-1h1v-1h1v2h1v-2h1v2h2v-1h2v1h2v-1h1v-1h2v2h1v-1h3v-3h1v4h2v-2h2v2h2v-2h2v-2h1v2h1v2h5v-2h1v1h2v-1h4v1h2v1h2v-2h3v2h1v-1h1v1h5v-2h1v2h1v-1h3v-1h1v2h2v-1h2v1h2v-2h2v2h4v-1h2v1h1v-1h2v-1h1v2h2v-2h2v2h1v-1h3v-1h1v2h3v-2h5v1h1v1h8v-2h1v1h1v1h1v-1h3v1h1v-1h3v-1h1v2h1v-1h1v1h1v-1h2v-1h1v1h4v1h2v-1h1v1h8v-1h2v1h1v-1h3v1h1v-1h2v-1h2v2h1v-2h2v1h2v1h1v-2h1v2h2v-2h1v2h2v-2h3v2h1v-2h1v1h2v1h2v-2h1v1h3v-1h2v2h1v-1h1v-1h1v1h1v1h1v-2h1v2h3v-1h1v-1h3v1h1v-1h1v1h4v-1h1v1h2v1h3v-1h1v-1h1v2h2v-2h1v2h1v-1h5v1h3v-1h2v1h1v-1h1v1h1v-1h2v1h1v4h-2v1h-3v-1h-1v1h-1v-1h-2v1h-1v1h-1v-2h-1v1h-1v-1h-3v1h-3v-1h-2v3h-1v-1h-2v-2h-2v1h-1v1h-2v-2h-4v1h-1v-1h-3v1h-1v-1h-1v2h-1v-1h-1v-1h-4v1h-2v-1h-5v2h-3v-1h-2v1h-1v-1h-4v1h-2v-2h-1v2h-1v-2h-2v2h-3v-2h-3v1h-1v1h-3v-1h-1v-1h-1v2h-1v-1h-1v-1h-1v1h-2v5h-1v-4h-1v-1h-1v1h-1v-2h-1v1h-1v1h-2v-1h-1v-1h-6v2h-1v-2h-1v2h-1v-1h-1v-1h-1v6h-1v-5h-1v1h-1v-2h-1v2h-1v-1h-1v-1h-2v2h-1v-1h-1v1h-3v-2h-4v2h-1v-2h-7v2h-2v-1h-1v-1h-2v1h-2v-1h-3v1h-2v1h-1v-2h-1v2h-1v-2h-2v1h-1v1h-2v-1h-1v1h-1v-1h-4v-1h-1v1h-1v1h-2v-2h-1v2h-1v-2h-1v1h-2v1h-1v-2h-4v2h-1v-2h-1v2h-2v-2h-3v1h-1v2h-1v-3h-5v1h-3v-1h-4v2h-1v-2h-2v1h-1v-1h-1v1h-1v-1h-2v2h-1v-2h-6v2h-2v-2h-2v1h-1v-1h-1v2h-2v3h-1v-5h-1v1h-1v1h-1v-1h-1v-1h-1v1h-1v-1h-1v1h-4v-1h-2v1h-2v1h-1v-2h-2v1h-2v-1h-1v2h-1v-2h-4v1h-1v4h-1v-5h-1v2h-2v-1h-2v-1h-1v1h-1v1h-1v-2h-1v5h-1v-3h-1v-1h-2v-1h-1v6h-1v-5h-2v-1h-2v1h-1v1h-3v-1h-2v1h-2v-1h-2v1h-1v-1h-1v-1h-1v1h-1v-1h-1v2h-1v-1h-1v-1h-1v4h-1v-3h-2v1h-8v-1h-4v4h-1v-3h-2v-1h-1v-1h-1v1h-2v1h-5v1h-1v-1h-1v-1h-1v-1h-1v2h-2v-2h-12v2h-1v-1h-3v-1h-1v6h-1v-6h-4v4h-1v-4h-1v1h-1v1h-1v-1h-2v-1h-1v1h-5v1h-1v-2h-1v1h-1v1h-1v-1h-3v1h-2v-2h-5v1h-1v-1h-1v2h-2v-1h-1v-1h-1v2h-2v-2h-1v1h-1v-1h-1v2h-1v-2h-1v2h-3v-2h-2v1h-4v-1h-2v1h-2v-1h-1v4h-1v-2h-1v-2h-4v1h-1v4h-1v-3h-2v-1h-2v1h-1v-2h-2v1h-1v-1h-1v2h-3v-2h-2v1h-1v-1h-5v1h-2v-1h-1v1h-1v-1h-7v1h-2v1h-6v-2h-1v6h-1v-6h-1v1h-1v1h-1v-2h-1v2h-3v-2h-1v1h-1v1h-3v-2h-4v3h-1v-3h-4v2h-1v-1h-1v-1h-2v2h-1v-2h-2v1h-2v-1h-2v1h-1v-1h-2v3h-1v-1h-1v-1h-1v-1h-1v2h-1v-2h-1v1h-1v-1h-3v2h-1v-1h-1v-1h-4v2h-1v-2h-4v1h-1v-1h-1v2h-2v-1h-2v2h-1v-3h-4v1h-4v1h-3v-1h-1v-1h-4v2h-1v-2h-1v3h-1v-2h-4v-1h-2v1h-10v-1h-1v2h-1v-2h-1v1h-1v-1h-1v2h-1v-1h-1v-1h-2v1h-1v-1h-1v1h-2v1h-1v-2h-1v2h-1v-1h-1v1h-1v-1h-1v-1h-1v1h-1v1h-1v-2h-1v2h-1v-2h-2v2h-1v-2h-1v1h-1v-1h-1v1h-1v-1h-2v1h-11v-1h-2v2h-4v-1h-2v1h-2v-2h-1v2h-1v4h-1v-4h-1v-2h-1v5h-1v-5h-1v2h-2v-2h-1v1h-1v1h-1v-1h-1v-1h-4v2h-1v-1h-1v1h-2v-1h-1v-1h-3v2h-1v-1h-2v1h-3v-1h-2v-1h-2v1h-1v-1h-1v1h-2v-1h-1v2h-3v-1h-1v-1h-2v1h-1v-1h-1v1h-1v1h-2v-2h-1v1h-1v-1h-1v1h-2v1h-5v-2h-1v1h-3v1h-2v-2h-2v2h-3v-2h-1v1h-2v-1h-1v2h-1v-2h-2v2h-1v-2h-4v2h-1v-1h-2v-1h-2v2h-2v-1h-1v-1h-1v2h-1v-1h-2v-1h-2v2h-2v-2h-4v2h-1v-1h-1v1h-1v-2h-5v1h-6v1h-5v-2h-2v1h-1v4h-1v-3h-1v-2h-1v1h-1v1h-2v-2h-1v1h-1v-1h-2v2h-3v-1h-4v-1h-1v2h-1v-2h-2v2h-4v-2h-1v1h-1v-1h-1v1h-1v1h-1v-1h-2v1h-2v-2h-4v1h-2v-1h-2v1h-1v1h-1v-2h-1v2h-1v-2h-2v1h-1v-1h-1v1h-1v1h-1v-1h-2v-1h-2v1h-1v1h-1v-2h-2v2h-3v-1h-2v1h-1v-2h-3v2h-2v-2h-3v2h-1v-2h-2v2h-4v-1h-1v1h-4v-2h-2v1h-1v1h-1v-2h-1v1h-1v-1h-1v2h-2v-2h-2v2h-1v-1h-1v-1h-1v2h-1v-1h-2v5h-1v-4h-3v-2h-1v1h-1v1h-1v2h-1v-3h-1v1h-1v-1h-2v-1h-2v1h-1v-1h-2v2h-1v-2h-1v3h-1v-2h-1v-1h-1v2h-1v-2h-1v1h-1v1h-2v-2h-4v2h-2v-1h-1v1h-1v-2h-1v2h-1v-2h-1v2h-3v-2h-1v1h-3v-1h-2v1h-1v1h-1v-2h-2v1h-3v-1h-4v2h-1v-1h-1v-1h-1v2h-1v-2h-3v1h-1v-1h-1v1h-3v1h-2v-2h-2v1h-1v1h-1v-1h-4v1h-1v-2h-1v2h-1v-2h-1v2h-1v-2h-1v1h-2v-1h-1v2h-1v-2h-1v1h-1v1h-2v-2h-1v1h-1v1h-2v1h-1v-1h-1v-1h-1v-1h-2v2h-2v-1h-2v-1h-2v1h-1v-1h-2v1h-3v-1h-2v1h-1v-1h-3v2h-5v-1h-6v1h-2v-1h-1v1h-4v-1h-3v-1h-1v1h-4v-1h-2v1h-5v-1h-2v1h-1v1h-2v-2h-2v1h-2v-1h-2v1h-1v-1h-1v2h-1v-1h-4v-1h-1v2h-3v-1h-3v1h-1v-1h-2v-1h-1v1h-1v-1h-1v1h-1v-1h-2v1h-2v-1h-1v1h-4v1h-1v-2h-1v1h-6v-1h-1v1h-4v1h-4v-1h-1v1h-1v-1h-4v1h-1v-1h-1v5h-1v-4h-3v-2h-2v2h-1v-2h-1v2h-1v-2h-1v2h-4v-1h-1v-1h-2v1h-1v4h-1v-4h-1v-1h-2v5h-1v-5h-2v2h-1v-2h-1v1h-1v1h-1v-2h-4v2h-1v-2h-2v1h-1v-1h-2v2h-2v-1h-2v1h-1v3h-1v-3h-1v-1h-1v-1h-1v1h-4v1h-2v-2h-2v2h-5v-1h-1v1h-1v-2h-1v1h-2v1h-1v-1h-2v1h-1v-2h-1v1h-1v-1h-5v1h-1v1h-6v-1h-2v1h-1z"/>
<path d="M277,880h1v-2h1v1h1v1h3v-2h2v2h1v-2h2v2h1v-2h1v2h1v-2h1v2h1v-2h2v-3h1v3h3v1h1v1h3v-2h2v2h1v-1h1v-1h3v2h1v-2h2v1h1v-1h2v2h3v-1h4v-1h1v2h2v-5h1v4h1v1h3v-2h2v1h5v-1h1v2h1v-1h1v1h1v-1h1v-1h1v2h1v-2h1v2h1v-2h3v2h1v-1h1v-1h4v2h1v-1h3v1h2v-1h1v-1h2v2h2v-2h2v2h1v-1h1v-1h3v1h3v1h1v-2h2v1h1v-1h2v1h1v1h1v-2h1v1h1v-1h1v2h1v-1h1v1h3v-2h2v1h1v1h1v-2h3v2h2v-2h1v2h1v-1h1v1h1v-1h1v-1h1v2h2v-2h1v2h2v-2h1v1h4v-1h2v1h2v-1h1v2h1v-1h2v1h2v-1h1v-1h1v1h1v1h1v-1h1v-1h4v1h1v1h1v-2h1v1h1v1h1v-2h3v1h4v-1h1v2h1v-1h1v1h2v-2h2v2h1v-1h1v-1h1v1h2v1h3v-1h1v-1h1v2h1v-2h3v1h1v1h1v-1h2v1h1v-1h2v-1h1v2h1v-2h1v-1h1v1h3v1h3v1h1v-1h2v1h1v-1h1v-1h2v1h1v-1h4v2h1v-2h2v1h1v-1h1v1h2v-1h1v1h5v1h6v-5h1v4h1v1h1v-2h1v2h4v-2h1v2h3v-2h1v1h1v1h1v-2h1v2h4v-2h1v1h5v-2h1v3h1v-2h1v1h1v1h1v-1h2v-1h1v2h2v-1h3v-1h1v1h2v1h1v-2h1v1h1v-1h2v2h5v-2h2v2h1v-2h1v2h4v-1h1v1h2v-2h2v2h1v-1h3v-1h2v-1h1v2h1v-1h3v2h2v-1h4v1h1v-1h1v1h1v-1h5v-1h1v1h4v-1h8v2h1v-1h3v1h1v-3h1v3h1v-1h5v1h1v-1h3v-1h1v2h2v-1h2v-1h1v1h2v-1h4v2h2v-3h1v3h4v-2h1v1h1v1h3v-1h2v-1h1v2h2v-1h3v1h1v-1h1v1h3v-1h1v-2h1v3h4v-2h1v2h1v-2h2v1h1v-1h1v2h3v-1h1v1h1v-1h1v1h1v-2h1v2h5v-2h2v1h1v1h1v-1h1v-1h4v1h1v1h1v-2h1v1h1v-1h1v1h4v-1h6v1h3v-1h1v1h1v-1h1v1h1v1h1v-1h1v1h1v-2h1v1h1v-1h1v1h1v1h1v-1h1v-1h1v2h1v-1h6v1h1v-2h1v2h3v-2h1v2h1v-2h1v1h1v1h2v-1h2v-2h1v2h2v1h1v-1h4v-1h2v1h1v1h2v-2h2v2h2v-2h1v2h4v-1h2v-1h4v2h2v-2h3v1h1v-2h1v1h4v2h3v-2h2v1h1v1h1v-1h1v1h1v-1h3v1h1v-1h2v-1h2v2h1v-2h1v-1h1v3h1v-1h1v-1h2v2h1v-2h1v2h1v-1h1v1h1v-1h1v-1h1v1h1v1h1v-2h2v1h1v-1h1v1h1v1h2v-2h1v1h1v1h5v-2h1v2h3v-2h2v1h2v1h1v-1h2v1h1v-2h4v2h1v-2h1v1h3v-2h1v2h1v1h3v-2h1v1h2v-1h1v1h1v1h3v-1h5v1h4v-1h1v-1h2v2h1v-1h1v-1h2v2h1v-3h1v2h1v-1h2v1h1v1h1v-2h1v2h1v-1h1v1h3v-2h1v1h1v-1h2v2h1v-1h3v1h3v-1h1v-1h1v2h1v-3h1v3h1v-1h1v1h1v-1h4v1h1v-1h2v-1h1v2h2v-2h2v2h2v-1h1v1h1v-1h2v-1h1v2h1v-2h1v2h2v-1h1v1h3v-1h1v1h2v-2h2v2h2v-1h3v-1h1v-1h2v1h2v-2h1v3h1v-3h1v2h1v1h1v-2h3v-1h1v1h1v1h2v2h1v-3h2v3h1v-2h3v2h2v-2h2v1h3v-1h1v-1h1v2h1v-2h2v2h1v1h1v-1h2v1h1v-2h4v2h2v-1h2v1h1v-2h1v2h1v-1h2v1h1v-1h1v-1h2v1h1v1h1v-1h1v1h1v-1h1v1h1v-1h2v1h2v-1h2v1h1v-2h2v2h3v-3h1v2h3v-1h1v-2h1v4h1v-2h2v2h5v-1h2v1h1v-1h1v1h3v-1h1v1h2v-2h5v2h2v-1h2v1h2v-1h5v-1h1v2h2v-1h1v1h2v-1h1v1h1v-1h1v-1h3v-1h1v2h4v-1h3v2h1v-1h1v-1h1v1h2v-1h2v2h1v-2h2v2h1v-2h1v2h1v-1h4v1h3v-1h1v-4h1v5h1v-1h1v-1h1v2h2v-2h2v1h2v-1h1v1h1v-1h1v1h1v-1h1v1h1v1h1v-2h6v2h1v-2h1v1h1v1h2v-1h1v-1h3v2h1v-1h1v-1h1v2h2v-2h2v1h1v1h1v-2h1v2h3v-1h1v1h1v-2h1v2h2v-3h2v3h6v-1h1v1h4v-2h1v1h2v-1h1v2h2v-1h1v1h2v-2h1v1h2v-1h1v2h2v-1h1v-1h2v1h1v1h1v-2h1v2h1v-1h1v1h1v-1h1v-1h2v1h1v1h2v-2h1v1h1v1h1v-1h3v1h3v-1h3v1h2v-2h2v2h1v-3h2v2h1v1h4v-2h1v2h1v-2h2v1h1v-1h1v1h2v-1h3v2h1v-1h3v-1h1v2h2v-1h1v-1h4v2h2v-2h3v2h3v-2h2v1h2v-1h4v1h1v-1h1v1h1v-1h2v1h4v-1h1v1h1v1h1v-1h1v1h1v-2h1v2h1v-1h2v1h1v-2h3v2h1v-2h1v1h1v-1h1v2h4v-2h2v1h1v1h1v-2h3v2h1v-2h1v1h1v-1h1v1h2v-2h1v2h1v-1h7v2h1v-2h1v1h2v-1h1v2h1v-1h1v1h1v-4h1v4h3v-2h2v2h1v-1h1v1h1v-1h1v-1h2v1h4v-1h2v1h2v1h3v-5h2v3h1v2h1v-2h1v1h1v-1h1v2h4v-1h1v-1h1v2h1v-2h1v2h1v-1h1v-1h1v2h3v-2h2v2h2v-2h1v1h2v-1h1v2h1v-1h1v1h9v-3h1v2h1v6h-3v1h-3v-2h-1v1h-2v-1h-1v1h-1v-1h-3v2h-1v-1h-1v-1h-3v2h-2v-1h-2v-1h-1v2h-3v-1h-1v-1h-1v1h-2v1h-1v-2h-1v2h-1v-2h-1v1h-1v-1h-2v1h-1v1h-1v-2h-1v2h-3v-2h-1v2h-4v2h-1v-3h-2v-1h-2v2h-5v-1h-5v-1h-1v2h-2v-1h-1v-1h-2v2h-2v-2h-1v2h-1v-1h-1v-1h-1v2h-1v-2h-1v1h-2v-1h-1v2h-1v-2h-1v1h-1v1h-3v-1h-1v1h-1v-2h-1v2h-1v-1h-1v1h-1v-2h-4v2h-1v-1h-1v-1h-1v2h-2v-2h-1v2h-2v-1h-1v-1h-2v1h-1v-1h-1v1h-3v1h-2v-2h-5v1h-1v-1h-2v1h-1v1h-1v-1h-2v1h-3v-2h-1v1h-1v1h-1v-1h-4v1h-1v-1h-2v1h-2v-2h-1v1h-4v-1h-2v1h-2v-1h-1v1h-2v1h-1v-1h-1v-1h-1v1h-1v1h-1v-1h-1v1h-1v-2h-1v2h-1v-2h-1v2h-1v-1h-4v1h-1v-1h-1v-1h-1v1h-1v1h-1v-1h-3v2h-1v-3h-1v3h-1v-1h-1v-1h-2v-1h-2v2h-2v-2h-2v1h-1v-1h-1v2h-1v1h-1v-3h-2v5h-1v-5h-1v1h-1v1h-1v-1h-2v-1h-1v2h-1v-1h-2v-1h-1v1h-2v-1h-2v2h-1v-2h-2v2h-3v-2h-1v1h-2v-1h-1v1h-3v1h-1v-2h-2v2h-3v2h-1v2h-1v-5h-1v-1h-1v2h-1v-1h-2v-1h-5v1h-2v-1h-2v2h-2v-2h-1v2h-2v-2h-2v1h-1v1h-1v-2h-1v2h-1v-1h-1v1h-1v-2h-1v3h-1v-3h-2v1h-3v-1h-1v2h-2v-1h-1v-1h-9v2h-1v-1h-1v1h-4v-1h-3v1h-2v-2h-1v2h-1v-1h-5v1h-1v-1h-6v-1h-1v1h-2v-1h-2v2h-1v-1h-1v1h-1v-2h-1v1h-1v-1h-2v3h-1v-2h-1v1h-1v-2h-1v1h-1v-1h-2v2h-4v-2h-2v2h-2v-2h-2v1h-1v1h-1v-1h-2v-1h-4v2h-2v-2h-8v2h-1v-1h-1v3h-1v-3h-2v1h-2v-1h-3v-1h-2v1h-1v1h-1v-1h-2v-1h-1v1h-1v1h-4v-1h-1v-1h-2v2h-1v-2h-1v2h-1v-2h-2v1h-2v1h-2v-1h-1v1h-1v-2h-1v1h-1v-1h-1v1h-1v1h-2v-2h-1v2h-1v-1h-1v1h-1v-2h-1v2h-2v-1h-1v1h-3v-1h-1v-1h-1v1h-5v1h-2v-2h-1v3h-1v-1h-1v-1h-1v-1h-2v2h-1v-1h-2v2h-1v-2h-2v1h-1v1h-1v-2h-1v1h-1v1h-1v1h-1v-2h-3v-1h-3v-1h-1v1h-1v-1h-2v5h-1v-2h-1v-2h-4v-1h-1v2h-1v-2h-1v2h-1v-1h-2v1h-1v4h-1v-5h-1v-1h-1v1h-1v-1h-3v1h-4v-1h-1v2h-2v-2h-2v1h-3v-1h-1v1h-1v2h-1v-2h-1v-1h-1v1h-1v-1h-1v1h-3v-1h-1v2h-1v-2h-1v2h-1v-2h-1v1h-5v-1h-6v2h-1v-1h-1v2h-2v-3h-1v2h-2v-2h-1v2h-1v-1h-1v-1h-2v2h-1v-1h-3v-1h-3v1h-1v1h-2v-2h-2v1h-2v1h-1v-2h-5v1h-3v-1h-3v2h-1v-2h-1v1h-1v1h-2v-1h-1v1h-4v-1h-7v-1h-1v3h-1v-3h-3v1h-2v-1h-2v1h-1v1h-1v1h-1v-2h-3v1h-2v-2h-1v2h-2v-2h-1v1h-2v4h-1v-3h-1v-1h-2v1h-3v-2h-2v1h-3v-1h-1v3h-1v-2h-1v1h-1v-1h-3v1h-1v-1h-1v-1h-2v1h-1v1h-2v1h-1v-2h-3v1h-2v-1h-1v-1h-3v1h-3v-1h-3v1h-3v-1h-5v2h-1v-2h-1v2h-1v-2h-2v2h-1v-2h-1v2h-1v-1h-1v-1h-2v2h-2v-1h-1v-1h-2v3h-1v-1h-2v-2h-7v1h-1v1h-1v-1h-2v1h-1v-2h-2v2h-2v-2h-2v1h-4v1h-3v-1h-5v-1h-6v2h-1v-2h-2v1h-2v1h-2v-1h-1v-1h-1v1h-1v-1h-2v2h-1v-2h-2v4h-1v-3h-3v-1h-1v1h-1v1h-4v-1h-4v1h-1v-1h-1v-1h-1v5h-1v-5h-3v1h-1v4h-1v-3h-2v-2h-1v2h-1v4h-1v-4h-1v-1h-1v-1h-2v4h-1v-2h-1v-2h-1v1h-1v-1h-1v2h-1v-2h-1v2h-1v-1h-1v-1h-1v2h-2v-1h-1v1h-1v-2h-2v2h-1v-1h-1v-1h-1v2h-1v-1h-1v1h-1v-1h-1v3h-1v-4h-1v2h-2v-2h-1v2h-1v-2h-2v1h-3v-1h-2v2h-1v-1h-1v1h-1v-2h-9v2h-1v-2h-1v2h-1v-1h-3v-1h-2v4h-1v-2h-1v-2h-1v1h-2v1h-1v-2h-2v1h-2v-1h-1v2h-2v-2h-1v2h-2v-1h-1v1h-1v-2h-1v2h-1v-2h-1v2h-3v-1h-2v3h-1v-3h-1v1h-2v-1h-1v1h-1v-2h-1v1h-2v1h-1v-1h-1v1h-1v-1h-4v2h-1v-3h-5v1h-1v1h-1v-2h-1v1h-2v-1h-1v2h-3v-1h-1v1h-1v-1h-1v-1h-1v2h-1v-2h-1v1h-4v-1h-3v2h-1v-1h-3v2h-1v-3h-1v1h-1v-1h-1v2h-1v-2h-1v2h-1v-2h-1v1h-2v1h-4v-1h-2v-1h-1v1h-4v-1h-1v1h-3v1h-1v1h-1v-2h-1v1h-1v-1h-2v1h-1v1h-1v-3h-2v1h-2v-1h-1v2h-1v-2h-2v1h-1v-1h-1v2h-2v-2h-3v2h-2v-2h-3v2h-2v-2h-3v1h-1v-1h-3v1h-1v1h-1v-1h-4v-1h-1v2h-2v-1h-1v-1h-1v1h-1v1h-1v-2h-5v1h-1v-1h-1v2h-1v-2h-3v1h-2v-1h-2v1h-1v-1h-1v2h-1v1h-1v-1h-1v1h-1v-3h-2v2h-2v-2h-1v1h-1v1h-1v-2h-2v1h-3v-1h-2v2h-1v-1h-2v-1h-4v1h-1v-1h-1v2h-1v-2h-1v6h-1v-6h-1v1h-1v2h-1v-1h-1v-1h-3v1h-1v-2h-1v2h-2v1h-2v-2h-1v-1h-2v1h-1v-1h-3v2h-1v-1h-1v1h-2v-2h-2v2h-1v-1h-1v-1h-2v1h-1v-1h-2v2h-1v-2h-5v2h-1v-2h-1v2h-1v-1h-1v-1h-2v2h-1v-1h-2v-1h-2v2h-3v-2h-1v1h-4v-1h-1v2h-3v-1h-1v1h-3v-2h-1v1h-1v1h-1v-1h-2v1h-1v-1h-5v1h-1v-1h-1v-1h-1v1h-2v-1h-1v2h-1v-1h-1v1h-1v-1h-2v2h-1v-2h-1v-1h-2v2h-1v-2h-1v1h-1v1h-2v-2h-1v1h-4v-1h-1v1h-1v1h-4v4h-1v-4h-1v-1h-2v1h-2v-1h-1v-1h-1v2h-1v-1h-4v1h-1v-1h-1v-1h-1v1h-1v-1h-3v1h-1v1h-1v-1h-1v1h-1v-1h-8v-1h-2v2h-1v-1h-1v1h-1z"/>
<path d="M277,910h3v-1h1v1h1v-1h5v-1h1v1h2v-1h1v1h3v-1h3v1h1v1h2v-2h2v2h1v-2h2v1h3v-1h4v1h2v-1h4v2h5v-2h4v2h3v-1h1v1h2v-2h2v2h1v-1h4v1h1v-1h1v1h1v-1h4v-1h1v2h1v-2h1v2h2v-2h2v1h4v1h1v-2h2v2h4v-2h1v2h1v-2h1v1h3v1h1v-1h1v1h3v-2h1v2h4v-2h2v1h1v-1h3v2h1v-2h1v1h5v1h4v-2h1v1h4v1h1v-2h1v2h2v-1h3v1h3v-2h1v2h2v-3h1v2h2v1h4v-1h1v-1h1v1h2v1h3v-2h1v2h2v-2h1v1h1v-1h1v2h1v-2h1v2h1v-2h3v2h3v-1h4v-1h2v-2h1v3h2v-1h1v1h2v-1h3v1h1v-1h2v2h2v-1h1v-1h1v-2h1v2h2v1h4v1h2v-1h1v1h1v-1h3v1h2v-1h1v-1h1v1h1v-1h1v1h2v1h1v-1h1v1h1v-1h1v-1h1v1h2v1h1v-1h1v-1h3v1h1v-3h1v2h2v1h2v-1h1v1h1v1h4v-2h1v1h1v1h2v-1h3v1h1v-2h1v1h1v1h3v-1h2v1h1v-1h1v1h2v-1h2v-1h1v2h2v-1h1v-1h3v2h1v-2h1v2h3v-2h1v2h1v-1h1v-1h1v1h2v1h5v-2h2v1h1v-1h2v1h1v1h1v-1h1v1h2v-1h1v1h1v-2h3v2h2v-1h1v1h1v-1h1v-1h1v1h3v-1h2v1h2v-1h1v1h1v1h1v-1h3v1h1v-2h3v1h2v1h1v-1h1v-1h1v1h2v-1h1v2h2v-2h1v1h1v1h1v-2h2v1h3v-1h1v2h4v-2h2v2h2v-2h1v2h3v-1h1v-1h1v2h2v-1h3v1h3v-1h1v1h1v-2h1v2h1v-2h1v2h1v-2h1v2h4v-1h3v-1h1v1h2v-1h1v2h2v-2h6v2h1v-1h3v1h2v-2h1v1h1v-1h4v2h1v-2h3v1h2v1h1v-1h1v1h3v-2h1v2h1v-1h2v-1h2v2h1v-2h2v2h1v-2h3v1h2v-1h2v2h1v-2h2v2h1v-1h3v-1h2v2h5v-2h1v2h1v-2h1v1h2v1h2v-2h1v1h1v-1h4v2h2v-2h1v1h3v-1h1v2h2v-2h2v1h3v1h1v-2h1v2h2v-1h3v1h1v-2h1v2h3v-2h1v1h1v1h3v-1h6v1h1v-2h1v2h1v-1h1v-1h1v2h1v-1h1v1h1v-2h2v1h4v1h4v-1h1v-1h2v2h2v-1h1v-1h1v2h2v-2h1v2h3v-2h1v1h1v-3h1v3h1v-1h3v1h1v1h1v-2h1v2h3v-1h1v-1h1v2h6v-2h1v1h2v1h1v-1h1v1h2v-2h1v2h2v-1h1v1h4v-1h2v-1h2v2h5v-2h2v1h1v1h1v-2h2v2h2v-1h1v-1h1v1h1v1h6v-1h2v-1h1v1h3v1h3v-2h2v2h1v-1h3v-1h1v1h1v1h1v-1h1v1h1v-2h1v1h1v-1h1v1h2v1h2v-1h1v-1h1v2h2v-2h2v2h2v-2h1v2h4v-1h1v1h1v-2h1v2h6v-1h1v1h1v-1h1v1h4v-2h1v2h1v-2h1v1h1v-1h3v2h2v-2h1v2h3v-1h1v1h1v-1h2v1h1v-1h1v-1h2v1h3v-1h2v2h1v-1h1v1h1v-1h1v1h3v-1h3v-1h2v1h1v1h1v-1h1v-1h3v1h1v-1h1v1h4v-1h1v1h2v1h1v-2h3v1h1v-1h3v2h2v-2h3v1h1v1h2v-1h4v1h1v-1h1v1h3v-1h1v1h2v-2h1v2h1v-2h1v2h4v-1h2v-1h1v2h1v-2h1v1h2v-1h1v2h2v-1h2v1h2v-1h2v1h2v-2h1v2h2v-2h3v2h3v-2h1v1h1v1h1v-2h1v2h2v-2h1v2h1v-2h2v2h5v-2h1v2h2v-2h1v1h1v1h2v-2h1v1h1v1h2v-1h1v1h1v-2h1v1h1v-1h2v2h1v-1h1v1h1v-1h2v-1h3v2h1v-1h3v-1h2v1h1v-1h5v2h1v-1h2v-1h1v1h2v1h5v-2h2v2h1v-1h2v-1h1v2h1v-1h1v1h3v-2h2v1h2v1h5v-2h1v1h1v-1h1v1h1v1h1v-2h3v2h2v-2h2v1h3v-1h2v2h5v-2h4v1h1v-1h1v1h5v1h5v-4h1v2h3v2h2v-2h2v2h2v-2h1v2h1v-1h3v-1h2v2h4v-2h1v2h4v-1h1v1h3v-2h2v1h2v-1h3v1h1v-1h2v1h2v-1h1v2h2v-2h1v2h3v-2h1v2h5v-1h1v-3h1v4h2v-1h3v-1h1v2h1v-1h1v1h1v-2h1v2h2v-2h1v1h2v-1h1v2h1v-1h1v1h1v-2h1v1h2v-1h1v1h3v-1h1v1h2v-1h1v1h1v-1h1v2h1v-2h1v1h6v1h3v-5h1v5h1v-1h1v-1h1v1h1v-1h1v2h1v-1h2v-1h3v2h1v-1h1v-1h1v1h1v1h2v-1h1v1h3v-1h2v1h1v-2h2v2h1v-2h4v1h1v-1h1v1h1v1h3v-2h1v2h4v-1h1v1h2v-1h1v-1h1v2h1v-2h1v2h1v-2h1v1h1v-1h1v2h6v-2h2v1h2v1h4v-1h1v1h2v-2h1v2h1v-2h1v2h1v-1h1v-1h1v2h1v-2h1v1h2v-1h1v2h1v-1h3v1h1v-1h1v1h1v-2h1v1h1v1h1v-2h1v1h1v-1h1v2h1v-2h1v8h-3v-1h-3v1h-1v-1h-1v-1h-1v2h-5v-1h-1v-1h-2v1h-1v1h-1v-1h-2v-1h-1v1h-3v1h-3v-1h-1v-1h-5v2h-2v-2h-2v1h-2v-1h-2v1h-2v-1h-1v1h-1v-1h-1v1h-3v1h-2v-2h-1v2h-3v-1h-2v-1h-1v2h-4v-2h-2v2h-1v-2h-1v1h-1v1h-2v-1h-2v1h-1v-1h-1v-1h-2v1h-2v1h-1v-2h-1v1h-1v-1h-1v2h-1v-1h-2v4h-1v-4h-4v-1h-2v2h-1v3h-1v-3h-1v-1h-2v-1h-2v1h-4v1h-4v-1h-2v1h-1v-1h-1v-1h-6v2h-1v-2h-3v1h-1v1h-1v-2h-1v1h-1v1h-1v-1h-1v-1h-1v1h-1v1h-2v-2h-1v2h-1v-2h-1v2h-3v-1h-1v-1h-1v2h-2v-2h-2v1h-1v-1h-1v1h-1v-1h-1v2h-1v-1h-1v-1h-2v1h-3v1h-1v-2h-1v2h-2v-1h-3v1h-2v-2h-3v1h-1v1h-1v-1h-4v-1h-1v1h-1v-1h-1v1h-2v1h-3v-2h-4v1h-2v1h-1v-2h-2v2h-1v-2h-2v2h-1v-2h-1v1h-1v-1h-1v1h-1v-1h-1v1h-1v1h-1v-1h-1v1h-1v-2h-2v2h-2v-1h-1v-1h-1v1h-4v1h-2v-1h-1v-1h-1v1h-1v1h-2v-1h-1v-1h-1v2h-1v2h-1v-4h-3v2h-1v-1h-2v-1h-1v2h-1v-2h-2v2h-1v-1h-4v1h-1v-2h-2v2h-1v-2h-1v2h-1v-2h-1v1h-1v-1h-2v2h-3v-2h-2v1h-3v1h-1v-2h-2v1h-2v-1h-1v2h-2v-1h-3v-1h-1v2h-2v-1h-1v1h-2v-1h-1v-1h-4v1h-4v-1h-1v1h-2v-1h-2v2h-1v-1h-1v1h-1v-1h-1v1h-1v-2h-1v1h-1v-1h-2v1h-1v1h-1v-1h-1v3h-1v-3h-2v-1h-2v1h-2v-1h-1v1h-1v-1h-1v4h-1v-2h-1v-2h-2v1h-2v-1h-1v1h-1v-1h-1v2h-1v1h-1v-3h-3v2h-1v-2h-1v1h-3v1h-2v-1h-2v1h-1v-1h-1v1h-1v-1h-5v1h-3v-2h-1v2h-2v-1h-1v-1h-4v1h-1v-1h-1v2h-2v-1h-4v1h-1v-1h-2v-1h-1v6h-1v-6h-1v1h-2v1h-1v-1h-2v5h-1v-6h-2v2h-1v-1h-1v-1h-1v2h-2v-1h-2v1h-1v-1h-1v1h-1v-1h-1v-1h-1v2h-1v-2h-2v1h-1v1h-2v-2h-1v2h-1v-2h-1v2h-1v-1h-1v-1h-1v2h-1v-1h-3v1h-2v-2h-1v2h-2v4h-1v-5h-1v1h-1v-2h-1v2h-2v-2h-1v2h-1v2h-1v-1h-1v-3h-2v1h-2v1h-1v-2h-4v2h-1v2h-1v-3h-1v1h-1v-2h-6v2h-1v-2h-2v2h-1v-2h-1v3h-1v-1h-1v-1h-1v-1h-2v3h-1v-3h-2v2h-1v-2h-1v2h-4v-1h-1v-1h-2v2h-2v-1h-4v-1h-1v2h-1v-1h-1v-1h-1v1h-1v3h-1v-2h-1v-2h-3v1h-2v1h-2v-1h-1v1h-1v-2h-2v2h-1v-1h-2v-1h-1v1h-1v-1h-1v1h-1v-1h-1v2h-6v-1h-1v1h-2v-2h-1v1h-2v1h-1v-2h-1v2h-1v2h-1v-4h-1v2h-1v-2h-1v1h-1v-1h-3v1h-7v-1h-2v2h-1v-1h-3v1h-1v-1h-1v3h-1v-4h-4v1h-1v-1h-2v1h-2v1h-1v-2h-1v1h-1v1h-1v-2h-3v2h-1v3h-1v-5h-3v1h-1v-1h-1v2h-1v-2h-3v1h-3v-1h-2v1h-1v1h-1v-1h-2v1h-2v-1h-1v-1h-1v1h-3v1h-1v-1h-4v-1h-2v2h-1v-1h-1v1h-2v-1h-4v-1h-4v2h-1v-1h-4v1h-1v-2h-1v1h-1v-1h-3v2h-1v-1h-3v1h-3v-1h-1v-1h-3v1h-3v-1h-1v1h-2v3h-1v-3h-1v1h-2v-1h-1v-1h-1v4h-1v-2h-1v-2h-5v1h-3v-1h-5v1h-1v-1h-3v2h-1v-1h-1v-1h-1v1h-3v1h-2v-2h-2v2h-1v-1h-2v-1h-1v2h-1v-1h-3v1h-1v-2h-2v1h-1v1h-1v-1h-1v1h-1v-1h-1v-1h-8v1h-1v-1h-3v2h-1v1h-1v-3h-2v2h-2v-2h-1v1h-1v-1h-5v1h-2v-1h-1v1h-3v1h-1v-2h-1v1h-1v-1h-2v2h-1v-2h-3v2h-1v-1h-1v-1h-6v1h-1v1h-3v-2h-1v2h-5v-1h-2v-1h-2v2h-2v-1h-2v4h-1v-5h-1v1h-1v-1h-8v2h-1v-1h-2v1h-1v-1h-1v1h-3v-2h-2v1h-1v1h-2v-1h-1v-1h-1v2h-1v3h-1v-4h-3v1h-4v-2h-1v1h-1v-1h-1v2h-1v-2h-3v1h-1v1h-1v-2h-1v2h-1v-2h-3v1h-1v-1h-1v2h-3v-2h-3v2h-1v-2h-2v2h-1v-2h-1v2h-1v-2h-1v1h-1v-1h-1v2h-3v-1h-2v1h-1v-1h-1v-1h-2v2h-3v-1h-1v-1h-1v1h-1v-1h-1v1h-2v1h-1v-1h-2v1h-3v-2h-1v2h-4v-2h-1v1h-1v-1h-4v1h-3v-1h-1v1h-1v-1h-8v1h-1v-1h-2v1h-1v1h-1v-2h-4v1h-2v1h-4v-2h-1v2h-2v-1h-1v1h-1v-2h-2v1h-2v1h-1v-2h-2v1h-2v-1h-1v2h-2v-1h-4v-1h-2v2h-5v-1h-2v1h-2v-2h-1v1h-2v1h-1v-1h-1v-1h-3v2h-3v-2h-3v2h-1v-2h-2v1h-2v1h-1v-2h-1v1h-2v-1h-1v1h-1v-1h-1v2h-1v-1h-3v-1h-2v1h-1v-1h-1v2h-1v-1h-1v-1h-3v1h-2v1h-4v-2h-3v1h-2v1h-1v-2h-1v2h-3v-2h-1v1h-1v1h-2v-1h-1v-1h-1v2h-1v-1h-1v-1h-1v2h-3v-2h-1v1h-1v-1h-1v1h-2v-1h-1v1h-2v-1h-2v1h-1v-1h-2v1h-2v-1h-1v1h-1v5h-1v-4h-1v-2h-2v4h-1v-2h-3v-1h-1v-1h-4v2h-2v-2h-2v1h-1v1h-2v-1h-2v1h-1v-2h-1v1h-1v1h-1v-2h-1v1h-1v1h-1v3h-1v-3h-1v-1h-1v1h-1v-1h-1v-1h-1v4h-1v-2h-4v-2h-1v2h-2v-1h-2v-1h-2v2h-1v-2h-1v1h-2v1h-1v-2h-2v2h-1v-1h-4v-1h-2v2h-1v-2h-2v1h-3v-1h-5v2h-1v4h-1v-6h-2v1h-1v1h-1v-2h-1v2h-1v-1h-1v-1h-1v1h-1v1h-1v-1h-1v-1h-1v1h-2v-1h-3z"/>
<path d="M520,206h1V228h-1zM676,205h1V223h-1zM896,204h1V224h-1zM929,212h1V225h-1zM1155,203h1V228h-1zM1193,212h1V224h-1zM1254,212h1V224h-1zM1268,206h1V218h-1zM448,235h1V250h-1zM532,230h1V272h-1zM556,236h1V257h-1zM638,239h1V253h-1zM776,240h1V254h-1zM862,235h1V250h-1zM1049,240h1V258h-1zM1065,237h1V255h-1zM1210,229h1V259h-1zM1243,240h1V255h-1zM708,267h1V284h-1zM942,267h1V285h-1zM1015,270h1V285h-1zM1044,267h1V280h-1zM1065,267h1V287h-1zM1182,257h1V298h-1zM1396,258h1V294h-1zM284,283h1V332h-1zM292,287h1V332h-1zM300,280h1V329h-1zM308,282h1V326h-1zM317,283h1V329h-1zM331,292h1V329h-1zM352,282h1V328h-1zM393,294h1V318h-1zM488,290h1V332h-1zM514,293h1V328h-1zM532,298h1V324h-1zM540,298h1V316h-1zM548,300h1V318h-1zM560,300h1V312h-1zM572,300h1V322h-1zM606,296h1V316h-1zM617,300h1V319h-1zM681,300h1V323h-1zM734,297h1V320h-1zM788,279h1V344h-1zM839,287h1V345h-1zM854,300h1V320h-1zM882,300h1V324h-1zM933,300h1V319h-1zM939,300h1V323h-1zM950,292h1V326h-1zM1045,277h1V332h-1zM1048,282h1V325h-1zM1054,278h1V323h-1zM1149,300h1V316h-1zM1057,277h1V355h-1zM337,334h1V343h-1zM604,390h1V406h-1zM982,448h1V465h-1zM1261,485h1V498h-1zM1235,485h1V495h-1zM1139,508h1V529h-1zM1391,535h1V563h-1zM1395,540h1V558h-1zM1399,537h1V562h-1zM337,567h1V590h-1zM385,575h1V594h-1zM397,575h1V590h-1zM636,570h1V586h-1zM815,567h1V586h-1zM908,567h1V585h-1zM1043,565h1V589h-1zM1337,572h1V587h-1zM1398,567h1V590h-1zM577,599h1V622h-1zM1045,598h1V622h-1zM294,629h1V650h-1zM390,632h1V649h-1zM418,630h1V650h-1zM1068,624h1V657h-1zM432,668h1V680h-1zM949,670h1V683h-1zM1367,646h1V694h-1zM1216,658h1V676h-1zM1141,662h1V682h-1zM524,686h1V715h-1zM623,690h1V713h-1zM653,687h1V713h-1zM689,686h1V715h-1zM996,692h1V711h-1zM1340,689h1V713h-1zM1141,693h1V715h-1zM1122,692h1V708h-1zM872,725h1V741h-1zM1117,813h1V828h-1zM631,861h1V898h-1zM671,874h1V891h-1zM1043,874h1V887h-1z"/>
</g>
<g font-family="Liberation Sans" font-size="13" fill="#000" text-anchor="middle">
<text x="352.5" y="178">02</text>
<text x="352.5" y="960">02</text>
<text x="427.5" y="178">04</text>
<text x="427.5" y="960">04</text>
<text x="502.5" y="178">06</text>
<text x="502.5" y="960">06</text>
<text x="577.5" y="178">08</text>
<text x="577.5" y="960">08</text>
<text x="652.5" y="178">10</text>
<text x="652.5" y="960">10</text>
<text x="727.5" y="178">12</text>
<text x="727.5" y="960">12</text>
<text x="802.5" y="178">14</text>
<text x="802.5" y="960">14</text>
<text x="876.5" y="178">16</text>
<text x="876.5" y="960">16</text>
<text x="951.5" y="178">18</text>
<text x="951.5" y="960">18</text>
<text x="1026.5" y="178">20</text>
<text x="1026.5" y="960">20</text>
<text x="1101.5" y="178">22</text>
<text x="1101.5" y="960">22</text>
<text x="1176.5" y="178">24</text>
<text x="1176.5" y="960">24</text>
<text x="1251.5" y="178">26</text>
<text x="1251.5" y="960">26</text>
<text x="1326.5" y="178">28</text>
<text x="1326.5" y="960">28</text>
</g>
<g font-family="Liberation Sans" font-size="13" fill="#000">
<text x="1407.5" y="219.9">12:30</text>
<text x="1407.5" y="250.9">13:00</text>
<text x="1407.5" y="280.9">13:30</text>
<text x="1407.5" y="310.9">14:00</text>
<text x="1407.5" y="341.9">14:30</text>
<text x="1407.5" y="371.9">15:00</text>
<text x="1407.5" y="401.9">15:30</text>
<text x="1407.5" y="432.9">16:00</text>
<text x="1407.5" y="462.9">16:30</text>
<text x="1407.5" y="492.9">17:00</text>
<text x="1407.5" y="523.9">17:30</text>
<text x="1407.5" y="553.9">18:00</text>
<text x="1407.5" y="583.9">18:30</text>
<text x="1407.5" y="614.9">19:00</text>
<text x="1407.5" y="644.9">19:30</text>
<text x="1407.5" y="674.9">20:00</text>
<text x="1407.5" y="705.9">20:30</text>
<text x="1407.5" y="735.9">21:00</text>
<text x="1407.5" y="766.9">21:30</text>
<text x="1407.5" y="796.9">22:00</text>
<text x="1407.5" y="826.9">22:30</text>
<text x="1407.5" y="857.9">23:00</text>
<text x="1407.5" y="887.9">23:30</text>
<text x="1407.5" y="917.9">24:00</text>
</g>
<text x="1405" y="192" font-family="Liberation Sans" font-size="18" fill="#ff0000">UTC</text>
<g font-family="Liberation Sans" font-size="16" fill="#000">
<text x="277" y="120.5">Département de géologie et de génie géologique</text>
<text x="277" y="139.5">Faculté des sciences et de génie</text>
<text x="277" y="158.5">Université Laval</text>
</g>
<text x="839.1" y="141.5" font-family="Liberation Sans" font-size="21.45" fill="#000" text-anchor="middle">Séismographe QCQ (CGC/GSC)</text>
<text x="839.5" y="1000.5" font-family="Liberation Sans" font-size="18" fill="#000" text-anchor="middle">Minutes écoulées</text>
<g>
<path d="M1300.8,114.2 H1332.8 V147.5 Q1332.8,150.8 1329.5,150.8 H1319.5 L1316.6,155 L1313.7,150.8 H1304 Q1300.8,150.8 1300.8,147.5 Z" fill="#d8261e" stroke="#9c1a14" stroke-width="0.9"/>
<path d="M1313.4,114.7 h6.2 V150.6 l-3,3.6 l-3.2,-3.6 Z" fill="#fcc200"/>
<rect x="1301.3" y="129.4" width="31" height="6.2" fill="#fcc200"/>
<g fill="#2a8fd8"><circle cx="1316.5" cy="122.6" r="1.9"/><circle cx="1306.9" cy="132.6" r="1.9"/><circle cx="1316.5" cy="132.6" r="1.9"/><circle cx="1325.9" cy="132.6" r="1.9"/><circle cx="1316.5" cy="143" r="1.9"/></g>
<g fill="#dcdcdc"><circle cx="1304.3" cy="118.7" r="1.9"/><circle cx="1309.9" cy="118.7" r="1.9"/><circle cx="1304.3" cy="125.4" r="1.9"/><circle cx="1309.9" cy="125.4" r="1.9"/>
<circle cx="1323" cy="118.7" r="1.9"/><circle cx="1328.6" cy="118.7" r="1.9"/><circle cx="1323" cy="125.4" r="1.9"/><circle cx="1328.6" cy="125.4" r="1.9"/>
<circle cx="1304.3" cy="139.4" r="1.9"/><circle cx="1309.9" cy="139.4" r="1.9"/><circle cx="1304.3" cy="146" r="1.9"/><circle cx="1309.9" cy="146" r="1.9"/>
<circle cx="1323" cy="139.4" r="1.9"/><circle cx="1328.6" cy="139.4" r="1.9"/><circle cx="1323" cy="146" r="1.9"/><circle cx="1328.6" cy="146" r="1.9"/></g>
<text x="1338.8" y="126.8" font-family="Liberation Sans" font-size="10.4" fill="#222" stroke="#222" stroke-width="0.15" textLength="62.2" lengthAdjust="spacingAndGlyphs">UNIVERSITÉ</text>
<text x="1338.8" y="145.9" font-family="Liberation Sans" font-size="23" fill="#151515" stroke="#151515" stroke-width="0.35" textLength="62.2" lengthAdjust="spacingAndGlyphs">LAVAL</text>
</g>

</svg>
</body></html>
